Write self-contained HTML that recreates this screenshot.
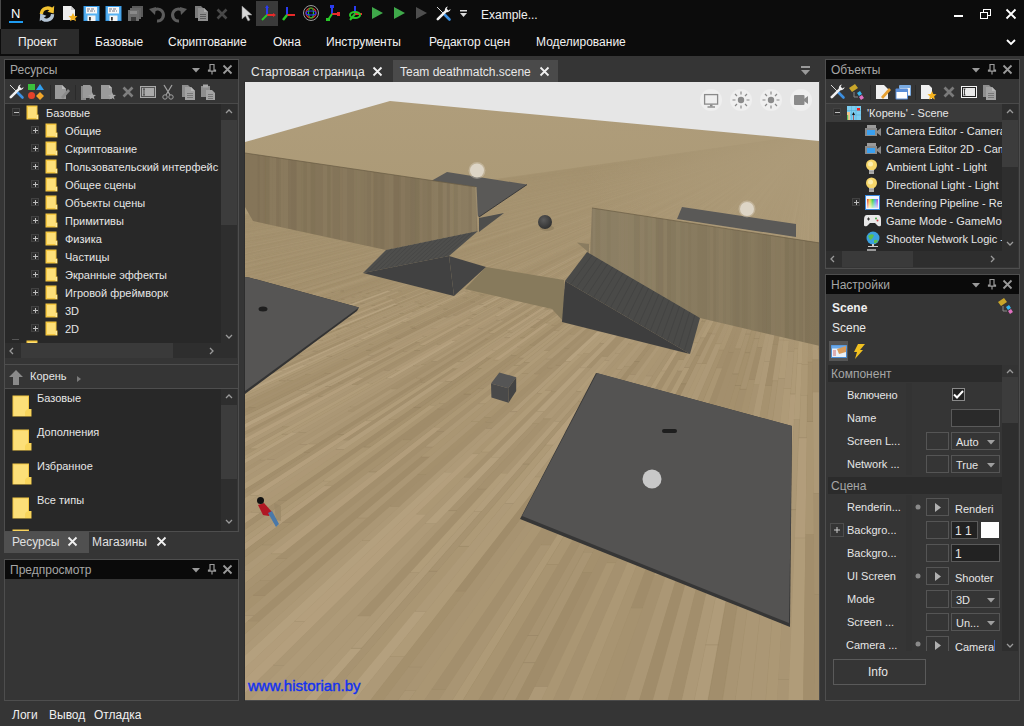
<!DOCTYPE html>
<html><head><meta charset="utf-8">
<style>
*{margin:0;padding:0;box-sizing:border-box}
html,body{width:1024px;height:726px;overflow:hidden;background:#353535;font-family:"Liberation Sans",sans-serif;font-size:11px;color:#e6e6e6}
.a{position:absolute}
.t{position:absolute;white-space:nowrap}
svg{overflow:visible}
</style></head><body>

<div class="a" style="left:0px;top:0px;width:1024px;height:56px;background:#0c0c0c;"></div>
<div class="a" style="left:0px;top:0px;width:1px;height:29px;background:#4a4a4a;"></div>
<div class="t" style="left:11px;top:5.00px;font-size:13px;line-height:17px;color:#ffffff;font-weight:normal;">N</div>
<div class="a" style="left:9px;top:21px;width:14px;height:2px;background:#1e9bf0;"></div>
<svg class="a" style="left:39px;top:5px" width="17" height="17" viewBox="0 0 17 17"><g transform="translate(-1,-1) scale(1.12)"><path d="M3 9 A5.5 5.5 0 0 1 13 6" stroke="#f2c230" stroke-width="3" fill="none"/><path d="M14.5 1.5 L14 8.5 L8.5 7 Z" fill="#f2c230"/><path d="M13 9 A5.5 5.5 0 0 1 3 12" stroke="#b4c4d4" stroke-width="3" fill="none"/><path d="M1.5 15.5 L2 8.5 L7.5 10.5 Z" fill="#b4c4d4"/></g></svg>
<svg class="a" style="left:61px;top:5px" width="17" height="17" viewBox="0 0 17 17"><path d="M2 1 H10 L14 5 V15 H2 Z" fill="#eeeeee"/><path d="M10 1 V5 H14" fill="#cccccc"/><path d="M12 8 L13.5 11 L16.5 11.3 L14.2 13.3 L15 16.3 L12 14.6 L9 16.3 L9.8 13.3 L7.5 11.3 L10.5 11 Z" fill="#f5b21e"/></svg>
<svg class="a" style="left:83px;top:5px" width="17" height="17" viewBox="0 0 17 17"><rect x="0.5" y="1" width="16" height="15" fill="#3a9be6"/><rect x="1.5" y="2" width="14" height="13" fill="#58b2f2"/><rect x="3" y="2" width="11" height="6.5" fill="#f6f6f6"/><path d="M4 4 H7 M8 4 H11 M4 6 H6 M7 6 H10 M11 6 H12" stroke="#667" stroke-width="0.9"/><rect x="4.5" y="10.5" width="8" height="5.5" fill="#f4f4f4"/><rect x="6" y="12" width="1.8" height="3.5" fill="#333"/></svg>
<svg class="a" style="left:105px;top:5px" width="17" height="17" viewBox="0 0 17 17"><rect x="0.5" y="1" width="16" height="15" fill="#3a9be6"/><rect x="1.5" y="2" width="14" height="13" fill="#58b2f2"/><rect x="3" y="2" width="11" height="6.5" fill="#f6f6f6"/><path d="M4 4 H7 M8 4 H11 M4 6 H6 M7 6 H10 M11 6 H12" stroke="#667" stroke-width="0.9"/><rect x="4.5" y="10.5" width="8" height="5.5" fill="#f4f4f4"/><rect x="6" y="12" width="1.8" height="3.5" fill="#333"/></svg>
<svg class="a" style="left:127px;top:5px" width="17" height="17" viewBox="0 0 17 17"><rect x="5" y="1" width="11" height="11" fill="#5a5a5a"/><rect x="3" y="3" width="11" height="11" fill="#666"/><rect x="1" y="5" width="11" height="11" fill="#6e6e6e"/><rect x="3" y="6" width="7" height="3" fill="#8a8a8a"/><rect x="4" y="12" width="5" height="4" fill="#3a3a3a"/></svg>
<svg class="a" style="left:149px;top:5px" width="17" height="17" viewBox="0 0 17 17"><path d="M4 6 A6 6 0 1 1 8 16" stroke="#5c5c5c" stroke-width="3" fill="none"/><path d="M0 4 L7 2 L6 10 Z" fill="#5c5c5c"/></svg>
<svg class="a" style="left:171px;top:5px" width="17" height="17" viewBox="0 0 17 17"><path d="M12 6 A6 6 0 1 0 8 16" stroke="#5c5c5c" stroke-width="3" fill="none"/><path d="M16 4 L9 2 L10 10 Z" fill="#5c5c5c"/></svg>
<svg class="a" style="left:194px;top:5px" width="17" height="17" viewBox="0 0 17 17"><path d="M1 1 H7 L10 4 V13 H1 Z" fill="#7a7a7a"/><path d="M4 3 H10 L14 7 V16 H4 Z" fill="#8e8e8e"/><path d="M10 3 V7 H14" fill="#a8a8a8"/><rect x="6" y="9" width="6" height="1" fill="#5a5a5a"/><rect x="6" y="11" width="6" height="1" fill="#5a5a5a"/><rect x="6" y="13" width="6" height="1" fill="#5a5a5a"/></svg>
<svg class="a" style="left:214px;top:6px" width="17" height="17" viewBox="0 0 17 17"><path d="M3.5 3.5 L12.5 12.5 M12.5 3.5 L3.5 12.5" stroke="#484848" stroke-width="2.6"/></svg>
<svg class="a" style="left:240px;top:5px" width="17" height="17" viewBox="0 0 17 17"><path d="M2 1 L2 14 L5.5 11 L8 16 L10 15 L7.5 10 L12 10 Z" fill="#d8d8d8" stroke="#888" stroke-width="0.5"/></svg>
<div class="a" style="left:256px;top:1px;width:22px;height:25px;background:#3a3a3a;"></div>
<svg class="a" style="left:259px;top:5px" width="17" height="17" viewBox="0 0 17 17"><path d="M8 2 V10" stroke="#2a3cf0" stroke-width="2"/><path d="M8 10 H15" stroke="#e82a2a" stroke-width="2"/><path d="M8 10 L3 15" stroke="#28c828" stroke-width="2"/><path d="M6 3 L8 0 L10 3 Z" fill="#2a3cf0"/><path d="M14 8 L17 10 L14 12Z" fill="#e82a2a"/></svg>
<svg class="a" style="left:281px;top:5px" width="17" height="17" viewBox="0 0 17 17"><path d="M6 2 V10" stroke="#2a3cf0" stroke-width="2"/><path d="M6 10 H14" stroke="#e82a2a" stroke-width="2"/><path d="M6 10 L2 15" stroke="#28c828" stroke-width="2.5"/></svg>
<svg class="a" style="left:303px;top:5px" width="17" height="17" viewBox="0 0 17 17"><circle cx="8" cy="8" r="7.5" fill="none" stroke="#9a9a9a" stroke-width="1"/><circle cx="8" cy="8" r="5" fill="none" stroke="#e02a2a" stroke-width="1.2"/><ellipse cx="8" cy="8" rx="2.5" ry="5" fill="none" stroke="#28c028" stroke-width="1.2"/><ellipse cx="8" cy="8" rx="5" ry="2" fill="none" stroke="#2a3cf0" stroke-width="1.2"/></svg>
<svg class="a" style="left:325px;top:5px" width="17" height="17" viewBox="0 0 17 17"><path d="M7 1 V9" stroke="#2a3cf0" stroke-width="2"/><path d="M7 9 H14" stroke="#e82a2a" stroke-width="2"/><path d="M7 9 L3 15" stroke="#28c828" stroke-width="2"/><rect x="5" y="0" width="4" height="3" fill="#2a3cf0"/><rect x="12" y="7" width="3" height="4" fill="#e82a2a"/><rect x="1" y="13" width="4" height="3" fill="#28c828"/></svg>
<svg class="a" style="left:347px;top:5px" width="17" height="17" viewBox="0 0 17 17"><path d="M8 1 V9" stroke="#2a3cf0" stroke-width="2"/><path d="M8 9 H15" stroke="#e82a2a" stroke-width="2"/><path d="M8 9 L3 15" stroke="#28c828" stroke-width="2"/><ellipse cx="8" cy="10" rx="5" ry="3" fill="none" stroke="#28c828" stroke-width="2"/></svg>
<svg class="a" style="left:369px;top:5px" width="17" height="17" viewBox="0 0 17 17"><path d="M3 2 L14 8 L3 14 Z" fill="#3fa94a"/></svg>
<svg class="a" style="left:391px;top:5px" width="17" height="17" viewBox="0 0 17 17"><path d="M3 2 L14 8 L3 14 Z" fill="#3fa94a"/></svg>
<svg class="a" style="left:413px;top:5px" width="17" height="17" viewBox="0 0 17 17"><path d="M3 2 L14 8 L3 14 Z" fill="#4e4e4e"/></svg>
<svg class="a" style="left:435px;top:5px" width="17" height="17" viewBox="0 0 17 17"><g transform="translate(1,1)"><path d="M1 1 L7.5 7.5" stroke="#d8d8d8" stroke-width="1"/><path d="M7.5 7.5 L13.5 13.5" stroke="#3c8fe0" stroke-width="2.6" stroke-linecap="round"/><path d="M10.2 4.8 L1.8 13.2" stroke="#f0f0f0" stroke-width="2.6" stroke-linecap="round"/><path d="M9 5 A3.6 3.6 0 0 1 12 0.4 L10.6 2.6 L12.4 4.4 L14.6 3 A3.6 3.6 0 0 1 10 6 Z" fill="#f0f0f0"/></g></svg>
<svg class="a" style="left:459px;top:9px" width="10" height="10" viewBox="0 0 10 10"><rect x="1" y="1" width="7" height="1.5" fill="#ddd"/><path d="M1 4 H8 L4.5 8 Z" fill="#ddd"/></svg>
<div class="t" style="left:481px;top:6.84px;font-size:12px;line-height:16px;color:#f0f0f0;font-weight:normal;">Example...</div>
<div class="a" style="left:954px;top:15px;width:9px;height:2px;background:#ffffff;"></div>
<svg class="a" style="left:980px;top:9px" width="11" height="11" viewBox="0 0 11 11"><rect x="3.5" y="0.5" width="7" height="6" fill="none" stroke="#fff"/><rect x="0.5" y="3.5" width="7" height="6" fill="#0c0c0c" stroke="#fff"/></svg>
<svg class="a" style="left:1006px;top:9px" width="10" height="10" viewBox="0 0 10 10"><path d="M0.5 0.5 L9.5 9.5 M9.5 0.5 L0.5 9.5" stroke="#fff" stroke-width="1.8"/></svg>
<svg class="a" style="left:1006px;top:39px" width="10" height="6" viewBox="0 0 10 6"><path d="M1 1 L5 5 L9 1" stroke="#fff" stroke-width="1.8" fill="none"/></svg>
<div class="a" style="left:1px;top:29px;width:78px;height:25px;background:#2b2b2b;"></div>
<div class="t" style="left:18px;top:33.84px;font-size:12px;line-height:16px;color:#f2f2f2;font-weight:normal;">Проект</div>
<div class="t" style="left:95px;top:33.84px;font-size:12px;line-height:16px;color:#f2f2f2;font-weight:normal;">Базовые</div>
<div class="t" style="left:168px;top:33.84px;font-size:12px;line-height:16px;color:#f2f2f2;font-weight:normal;">Скриптование</div>
<div class="t" style="left:273px;top:33.84px;font-size:12px;line-height:16px;color:#f2f2f2;font-weight:normal;">Окна</div>
<div class="t" style="left:326px;top:33.84px;font-size:12px;line-height:16px;color:#f2f2f2;font-weight:normal;">Инструменты</div>
<div class="t" style="left:429px;top:33.84px;font-size:12px;line-height:16px;color:#f2f2f2;font-weight:normal;">Редактор сцен</div>
<div class="t" style="left:536px;top:33.84px;font-size:12px;line-height:16px;color:#f2f2f2;font-weight:normal;">Моделирование</div>
<div class="a" style="left:0px;top:56px;width:1024px;height:646px;background:#353535;"></div>
<div class="a" style="left:5px;top:60px;width:233px;height:471px;background:#353535;"></div>
<div class="a" style="left:5px;top:60px;width:233px;height:19px;background:#0a0a0a;"></div>
<div class="t" style="left:10px;top:61.84px;font-size:12px;line-height:16px;color:#a6a6a6;font-weight:normal;">Ресурсы</div>
<svg class="a" style="left:192px;top:68px" width="8" height="5" viewBox="0 0 8 5"><path d="M0 0 H8 L4 4.5 Z" fill="#9a9a9a"/></svg>
<svg class="a" style="left:208px;top:64px" width="8" height="11" viewBox="0 0 8 11"><path d="M2 0.5 H6 V6 H7.5 V7.2 H0.5 V6 H2 Z" fill="none" stroke="#9a9a9a" stroke-width="1.2"/><path d="M4 7 V10.5" stroke="#9a9a9a" stroke-width="1.2"/></svg>
<svg class="a" style="left:223px;top:65px" width="9" height="9" viewBox="0 0 9 9"><path d="M0.5 0.5 L8.5 8.5 M8.5 0.5 L0.5 8.5" stroke="#9a9a9a" stroke-width="1.8"/></svg>
<div class="a" style="left:5px;top:103px;width:233px;height:1px;background:#4a4a4a;"></div>
<svg class="a" style="left:9px;top:84px" width="15" height="15" viewBox="0 0 15 15"><path d="M1 1 L7.5 7.5" stroke="#d8d8d8" stroke-width="1"/><path d="M7.5 7.5 L13.5 13.5" stroke="#3c8fe0" stroke-width="2.6" stroke-linecap="round"/><path d="M10.2 4.8 L1.8 13.2" stroke="#f0f0f0" stroke-width="2.6" stroke-linecap="round"/><path d="M9 5 A3.6 3.6 0 0 1 12 0.4 L10.6 2.6 L12.4 4.4 L14.6 3 A3.6 3.6 0 0 1 10 6 Z" fill="#f0f0f0"/></svg>
<svg class="a" style="left:28px;top:84px" width="16" height="16" viewBox="0 0 16 16"><rect x="0" y="0" width="7" height="6" fill="#3bbf3b"/><path d="M12 0 L16 6 H8 Z" fill="#2f9ff0"/><circle cx="3.5" cy="11.5" r="3.5" fill="#e5422a"/><path d="M12 8 L16 12 L12 16 L8 12 Z" fill="#f2a62a"/></svg>
<div class="a" style="left:50px;top:85px;width:1px;height:15px;background:#2a2a2a;"></div>
<svg class="a" style="left:54px;top:84px" width="16" height="16" viewBox="0 0 16 16"><path d="M1 1 H8 L12 5 V15 H1 Z" fill="#9a9a9a"/><path d="M8 1 V5 H12" fill="#bbb"/><path d="M7 13 L14 5 L16 7 L9 15 Z" fill="#8a8a8a"/></svg>
<div class="a" style="left:75px;top:85px;width:1px;height:15px;background:#2a2a2a;"></div>
<svg class="a" style="left:80px;top:84px" width="16" height="16" viewBox="0 0 16 16"><path d="M1 2 H6 V16 H1 Z" fill="#8a8a8a"/><path d="M3 1 H10 L12 3 V14 H3 Z" fill="#9a9a9a"/><path d="M12 8 L13.2 10.8 L16 11 L13.8 12.8 L14.6 15.6 L12 14 L9.4 15.6 L10.2 12.8 L8 11 L10.8 10.8 Z" fill="#a8a8a8"/></svg>
<svg class="a" style="left:100px;top:84px" width="16" height="16" viewBox="0 0 16 16"><path d="M1 1 H9 L12 4 V15 H1 Z" fill="#9a9a9a"/><path d="M9 1 V4 H12" fill="#bbb"/><path d="M12 8 L13.2 10.8 L16 11 L13.8 12.8 L14.6 15.6 L12 14 L9.4 15.6 L10.2 12.8 L8 11 L10.8 10.8 Z" fill="#a8a8a8"/></svg>
<svg class="a" style="left:122px;top:86px" width="12" height="12" viewBox="0 0 12 12"><path d="M1.5 1.5 L10.5 10.5 M10.5 1.5 L1.5 10.5" stroke="#7e7e7e" stroke-width="2.6"/></svg>
<svg class="a" style="left:140px;top:86px" width="16" height="12" viewBox="0 0 16 12"><rect x="0.5" y="0.5" width="15" height="11" fill="#555" stroke="#aaaaaa"/><rect x="2" y="2" width="12" height="8" fill="#aaaaaa"/><path d="M4 3 V9 M3 3 H5 M3 9 H5" stroke="#333" stroke-width="0.8"/></svg>
<svg class="a" style="left:161px;top:84px" width="14" height="16" viewBox="0 0 14 16"><path d="M3 1 L9 11 M11 1 L5 11" stroke="#a0a0a0" stroke-width="1.3"/><circle cx="4" cy="13" r="2.2" fill="none" stroke="#a0a0a0"/><circle cx="10" cy="13" r="2.2" fill="none" stroke="#a0a0a0"/></svg>
<svg class="a" style="left:181px;top:84px" width="15" height="16" viewBox="0 0 15 16"><path d="M1 1 H7 L10 4 V13 H1 Z" fill="#8e8e8e"/><path d="M4 3 H10 L14 7 V16 H4 Z" fill="#a2a2a2"/><path d="M10 3 V7 H14" fill="#b8b8b8"/><rect x="6" y="9" width="6" height="1" fill="#777"/><rect x="6" y="11" width="6" height="1" fill="#777"/><rect x="6" y="13" width="6" height="1" fill="#777"/></svg>
<svg class="a" style="left:200px;top:84px" width="16" height="16" viewBox="0 0 16 16"><rect x="1" y="2" width="9" height="11" fill="#8e8e8e"/><rect x="3" y="0.5" width="5" height="3" fill="#a8a8a8"/><path d="M6 6 H12 L15 9 V16 H6 Z" fill="#a4a4a4"/><rect x="8" y="10" width="5" height="1" fill="#777"/><rect x="8" y="12" width="5" height="1" fill="#777"/><rect x="8" y="14" width="5" height="1" fill="#777"/></svg>
<div class="a" style="left:5px;top:104px;width:216px;height:239px;background:#282828;"></div>
<div class="a" style="left:221px;top:104px;width:16px;height:239px;background:#2e2e2e;"></div>
<div class="a" style="left:221px;top:120px;width:16px;height:105px;background:#3c3c3c;"></div>
<svg class="a" style="left:225px;top:108px" width="8" height="8" viewBox="0 0 8 8"><path d="M1 5 L4 2 L7 5" stroke="#9a9a9a" stroke-width="1.3" fill="none"/></svg>
<svg class="a" style="left:225px;top:333px" width="8" height="8" viewBox="0 0 8 8"><path d="M1 2 L4 5 L7 2" stroke="#9a9a9a" stroke-width="1.3" fill="none"/></svg>
<svg class="a" style="left:12px;top:108px" width="8" height="8" viewBox="0 0 8 8" shape-rendering="crispEdges"><rect x="0" y="0" width="8" height="8" fill="#424242"/><rect x="1" y="1" width="6" height="6" fill="#2e2e2e"/><rect x="2" y="4" width="5" height="1" fill="#bdbdbd"/></svg>
<svg class="a" style="left:26px;top:105px" width="13" height="15" viewBox="0 0 13 15"><path d="M0.5 0.5 H11.5 V9.5 H12.5 V14.5 H0.5 Z" fill="#f3c640"/><rect x="2" y="2" width="8.5" height="11" fill="#fde07a"/><path d="M10.5 10 H12 V14 H10.5 Z" fill="#fbe9a0"/></svg>
<div class="t" style="left:46px;top:105.69px;font-size:11px;line-height:15px;color:#e6e6e6;font-weight:normal;">Базовые</div>
<svg class="a" style="left:31px;top:126px" width="8" height="8" viewBox="0 0 8 8" shape-rendering="crispEdges"><rect x="0" y="0" width="8" height="8" fill="#424242"/><rect x="1" y="1" width="6" height="6" fill="#2e2e2e"/><rect x="2" y="4" width="5" height="1" fill="#bdbdbd"/><rect x="4" y="2" width="1" height="5" fill="#bdbdbd"/></svg>
<svg class="a" style="left:45px;top:123px" width="13" height="15" viewBox="0 0 13 15"><path d="M0.5 0.5 H11.5 V9.5 H12.5 V14.5 H0.5 Z" fill="#f3c640"/><rect x="2" y="2" width="8.5" height="11" fill="#fde07a"/><path d="M10.5 10 H12 V14 H10.5 Z" fill="#fbe9a0"/></svg>
<div class="t" style="left:65px;top:123.69px;font-size:11px;line-height:15px;color:#e6e6e6;font-weight:normal;">Общие</div>
<svg class="a" style="left:31px;top:144px" width="8" height="8" viewBox="0 0 8 8" shape-rendering="crispEdges"><rect x="0" y="0" width="8" height="8" fill="#424242"/><rect x="1" y="1" width="6" height="6" fill="#2e2e2e"/><rect x="2" y="4" width="5" height="1" fill="#bdbdbd"/><rect x="4" y="2" width="1" height="5" fill="#bdbdbd"/></svg>
<svg class="a" style="left:45px;top:141px" width="13" height="15" viewBox="0 0 13 15"><path d="M0.5 0.5 H11.5 V9.5 H12.5 V14.5 H0.5 Z" fill="#f3c640"/><rect x="2" y="2" width="8.5" height="11" fill="#fde07a"/><path d="M10.5 10 H12 V14 H10.5 Z" fill="#fbe9a0"/></svg>
<div class="t" style="left:65px;top:141.69px;font-size:11px;line-height:15px;color:#e6e6e6;font-weight:normal;">Скриптование</div>
<svg class="a" style="left:31px;top:162px" width="8" height="8" viewBox="0 0 8 8" shape-rendering="crispEdges"><rect x="0" y="0" width="8" height="8" fill="#424242"/><rect x="1" y="1" width="6" height="6" fill="#2e2e2e"/><rect x="2" y="4" width="5" height="1" fill="#bdbdbd"/><rect x="4" y="2" width="1" height="5" fill="#bdbdbd"/></svg>
<svg class="a" style="left:45px;top:159px" width="13" height="15" viewBox="0 0 13 15"><path d="M0.5 0.5 H11.5 V9.5 H12.5 V14.5 H0.5 Z" fill="#f3c640"/><rect x="2" y="2" width="8.5" height="11" fill="#fde07a"/><path d="M10.5 10 H12 V14 H10.5 Z" fill="#fbe9a0"/></svg>
<div class="t" style="left:65px;top:159.69px;font-size:11px;line-height:15px;color:#e6e6e6;font-weight:normal;">Пользовательский интерфейс</div>
<svg class="a" style="left:31px;top:180px" width="8" height="8" viewBox="0 0 8 8" shape-rendering="crispEdges"><rect x="0" y="0" width="8" height="8" fill="#424242"/><rect x="1" y="1" width="6" height="6" fill="#2e2e2e"/><rect x="2" y="4" width="5" height="1" fill="#bdbdbd"/><rect x="4" y="2" width="1" height="5" fill="#bdbdbd"/></svg>
<svg class="a" style="left:45px;top:177px" width="13" height="15" viewBox="0 0 13 15"><path d="M0.5 0.5 H11.5 V9.5 H12.5 V14.5 H0.5 Z" fill="#f3c640"/><rect x="2" y="2" width="8.5" height="11" fill="#fde07a"/><path d="M10.5 10 H12 V14 H10.5 Z" fill="#fbe9a0"/></svg>
<div class="t" style="left:65px;top:177.69px;font-size:11px;line-height:15px;color:#e6e6e6;font-weight:normal;">Общее сцены</div>
<svg class="a" style="left:31px;top:198px" width="8" height="8" viewBox="0 0 8 8" shape-rendering="crispEdges"><rect x="0" y="0" width="8" height="8" fill="#424242"/><rect x="1" y="1" width="6" height="6" fill="#2e2e2e"/><rect x="2" y="4" width="5" height="1" fill="#bdbdbd"/><rect x="4" y="2" width="1" height="5" fill="#bdbdbd"/></svg>
<svg class="a" style="left:45px;top:195px" width="13" height="15" viewBox="0 0 13 15"><path d="M0.5 0.5 H11.5 V9.5 H12.5 V14.5 H0.5 Z" fill="#f3c640"/><rect x="2" y="2" width="8.5" height="11" fill="#fde07a"/><path d="M10.5 10 H12 V14 H10.5 Z" fill="#fbe9a0"/></svg>
<div class="t" style="left:65px;top:195.69px;font-size:11px;line-height:15px;color:#e6e6e6;font-weight:normal;">Объекты сцены</div>
<svg class="a" style="left:31px;top:216px" width="8" height="8" viewBox="0 0 8 8" shape-rendering="crispEdges"><rect x="0" y="0" width="8" height="8" fill="#424242"/><rect x="1" y="1" width="6" height="6" fill="#2e2e2e"/><rect x="2" y="4" width="5" height="1" fill="#bdbdbd"/><rect x="4" y="2" width="1" height="5" fill="#bdbdbd"/></svg>
<svg class="a" style="left:45px;top:213px" width="13" height="15" viewBox="0 0 13 15"><path d="M0.5 0.5 H11.5 V9.5 H12.5 V14.5 H0.5 Z" fill="#f3c640"/><rect x="2" y="2" width="8.5" height="11" fill="#fde07a"/><path d="M10.5 10 H12 V14 H10.5 Z" fill="#fbe9a0"/></svg>
<div class="t" style="left:65px;top:213.69px;font-size:11px;line-height:15px;color:#e6e6e6;font-weight:normal;">Примитивы</div>
<svg class="a" style="left:31px;top:234px" width="8" height="8" viewBox="0 0 8 8" shape-rendering="crispEdges"><rect x="0" y="0" width="8" height="8" fill="#424242"/><rect x="1" y="1" width="6" height="6" fill="#2e2e2e"/><rect x="2" y="4" width="5" height="1" fill="#bdbdbd"/><rect x="4" y="2" width="1" height="5" fill="#bdbdbd"/></svg>
<svg class="a" style="left:45px;top:231px" width="13" height="15" viewBox="0 0 13 15"><path d="M0.5 0.5 H11.5 V9.5 H12.5 V14.5 H0.5 Z" fill="#f3c640"/><rect x="2" y="2" width="8.5" height="11" fill="#fde07a"/><path d="M10.5 10 H12 V14 H10.5 Z" fill="#fbe9a0"/></svg>
<div class="t" style="left:65px;top:231.69px;font-size:11px;line-height:15px;color:#e6e6e6;font-weight:normal;">Физика</div>
<svg class="a" style="left:31px;top:252px" width="8" height="8" viewBox="0 0 8 8" shape-rendering="crispEdges"><rect x="0" y="0" width="8" height="8" fill="#424242"/><rect x="1" y="1" width="6" height="6" fill="#2e2e2e"/><rect x="2" y="4" width="5" height="1" fill="#bdbdbd"/><rect x="4" y="2" width="1" height="5" fill="#bdbdbd"/></svg>
<svg class="a" style="left:45px;top:249px" width="13" height="15" viewBox="0 0 13 15"><path d="M0.5 0.5 H11.5 V9.5 H12.5 V14.5 H0.5 Z" fill="#f3c640"/><rect x="2" y="2" width="8.5" height="11" fill="#fde07a"/><path d="M10.5 10 H12 V14 H10.5 Z" fill="#fbe9a0"/></svg>
<div class="t" style="left:65px;top:249.69px;font-size:11px;line-height:15px;color:#e6e6e6;font-weight:normal;">Частицы</div>
<svg class="a" style="left:31px;top:270px" width="8" height="8" viewBox="0 0 8 8" shape-rendering="crispEdges"><rect x="0" y="0" width="8" height="8" fill="#424242"/><rect x="1" y="1" width="6" height="6" fill="#2e2e2e"/><rect x="2" y="4" width="5" height="1" fill="#bdbdbd"/><rect x="4" y="2" width="1" height="5" fill="#bdbdbd"/></svg>
<svg class="a" style="left:45px;top:267px" width="13" height="15" viewBox="0 0 13 15"><path d="M0.5 0.5 H11.5 V9.5 H12.5 V14.5 H0.5 Z" fill="#f3c640"/><rect x="2" y="2" width="8.5" height="11" fill="#fde07a"/><path d="M10.5 10 H12 V14 H10.5 Z" fill="#fbe9a0"/></svg>
<div class="t" style="left:65px;top:267.69px;font-size:11px;line-height:15px;color:#e6e6e6;font-weight:normal;">Экранные эффекты</div>
<svg class="a" style="left:31px;top:288px" width="8" height="8" viewBox="0 0 8 8" shape-rendering="crispEdges"><rect x="0" y="0" width="8" height="8" fill="#424242"/><rect x="1" y="1" width="6" height="6" fill="#2e2e2e"/><rect x="2" y="4" width="5" height="1" fill="#bdbdbd"/><rect x="4" y="2" width="1" height="5" fill="#bdbdbd"/></svg>
<svg class="a" style="left:45px;top:285px" width="13" height="15" viewBox="0 0 13 15"><path d="M0.5 0.5 H11.5 V9.5 H12.5 V14.5 H0.5 Z" fill="#f3c640"/><rect x="2" y="2" width="8.5" height="11" fill="#fde07a"/><path d="M10.5 10 H12 V14 H10.5 Z" fill="#fbe9a0"/></svg>
<div class="t" style="left:65px;top:285.69px;font-size:11px;line-height:15px;color:#e6e6e6;font-weight:normal;">Игровой фреймворк</div>
<svg class="a" style="left:31px;top:306px" width="8" height="8" viewBox="0 0 8 8" shape-rendering="crispEdges"><rect x="0" y="0" width="8" height="8" fill="#424242"/><rect x="1" y="1" width="6" height="6" fill="#2e2e2e"/><rect x="2" y="4" width="5" height="1" fill="#bdbdbd"/><rect x="4" y="2" width="1" height="5" fill="#bdbdbd"/></svg>
<svg class="a" style="left:45px;top:303px" width="13" height="15" viewBox="0 0 13 15"><path d="M0.5 0.5 H11.5 V9.5 H12.5 V14.5 H0.5 Z" fill="#f3c640"/><rect x="2" y="2" width="8.5" height="11" fill="#fde07a"/><path d="M10.5 10 H12 V14 H10.5 Z" fill="#fbe9a0"/></svg>
<div class="t" style="left:65px;top:303.69px;font-size:11px;line-height:15px;color:#e6e6e6;font-weight:normal;">3D</div>
<svg class="a" style="left:31px;top:324px" width="8" height="8" viewBox="0 0 8 8" shape-rendering="crispEdges"><rect x="0" y="0" width="8" height="8" fill="#424242"/><rect x="1" y="1" width="6" height="6" fill="#2e2e2e"/><rect x="2" y="4" width="5" height="1" fill="#bdbdbd"/><rect x="4" y="2" width="1" height="5" fill="#bdbdbd"/></svg>
<svg class="a" style="left:45px;top:321px" width="13" height="15" viewBox="0 0 13 15"><path d="M0.5 0.5 H11.5 V9.5 H12.5 V14.5 H0.5 Z" fill="#f3c640"/><rect x="2" y="2" width="8.5" height="11" fill="#fde07a"/><path d="M10.5 10 H12 V14 H10.5 Z" fill="#fbe9a0"/></svg>
<div class="t" style="left:65px;top:321.69px;font-size:11px;line-height:15px;color:#e6e6e6;font-weight:normal;">2D</div>
<div class="a" style="left:5px;top:339px;width:216px;height:4px;overflow:hidden"><div class="a" style="left:7px;top:0;width:7px;height:1px;background:#555"></div><svg class="a" style="left:21px;top:1px" width="13" height="15" viewBox="0 0 13 15"><path d="M0.5 0.5 H11.5 V9.5 H12.5 V14.5 H0.5 Z" fill="#f3c640"/><rect x="2" y="2" width="8.5" height="11" fill="#fde07a"/><path d="M10.5 10 H12 V14 H10.5 Z" fill="#fbe9a0"/></svg></div>
<div class="a" style="left:5px;top:343px;width:232px;height:15px;background:#2e2e2e;"></div>
<div class="a" style="left:21px;top:343px;width:152px;height:15px;background:#3a3a3a;"></div>
<svg class="a" style="left:8px;top:347px" width="8" height="8" viewBox="0 0 8 8"><path d="M5 1 L2 4 L5 7" stroke="#9a9a9a" stroke-width="1.3" fill="none"/></svg>
<svg class="a" style="left:208px;top:347px" width="8" height="8" viewBox="0 0 8 8"><path d="M2 1 L5 4 L2 7" stroke="#9a9a9a" stroke-width="1.3" fill="none"/></svg>
<div class="a" style="left:5px;top:358px;width:233px;height:6px;background:#353535;"></div>
<div class="a" style="left:5px;top:364px;width:233px;height:1px;background:#4e4e4e;"></div>
<div class="a" style="left:5px;top:365px;width:233px;height:23px;background:#353535;"></div>
<svg class="a" style="left:9px;top:370px" width="14" height="15" viewBox="0 0 14 15"><path d="M7 0 L14 7 H10 V15 H4 V7 H0 Z" fill="#8a8a8a"/></svg>
<div class="t" style="left:30px;top:368.69px;font-size:11px;line-height:15px;color:#e6e6e6;font-weight:normal;">Корень</div>
<svg class="a" style="left:77px;top:376px" width="4" height="6" viewBox="0 0 4 6"><path d="M0 0 L4 3 L0 6 Z" fill="#7a7a7a"/></svg>
<div class="a" style="left:5px;top:388px;width:233px;height:1px;background:#4e4e4e;"></div>
<div class="a" style="left:5px;top:389px;width:216px;height:142px;background:#282828;"></div>
<div class="a" style="left:221px;top:389px;width:16px;height:142px;background:#2e2e2e;"></div>
<div class="a" style="left:221px;top:405px;width:16px;height:74px;background:#3c3c3c;"></div>
<svg class="a" style="left:225px;top:393px" width="8" height="8" viewBox="0 0 8 8"><path d="M1 5 L4 2 L7 5" stroke="#9a9a9a" stroke-width="1.3" fill="none"/></svg>
<svg class="a" style="left:225px;top:518px" width="8" height="8" viewBox="0 0 8 8"><path d="M1 2 L4 5 L7 2" stroke="#9a9a9a" stroke-width="1.3" fill="none"/></svg>
<svg class="a" style="left:12px;top:395px" width="20" height="22" viewBox="0 0 20 22"><path d="M0.5 0.5 H17 V14 H19.5 V21.5 H0.5 Z" fill="#f2c744"/><path d="M1.5 1.5 H16 V21 H1.5 Z" fill="#fcdf78"/><path d="M13 21 V17 Q14 14 17 14 H19 V21 Z" fill="#f8d55c"/></svg>
<div class="t" style="left:37px;top:390.69px;font-size:11px;line-height:15px;color:#e6e6e6;font-weight:normal;">Базовые</div>
<svg class="a" style="left:12px;top:429px" width="20" height="22" viewBox="0 0 20 22"><path d="M0.5 0.5 H17 V14 H19.5 V21.5 H0.5 Z" fill="#f2c744"/><path d="M1.5 1.5 H16 V21 H1.5 Z" fill="#fcdf78"/><path d="M13 21 V17 Q14 14 17 14 H19 V21 Z" fill="#f8d55c"/></svg>
<div class="t" style="left:37px;top:424.69px;font-size:11px;line-height:15px;color:#e6e6e6;font-weight:normal;">Дополнения</div>
<svg class="a" style="left:12px;top:463px" width="20" height="22" viewBox="0 0 20 22"><path d="M0.5 0.5 H17 V14 H19.5 V21.5 H0.5 Z" fill="#f2c744"/><path d="M1.5 1.5 H16 V21 H1.5 Z" fill="#fcdf78"/><path d="M13 21 V17 Q14 14 17 14 H19 V21 Z" fill="#f8d55c"/></svg>
<div class="t" style="left:37px;top:458.69px;font-size:11px;line-height:15px;color:#e6e6e6;font-weight:normal;">Избранное</div>
<svg class="a" style="left:12px;top:497px" width="20" height="22" viewBox="0 0 20 22"><path d="M0.5 0.5 H17 V14 H19.5 V21.5 H0.5 Z" fill="#f2c744"/><path d="M1.5 1.5 H16 V21 H1.5 Z" fill="#fcdf78"/><path d="M13 21 V17 Q14 14 17 14 H19 V21 Z" fill="#f8d55c"/></svg>
<div class="t" style="left:37px;top:492.69px;font-size:11px;line-height:15px;color:#e6e6e6;font-weight:normal;">Все типы</div>
<div class="a" style="left:5px;top:529px;width:216px;height:2px;overflow:hidden"><svg class="a" style="left:7px;top:0px" width="20" height="22" viewBox="0 0 20 22"><path d="M0.5 0.5 H17 V14 H19.5 V21.5 H0.5 Z" fill="#f2c744"/><path d="M1.5 1.5 H16 V21 H1.5 Z" fill="#fcdf78"/><path d="M13 21 V17 Q14 14 17 14 H19 V21 Z" fill="#f8d55c"/></svg></div>
<div class="a" style="left:4px;top:59px;width:235px;height:473px;border:1px solid #4e4e4e"></div>
<div class="a" style="left:4px;top:532px;width:85px;height:21px;background:#505050;"></div>
<div class="t" style="left:12px;top:533.84px;font-size:12px;line-height:16px;color:#e0e0e0;font-weight:normal;">Ресурсы</div>
<svg class="a" style="left:68px;top:537px" width="9" height="9" viewBox="0 0 9 9"><path d="M0.5 0.5 L8.5 8.5 M8.5 0.5 L0.5 8.5" stroke="#f0f0f0" stroke-width="1.8"/></svg>
<div class="t" style="left:92px;top:533.84px;font-size:12px;line-height:16px;color:#e0e0e0;font-weight:normal;">Магазины</div>
<svg class="a" style="left:157px;top:537px" width="9" height="9" viewBox="0 0 9 9"><path d="M0.5 0.5 L8.5 8.5 M8.5 0.5 L0.5 8.5" stroke="#f0f0f0" stroke-width="1.8"/></svg>
<div class="a" style="left:5px;top:560px;width:233px;height:140px;background:#353535;"></div>
<div class="a" style="left:5px;top:560px;width:233px;height:19px;background:#0a0a0a;"></div>
<div class="t" style="left:10px;top:561.84px;font-size:12px;line-height:16px;color:#a6a6a6;font-weight:normal;">Предпросмотр</div>
<svg class="a" style="left:192px;top:568px" width="8" height="5" viewBox="0 0 8 5"><path d="M0 0 H8 L4 4.5 Z" fill="#9a9a9a"/></svg>
<svg class="a" style="left:208px;top:564px" width="8" height="11" viewBox="0 0 8 11"><path d="M2 0.5 H6 V6 H7.5 V7.2 H0.5 V6 H2 Z" fill="none" stroke="#9a9a9a" stroke-width="1.2"/><path d="M4 7 V10.5" stroke="#9a9a9a" stroke-width="1.2"/></svg>
<svg class="a" style="left:223px;top:565px" width="9" height="9" viewBox="0 0 9 9"><path d="M0.5 0.5 L8.5 8.5 M8.5 0.5 L0.5 8.5" stroke="#9a9a9a" stroke-width="1.8"/></svg>
<div class="a" style="left:4px;top:559px;width:235px;height:142px;border:1px solid #4e4e4e"></div>
<div class="a" style="left:245px;top:60px;width:148px;height:22px;background:#353535;"></div>
<div class="t" style="left:251px;top:63.84px;font-size:12px;line-height:16px;color:#e8e8e8;font-weight:normal;">Стартовая страница</div>
<svg class="a" style="left:373px;top:67px" width="9" height="9" viewBox="0 0 9 9"><path d="M0.5 0.5 L8.5 8.5 M8.5 0.5 L0.5 8.5" stroke="#f0f0f0" stroke-width="1.8"/></svg>
<div class="a" style="left:393px;top:60px;width:165px;height:22px;background:#4a4a4a;"></div>
<div class="t" style="left:400px;top:63.84px;font-size:12px;line-height:16px;color:#e8e8e8;font-weight:normal;">Team deathmatch.scene</div>
<svg class="a" style="left:540px;top:67px" width="9" height="9" viewBox="0 0 9 9"><path d="M0.5 0.5 L8.5 8.5 M8.5 0.5 L0.5 8.5" stroke="#f0f0f0" stroke-width="1.8"/></svg>
<svg class="a" style="left:801px;top:66px" width="9" height="10" viewBox="0 0 9 10"><rect x="0" y="0" width="9" height="2" fill="#9a9a9a"/><path d="M0 4 H9 L4.5 9 Z" fill="#9a9a9a"/></svg>
<svg class="a" style="left:245px;top:82px;overflow:hidden" width="574" height="618" viewBox="245 82 574 618">
<defs>
<linearGradient id="fl" x1="0" y1="100" x2="0" y2="700" gradientUnits="userSpaceOnUse">
<stop offset="0" stop-color="#a89672"/><stop offset="1" stop-color="#a89672"/>
</linearGradient>
<linearGradient id="w1" x1="245" y1="0" x2="478" y2="0" gradientUnits="userSpaceOnUse">
<stop offset="0" stop-color="#857559"/><stop offset="0.7" stop-color="#837459"/><stop offset="1" stop-color="#8d7e62"/>
</linearGradient>
<linearGradient id="w2" x1="590" y1="0" x2="820" y2="0" gradientUnits="userSpaceOnUse">
<stop offset="0" stop-color="#8d8065"/><stop offset="1" stop-color="#837559"/>
</linearGradient>
<radialGradient id="sph" cx="0.4" cy="0.35" r="0.7">
<stop offset="0" stop-color="#5a5a5a"/><stop offset="1" stop-color="#2e2e2e"/>
</radialGradient>
<linearGradient id="flo" x1="0" y1="100" x2="0" y2="700" gradientUnits="userSpaceOnUse"><stop offset="0" stop-color="#b09e7c" stop-opacity="0.9"/><stop offset="0.12" stop-color="#b09e7c" stop-opacity="0.55"/><stop offset="0.38" stop-color="#aa9876" stop-opacity="0"/><stop offset="1" stop-color="#aa9876" stop-opacity="0"/></linearGradient><radialGradient id="vpg" cx="811" cy="135" r="230" gradientUnits="userSpaceOnUse"><stop offset="0" stop-color="#ad9b79" stop-opacity="0.95"/><stop offset="0.5" stop-color="#ad9b79" stop-opacity="0.5"/><stop offset="1" stop-color="#ad9b79" stop-opacity="0"/></radialGradient>
<clipPath id="cw1"><polygon points="245,153 476,187 478,231 386,250 253,221 245,207"/></clipPath><clipPath id="cw2"><polygon points="592,208 820,243 820,346 700,318 589,282"/></clipPath>
</defs>
<rect x="245" y="82" width="575" height="618" fill="url(#fl)"/>
<g id="planks"><path d="M811 135 L-3200.0 700 L-3188.2 700 Z" fill="rgb(171,151,117)"/><path d="M811 135 L-3200.0 700" stroke="#8a7758" stroke-opacity="0.25" stroke-width="0.7"/><path d="M811 135 L-3188.2 700 L-3174.0 700 Z" fill="rgb(174,154,119)"/><path d="M811 135 L-3188.2 700" stroke="#8a7758" stroke-opacity="0.25" stroke-width="0.7"/><path d="M811 135 L-3174.0 700 L-3158.8 700 Z" fill="rgb(174,154,119)"/><path d="M811 135 L-3174.0 700" stroke="#8a7758" stroke-opacity="0.25" stroke-width="0.7"/><path d="M811 135 L-3158.8 700 L-3143.7 700 Z" fill="rgb(176,156,122)"/><path d="M811 135 L-3158.8 700" stroke="#8a7758" stroke-opacity="0.25" stroke-width="0.7"/><path d="M811 135 L-3143.7 700 L-3131.8 700 Z" fill="rgb(176,156,122)"/><path d="M811 135 L-3143.7 700" stroke="#8a7758" stroke-opacity="0.25" stroke-width="0.7"/><path d="M811 135 L-3131.8 700 L-3119.6 700 Z" fill="rgb(162,142,108)"/><path d="M811 135 L-3131.8 700" stroke="#8a7758" stroke-opacity="0.25" stroke-width="0.7"/><path d="M811 135 L-3119.6 700 L-3108.6 700 Z" fill="rgb(171,151,117)"/><path d="M811 135 L-3119.6 700" stroke="#8a7758" stroke-opacity="0.25" stroke-width="0.7"/><path d="M811 135 L-3108.6 700 L-3097.2 700 Z" fill="rgb(167,147,113)"/><path d="M811 135 L-3108.6 700" stroke="#8a7758" stroke-opacity="0.25" stroke-width="0.7"/><path d="M811 135 L-3097.2 700 L-3081.6 700 Z" fill="rgb(162,142,108)"/><path d="M811 135 L-3097.2 700" stroke="#8a7758" stroke-opacity="0.25" stroke-width="0.7"/><path d="M811 135 L-3081.6 700 L-3068.4 700 Z" fill="rgb(171,151,117)"/><path d="M811 135 L-3081.6 700" stroke="#8a7758" stroke-opacity="0.25" stroke-width="0.7"/><path d="M811 135 L-3068.4 700 L-3054.4 700 Z" fill="rgb(162,142,108)"/><path d="M811 135 L-3068.4 700" stroke="#8a7758" stroke-opacity="0.25" stroke-width="0.7"/><path d="M811 135 L-3054.4 700 L-3038.6 700 Z" fill="rgb(176,156,122)"/><path d="M811 135 L-3054.4 700" stroke="#8a7758" stroke-opacity="0.25" stroke-width="0.7"/><path d="M811 135 L-3038.6 700 L-3025.1 700 Z" fill="rgb(164,144,109)"/><path d="M811 135 L-3038.6 700" stroke="#8a7758" stroke-opacity="0.25" stroke-width="0.7"/><path d="M811 135 L-3025.1 700 L-3010.8 700 Z" fill="rgb(169,149,115)"/><path d="M811 135 L-3025.1 700" stroke="#8a7758" stroke-opacity="0.25" stroke-width="0.7"/><path d="M811 135 L-3010.8 700 L-2999.7 700 Z" fill="rgb(164,144,109)"/><path d="M811 135 L-3010.8 700" stroke="#8a7758" stroke-opacity="0.25" stroke-width="0.7"/><path d="M811 135 L-2999.7 700 L-2988.1 700 Z" fill="rgb(162,142,108)"/><path d="M811 135 L-2999.7 700" stroke="#8a7758" stroke-opacity="0.25" stroke-width="0.7"/><path d="M811 135 L-2988.1 700 L-2974.8 700 Z" fill="rgb(176,156,122)"/><path d="M811 135 L-2988.1 700" stroke="#8a7758" stroke-opacity="0.25" stroke-width="0.7"/><path d="M811 135 L-2974.8 700 L-2960.2 700 Z" fill="rgb(171,151,117)"/><path d="M811 135 L-2974.8 700" stroke="#8a7758" stroke-opacity="0.25" stroke-width="0.7"/><path d="M811 135 L-2960.2 700 L-2946.8 700 Z" fill="rgb(166,146,111)"/><path d="M811 135 L-2960.2 700" stroke="#8a7758" stroke-opacity="0.25" stroke-width="0.7"/><path d="M811 135 L-2946.8 700 L-2932.4 700 Z" fill="rgb(174,154,119)"/><path d="M811 135 L-2946.8 700" stroke="#8a7758" stroke-opacity="0.25" stroke-width="0.7"/><path d="M811 135 L-2932.4 700 L-2917.1 700 Z" fill="rgb(167,147,113)"/><path d="M811 135 L-2932.4 700" stroke="#8a7758" stroke-opacity="0.25" stroke-width="0.7"/><path d="M811 135 L-2917.1 700 L-2905.7 700 Z" fill="rgb(167,147,113)"/><path d="M811 135 L-2917.1 700" stroke="#8a7758" stroke-opacity="0.25" stroke-width="0.7"/><path d="M811 135 L-2905.7 700 L-2893.7 700 Z" fill="rgb(164,144,109)"/><path d="M811 135 L-2905.7 700" stroke="#8a7758" stroke-opacity="0.25" stroke-width="0.7"/><path d="M811 135 L-2893.7 700 L-2882.1 700 Z" fill="rgb(174,154,119)"/><path d="M811 135 L-2893.7 700" stroke="#8a7758" stroke-opacity="0.25" stroke-width="0.7"/><path d="M811 135 L-2882.1 700 L-2868.3 700 Z" fill="rgb(171,151,117)"/><path d="M811 135 L-2882.1 700" stroke="#8a7758" stroke-opacity="0.25" stroke-width="0.7"/><path d="M811 135 L-2868.3 700 L-2856.3 700 Z" fill="rgb(166,146,111)"/><path d="M811 135 L-2868.3 700" stroke="#8a7758" stroke-opacity="0.25" stroke-width="0.7"/><path d="M811 135 L-2856.3 700 L-2840.8 700 Z" fill="rgb(171,151,117)"/><path d="M811 135 L-2856.3 700" stroke="#8a7758" stroke-opacity="0.25" stroke-width="0.7"/><path d="M811 135 L-2840.8 700 L-2828.4 700 Z" fill="rgb(174,154,119)"/><path d="M811 135 L-2840.8 700" stroke="#8a7758" stroke-opacity="0.25" stroke-width="0.7"/><path d="M811 135 L-2828.4 700 L-2814.9 700 Z" fill="rgb(169,149,115)"/><path d="M811 135 L-2828.4 700" stroke="#8a7758" stroke-opacity="0.25" stroke-width="0.7"/><path d="M811 135 L-2814.9 700 L-2798.9 700 Z" fill="rgb(171,151,117)"/><path d="M811 135 L-2814.9 700" stroke="#8a7758" stroke-opacity="0.25" stroke-width="0.7"/><path d="M811 135 L-2798.9 700 L-2786.6 700 Z" fill="rgb(164,144,109)"/><path d="M811 135 L-2798.9 700" stroke="#8a7758" stroke-opacity="0.25" stroke-width="0.7"/><path d="M811 135 L-2786.6 700 L-2774.8 700 Z" fill="rgb(174,154,119)"/><path d="M811 135 L-2786.6 700" stroke="#8a7758" stroke-opacity="0.25" stroke-width="0.7"/><path d="M811 135 L-2774.8 700 L-2763.8 700 Z" fill="rgb(164,144,109)"/><path d="M811 135 L-2774.8 700" stroke="#8a7758" stroke-opacity="0.25" stroke-width="0.7"/><path d="M811 135 L-2763.8 700 L-2750.0 700 Z" fill="rgb(176,156,122)"/><path d="M811 135 L-2763.8 700" stroke="#8a7758" stroke-opacity="0.25" stroke-width="0.7"/><path d="M811 135 L-2750.0 700 L-2737.9 700 Z" fill="rgb(169,149,115)"/><path d="M811 135 L-2750.0 700" stroke="#8a7758" stroke-opacity="0.25" stroke-width="0.7"/><path d="M811 135 L-2737.9 700 L-2724.1 700 Z" fill="rgb(164,144,109)"/><path d="M811 135 L-2737.9 700" stroke="#8a7758" stroke-opacity="0.25" stroke-width="0.7"/><path d="M811 135 L-2724.1 700 L-2712.2 700 Z" fill="rgb(166,146,111)"/><path d="M811 135 L-2724.1 700" stroke="#8a7758" stroke-opacity="0.25" stroke-width="0.7"/><path d="M811 135 L-2712.2 700 L-2698.1 700 Z" fill="rgb(169,149,115)"/><path d="M811 135 L-2712.2 700" stroke="#8a7758" stroke-opacity="0.25" stroke-width="0.7"/><path d="M811 135 L-2698.1 700 L-2685.4 700 Z" fill="rgb(167,147,113)"/><path d="M811 135 L-2698.1 700" stroke="#8a7758" stroke-opacity="0.25" stroke-width="0.7"/><path d="M811 135 L-2685.4 700 L-2673.1 700 Z" fill="rgb(166,146,111)"/><path d="M811 135 L-2685.4 700" stroke="#8a7758" stroke-opacity="0.25" stroke-width="0.7"/><path d="M811 135 L-2673.1 700 L-2661.8 700 Z" fill="rgb(166,146,111)"/><path d="M811 135 L-2673.1 700" stroke="#8a7758" stroke-opacity="0.25" stroke-width="0.7"/><path d="M811 135 L-2661.8 700 L-2646.9 700 Z" fill="rgb(169,149,115)"/><path d="M811 135 L-2661.8 700" stroke="#8a7758" stroke-opacity="0.25" stroke-width="0.7"/><path d="M811 135 L-2646.9 700 L-2635.1 700 Z" fill="rgb(162,142,108)"/><path d="M811 135 L-2646.9 700" stroke="#8a7758" stroke-opacity="0.25" stroke-width="0.7"/><path d="M811 135 L-2635.1 700 L-2620.7 700 Z" fill="rgb(167,147,113)"/><path d="M811 135 L-2635.1 700" stroke="#8a7758" stroke-opacity="0.25" stroke-width="0.7"/><path d="M811 135 L-2620.7 700 L-2607.7 700 Z" fill="rgb(166,146,111)"/><path d="M811 135 L-2620.7 700" stroke="#8a7758" stroke-opacity="0.25" stroke-width="0.7"/><path d="M811 135 L-2607.7 700 L-2591.9 700 Z" fill="rgb(162,142,108)"/><path d="M811 135 L-2607.7 700" stroke="#8a7758" stroke-opacity="0.25" stroke-width="0.7"/><path d="M811 135 L-2591.9 700 L-2576.5 700 Z" fill="rgb(174,154,119)"/><path d="M811 135 L-2591.9 700" stroke="#8a7758" stroke-opacity="0.25" stroke-width="0.7"/><path d="M811 135 L-2576.5 700 L-2562.9 700 Z" fill="rgb(167,147,113)"/><path d="M811 135 L-2576.5 700" stroke="#8a7758" stroke-opacity="0.25" stroke-width="0.7"/><path d="M811 135 L-2562.9 700 L-2547.3 700 Z" fill="rgb(167,147,113)"/><path d="M811 135 L-2562.9 700" stroke="#8a7758" stroke-opacity="0.25" stroke-width="0.7"/><path d="M811 135 L-2547.3 700 L-2535.5 700 Z" fill="rgb(164,144,109)"/><path d="M811 135 L-2547.3 700" stroke="#8a7758" stroke-opacity="0.25" stroke-width="0.7"/><path d="M811 135 L-2535.5 700 L-2522.3 700 Z" fill="rgb(171,151,117)"/><path d="M811 135 L-2535.5 700" stroke="#8a7758" stroke-opacity="0.25" stroke-width="0.7"/><path d="M811 135 L-2522.3 700 L-2507.4 700 Z" fill="rgb(174,154,119)"/><path d="M811 135 L-2522.3 700" stroke="#8a7758" stroke-opacity="0.25" stroke-width="0.7"/><path d="M811 135 L-2507.4 700 L-2496.1 700 Z" fill="rgb(167,147,113)"/><path d="M811 135 L-2507.4 700" stroke="#8a7758" stroke-opacity="0.25" stroke-width="0.7"/><path d="M811 135 L-2496.1 700 L-2484.8 700 Z" fill="rgb(167,147,113)"/><path d="M811 135 L-2496.1 700" stroke="#8a7758" stroke-opacity="0.25" stroke-width="0.7"/><path d="M811 135 L-2484.8 700 L-2470.5 700 Z" fill="rgb(162,142,108)"/><path d="M811 135 L-2484.8 700" stroke="#8a7758" stroke-opacity="0.25" stroke-width="0.7"/><path d="M811 135 L-2470.5 700 L-2457.5 700 Z" fill="rgb(166,146,111)"/><path d="M811 135 L-2470.5 700" stroke="#8a7758" stroke-opacity="0.25" stroke-width="0.7"/><path d="M811 135 L-2457.5 700 L-2444.5 700 Z" fill="rgb(169,149,115)"/><path d="M811 135 L-2457.5 700" stroke="#8a7758" stroke-opacity="0.25" stroke-width="0.7"/><path d="M811 135 L-2444.5 700 L-2430.3 700 Z" fill="rgb(166,146,111)"/><path d="M811 135 L-2444.5 700" stroke="#8a7758" stroke-opacity="0.25" stroke-width="0.7"/><path d="M811 135 L-2430.3 700 L-2414.3 700 Z" fill="rgb(174,154,119)"/><path d="M811 135 L-2430.3 700" stroke="#8a7758" stroke-opacity="0.25" stroke-width="0.7"/><path d="M811 135 L-2414.3 700 L-2403.1 700 Z" fill="rgb(166,146,111)"/><path d="M811 135 L-2414.3 700" stroke="#8a7758" stroke-opacity="0.25" stroke-width="0.7"/><path d="M811 135 L-2403.1 700 L-2387.3 700 Z" fill="rgb(176,156,122)"/><path d="M811 135 L-2403.1 700" stroke="#8a7758" stroke-opacity="0.25" stroke-width="0.7"/><path d="M811 135 L-2387.3 700 L-2371.7 700 Z" fill="rgb(174,154,119)"/><path d="M811 135 L-2387.3 700" stroke="#8a7758" stroke-opacity="0.25" stroke-width="0.7"/><path d="M811 135 L-2371.7 700 L-2360.6 700 Z" fill="rgb(167,147,113)"/><path d="M811 135 L-2371.7 700" stroke="#8a7758" stroke-opacity="0.25" stroke-width="0.7"/><path d="M811 135 L-2360.6 700 L-2345.1 700 Z" fill="rgb(169,149,115)"/><path d="M811 135 L-2360.6 700" stroke="#8a7758" stroke-opacity="0.25" stroke-width="0.7"/><path d="M811 135 L-2345.1 700 L-2330.1 700 Z" fill="rgb(169,149,115)"/><path d="M811 135 L-2345.1 700" stroke="#8a7758" stroke-opacity="0.25" stroke-width="0.7"/><path d="M811 135 L-2330.1 700 L-2316.1 700 Z" fill="rgb(171,151,117)"/><path d="M811 135 L-2330.1 700" stroke="#8a7758" stroke-opacity="0.25" stroke-width="0.7"/><path d="M811 135 L-2316.1 700 L-2302.7 700 Z" fill="rgb(174,154,119)"/><path d="M811 135 L-2316.1 700" stroke="#8a7758" stroke-opacity="0.25" stroke-width="0.7"/><path d="M811 135 L-2302.7 700 L-2290.2 700 Z" fill="rgb(176,156,122)"/><path d="M811 135 L-2302.7 700" stroke="#8a7758" stroke-opacity="0.25" stroke-width="0.7"/><path d="M811 135 L-2290.2 700 L-2276.2 700 Z" fill="rgb(166,146,111)"/><path d="M811 135 L-2290.2 700" stroke="#8a7758" stroke-opacity="0.25" stroke-width="0.7"/><path d="M811 135 L-2276.2 700 L-2261.4 700 Z" fill="rgb(162,142,108)"/><path d="M811 135 L-2276.2 700" stroke="#8a7758" stroke-opacity="0.25" stroke-width="0.7"/><path d="M811 135 L-2261.4 700 L-2248.5 700 Z" fill="rgb(166,146,111)"/><path d="M811 135 L-2261.4 700" stroke="#8a7758" stroke-opacity="0.25" stroke-width="0.7"/><path d="M811 135 L-2248.5 700 L-2232.7 700 Z" fill="rgb(162,142,108)"/><path d="M811 135 L-2248.5 700" stroke="#8a7758" stroke-opacity="0.25" stroke-width="0.7"/><path d="M811 135 L-2232.7 700 L-2220.4 700 Z" fill="rgb(169,149,115)"/><path d="M811 135 L-2232.7 700" stroke="#8a7758" stroke-opacity="0.25" stroke-width="0.7"/><path d="M811 135 L-2220.4 700 L-2206.1 700 Z" fill="rgb(171,151,117)"/><path d="M811 135 L-2220.4 700" stroke="#8a7758" stroke-opacity="0.25" stroke-width="0.7"/><path d="M811 135 L-2206.1 700 L-2193.9 700 Z" fill="rgb(171,151,117)"/><path d="M811 135 L-2206.1 700" stroke="#8a7758" stroke-opacity="0.25" stroke-width="0.7"/><path d="M811 135 L-2193.9 700 L-2179.1 700 Z" fill="rgb(166,146,111)"/><path d="M811 135 L-2193.9 700" stroke="#8a7758" stroke-opacity="0.25" stroke-width="0.7"/><path d="M811 135 L-2179.1 700 L-2167.4 700 Z" fill="rgb(164,144,109)"/><path d="M811 135 L-2179.1 700" stroke="#8a7758" stroke-opacity="0.25" stroke-width="0.7"/><path d="M811 135 L-2167.4 700 L-2154.4 700 Z" fill="rgb(166,146,111)"/><path d="M811 135 L-2167.4 700" stroke="#8a7758" stroke-opacity="0.25" stroke-width="0.7"/><path d="M811 135 L-2154.4 700 L-2143.3 700 Z" fill="rgb(174,154,119)"/><path d="M811 135 L-2154.4 700" stroke="#8a7758" stroke-opacity="0.25" stroke-width="0.7"/><path d="M811 135 L-2143.3 700 L-2128.4 700 Z" fill="rgb(164,144,109)"/><path d="M811 135 L-2143.3 700" stroke="#8a7758" stroke-opacity="0.25" stroke-width="0.7"/><path d="M811 135 L-2128.4 700 L-2113.1 700 Z" fill="rgb(167,147,113)"/><path d="M811 135 L-2128.4 700" stroke="#8a7758" stroke-opacity="0.25" stroke-width="0.7"/><path d="M811 135 L-2113.1 700 L-2101.4 700 Z" fill="rgb(176,156,122)"/><path d="M811 135 L-2113.1 700" stroke="#8a7758" stroke-opacity="0.25" stroke-width="0.7"/><path d="M811 135 L-2101.4 700 L-2085.7 700 Z" fill="rgb(171,151,117)"/><path d="M811 135 L-2101.4 700" stroke="#8a7758" stroke-opacity="0.25" stroke-width="0.7"/><path d="M811 135 L-2085.7 700 L-2072.2 700 Z" fill="rgb(167,147,113)"/><path d="M811 135 L-2085.7 700" stroke="#8a7758" stroke-opacity="0.25" stroke-width="0.7"/><path d="M811 135 L-2072.2 700 L-2058.1 700 Z" fill="rgb(166,146,111)"/><path d="M811 135 L-2072.2 700" stroke="#8a7758" stroke-opacity="0.25" stroke-width="0.7"/><path d="M811 135 L-2058.1 700 L-2046.2 700 Z" fill="rgb(171,151,117)"/><path d="M811 135 L-2058.1 700" stroke="#8a7758" stroke-opacity="0.25" stroke-width="0.7"/><path d="M811 135 L-2046.2 700 L-2034.2 700 Z" fill="rgb(176,156,122)"/><path d="M811 135 L-2046.2 700" stroke="#8a7758" stroke-opacity="0.25" stroke-width="0.7"/><path d="M811 135 L-2034.2 700 L-2019.4 700 Z" fill="rgb(176,156,122)"/><path d="M811 135 L-2034.2 700" stroke="#8a7758" stroke-opacity="0.25" stroke-width="0.7"/><path d="M811 135 L-2019.4 700 L-2004.1 700 Z" fill="rgb(162,142,108)"/><path d="M811 135 L-2019.4 700" stroke="#8a7758" stroke-opacity="0.25" stroke-width="0.7"/><path d="M811 135 L-2004.1 700 L-1989.1 700 Z" fill="rgb(162,142,108)"/><path d="M811 135 L-2004.1 700" stroke="#8a7758" stroke-opacity="0.25" stroke-width="0.7"/><path d="M811 135 L-1989.1 700 L-1976.2 700 Z" fill="rgb(164,144,109)"/><path d="M811 135 L-1989.1 700" stroke="#8a7758" stroke-opacity="0.25" stroke-width="0.7"/><path d="M811 135 L-1976.2 700 L-1963.2 700 Z" fill="rgb(166,146,111)"/><path d="M811 135 L-1976.2 700" stroke="#8a7758" stroke-opacity="0.25" stroke-width="0.7"/><path d="M811 135 L-1963.2 700 L-1947.9 700 Z" fill="rgb(167,147,113)"/><path d="M811 135 L-1963.2 700" stroke="#8a7758" stroke-opacity="0.25" stroke-width="0.7"/><path d="M811 135 L-1947.9 700 L-1935.6 700 Z" fill="rgb(169,149,115)"/><path d="M811 135 L-1947.9 700" stroke="#8a7758" stroke-opacity="0.25" stroke-width="0.7"/><path d="M811 135 L-1935.6 700 L-1920.9 700 Z" fill="rgb(167,147,113)"/><path d="M811 135 L-1935.6 700" stroke="#8a7758" stroke-opacity="0.25" stroke-width="0.7"/><path d="M811 135 L-1920.9 700 L-1908.0 700 Z" fill="rgb(167,147,113)"/><path d="M811 135 L-1920.9 700" stroke="#8a7758" stroke-opacity="0.25" stroke-width="0.7"/><path d="M811 135 L-1908.0 700 L-1893.3 700 Z" fill="rgb(167,147,113)"/><path d="M811 135 L-1908.0 700" stroke="#8a7758" stroke-opacity="0.25" stroke-width="0.7"/><path d="M811 135 L-1893.3 700 L-1878.2 700 Z" fill="rgb(176,156,122)"/><path d="M811 135 L-1893.3 700" stroke="#8a7758" stroke-opacity="0.25" stroke-width="0.7"/><path d="M811 135 L-1878.2 700 L-1864.8 700 Z" fill="rgb(164,144,109)"/><path d="M811 135 L-1878.2 700" stroke="#8a7758" stroke-opacity="0.25" stroke-width="0.7"/><path d="M811 135 L-1864.8 700 L-1851.1 700 Z" fill="rgb(162,142,108)"/><path d="M811 135 L-1864.8 700" stroke="#8a7758" stroke-opacity="0.25" stroke-width="0.7"/><path d="M811 135 L-1851.1 700 L-1837.5 700 Z" fill="rgb(169,149,115)"/><path d="M811 135 L-1851.1 700" stroke="#8a7758" stroke-opacity="0.25" stroke-width="0.7"/><path d="M811 135 L-1837.5 700 L-1821.7 700 Z" fill="rgb(167,147,113)"/><path d="M811 135 L-1837.5 700" stroke="#8a7758" stroke-opacity="0.25" stroke-width="0.7"/><path d="M811 135 L-1821.7 700 L-1809.2 700 Z" fill="rgb(176,156,122)"/><path d="M811 135 L-1821.7 700" stroke="#8a7758" stroke-opacity="0.25" stroke-width="0.7"/><path d="M811 135 L-1809.2 700 L-1794.4 700 Z" fill="rgb(167,147,113)"/><path d="M811 135 L-1809.2 700" stroke="#8a7758" stroke-opacity="0.25" stroke-width="0.7"/><path d="M811 135 L-1794.4 700 L-1783.1 700 Z" fill="rgb(169,149,115)"/><path d="M811 135 L-1794.4 700" stroke="#8a7758" stroke-opacity="0.25" stroke-width="0.7"/><path d="M811 135 L-1783.1 700 L-1767.2 700 Z" fill="rgb(169,149,115)"/><path d="M811 135 L-1783.1 700" stroke="#8a7758" stroke-opacity="0.25" stroke-width="0.7"/><path d="M811 135 L-1767.2 700 L-1755.9 700 Z" fill="rgb(171,151,117)"/><path d="M811 135 L-1767.2 700" stroke="#8a7758" stroke-opacity="0.25" stroke-width="0.7"/><path d="M811 135 L-1755.9 700 L-1744.4 700 Z" fill="rgb(164,144,109)"/><path d="M811 135 L-1755.9 700" stroke="#8a7758" stroke-opacity="0.25" stroke-width="0.7"/><path d="M811 135 L-1744.4 700 L-1730.1 700 Z" fill="rgb(174,154,119)"/><path d="M811 135 L-1744.4 700" stroke="#8a7758" stroke-opacity="0.25" stroke-width="0.7"/><path d="M811 135 L-1730.1 700 L-1716.6 700 Z" fill="rgb(162,142,108)"/><path d="M811 135 L-1730.1 700" stroke="#8a7758" stroke-opacity="0.25" stroke-width="0.7"/><path d="M811 135 L-1716.6 700 L-1702.2 700 Z" fill="rgb(174,154,119)"/><path d="M811 135 L-1716.6 700" stroke="#8a7758" stroke-opacity="0.25" stroke-width="0.7"/><path d="M811 135 L-1702.2 700 L-1688.8 700 Z" fill="rgb(176,156,122)"/><path d="M811 135 L-1702.2 700" stroke="#8a7758" stroke-opacity="0.25" stroke-width="0.7"/><path d="M811 135 L-1688.8 700 L-1675.9 700 Z" fill="rgb(171,151,117)"/><path d="M811 135 L-1688.8 700" stroke="#8a7758" stroke-opacity="0.25" stroke-width="0.7"/><path d="M811 135 L-1675.9 700 L-1664.5 700 Z" fill="rgb(162,142,108)"/><path d="M811 135 L-1675.9 700" stroke="#8a7758" stroke-opacity="0.25" stroke-width="0.7"/><path d="M811 135 L-1664.5 700 L-1653.3 700 Z" fill="rgb(171,151,117)"/><path d="M811 135 L-1664.5 700" stroke="#8a7758" stroke-opacity="0.25" stroke-width="0.7"/><path d="M811 135 L-1653.3 700 L-1642.1 700 Z" fill="rgb(167,147,113)"/><path d="M811 135 L-1653.3 700" stroke="#8a7758" stroke-opacity="0.25" stroke-width="0.7"/><path d="M811 135 L-1642.1 700 L-1627.6 700 Z" fill="rgb(171,151,117)"/><path d="M811 135 L-1642.1 700" stroke="#8a7758" stroke-opacity="0.25" stroke-width="0.7"/><path d="M811 135 L-1627.6 700 L-1612.9 700 Z" fill="rgb(174,154,119)"/><path d="M811 135 L-1627.6 700" stroke="#8a7758" stroke-opacity="0.25" stroke-width="0.7"/><path d="M811 135 L-1612.9 700 L-1598.0 700 Z" fill="rgb(171,151,117)"/><path d="M811 135 L-1612.9 700" stroke="#8a7758" stroke-opacity="0.25" stroke-width="0.7"/><path d="M811 135 L-1598.0 700 L-1585.0 700 Z" fill="rgb(174,154,119)"/><path d="M811 135 L-1598.0 700" stroke="#8a7758" stroke-opacity="0.25" stroke-width="0.7"/><path d="M811 135 L-1585.0 700 L-1572.9 700 Z" fill="rgb(164,144,109)"/><path d="M811 135 L-1585.0 700" stroke="#8a7758" stroke-opacity="0.25" stroke-width="0.7"/><path d="M811 135 L-1572.9 700 L-1561.7 700 Z" fill="rgb(166,146,111)"/><path d="M811 135 L-1572.9 700" stroke="#8a7758" stroke-opacity="0.25" stroke-width="0.7"/><path d="M811 135 L-1561.7 700 L-1548.2 700 Z" fill="rgb(167,147,113)"/><path d="M811 135 L-1561.7 700" stroke="#8a7758" stroke-opacity="0.25" stroke-width="0.7"/><path d="M811 135 L-1548.2 700 L-1533.3 700 Z" fill="rgb(167,147,113)"/><path d="M811 135 L-1548.2 700" stroke="#8a7758" stroke-opacity="0.25" stroke-width="0.7"/><path d="M811 135 L-1533.3 700 L-1521.1 700 Z" fill="rgb(174,154,119)"/><path d="M811 135 L-1533.3 700" stroke="#8a7758" stroke-opacity="0.25" stroke-width="0.7"/><path d="M811 135 L-1521.1 700 L-1508.2 700 Z" fill="rgb(171,151,117)"/><path d="M811 135 L-1521.1 700" stroke="#8a7758" stroke-opacity="0.25" stroke-width="0.7"/><path d="M811 135 L-1508.2 700 L-1493.1 700 Z" fill="rgb(162,142,108)"/><path d="M811 135 L-1508.2 700" stroke="#8a7758" stroke-opacity="0.25" stroke-width="0.7"/><path d="M811 135 L-1493.1 700 L-1481.3 700 Z" fill="rgb(167,147,113)"/><path d="M811 135 L-1493.1 700" stroke="#8a7758" stroke-opacity="0.25" stroke-width="0.7"/><path d="M811 135 L-1481.3 700 L-1468.7 700 Z" fill="rgb(171,151,117)"/><path d="M811 135 L-1481.3 700" stroke="#8a7758" stroke-opacity="0.25" stroke-width="0.7"/><path d="M811 135 L-1468.7 700 L-1454.1 700 Z" fill="rgb(164,144,109)"/><path d="M811 135 L-1468.7 700" stroke="#8a7758" stroke-opacity="0.25" stroke-width="0.7"/><path d="M811 135 L-1454.1 700 L-1440.3 700 Z" fill="rgb(164,144,109)"/><path d="M811 135 L-1454.1 700" stroke="#8a7758" stroke-opacity="0.25" stroke-width="0.7"/><path d="M811 135 L-1440.3 700 L-1426.7 700 Z" fill="rgb(171,151,117)"/><path d="M811 135 L-1440.3 700" stroke="#8a7758" stroke-opacity="0.25" stroke-width="0.7"/><path d="M811 135 L-1426.7 700 L-1412.0 700 Z" fill="rgb(174,154,119)"/><path d="M811 135 L-1426.7 700" stroke="#8a7758" stroke-opacity="0.25" stroke-width="0.7"/><path d="M811 135 L-1412.0 700 L-1396.1 700 Z" fill="rgb(166,146,111)"/><path d="M811 135 L-1412.0 700" stroke="#8a7758" stroke-opacity="0.25" stroke-width="0.7"/><path d="M811 135 L-1396.1 700 L-1381.6 700 Z" fill="rgb(167,147,113)"/><path d="M811 135 L-1396.1 700" stroke="#8a7758" stroke-opacity="0.25" stroke-width="0.7"/><path d="M811 135 L-1381.6 700 L-1367.2 700 Z" fill="rgb(169,149,115)"/><path d="M811 135 L-1381.6 700" stroke="#8a7758" stroke-opacity="0.25" stroke-width="0.7"/><path d="M811 135 L-1367.2 700 L-1353.0 700 Z" fill="rgb(167,147,113)"/><path d="M811 135 L-1367.2 700" stroke="#8a7758" stroke-opacity="0.25" stroke-width="0.7"/><path d="M811 135 L-1353.0 700 L-1340.7 700 Z" fill="rgb(162,142,108)"/><path d="M811 135 L-1353.0 700" stroke="#8a7758" stroke-opacity="0.25" stroke-width="0.7"/><path d="M811 135 L-1340.7 700 L-1328.1 700 Z" fill="rgb(167,147,113)"/><path d="M811 135 L-1340.7 700" stroke="#8a7758" stroke-opacity="0.25" stroke-width="0.7"/><path d="M811 135 L-1328.1 700 L-1312.3 700 Z" fill="rgb(166,146,111)"/><path d="M811 135 L-1328.1 700" stroke="#8a7758" stroke-opacity="0.25" stroke-width="0.7"/><path d="M811 135 L-1312.3 700 L-1296.9 700 Z" fill="rgb(176,156,122)"/><path d="M811 135 L-1312.3 700" stroke="#8a7758" stroke-opacity="0.25" stroke-width="0.7"/><path d="M811 135 L-1296.9 700 L-1284.9 700 Z" fill="rgb(167,147,113)"/><path d="M811 135 L-1296.9 700" stroke="#8a7758" stroke-opacity="0.25" stroke-width="0.7"/><path d="M811 135 L-1284.9 700 L-1270.3 700 Z" fill="rgb(166,146,111)"/><path d="M811 135 L-1284.9 700" stroke="#8a7758" stroke-opacity="0.25" stroke-width="0.7"/><path d="M811 135 L-1270.3 700 L-1254.6 700 Z" fill="rgb(174,154,119)"/><path d="M811 135 L-1270.3 700" stroke="#8a7758" stroke-opacity="0.25" stroke-width="0.7"/><path d="M811 135 L-1254.6 700 L-1241.6 700 Z" fill="rgb(174,154,119)"/><path d="M811 135 L-1254.6 700" stroke="#8a7758" stroke-opacity="0.25" stroke-width="0.7"/><path d="M811 135 L-1241.6 700 L-1227.5 700 Z" fill="rgb(167,147,113)"/><path d="M811 135 L-1241.6 700" stroke="#8a7758" stroke-opacity="0.25" stroke-width="0.7"/><path d="M811 135 L-1227.5 700 L-1213.1 700 Z" fill="rgb(171,151,117)"/><path d="M811 135 L-1227.5 700" stroke="#8a7758" stroke-opacity="0.25" stroke-width="0.7"/><path d="M811 135 L-1213.1 700 L-1199.0 700 Z" fill="rgb(164,144,109)"/><path d="M811 135 L-1213.1 700" stroke="#8a7758" stroke-opacity="0.25" stroke-width="0.7"/><path d="M811 135 L-1199.0 700 L-1187.1 700 Z" fill="rgb(167,147,113)"/><path d="M811 135 L-1199.0 700" stroke="#8a7758" stroke-opacity="0.25" stroke-width="0.7"/><path d="M811 135 L-1187.1 700 L-1175.9 700 Z" fill="rgb(169,149,115)"/><path d="M811 135 L-1187.1 700" stroke="#8a7758" stroke-opacity="0.25" stroke-width="0.7"/><path d="M811 135 L-1175.9 700 L-1164.8 700 Z" fill="rgb(176,156,122)"/><path d="M811 135 L-1175.9 700" stroke="#8a7758" stroke-opacity="0.25" stroke-width="0.7"/><path d="M811 135 L-1164.8 700 L-1150.9 700 Z" fill="rgb(171,151,117)"/><path d="M811 135 L-1164.8 700" stroke="#8a7758" stroke-opacity="0.25" stroke-width="0.7"/><path d="M811 135 L-1150.9 700 L-1136.9 700 Z" fill="rgb(174,154,119)"/><path d="M811 135 L-1150.9 700" stroke="#8a7758" stroke-opacity="0.25" stroke-width="0.7"/><path d="M811 135 L-1136.9 700 L-1124.7 700 Z" fill="rgb(162,142,108)"/><path d="M811 135 L-1136.9 700" stroke="#8a7758" stroke-opacity="0.25" stroke-width="0.7"/><path d="M811 135 L-1124.7 700 L-1109.0 700 Z" fill="rgb(166,146,111)"/><path d="M811 135 L-1124.7 700" stroke="#8a7758" stroke-opacity="0.25" stroke-width="0.7"/><path d="M811 135 L-1109.0 700 L-1097.5 700 Z" fill="rgb(167,147,113)"/><path d="M811 135 L-1109.0 700" stroke="#8a7758" stroke-opacity="0.25" stroke-width="0.7"/><path d="M811 135 L-1097.5 700 L-1085.5 700 Z" fill="rgb(169,149,115)"/><path d="M811 135 L-1097.5 700" stroke="#8a7758" stroke-opacity="0.25" stroke-width="0.7"/><path d="M811 135 L-1085.5 700 L-1070.1 700 Z" fill="rgb(169,149,115)"/><path d="M811 135 L-1085.5 700" stroke="#8a7758" stroke-opacity="0.25" stroke-width="0.7"/><path d="M811 135 L-1070.1 700 L-1058.2 700 Z" fill="rgb(171,151,117)"/><path d="M811 135 L-1070.1 700" stroke="#8a7758" stroke-opacity="0.25" stroke-width="0.7"/><path d="M811 135 L-1058.2 700 L-1044.6 700 Z" fill="rgb(162,142,108)"/><path d="M811 135 L-1058.2 700" stroke="#8a7758" stroke-opacity="0.25" stroke-width="0.7"/><path d="M811 135 L-1044.6 700 L-1032.0 700 Z" fill="rgb(171,151,117)"/><path d="M811 135 L-1044.6 700" stroke="#8a7758" stroke-opacity="0.25" stroke-width="0.7"/><path d="M811 135 L-1032.0 700 L-1019.0 700 Z" fill="rgb(176,156,122)"/><path d="M811 135 L-1032.0 700" stroke="#8a7758" stroke-opacity="0.25" stroke-width="0.7"/><path d="M811 135 L-1019.0 700 L-1006.8 700 Z" fill="rgb(174,154,119)"/><path d="M811 135 L-1019.0 700" stroke="#8a7758" stroke-opacity="0.25" stroke-width="0.7"/><path d="M811 135 L-1006.8 700 L-991.4 700 Z" fill="rgb(162,142,108)"/><path d="M811 135 L-1006.8 700" stroke="#8a7758" stroke-opacity="0.25" stroke-width="0.7"/><path d="M811 135 L-991.4 700 L-977.1 700 Z" fill="rgb(164,144,109)"/><path d="M811 135 L-991.4 700" stroke="#8a7758" stroke-opacity="0.25" stroke-width="0.7"/><path d="M811 135 L-977.1 700 L-965.7 700 Z" fill="rgb(167,147,113)"/><path d="M811 135 L-977.1 700" stroke="#8a7758" stroke-opacity="0.25" stroke-width="0.7"/><path d="M811 135 L-965.7 700 L-953.9 700 Z" fill="rgb(174,154,119)"/><path d="M811 135 L-965.7 700" stroke="#8a7758" stroke-opacity="0.25" stroke-width="0.7"/><path d="M811 135 L-953.9 700 L-938.9 700 Z" fill="rgb(176,156,122)"/><path d="M811 135 L-953.9 700" stroke="#8a7758" stroke-opacity="0.25" stroke-width="0.7"/><path d="M811 135 L-938.9 700 L-924.8 700 Z" fill="rgb(174,154,119)"/><path d="M811 135 L-938.9 700" stroke="#8a7758" stroke-opacity="0.25" stroke-width="0.7"/><path d="M811 135 L-924.8 700 L-910.4 700 Z" fill="rgb(169,149,115)"/><path d="M811 135 L-924.8 700" stroke="#8a7758" stroke-opacity="0.25" stroke-width="0.7"/><path d="M811 135 L-910.4 700 L-898.6 700 Z" fill="rgb(166,146,111)"/><path d="M811 135 L-910.4 700" stroke="#8a7758" stroke-opacity="0.25" stroke-width="0.7"/><path d="M811 135 L-898.6 700 L-885.8 700 Z" fill="rgb(167,147,113)"/><path d="M811 135 L-898.6 700" stroke="#8a7758" stroke-opacity="0.25" stroke-width="0.7"/><path d="M811 135 L-885.8 700 L-871.6 700 Z" fill="rgb(162,142,108)"/><path d="M811 135 L-885.8 700" stroke="#8a7758" stroke-opacity="0.25" stroke-width="0.7"/><path d="M811 135 L-871.6 700 L-856.2 700 Z" fill="rgb(164,144,109)"/><path d="M811 135 L-871.6 700" stroke="#8a7758" stroke-opacity="0.25" stroke-width="0.7"/><path d="M811 135 L-856.2 700 L-841.8 700 Z" fill="rgb(166,146,111)"/><path d="M811 135 L-856.2 700" stroke="#8a7758" stroke-opacity="0.25" stroke-width="0.7"/><path d="M811 135 L-841.8 700 L-828.3 700 Z" fill="rgb(167,147,113)"/><path d="M811 135 L-841.8 700" stroke="#8a7758" stroke-opacity="0.25" stroke-width="0.7"/><path d="M811 135 L-828.3 700 L-815.5 700 Z" fill="rgb(169,149,115)"/><path d="M811 135 L-828.3 700" stroke="#8a7758" stroke-opacity="0.25" stroke-width="0.7"/><path d="M811 135 L-815.5 700 L-804.2 700 Z" fill="rgb(162,142,108)"/><path d="M811 135 L-815.5 700" stroke="#8a7758" stroke-opacity="0.25" stroke-width="0.7"/><path d="M811 135 L-804.2 700 L-790.3 700 Z" fill="rgb(167,147,113)"/><path d="M811 135 L-804.2 700" stroke="#8a7758" stroke-opacity="0.25" stroke-width="0.7"/><path d="M811 135 L-790.3 700 L-775.9 700 Z" fill="rgb(171,151,117)"/><path d="M811 135 L-790.3 700" stroke="#8a7758" stroke-opacity="0.25" stroke-width="0.7"/><path d="M811 135 L-775.9 700 L-764.1 700 Z" fill="rgb(164,144,109)"/><path d="M811 135 L-775.9 700" stroke="#8a7758" stroke-opacity="0.25" stroke-width="0.7"/><path d="M811 135 L-764.1 700 L-751.9 700 Z" fill="rgb(169,149,115)"/><path d="M811 135 L-764.1 700" stroke="#8a7758" stroke-opacity="0.25" stroke-width="0.7"/><path d="M811 135 L-751.9 700 L-738.2 700 Z" fill="rgb(171,151,117)"/><path d="M811 135 L-751.9 700" stroke="#8a7758" stroke-opacity="0.25" stroke-width="0.7"/><path d="M811 135 L-738.2 700 L-726.2 700 Z" fill="rgb(167,147,113)"/><path d="M811 135 L-738.2 700" stroke="#8a7758" stroke-opacity="0.25" stroke-width="0.7"/><path d="M811 135 L-726.2 700 L-711.6 700 Z" fill="rgb(176,156,122)"/><path d="M811 135 L-726.2 700" stroke="#8a7758" stroke-opacity="0.25" stroke-width="0.7"/><path d="M811 135 L-711.6 700 L-698.5 700 Z" fill="rgb(169,149,115)"/><path d="M811 135 L-711.6 700" stroke="#8a7758" stroke-opacity="0.25" stroke-width="0.7"/><path d="M811 135 L-698.5 700 L-683.3 700 Z" fill="rgb(167,147,113)"/><path d="M811 135 L-698.5 700" stroke="#8a7758" stroke-opacity="0.25" stroke-width="0.7"/><path d="M811 135 L-683.3 700 L-669.8 700 Z" fill="rgb(169,149,115)"/><path d="M811 135 L-683.3 700" stroke="#8a7758" stroke-opacity="0.25" stroke-width="0.7"/><path d="M811 135 L-669.8 700 L-655.8 700 Z" fill="rgb(166,146,111)"/><path d="M811 135 L-669.8 700" stroke="#8a7758" stroke-opacity="0.25" stroke-width="0.7"/><path d="M811 135 L-655.8 700 L-644.7 700 Z" fill="rgb(169,149,115)"/><path d="M811 135 L-655.8 700" stroke="#8a7758" stroke-opacity="0.25" stroke-width="0.7"/><path d="M811 135 L-644.7 700 L-631.2 700 Z" fill="rgb(166,146,111)"/><path d="M811 135 L-644.7 700" stroke="#8a7758" stroke-opacity="0.25" stroke-width="0.7"/><path d="M811 135 L-631.2 700 L-615.9 700 Z" fill="rgb(174,154,119)"/><path d="M811 135 L-631.2 700" stroke="#8a7758" stroke-opacity="0.25" stroke-width="0.7"/><path d="M811 135 L-615.9 700 L-600.8 700 Z" fill="rgb(167,147,113)"/><path d="M811 135 L-615.9 700" stroke="#8a7758" stroke-opacity="0.25" stroke-width="0.7"/><path d="M811 135 L-600.8 700 L-586.4 700 Z" fill="rgb(167,147,113)"/><path d="M811 135 L-600.8 700" stroke="#8a7758" stroke-opacity="0.25" stroke-width="0.7"/><path d="M811 135 L-586.4 700 L-572.0 700 Z" fill="rgb(176,156,122)"/><path d="M811 135 L-586.4 700" stroke="#8a7758" stroke-opacity="0.25" stroke-width="0.7"/><path d="M811 135 L-572.0 700 L-558.0 700 Z" fill="rgb(164,144,109)"/><path d="M811 135 L-572.0 700" stroke="#8a7758" stroke-opacity="0.25" stroke-width="0.7"/><path d="M811 135 L-558.0 700 L-542.2 700 Z" fill="rgb(171,151,117)"/><path d="M811 135 L-558.0 700" stroke="#8a7758" stroke-opacity="0.25" stroke-width="0.7"/><path d="M811 135 L-542.2 700 L-530.1 700 Z" fill="rgb(174,154,119)"/><path d="M811 135 L-542.2 700" stroke="#8a7758" stroke-opacity="0.25" stroke-width="0.7"/><path d="M811 135 L-530.1 700 L-514.4 700 Z" fill="rgb(169,149,115)"/><path d="M811 135 L-530.1 700" stroke="#8a7758" stroke-opacity="0.25" stroke-width="0.7"/><path d="M811 135 L-514.4 700 L-503.4 700 Z" fill="rgb(169,149,115)"/><path d="M811 135 L-514.4 700" stroke="#8a7758" stroke-opacity="0.25" stroke-width="0.7"/><path d="M811 135 L-503.4 700 L-491.5 700 Z" fill="rgb(167,147,113)"/><path d="M811 135 L-503.4 700" stroke="#8a7758" stroke-opacity="0.25" stroke-width="0.7"/><path d="M811 135 L-491.5 700 L-477.5 700 Z" fill="rgb(171,151,117)"/><path d="M811 135 L-491.5 700" stroke="#8a7758" stroke-opacity="0.25" stroke-width="0.7"/><path d="M811 135 L-477.5 700 L-463.2 700 Z" fill="rgb(166,146,111)"/><path d="M811 135 L-477.5 700" stroke="#8a7758" stroke-opacity="0.25" stroke-width="0.7"/><path d="M811 135 L-463.2 700 L-451.3 700 Z" fill="rgb(176,156,122)"/><path d="M811 135 L-463.2 700" stroke="#8a7758" stroke-opacity="0.25" stroke-width="0.7"/><path d="M811 135 L-451.3 700 L-437.8 700 Z" fill="rgb(171,151,117)"/><path d="M811 135 L-451.3 700" stroke="#8a7758" stroke-opacity="0.25" stroke-width="0.7"/><path d="M811 135 L-437.8 700 L-425.8 700 Z" fill="rgb(176,156,122)"/><path d="M811 135 L-437.8 700" stroke="#8a7758" stroke-opacity="0.25" stroke-width="0.7"/><path d="M811 135 L-425.8 700 L-412.0 700 Z" fill="rgb(174,154,119)"/><path d="M811 135 L-425.8 700" stroke="#8a7758" stroke-opacity="0.25" stroke-width="0.7"/><path d="M811 135 L-412.0 700 L-397.3 700 Z" fill="rgb(169,149,115)"/><path d="M811 135 L-412.0 700" stroke="#8a7758" stroke-opacity="0.25" stroke-width="0.7"/><path d="M811 135 L-397.3 700 L-381.8 700 Z" fill="rgb(167,147,113)"/><path d="M811 135 L-397.3 700" stroke="#8a7758" stroke-opacity="0.25" stroke-width="0.7"/><path d="M811 135 L-381.8 700 L-368.7 700 Z" fill="rgb(166,146,111)"/><path d="M811 135 L-381.8 700" stroke="#8a7758" stroke-opacity="0.25" stroke-width="0.7"/><path d="M811 135 L-368.7 700 L-356.0 700 Z" fill="rgb(169,149,115)"/><path d="M811 135 L-368.7 700" stroke="#8a7758" stroke-opacity="0.25" stroke-width="0.7"/><path d="M811 135 L-356.0 700 L-342.1 700 Z" fill="rgb(162,142,108)"/><path d="M811 135 L-356.0 700" stroke="#8a7758" stroke-opacity="0.25" stroke-width="0.7"/><path d="M811 135 L-342.1 700 L-326.6 700 Z" fill="rgb(162,142,108)"/><path d="M811 135 L-342.1 700" stroke="#8a7758" stroke-opacity="0.25" stroke-width="0.7"/><path d="M811 135 L-326.6 700 L-310.6 700 Z" fill="rgb(167,147,113)"/><path d="M811 135 L-326.6 700" stroke="#8a7758" stroke-opacity="0.25" stroke-width="0.7"/><path d="M811 135 L-310.6 700 L-295.9 700 Z" fill="rgb(167,147,113)"/><path d="M811 135 L-310.6 700" stroke="#8a7758" stroke-opacity="0.25" stroke-width="0.7"/><path d="M811 135 L-295.9 700 L-280.3 700 Z" fill="rgb(176,156,122)"/><path d="M811 135 L-295.9 700" stroke="#8a7758" stroke-opacity="0.25" stroke-width="0.7"/><path d="M811 135 L-280.3 700 L-267.4 700 Z" fill="rgb(176,156,122)"/><path d="M811 135 L-280.3 700" stroke="#8a7758" stroke-opacity="0.25" stroke-width="0.7"/><path d="M811 135 L-267.4 700 L-255.0 700 Z" fill="rgb(166,146,111)"/><path d="M811 135 L-267.4 700" stroke="#8a7758" stroke-opacity="0.25" stroke-width="0.7"/><path d="M811 135 L-255.0 700 L-242.8 700 Z" fill="rgb(171,151,117)"/><path d="M811 135 L-255.0 700" stroke="#8a7758" stroke-opacity="0.25" stroke-width="0.7"/><path d="M811 135 L-242.8 700 L-228.7 700 Z" fill="rgb(174,154,119)"/><path d="M811 135 L-242.8 700" stroke="#8a7758" stroke-opacity="0.25" stroke-width="0.7"/><path d="M811 135 L-228.7 700 L-213.8 700 Z" fill="rgb(167,147,113)"/><path d="M811 135 L-228.7 700" stroke="#8a7758" stroke-opacity="0.25" stroke-width="0.7"/><path d="M811 135 L-213.8 700 L-199.6 700 Z" fill="rgb(167,147,113)"/><path d="M811 135 L-213.8 700" stroke="#8a7758" stroke-opacity="0.25" stroke-width="0.7"/><path d="M811 135 L-199.6 700 L-187.7 700 Z" fill="rgb(171,151,117)"/><path d="M811 135 L-199.6 700" stroke="#8a7758" stroke-opacity="0.25" stroke-width="0.7"/><path d="M811 135 L-187.7 700 L-175.5 700 Z" fill="rgb(174,154,119)"/><path d="M811 135 L-187.7 700" stroke="#8a7758" stroke-opacity="0.25" stroke-width="0.7"/><path d="M811 135 L-175.5 700 L-163.2 700 Z" fill="rgb(176,156,122)"/><path d="M811 135 L-175.5 700" stroke="#8a7758" stroke-opacity="0.25" stroke-width="0.7"/><path d="M811 135 L-163.2 700 L-147.9 700 Z" fill="rgb(167,147,113)"/><path d="M811 135 L-163.2 700" stroke="#8a7758" stroke-opacity="0.25" stroke-width="0.7"/><path d="M811 135 L-147.9 700 L-136.7 700 Z" fill="rgb(169,149,115)"/><path d="M811 135 L-147.9 700" stroke="#8a7758" stroke-opacity="0.25" stroke-width="0.7"/><path d="M811 135 L-136.7 700 L-122.8 700 Z" fill="rgb(167,147,113)"/><path d="M811 135 L-136.7 700" stroke="#8a7758" stroke-opacity="0.25" stroke-width="0.7"/><path d="M811 135 L-122.8 700 L-108.1 700 Z" fill="rgb(167,147,113)"/><path d="M811 135 L-122.8 700" stroke="#8a7758" stroke-opacity="0.25" stroke-width="0.7"/><path d="M811 135 L-108.1 700 L-92.2 700 Z" fill="rgb(171,151,117)"/><path d="M811 135 L-108.1 700" stroke="#8a7758" stroke-opacity="0.25" stroke-width="0.7"/><path d="M811 135 L-92.2 700 L-80.5 700 Z" fill="rgb(162,142,108)"/><path d="M811 135 L-92.2 700" stroke="#8a7758" stroke-opacity="0.25" stroke-width="0.7"/><path d="M811 135 L-80.5 700 L-69.4 700 Z" fill="rgb(167,147,113)"/><path d="M811 135 L-80.5 700" stroke="#8a7758" stroke-opacity="0.25" stroke-width="0.7"/><path d="M811 135 L-69.4 700 L-55.6 700 Z" fill="rgb(174,154,119)"/><path d="M811 135 L-69.4 700" stroke="#8a7758" stroke-opacity="0.25" stroke-width="0.7"/><path d="M811 135 L-55.6 700 L-43.6 700 Z" fill="rgb(167,147,113)"/><path d="M811 135 L-55.6 700" stroke="#8a7758" stroke-opacity="0.25" stroke-width="0.7"/><path d="M811 135 L-43.6 700 L-28.2 700 Z" fill="rgb(176,156,122)"/><path d="M811 135 L-43.6 700" stroke="#8a7758" stroke-opacity="0.25" stroke-width="0.7"/><path d="M811 135 L-28.2 700 L-13.2 700 Z" fill="rgb(174,154,119)"/><path d="M811 135 L-28.2 700" stroke="#8a7758" stroke-opacity="0.25" stroke-width="0.7"/><path d="M811 135 L-13.2 700 L1.2 700 Z" fill="rgb(162,142,108)"/><path d="M811 135 L-13.2 700" stroke="#8a7758" stroke-opacity="0.25" stroke-width="0.7"/><path d="M811 135 L1.2 700 L14.1 700 Z" fill="rgb(166,146,111)"/><path d="M811 135 L1.2 700" stroke="#8a7758" stroke-opacity="0.25" stroke-width="0.7"/><path d="M811 135 L14.1 700 L27.6 700 Z" fill="rgb(174,154,119)"/><path d="M811 135 L14.1 700" stroke="#8a7758" stroke-opacity="0.25" stroke-width="0.7"/><path d="M811 135 L27.6 700 L40.3 700 Z" fill="rgb(174,154,119)"/><path d="M811 135 L27.6 700" stroke="#8a7758" stroke-opacity="0.25" stroke-width="0.7"/><path d="M811 135 L40.3 700 L54.3 700 Z" fill="rgb(164,144,109)"/><path d="M811 135 L40.3 700" stroke="#8a7758" stroke-opacity="0.25" stroke-width="0.7"/><path d="M811 135 L54.3 700 L69.6 700 Z" fill="rgb(164,144,109)"/><path d="M811 135 L54.3 700" stroke="#8a7758" stroke-opacity="0.25" stroke-width="0.7"/><path d="M811 135 L69.6 700 L82.5 700 Z" fill="rgb(167,147,113)"/><path d="M811 135 L69.6 700" stroke="#8a7758" stroke-opacity="0.25" stroke-width="0.7"/><path d="M811 135 L82.5 700 L97.2 700 Z" fill="rgb(174,154,119)"/><path d="M811 135 L82.5 700" stroke="#8a7758" stroke-opacity="0.25" stroke-width="0.7"/><path d="M811 135 L97.2 700 L112.2 700 Z" fill="rgb(167,147,113)"/><path d="M811 135 L97.2 700" stroke="#8a7758" stroke-opacity="0.25" stroke-width="0.7"/><path d="M811 135 L112.2 700 L126.1 700 Z" fill="rgb(169,149,115)"/><path d="M811 135 L112.2 700" stroke="#8a7758" stroke-opacity="0.25" stroke-width="0.7"/><path d="M811 135 L126.1 700 L141.6 700 Z" fill="rgb(164,144,109)"/><path d="M811 135 L126.1 700" stroke="#8a7758" stroke-opacity="0.25" stroke-width="0.7"/><path d="M811 135 L141.6 700 L156.3 700 Z" fill="rgb(167,147,113)"/><path d="M811 135 L141.6 700" stroke="#8a7758" stroke-opacity="0.25" stroke-width="0.7"/><path d="M811 135 L156.3 700 L170.5 700 Z" fill="rgb(166,146,111)"/><path d="M811 135 L156.3 700" stroke="#8a7758" stroke-opacity="0.25" stroke-width="0.7"/><path d="M811 135 L170.5 700 L185.2 700 Z" fill="rgb(167,147,113)"/><path d="M811 135 L170.5 700" stroke="#8a7758" stroke-opacity="0.25" stroke-width="0.7"/><path d="M811 135 L185.2 700 L196.8 700 Z" fill="rgb(167,147,113)"/><path d="M811 135 L185.2 700" stroke="#8a7758" stroke-opacity="0.25" stroke-width="0.7"/><path d="M811 135 L196.8 700 L211.0 700 Z" fill="rgb(176,156,122)"/><path d="M811 135 L196.8 700" stroke="#8a7758" stroke-opacity="0.25" stroke-width="0.7"/><path d="M811 135 L211.0 700 L223.0 700 Z" fill="rgb(174,154,119)"/><path d="M811 135 L211.0 700" stroke="#8a7758" stroke-opacity="0.25" stroke-width="0.7"/><path d="M811 135 L223.0 700 L237.9 700 Z" fill="rgb(174,154,119)"/><path d="M811 135 L223.0 700" stroke="#8a7758" stroke-opacity="0.25" stroke-width="0.7"/><path d="M811 135 L237.9 700 L250.0 700 Z" fill="rgb(169,149,115)"/><path d="M811 135 L237.9 700" stroke="#8a7758" stroke-opacity="0.25" stroke-width="0.7"/><path d="M811 135 L250.0 700 L265.6 700 Z" fill="rgb(176,156,122)"/><path d="M811 135 L250.0 700" stroke="#8a7758" stroke-opacity="0.25" stroke-width="0.7"/><path d="M811 135 L265.6 700 L278.4 700 Z" fill="rgb(167,147,113)"/><path d="M811 135 L265.6 700" stroke="#8a7758" stroke-opacity="0.25" stroke-width="0.7"/><path d="M811 135 L278.4 700 L293.6 700 Z" fill="rgb(167,147,113)"/><path d="M811 135 L278.4 700" stroke="#8a7758" stroke-opacity="0.25" stroke-width="0.7"/><path d="M811 135 L293.6 700 L304.9 700 Z" fill="rgb(171,151,117)"/><path d="M811 135 L293.6 700" stroke="#8a7758" stroke-opacity="0.25" stroke-width="0.7"/><path d="M811 135 L304.9 700 L316.2 700 Z" fill="rgb(176,156,122)"/><path d="M811 135 L304.9 700" stroke="#8a7758" stroke-opacity="0.25" stroke-width="0.7"/><path d="M811 135 L316.2 700 L327.3 700 Z" fill="rgb(167,147,113)"/><path d="M811 135 L316.2 700" stroke="#8a7758" stroke-opacity="0.25" stroke-width="0.7"/><path d="M811 135 L327.3 700 L341.3 700 Z" fill="rgb(174,154,119)"/><path d="M811 135 L327.3 700" stroke="#8a7758" stroke-opacity="0.25" stroke-width="0.7"/><path d="M811 135 L341.3 700 L354.7 700 Z" fill="rgb(176,156,122)"/><path d="M811 135 L341.3 700" stroke="#8a7758" stroke-opacity="0.25" stroke-width="0.7"/><path d="M811 135 L354.7 700 L370.6 700 Z" fill="rgb(169,149,115)"/><path d="M811 135 L354.7 700" stroke="#8a7758" stroke-opacity="0.25" stroke-width="0.7"/><path d="M811 135 L370.6 700 L383.7 700 Z" fill="rgb(162,142,108)"/><path d="M811 135 L370.6 700" stroke="#8a7758" stroke-opacity="0.25" stroke-width="0.7"/><path d="M811 135 L383.7 700 L397.9 700 Z" fill="rgb(169,149,115)"/><path d="M811 135 L383.7 700" stroke="#8a7758" stroke-opacity="0.25" stroke-width="0.7"/><path d="M811 135 L397.9 700 L409.6 700 Z" fill="rgb(171,151,117)"/><path d="M811 135 L397.9 700" stroke="#8a7758" stroke-opacity="0.25" stroke-width="0.7"/><path d="M811 135 L409.6 700 L424.4 700 Z" fill="rgb(174,154,119)"/><path d="M811 135 L409.6 700" stroke="#8a7758" stroke-opacity="0.25" stroke-width="0.7"/><path d="M811 135 L424.4 700 L439.0 700 Z" fill="rgb(167,147,113)"/><path d="M811 135 L424.4 700" stroke="#8a7758" stroke-opacity="0.25" stroke-width="0.7"/><path d="M811 135 L439.0 700 L452.2 700 Z" fill="rgb(167,147,113)"/><path d="M811 135 L439.0 700" stroke="#8a7758" stroke-opacity="0.25" stroke-width="0.7"/><path d="M811 135 L452.2 700 L463.3 700 Z" fill="rgb(174,154,119)"/><path d="M811 135 L452.2 700" stroke="#8a7758" stroke-opacity="0.25" stroke-width="0.7"/><path d="M811 135 L463.3 700 L478.5 700 Z" fill="rgb(164,144,109)"/><path d="M811 135 L463.3 700" stroke="#8a7758" stroke-opacity="0.25" stroke-width="0.7"/><path d="M811 135 L478.5 700 L491.2 700 Z" fill="rgb(166,146,111)"/><path d="M811 135 L478.5 700" stroke="#8a7758" stroke-opacity="0.25" stroke-width="0.7"/><path d="M811 135 L491.2 700 L503.0 700 Z" fill="rgb(167,147,113)"/><path d="M811 135 L491.2 700" stroke="#8a7758" stroke-opacity="0.25" stroke-width="0.7"/><path d="M811 135 L503.0 700 L515.7 700 Z" fill="rgb(169,149,115)"/><path d="M811 135 L503.0 700" stroke="#8a7758" stroke-opacity="0.25" stroke-width="0.7"/><path d="M811 135 L515.7 700 L528.2 700 Z" fill="rgb(162,142,108)"/><path d="M811 135 L515.7 700" stroke="#8a7758" stroke-opacity="0.25" stroke-width="0.7"/><path d="M811 135 L528.2 700 L541.5 700 Z" fill="rgb(167,147,113)"/><path d="M811 135 L528.2 700" stroke="#8a7758" stroke-opacity="0.25" stroke-width="0.7"/><path d="M811 135 L541.5 700 L553.2 700 Z" fill="rgb(166,146,111)"/><path d="M811 135 L541.5 700" stroke="#8a7758" stroke-opacity="0.25" stroke-width="0.7"/><path d="M811 135 L553.2 700 L568.5 700 Z" fill="rgb(167,147,113)"/><path d="M811 135 L553.2 700" stroke="#8a7758" stroke-opacity="0.25" stroke-width="0.7"/><path d="M811 135 L568.5 700 L582.2 700 Z" fill="rgb(166,146,111)"/><path d="M811 135 L568.5 700" stroke="#8a7758" stroke-opacity="0.25" stroke-width="0.7"/><path d="M811 135 L582.2 700 L595.9 700 Z" fill="rgb(164,144,109)"/><path d="M811 135 L582.2 700" stroke="#8a7758" stroke-opacity="0.25" stroke-width="0.7"/><path d="M811 135 L595.9 700 L610.0 700 Z" fill="rgb(164,144,109)"/><path d="M811 135 L595.9 700" stroke="#8a7758" stroke-opacity="0.25" stroke-width="0.7"/><path d="M811 135 L610.0 700 L624.8 700 Z" fill="rgb(167,147,113)"/><path d="M811 135 L610.0 700" stroke="#8a7758" stroke-opacity="0.25" stroke-width="0.7"/><path d="M811 135 L624.8 700 L639.3 700 Z" fill="rgb(167,147,113)"/><path d="M811 135 L624.8 700" stroke="#8a7758" stroke-opacity="0.25" stroke-width="0.7"/><path d="M811 135 L639.3 700 L653.0 700 Z" fill="rgb(164,144,109)"/><path d="M811 135 L639.3 700" stroke="#8a7758" stroke-opacity="0.25" stroke-width="0.7"/><path d="M811 135 L653.0 700 L667.9 700 Z" fill="rgb(167,147,113)"/><path d="M811 135 L653.0 700" stroke="#8a7758" stroke-opacity="0.25" stroke-width="0.7"/><path d="M811 135 L667.9 700 L681.9 700 Z" fill="rgb(164,144,109)"/><path d="M811 135 L667.9 700" stroke="#8a7758" stroke-opacity="0.25" stroke-width="0.7"/><path d="M811 135 L681.9 700 L694.1 700 Z" fill="rgb(171,151,117)"/><path d="M811 135 L681.9 700" stroke="#8a7758" stroke-opacity="0.25" stroke-width="0.7"/><path d="M811 135 L694.1 700 L708.0 700 Z" fill="rgb(176,156,122)"/><path d="M811 135 L694.1 700" stroke="#8a7758" stroke-opacity="0.25" stroke-width="0.7"/><path d="M811 135 L708.0 700 L722.5 700 Z" fill="rgb(162,142,108)"/><path d="M811 135 L708.0 700" stroke="#8a7758" stroke-opacity="0.25" stroke-width="0.7"/><path d="M811 135 L722.5 700 L735.5 700 Z" fill="rgb(169,149,115)"/><path d="M811 135 L722.5 700" stroke="#8a7758" stroke-opacity="0.25" stroke-width="0.7"/><path d="M811 135 L735.5 700 L750.6 700 Z" fill="rgb(169,149,115)"/><path d="M811 135 L735.5 700" stroke="#8a7758" stroke-opacity="0.25" stroke-width="0.7"/><path d="M811 135 L750.6 700 L766.0 700 Z" fill="rgb(171,151,117)"/><path d="M811 135 L750.6 700" stroke="#8a7758" stroke-opacity="0.25" stroke-width="0.7"/><path d="M811 135 L766.0 700 L777.1 700 Z" fill="rgb(174,154,119)"/><path d="M811 135 L766.0 700" stroke="#8a7758" stroke-opacity="0.25" stroke-width="0.7"/><path d="M811 135 L777.1 700 L788.4 700 Z" fill="rgb(171,151,117)"/><path d="M811 135 L777.1 700" stroke="#8a7758" stroke-opacity="0.25" stroke-width="0.7"/><path d="M811 135 L788.4 700 L803.2 700 Z" fill="rgb(174,154,119)"/><path d="M811 135 L788.4 700" stroke="#8a7758" stroke-opacity="0.25" stroke-width="0.7"/><path d="M811 135 L803.2 700 L815.1 700 Z" fill="rgb(164,144,109)"/><path d="M811 135 L803.2 700" stroke="#8a7758" stroke-opacity="0.25" stroke-width="0.7"/><path d="M811 135 L815.1 700 L830.0 700 Z" fill="rgb(167,147,113)"/><path d="M811 135 L815.1 700" stroke="#8a7758" stroke-opacity="0.25" stroke-width="0.7"/><path d="M811 135 L830.0 700 L844.9 700 Z" fill="rgb(167,147,113)"/><path d="M811 135 L830.0 700" stroke="#8a7758" stroke-opacity="0.25" stroke-width="0.7"/><path d="M811 135 L844.9 700 L858.6 700 Z" fill="rgb(166,146,111)"/><path d="M811 135 L844.9 700" stroke="#8a7758" stroke-opacity="0.25" stroke-width="0.7"/><path d="M811 135 L858.6 700 L871.0 700 Z" fill="rgb(169,149,115)"/><path d="M811 135 L858.6 700" stroke="#8a7758" stroke-opacity="0.25" stroke-width="0.7"/><path d="M811 135 L871.0 700 L885.3 700 Z" fill="rgb(167,147,113)"/><path d="M811 135 L871.0 700" stroke="#8a7758" stroke-opacity="0.25" stroke-width="0.7"/><path d="M811 135 L885.3 700 L898.3 700 Z" fill="rgb(167,147,113)"/><path d="M811 135 L885.3 700" stroke="#8a7758" stroke-opacity="0.25" stroke-width="0.7"/><path d="M811 135 L898.3 700 L909.6 700 Z" fill="rgb(167,147,113)"/><path d="M811 135 L898.3 700" stroke="#8a7758" stroke-opacity="0.25" stroke-width="0.7"/><path d="M811 135 L909.6 700 L923.5 700 Z" fill="rgb(174,154,119)"/><path d="M811 135 L909.6 700" stroke="#8a7758" stroke-opacity="0.25" stroke-width="0.7"/><path d="M811 135 L923.5 700 L936.1 700 Z" fill="rgb(166,146,111)"/><path d="M811 135 L923.5 700" stroke="#8a7758" stroke-opacity="0.25" stroke-width="0.7"/><path d="M811 135 L936.1 700 L950.9 700 Z" fill="rgb(166,146,111)"/><path d="M811 135 L936.1 700" stroke="#8a7758" stroke-opacity="0.25" stroke-width="0.7"/><path d="M811 135 L950.9 700 L963.4 700 Z" fill="rgb(171,151,117)"/><path d="M811 135 L950.9 700" stroke="#8a7758" stroke-opacity="0.25" stroke-width="0.7"/><path d="M811 135 L963.4 700 L975.0 700 Z" fill="rgb(174,154,119)"/><path d="M811 135 L963.4 700" stroke="#8a7758" stroke-opacity="0.25" stroke-width="0.7"/><path d="M811 135 L975.0 700 L990.5 700 Z" fill="rgb(162,142,108)"/><path d="M811 135 L975.0 700" stroke="#8a7758" stroke-opacity="0.25" stroke-width="0.7"/><path d="M811 135 L990.5 700 L1003.4 700 Z" fill="rgb(171,151,117)"/><path d="M811 135 L990.5 700" stroke="#8a7758" stroke-opacity="0.25" stroke-width="0.7"/><path d="M811 135 L1003.4 700 L1017.0 700 Z" fill="rgb(164,144,109)"/><path d="M811 135 L1003.4 700" stroke="#8a7758" stroke-opacity="0.25" stroke-width="0.7"/><path d="M811 135 L1017.0 700 L1031.1 700 Z" fill="rgb(174,154,119)"/><path d="M811 135 L1017.0 700" stroke="#8a7758" stroke-opacity="0.25" stroke-width="0.7"/><path d="M811 135 L1031.1 700 L1043.2 700 Z" fill="rgb(169,149,115)"/><path d="M811 135 L1031.1 700" stroke="#8a7758" stroke-opacity="0.25" stroke-width="0.7"/><path d="M811 135 L1043.2 700 L1057.8 700 Z" fill="rgb(162,142,108)"/><path d="M811 135 L1043.2 700" stroke="#8a7758" stroke-opacity="0.25" stroke-width="0.7"/><path d="M811 135 L1057.8 700 L1071.3 700 Z" fill="rgb(167,147,113)"/><path d="M811 135 L1057.8 700" stroke="#8a7758" stroke-opacity="0.25" stroke-width="0.7"/><path d="M811 135 L1071.3 700 L1085.3 700 Z" fill="rgb(171,151,117)"/><path d="M811 135 L1071.3 700" stroke="#8a7758" stroke-opacity="0.25" stroke-width="0.7"/><path d="M811 135 L1085.3 700 L1097.3 700 Z" fill="rgb(162,142,108)"/><path d="M811 135 L1085.3 700" stroke="#8a7758" stroke-opacity="0.25" stroke-width="0.7"/><path d="M811 135 L1097.3 700 L1110.4 700 Z" fill="rgb(167,147,113)"/><path d="M811 135 L1097.3 700" stroke="#8a7758" stroke-opacity="0.25" stroke-width="0.7"/><path d="M811 135 L1110.4 700 L1122.2 700 Z" fill="rgb(167,147,113)"/><path d="M811 135 L1110.4 700" stroke="#8a7758" stroke-opacity="0.25" stroke-width="0.7"/><path d="M811 135 L1122.2 700 L1134.3 700 Z" fill="rgb(169,149,115)"/><path d="M811 135 L1122.2 700" stroke="#8a7758" stroke-opacity="0.25" stroke-width="0.7"/><path d="M811 135 L1134.3 700 L1145.3 700 Z" fill="rgb(167,147,113)"/><path d="M811 135 L1134.3 700" stroke="#8a7758" stroke-opacity="0.25" stroke-width="0.7"/><path d="M811 135 L1145.3 700 L1160.6 700 Z" fill="rgb(174,154,119)"/><path d="M811 135 L1145.3 700" stroke="#8a7758" stroke-opacity="0.25" stroke-width="0.7"/><path d="M811 135 L1160.6 700 L1172.8 700 Z" fill="rgb(169,149,115)"/><path d="M811 135 L1160.6 700" stroke="#8a7758" stroke-opacity="0.25" stroke-width="0.7"/><path d="M811 135 L1172.8 700 L1186.5 700 Z" fill="rgb(171,151,117)"/><path d="M811 135 L1172.8 700" stroke="#8a7758" stroke-opacity="0.25" stroke-width="0.7"/><path d="M811 135 L1186.5 700 L1198.4 700 Z" fill="rgb(166,146,111)"/><path d="M811 135 L1186.5 700" stroke="#8a7758" stroke-opacity="0.25" stroke-width="0.7"/><path d="M811 135 L1198.4 700 L1212.9 700 Z" fill="rgb(174,154,119)"/><path d="M811 135 L1198.4 700" stroke="#8a7758" stroke-opacity="0.25" stroke-width="0.7"/><path d="M811 135 L1212.9 700 L1224.6 700 Z" fill="rgb(169,149,115)"/><path d="M811 135 L1212.9 700" stroke="#8a7758" stroke-opacity="0.25" stroke-width="0.7"/><path d="M811 135 L1224.6 700 L1240.1 700 Z" fill="rgb(166,146,111)"/><path d="M811 135 L1224.6 700" stroke="#8a7758" stroke-opacity="0.25" stroke-width="0.7"/><path d="M811 135 L1240.1 700 L1252.5 700 Z" fill="rgb(164,144,109)"/><path d="M811 135 L1240.1 700" stroke="#8a7758" stroke-opacity="0.25" stroke-width="0.7"/><path d="M811 135 L1252.5 700 L1267.9 700 Z" fill="rgb(167,147,113)"/><path d="M811 135 L1252.5 700" stroke="#8a7758" stroke-opacity="0.25" stroke-width="0.7"/><path d="M811 135 L1267.9 700 L1282.5 700 Z" fill="rgb(167,147,113)"/><path d="M811 135 L1267.9 700" stroke="#8a7758" stroke-opacity="0.25" stroke-width="0.7"/><path d="M811 135 L1282.5 700 L1295.1 700 Z" fill="rgb(171,151,117)"/><path d="M811 135 L1282.5 700" stroke="#8a7758" stroke-opacity="0.25" stroke-width="0.7"/><path d="M811 135 L1295.1 700 L1310.2 700 Z" fill="rgb(166,146,111)"/><path d="M811 135 L1295.1 700" stroke="#8a7758" stroke-opacity="0.25" stroke-width="0.7"/><path d="M811 135 L1310.2 700 L1324.8 700 Z" fill="rgb(162,142,108)"/><path d="M811 135 L1310.2 700" stroke="#8a7758" stroke-opacity="0.25" stroke-width="0.7"/><path d="M811 135 L1324.8 700 L1339.0 700 Z" fill="rgb(167,147,113)"/><path d="M811 135 L1324.8 700" stroke="#8a7758" stroke-opacity="0.25" stroke-width="0.7"/><path d="M811 135 L1339.0 700 L1354.5 700 Z" fill="rgb(167,147,113)"/><path d="M811 135 L1339.0 700" stroke="#8a7758" stroke-opacity="0.25" stroke-width="0.7"/><path d="M811 135 L1354.5 700 L1369.5 700 Z" fill="rgb(167,147,113)"/><path d="M811 135 L1354.5 700" stroke="#8a7758" stroke-opacity="0.25" stroke-width="0.7"/><path d="M811 135 L1369.5 700 L1384.5 700 Z" fill="rgb(162,142,108)"/><path d="M811 135 L1369.5 700" stroke="#8a7758" stroke-opacity="0.25" stroke-width="0.7"/><path d="M811 135 L1384.5 700 L1399.9 700 Z" fill="rgb(171,151,117)"/><path d="M811 135 L1384.5 700" stroke="#8a7758" stroke-opacity="0.25" stroke-width="0.7"/><path d="M811 135 L1399.9 700 L1415.8 700 Z" fill="rgb(174,154,119)"/><path d="M811 135 L1399.9 700" stroke="#8a7758" stroke-opacity="0.25" stroke-width="0.7"/><path d="M811 135 L1415.8 700 L1430.1 700 Z" fill="rgb(176,156,122)"/><path d="M811 135 L1415.8 700" stroke="#8a7758" stroke-opacity="0.25" stroke-width="0.7"/><path d="M811 135 L1430.1 700 L1442.1 700 Z" fill="rgb(166,146,111)"/><path d="M811 135 L1430.1 700" stroke="#8a7758" stroke-opacity="0.25" stroke-width="0.7"/><path d="M811 135 L1442.1 700 L1456.4 700 Z" fill="rgb(171,151,117)"/><path d="M811 135 L1442.1 700" stroke="#8a7758" stroke-opacity="0.25" stroke-width="0.7"/><path d="M811 135 L1456.4 700 L1469.3 700 Z" fill="rgb(167,147,113)"/><path d="M811 135 L1456.4 700" stroke="#8a7758" stroke-opacity="0.25" stroke-width="0.7"/><path d="M811 135 L1469.3 700 L1484.2 700 Z" fill="rgb(176,156,122)"/><path d="M811 135 L1469.3 700" stroke="#8a7758" stroke-opacity="0.25" stroke-width="0.7"/><path d="M811 135 L1484.2 700 L1497.1 700 Z" fill="rgb(166,146,111)"/><path d="M811 135 L1484.2 700" stroke="#8a7758" stroke-opacity="0.25" stroke-width="0.7"/><path d="M811 135 L1497.1 700 L1511.7 700 Z" fill="rgb(164,144,109)"/><path d="M811 135 L1497.1 700" stroke="#8a7758" stroke-opacity="0.25" stroke-width="0.7"/><path d="M811 135 L1511.7 700 L1524.7 700 Z" fill="rgb(168,149,114)"/><path d="M811 135 L1511.7 700" stroke="#8a7758" stroke-opacity="0.25" stroke-width="0.7"/><path d="M811 135 L1524.7 700 L1538.7 700 Z" fill="rgb(168,149,114)"/><path d="M811 135 L1524.7 700" stroke="#8a7758" stroke-opacity="0.25" stroke-width="0.7"/><path d="M811 135 L1538.7 700 L1551.0 700 Z" fill="rgb(165,146,111)"/><path d="M811 135 L1538.7 700" stroke="#8a7758" stroke-opacity="0.25" stroke-width="0.7"/><path d="M811 135 L1551.0 700 L1563.2 700 Z" fill="rgb(172,153,118)"/><path d="M811 135 L1551.0 700" stroke="#8a7758" stroke-opacity="0.25" stroke-width="0.7"/><path d="M811 135 L1563.2 700 L1576.9 700 Z" fill="rgb(177,158,123)"/><path d="M811 135 L1563.2 700" stroke="#8a7758" stroke-opacity="0.25" stroke-width="0.7"/><path d="M811 135 L1576.9 700 L1588.3 700 Z" fill="rgb(174,155,120)"/><path d="M811 135 L1576.9 700" stroke="#8a7758" stroke-opacity="0.25" stroke-width="0.7"/><path d="M811 135 L1588.3 700 L1600.3 700 Z" fill="rgb(168,149,114)"/><path d="M811 135 L1588.3 700" stroke="#8a7758" stroke-opacity="0.25" stroke-width="0.7"/><path d="M811 135 L1600.3 700 L1615.3 700 Z" fill="rgb(170,151,116)"/><path d="M811 135 L1600.3 700" stroke="#8a7758" stroke-opacity="0.25" stroke-width="0.7"/><path d="M811 135 L1615.3 700 L1630.4 700 Z" fill="rgb(168,149,114)"/><path d="M811 135 L1615.3 700" stroke="#8a7758" stroke-opacity="0.25" stroke-width="0.7"/><path d="M811 135 L1630.4 700 L1642.2 700 Z" fill="rgb(167,148,113)"/><path d="M811 135 L1630.4 700" stroke="#8a7758" stroke-opacity="0.25" stroke-width="0.7"/><path d="M811 135 L1642.2 700 L1657.4 700 Z" fill="rgb(170,151,116)"/><path d="M811 135 L1642.2 700" stroke="#8a7758" stroke-opacity="0.25" stroke-width="0.7"/><path d="M811 135 L1657.4 700 L1668.8 700 Z" fill="rgb(177,158,123)"/><path d="M811 135 L1657.4 700" stroke="#8a7758" stroke-opacity="0.25" stroke-width="0.7"/><path d="M811 135 L1668.8 700 L1683.2 700 Z" fill="rgb(165,146,111)"/><path d="M811 135 L1668.8 700" stroke="#8a7758" stroke-opacity="0.25" stroke-width="0.7"/><path d="M811 135 L1683.2 700 L1696.5 700 Z" fill="rgb(172,153,118)"/><path d="M811 135 L1683.2 700" stroke="#8a7758" stroke-opacity="0.25" stroke-width="0.7"/><path d="M811 135 L1696.5 700 L1707.8 700 Z" fill="rgb(177,158,123)"/><path d="M811 135 L1696.5 700" stroke="#8a7758" stroke-opacity="0.25" stroke-width="0.7"/><path d="M811 135 L1707.8 700 L1718.8 700 Z" fill="rgb(168,149,114)"/><path d="M811 135 L1707.8 700" stroke="#8a7758" stroke-opacity="0.25" stroke-width="0.7"/><path d="M811 135 L1718.8 700 L1731.6 700 Z" fill="rgb(177,158,123)"/><path d="M811 135 L1718.8 700" stroke="#8a7758" stroke-opacity="0.25" stroke-width="0.7"/><path d="M811 135 L1731.6 700 L1743.0 700 Z" fill="rgb(177,158,123)"/><path d="M811 135 L1731.6 700" stroke="#8a7758" stroke-opacity="0.25" stroke-width="0.7"/><path d="M811 135 L1743.0 700 L1758.5 700 Z" fill="rgb(174,155,120)"/><path d="M811 135 L1743.0 700" stroke="#8a7758" stroke-opacity="0.25" stroke-width="0.7"/><path d="M811 135 L1758.5 700 L1774.4 700 Z" fill="rgb(170,151,116)"/><path d="M811 135 L1758.5 700" stroke="#8a7758" stroke-opacity="0.25" stroke-width="0.7"/><path d="M811 135 L1774.4 700 L1786.0 700 Z" fill="rgb(167,148,113)"/><path d="M811 135 L1774.4 700" stroke="#8a7758" stroke-opacity="0.25" stroke-width="0.7"/><path d="M811 135 L1786.0 700 L1800.8 700 Z" fill="rgb(174,155,120)"/><path d="M811 135 L1786.0 700" stroke="#8a7758" stroke-opacity="0.25" stroke-width="0.7"/><path d="M811 135 L1800.8 700 L1814.8 700 Z" fill="rgb(167,148,113)"/><path d="M811 135 L1800.8 700" stroke="#8a7758" stroke-opacity="0.25" stroke-width="0.7"/><path d="M811 135 L1814.8 700 L1830.5 700 Z" fill="rgb(167,148,113)"/><path d="M811 135 L1814.8 700" stroke="#8a7758" stroke-opacity="0.25" stroke-width="0.7"/><path d="M811 135 L1830.5 700 L1841.7 700 Z" fill="rgb(163,144,109)"/><path d="M811 135 L1830.5 700" stroke="#8a7758" stroke-opacity="0.25" stroke-width="0.7"/><path d="M811 135 L1841.7 700 L1853.5 700 Z" fill="rgb(172,153,118)"/><path d="M811 135 L1841.7 700" stroke="#8a7758" stroke-opacity="0.25" stroke-width="0.7"/><path d="M811 135 L1853.5 700 L1864.9 700 Z" fill="rgb(172,153,118)"/><path d="M811 135 L1853.5 700" stroke="#8a7758" stroke-opacity="0.25" stroke-width="0.7"/><path d="M811 135 L1864.9 700 L1879.1 700 Z" fill="rgb(167,148,113)"/><path d="M811 135 L1864.9 700" stroke="#8a7758" stroke-opacity="0.25" stroke-width="0.7"/><path d="M811 135 L1879.1 700 L1891.6 700 Z" fill="rgb(163,144,109)"/><path d="M811 135 L1879.1 700" stroke="#8a7758" stroke-opacity="0.25" stroke-width="0.7"/><path d="M811 135 L1891.6 700 L1904.5 700 Z" fill="rgb(167,148,113)"/><path d="M811 135 L1891.6 700" stroke="#8a7758" stroke-opacity="0.25" stroke-width="0.7"/><path d="M811 135 L1904.5 700 L1918.2 700 Z" fill="rgb(168,149,114)"/><path d="M811 135 L1904.5 700" stroke="#8a7758" stroke-opacity="0.25" stroke-width="0.7"/><path d="M811 135 L1918.2 700 L1933.7 700 Z" fill="rgb(163,144,109)"/><path d="M811 135 L1918.2 700" stroke="#8a7758" stroke-opacity="0.25" stroke-width="0.7"/><path d="M811 135 L1933.7 700 L1947.9 700 Z" fill="rgb(174,155,120)"/><path d="M811 135 L1933.7 700" stroke="#8a7758" stroke-opacity="0.25" stroke-width="0.7"/><path d="M811 135 L1947.9 700 L1960.1 700 Z" fill="rgb(172,153,118)"/><path d="M811 135 L1947.9 700" stroke="#8a7758" stroke-opacity="0.25" stroke-width="0.7"/><path d="M811 135 L1960.1 700 L1975.3 700 Z" fill="rgb(167,148,113)"/><path d="M811 135 L1960.1 700" stroke="#8a7758" stroke-opacity="0.25" stroke-width="0.7"/><path d="M811 135 L1975.3 700 L1988.0 700 Z" fill="rgb(174,155,120)"/><path d="M811 135 L1975.3 700" stroke="#8a7758" stroke-opacity="0.25" stroke-width="0.7"/><path d="M811 135 L1988.0 700 L2003.7 700 Z" fill="rgb(167,148,113)"/><path d="M811 135 L1988.0 700" stroke="#8a7758" stroke-opacity="0.25" stroke-width="0.7"/><path d="M811 135 L2003.7 700 L2018.3 700 Z" fill="rgb(167,148,113)"/><path d="M811 135 L2003.7 700" stroke="#8a7758" stroke-opacity="0.25" stroke-width="0.7"/><path d="M811 135 L2018.3 700 L2032.4 700 Z" fill="rgb(172,153,118)"/><path d="M811 135 L2018.3 700" stroke="#8a7758" stroke-opacity="0.25" stroke-width="0.7"/><path d="M811 135 L2032.4 700 L2044.0 700 Z" fill="rgb(165,146,111)"/><path d="M811 135 L2032.4 700" stroke="#8a7758" stroke-opacity="0.25" stroke-width="0.7"/><path d="M811 135 L2044.0 700 L2055.7 700 Z" fill="rgb(167,148,113)"/><path d="M811 135 L2044.0 700" stroke="#8a7758" stroke-opacity="0.25" stroke-width="0.7"/><path d="M811 135 L2055.7 700 L2071.7 700 Z" fill="rgb(172,153,118)"/><path d="M811 135 L2055.7 700" stroke="#8a7758" stroke-opacity="0.25" stroke-width="0.7"/><path d="M811 135 L2071.7 700 L2083.4 700 Z" fill="rgb(168,149,114)"/><path d="M811 135 L2071.7 700" stroke="#8a7758" stroke-opacity="0.25" stroke-width="0.7"/><path d="M811 135 L2083.4 700 L2098.8 700 Z" fill="rgb(170,151,116)"/><path d="M811 135 L2083.4 700" stroke="#8a7758" stroke-opacity="0.25" stroke-width="0.7"/><path d="M811 135 L2098.8 700 L2113.7 700 Z" fill="rgb(168,149,114)"/><path d="M811 135 L2098.8 700" stroke="#8a7758" stroke-opacity="0.25" stroke-width="0.7"/><path d="M811 135 L2113.7 700 L2128.9 700 Z" fill="rgb(165,146,111)"/><path d="M811 135 L2113.7 700" stroke="#8a7758" stroke-opacity="0.25" stroke-width="0.7"/><path d="M811 135 L2128.9 700 L2144.2 700 Z" fill="rgb(170,151,116)"/><path d="M811 135 L2128.9 700" stroke="#8a7758" stroke-opacity="0.25" stroke-width="0.7"/><path d="M811 135 L2144.2 700 L2156.1 700 Z" fill="rgb(165,146,111)"/><path d="M811 135 L2144.2 700" stroke="#8a7758" stroke-opacity="0.25" stroke-width="0.7"/><path d="M811 135 L2156.1 700 L2169.6 700 Z" fill="rgb(163,144,109)"/><path d="M811 135 L2156.1 700" stroke="#8a7758" stroke-opacity="0.25" stroke-width="0.7"/><path d="M811 135 L2169.6 700 L2183.6 700 Z" fill="rgb(163,144,109)"/><path d="M811 135 L2169.6 700" stroke="#8a7758" stroke-opacity="0.25" stroke-width="0.7"/><path d="M811 135 L2183.6 700 L2196.2 700 Z" fill="rgb(172,153,118)"/><path d="M811 135 L2183.6 700" stroke="#8a7758" stroke-opacity="0.25" stroke-width="0.7"/><path d="M811 135 L2196.2 700 L2209.2 700 Z" fill="rgb(172,153,118)"/><path d="M811 135 L2196.2 700" stroke="#8a7758" stroke-opacity="0.25" stroke-width="0.7"/><path d="M811 135 L2209.2 700 L2222.2 700 Z" fill="rgb(170,151,116)"/><path d="M811 135 L2209.2 700" stroke="#8a7758" stroke-opacity="0.25" stroke-width="0.7"/><path d="M811 135 L2222.2 700 L2235.8 700 Z" fill="rgb(167,148,113)"/><path d="M811 135 L2222.2 700" stroke="#8a7758" stroke-opacity="0.25" stroke-width="0.7"/><path d="M811 135 L2235.8 700 L2251.2 700 Z" fill="rgb(170,151,116)"/><path d="M811 135 L2235.8 700" stroke="#8a7758" stroke-opacity="0.25" stroke-width="0.7"/><path d="M811 135 L2251.2 700 L2265.8 700 Z" fill="rgb(172,153,118)"/><path d="M811 135 L2251.2 700" stroke="#8a7758" stroke-opacity="0.25" stroke-width="0.7"/><path d="M811 135 L2265.8 700 L2280.7 700 Z" fill="rgb(168,149,114)"/><path d="M811 135 L2265.8 700" stroke="#8a7758" stroke-opacity="0.25" stroke-width="0.7"/><path d="M811 135 L2280.7 700 L2293.3 700 Z" fill="rgb(168,149,114)"/><path d="M811 135 L2280.7 700" stroke="#8a7758" stroke-opacity="0.25" stroke-width="0.7"/><path d="M811 135 L2293.3 700 L2307.5 700 Z" fill="rgb(168,149,114)"/><path d="M811 135 L2293.3 700" stroke="#8a7758" stroke-opacity="0.25" stroke-width="0.7"/><path d="M811 135 L2307.5 700 L2319.0 700 Z" fill="rgb(170,151,116)"/><path d="M811 135 L2307.5 700" stroke="#8a7758" stroke-opacity="0.25" stroke-width="0.7"/><path d="M811 135 L2319.0 700 L2331.1 700 Z" fill="rgb(168,149,114)"/><path d="M811 135 L2319.0 700" stroke="#8a7758" stroke-opacity="0.25" stroke-width="0.7"/><path d="M811 135 L2331.1 700 L2344.1 700 Z" fill="rgb(174,155,120)"/><path d="M811 135 L2331.1 700" stroke="#8a7758" stroke-opacity="0.25" stroke-width="0.7"/><path d="M811 135 L2344.1 700 L2358.8 700 Z" fill="rgb(165,146,111)"/><path d="M811 135 L2344.1 700" stroke="#8a7758" stroke-opacity="0.25" stroke-width="0.7"/><path d="M811 135 L2358.8 700 L2374.2 700 Z" fill="rgb(172,153,118)"/><path d="M811 135 L2358.8 700" stroke="#8a7758" stroke-opacity="0.25" stroke-width="0.7"/><path d="M811 135 L2374.2 700 L2390.0 700 Z" fill="rgb(168,149,114)"/><path d="M811 135 L2374.2 700" stroke="#8a7758" stroke-opacity="0.25" stroke-width="0.7"/><path d="M811 135 L2390.0 700 L2401.4 700 Z" fill="rgb(168,149,114)"/><path d="M811 135 L2390.0 700" stroke="#8a7758" stroke-opacity="0.25" stroke-width="0.7"/><path d="M811 135 L2401.4 700 L2416.9 700 Z" fill="rgb(170,151,116)"/><path d="M811 135 L2401.4 700" stroke="#8a7758" stroke-opacity="0.25" stroke-width="0.7"/><path d="M811 135 L2416.9 700 L2431.9 700 Z" fill="rgb(177,158,123)"/><path d="M811 135 L2416.9 700" stroke="#8a7758" stroke-opacity="0.25" stroke-width="0.7"/><path d="M811 135 L2431.9 700 L2443.5 700 Z" fill="rgb(168,149,114)"/><path d="M811 135 L2431.9 700" stroke="#8a7758" stroke-opacity="0.25" stroke-width="0.7"/><path d="M811 135 L2443.5 700 L2456.7 700 Z" fill="rgb(168,149,114)"/><path d="M811 135 L2443.5 700" stroke="#8a7758" stroke-opacity="0.25" stroke-width="0.7"/><path d="M811 135 L2456.7 700 L2469.7 700 Z" fill="rgb(167,148,113)"/><path d="M811 135 L2456.7 700" stroke="#8a7758" stroke-opacity="0.25" stroke-width="0.7"/><path d="M811 135 L2469.7 700 L2482.1 700 Z" fill="rgb(174,155,120)"/><path d="M811 135 L2469.7 700" stroke="#8a7758" stroke-opacity="0.25" stroke-width="0.7"/><path d="M811 135 L2482.1 700 L2494.1 700 Z" fill="rgb(170,151,116)"/><path d="M811 135 L2482.1 700" stroke="#8a7758" stroke-opacity="0.25" stroke-width="0.7"/><path d="M811 135 L2494.1 700 L2509.5 700 Z" fill="rgb(170,151,116)"/><path d="M811 135 L2494.1 700" stroke="#8a7758" stroke-opacity="0.25" stroke-width="0.7"/><path d="M811 135 L2509.5 700 L2520.6 700 Z" fill="rgb(170,151,116)"/><path d="M811 135 L2509.5 700" stroke="#8a7758" stroke-opacity="0.25" stroke-width="0.7"/><path d="M811 135 L2520.6 700 L2535.0 700 Z" fill="rgb(168,149,114)"/><path d="M811 135 L2520.6 700" stroke="#8a7758" stroke-opacity="0.25" stroke-width="0.7"/><path d="M811 135 L2535.0 700 L2550.5 700 Z" fill="rgb(167,148,113)"/><path d="M811 135 L2535.0 700" stroke="#8a7758" stroke-opacity="0.25" stroke-width="0.7"/><path d="M811 135 L2550.5 700 L2565.4 700 Z" fill="rgb(168,149,114)"/><path d="M811 135 L2550.5 700" stroke="#8a7758" stroke-opacity="0.25" stroke-width="0.7"/><path d="M811 135 L2565.4 700 L2579.7 700 Z" fill="rgb(168,149,114)"/><path d="M811 135 L2565.4 700" stroke="#8a7758" stroke-opacity="0.25" stroke-width="0.7"/><path d="M811 135 L2579.7 700 L2592.8 700 Z" fill="rgb(170,151,116)"/><path d="M811 135 L2579.7 700" stroke="#8a7758" stroke-opacity="0.25" stroke-width="0.7"/><path d="M811 135 L2592.8 700 L2607.0 700 Z" fill="rgb(163,144,109)"/><path d="M811 135 L2592.8 700" stroke="#8a7758" stroke-opacity="0.25" stroke-width="0.7"/><path d="M811 135 L2607.0 700 L2618.6 700 Z" fill="rgb(177,158,123)"/><path d="M811 135 L2607.0 700" stroke="#8a7758" stroke-opacity="0.25" stroke-width="0.7"/><path d="M811 135 L2618.6 700 L2630.6 700 Z" fill="rgb(177,158,123)"/><path d="M811 135 L2618.6 700" stroke="#8a7758" stroke-opacity="0.25" stroke-width="0.7"/><path d="M811 135 L2630.6 700 L2643.2 700 Z" fill="rgb(167,148,113)"/><path d="M811 135 L2630.6 700" stroke="#8a7758" stroke-opacity="0.25" stroke-width="0.7"/><path d="M811 135 L2643.2 700 L2656.7 700 Z" fill="rgb(174,155,120)"/><path d="M811 135 L2643.2 700" stroke="#8a7758" stroke-opacity="0.25" stroke-width="0.7"/><path d="M811 135 L2656.7 700 L2672.4 700 Z" fill="rgb(168,149,114)"/><path d="M811 135 L2656.7 700" stroke="#8a7758" stroke-opacity="0.25" stroke-width="0.7"/><path d="M811 135 L2672.4 700 L2687.1 700 Z" fill="rgb(172,153,118)"/><path d="M811 135 L2672.4 700" stroke="#8a7758" stroke-opacity="0.25" stroke-width="0.7"/><path d="M811 135 L2687.1 700 L2700.5 700 Z" fill="rgb(177,158,123)"/><path d="M811 135 L2687.1 700" stroke="#8a7758" stroke-opacity="0.25" stroke-width="0.7"/><path d="M811 135 L2700.5 700 L2714.6 700 Z" fill="rgb(168,149,114)"/><path d="M811 135 L2700.5 700" stroke="#8a7758" stroke-opacity="0.25" stroke-width="0.7"/><path d="M811 135 L2714.6 700 L2726.6 700 Z" fill="rgb(163,144,109)"/><path d="M811 135 L2714.6 700" stroke="#8a7758" stroke-opacity="0.25" stroke-width="0.7"/><path d="M811 135 L2726.6 700 L2742.6 700 Z" fill="rgb(168,149,114)"/><path d="M811 135 L2726.6 700" stroke="#8a7758" stroke-opacity="0.25" stroke-width="0.7"/><path d="M811 135 L2742.6 700 L2754.0 700 Z" fill="rgb(163,144,109)"/><path d="M811 135 L2742.6 700" stroke="#8a7758" stroke-opacity="0.25" stroke-width="0.7"/><path d="M811 135 L2754.0 700 L2769.8 700 Z" fill="rgb(172,153,118)"/><path d="M811 135 L2754.0 700" stroke="#8a7758" stroke-opacity="0.25" stroke-width="0.7"/><path d="M811 135 L2769.8 700 L2782.3 700 Z" fill="rgb(177,158,123)"/><path d="M811 135 L2769.8 700" stroke="#8a7758" stroke-opacity="0.25" stroke-width="0.7"/><path d="M811 135 L2782.3 700 L2796.4 700 Z" fill="rgb(168,149,114)"/><path d="M811 135 L2782.3 700" stroke="#8a7758" stroke-opacity="0.25" stroke-width="0.7"/><path d="M811 135 L2796.4 700 L2808.4 700 Z" fill="rgb(165,146,111)"/><path d="M811 135 L2796.4 700" stroke="#8a7758" stroke-opacity="0.25" stroke-width="0.7"/><path d="M811 135 L2808.4 700 L2824.3 700 Z" fill="rgb(172,153,118)"/><path d="M811 135 L2808.4 700" stroke="#8a7758" stroke-opacity="0.25" stroke-width="0.7"/><path d="M811 135 L2824.3 700 L2837.3 700 Z" fill="rgb(167,148,113)"/><path d="M811 135 L2824.3 700" stroke="#8a7758" stroke-opacity="0.25" stroke-width="0.7"/><path d="M811 135 L2837.3 700 L2849.7 700 Z" fill="rgb(170,151,116)"/><path d="M811 135 L2837.3 700" stroke="#8a7758" stroke-opacity="0.25" stroke-width="0.7"/><path d="M811 135 L2849.7 700 L2861.3 700 Z" fill="rgb(167,148,113)"/><path d="M811 135 L2849.7 700" stroke="#8a7758" stroke-opacity="0.25" stroke-width="0.7"/><path d="M811 135 L2861.3 700 L2876.8 700 Z" fill="rgb(172,153,118)"/><path d="M811 135 L2861.3 700" stroke="#8a7758" stroke-opacity="0.25" stroke-width="0.7"/><path d="M811 135 L2876.8 700 L2889.9 700 Z" fill="rgb(167,148,113)"/><path d="M811 135 L2876.8 700" stroke="#8a7758" stroke-opacity="0.25" stroke-width="0.7"/><path d="M811 135 L2889.9 700 L2902.7 700 Z" fill="rgb(168,149,114)"/><path d="M811 135 L2889.9 700" stroke="#8a7758" stroke-opacity="0.25" stroke-width="0.7"/><path d="M811 135 L2902.7 700 L2915.1 700 Z" fill="rgb(172,153,118)"/><path d="M811 135 L2902.7 700" stroke="#8a7758" stroke-opacity="0.25" stroke-width="0.7"/><path d="M811 135 L2915.1 700 L2927.0 700 Z" fill="rgb(174,155,120)"/><path d="M811 135 L2915.1 700" stroke="#8a7758" stroke-opacity="0.25" stroke-width="0.7"/><path d="M811 135 L2927.0 700 L2940.9 700 Z" fill="rgb(174,155,120)"/><path d="M811 135 L2927.0 700" stroke="#8a7758" stroke-opacity="0.25" stroke-width="0.7"/><path d="M811 135 L2940.9 700 L2955.2 700 Z" fill="rgb(165,146,111)"/><path d="M811 135 L2940.9 700" stroke="#8a7758" stroke-opacity="0.25" stroke-width="0.7"/><path d="M811 135 L2955.2 700 L2968.8 700 Z" fill="rgb(174,155,120)"/><path d="M811 135 L2955.2 700" stroke="#8a7758" stroke-opacity="0.25" stroke-width="0.7"/><path d="M811 135 L2968.8 700 L2982.4 700 Z" fill="rgb(165,146,111)"/><path d="M811 135 L2968.8 700" stroke="#8a7758" stroke-opacity="0.25" stroke-width="0.7"/><path d="M811 135 L2982.4 700 L2995.1 700 Z" fill="rgb(174,155,120)"/><path d="M811 135 L2982.4 700" stroke="#8a7758" stroke-opacity="0.25" stroke-width="0.7"/><path d="M811 135 L2995.1 700 L3006.5 700 Z" fill="rgb(163,144,109)"/><path d="M811 135 L2995.1 700" stroke="#8a7758" stroke-opacity="0.25" stroke-width="0.7"/><path d="M811 135 L3006.5 700 L3020.3 700 Z" fill="rgb(177,158,123)"/><path d="M811 135 L3006.5 700" stroke="#8a7758" stroke-opacity="0.25" stroke-width="0.7"/><path d="M811 135 L3020.3 700 L3032.7 700 Z" fill="rgb(163,144,109)"/><path d="M811 135 L3020.3 700" stroke="#8a7758" stroke-opacity="0.25" stroke-width="0.7"/><path d="M811 135 L3032.7 700 L3046.6 700 Z" fill="rgb(172,153,118)"/><path d="M811 135 L3032.7 700" stroke="#8a7758" stroke-opacity="0.25" stroke-width="0.7"/><path d="M811 135 L3046.6 700 L3058.9 700 Z" fill="rgb(167,148,113)"/><path d="M811 135 L3046.6 700" stroke="#8a7758" stroke-opacity="0.25" stroke-width="0.7"/><path d="M811 135 L3058.9 700 L3072.8 700 Z" fill="rgb(163,144,109)"/><path d="M811 135 L3058.9 700" stroke="#8a7758" stroke-opacity="0.25" stroke-width="0.7"/><path d="M811 135 L3072.8 700 L3085.8 700 Z" fill="rgb(163,144,109)"/><path d="M811 135 L3072.8 700" stroke="#8a7758" stroke-opacity="0.25" stroke-width="0.7"/><path d="M811 135 L3085.8 700 L3098.5 700 Z" fill="rgb(168,149,114)"/><path d="M811 135 L3085.8 700" stroke="#8a7758" stroke-opacity="0.25" stroke-width="0.7"/><path d="M811 135 L3098.5 700 L3112.3 700 Z" fill="rgb(168,149,114)"/><path d="M811 135 L3098.5 700" stroke="#8a7758" stroke-opacity="0.25" stroke-width="0.7"/><path d="M811 135 L3112.3 700 L3124.1 700 Z" fill="rgb(174,155,120)"/><path d="M811 135 L3112.3 700" stroke="#8a7758" stroke-opacity="0.25" stroke-width="0.7"/><path d="M811 135 L3124.1 700 L3135.4 700 Z" fill="rgb(172,153,118)"/><path d="M811 135 L3124.1 700" stroke="#8a7758" stroke-opacity="0.25" stroke-width="0.7"/><path d="M811 135 L3135.4 700 L3147.5 700 Z" fill="rgb(168,149,114)"/><path d="M811 135 L3135.4 700" stroke="#8a7758" stroke-opacity="0.25" stroke-width="0.7"/><path d="M811 135 L3147.5 700 L3159.1 700 Z" fill="rgb(167,148,113)"/><path d="M811 135 L3147.5 700" stroke="#8a7758" stroke-opacity="0.25" stroke-width="0.7"/><path d="M811 135 L3159.1 700 L3171.5 700 Z" fill="rgb(170,151,116)"/><path d="M811 135 L3159.1 700" stroke="#8a7758" stroke-opacity="0.25" stroke-width="0.7"/><path d="M811 135 L3171.5 700 L3182.9 700 Z" fill="rgb(168,149,114)"/><path d="M811 135 L3171.5 700" stroke="#8a7758" stroke-opacity="0.25" stroke-width="0.7"/><path d="M811 135 L3182.9 700 L3197.7 700 Z" fill="rgb(167,148,113)"/><path d="M811 135 L3182.9 700" stroke="#8a7758" stroke-opacity="0.25" stroke-width="0.7"/><path d="M811 135 L3197.7 700 L3212.2 700 Z" fill="rgb(177,158,123)"/><path d="M811 135 L3197.7 700" stroke="#8a7758" stroke-opacity="0.25" stroke-width="0.7"/><path d="M811 135 L3212.2 700 L3223.6 700 Z" fill="rgb(165,146,111)"/><path d="M811 135 L3212.2 700" stroke="#8a7758" stroke-opacity="0.25" stroke-width="0.7"/><path d="M811 135 L3223.6 700 L3238.3 700 Z" fill="rgb(167,148,113)"/><path d="M811 135 L3223.6 700" stroke="#8a7758" stroke-opacity="0.25" stroke-width="0.7"/><path d="M811 135 L3238.3 700 L3250.0 700 Z" fill="rgb(165,146,111)"/><path d="M811 135 L3238.3 700" stroke="#8a7758" stroke-opacity="0.25" stroke-width="0.7"/><path d="M811 135 L3250.0 700 L3261.2 700 Z" fill="rgb(177,158,123)"/><path d="M811 135 L3250.0 700" stroke="#8a7758" stroke-opacity="0.25" stroke-width="0.7"/><path d="M811 135 L3261.2 700 L3275.4 700 Z" fill="rgb(167,148,113)"/><path d="M811 135 L3261.2 700" stroke="#8a7758" stroke-opacity="0.25" stroke-width="0.7"/><path d="M811 135 L3275.4 700 L3288.2 700 Z" fill="rgb(168,149,114)"/><path d="M811 135 L3275.4 700" stroke="#8a7758" stroke-opacity="0.25" stroke-width="0.7"/><path d="M811 135 L3288.2 700 L3302.3 700 Z" fill="rgb(167,148,113)"/><path d="M811 135 L3288.2 700" stroke="#8a7758" stroke-opacity="0.25" stroke-width="0.7"/><path d="M811 135 L3302.3 700 L3315.0 700 Z" fill="rgb(163,144,109)"/><path d="M811 135 L3302.3 700" stroke="#8a7758" stroke-opacity="0.25" stroke-width="0.7"/><path d="M811 135 L3315.0 700 L3330.4 700 Z" fill="rgb(172,153,118)"/><path d="M811 135 L3315.0 700" stroke="#8a7758" stroke-opacity="0.25" stroke-width="0.7"/><path d="M811 135 L3330.4 700 L3342.4 700 Z" fill="rgb(167,148,113)"/><path d="M811 135 L3330.4 700" stroke="#8a7758" stroke-opacity="0.25" stroke-width="0.7"/><path d="M811 135 L3342.4 700 L3357.1 700 Z" fill="rgb(167,148,113)"/><path d="M811 135 L3342.4 700" stroke="#8a7758" stroke-opacity="0.25" stroke-width="0.7"/><path d="M811 135 L3357.1 700 L3370.5 700 Z" fill="rgb(177,158,123)"/><path d="M811 135 L3357.1 700" stroke="#8a7758" stroke-opacity="0.25" stroke-width="0.7"/><path d="M811 135 L3370.5 700 L3385.2 700 Z" fill="rgb(163,144,109)"/><path d="M811 135 L3370.5 700" stroke="#8a7758" stroke-opacity="0.25" stroke-width="0.7"/><path d="M811 135 L3385.2 700 L3397.4 700 Z" fill="rgb(165,146,111)"/><path d="M811 135 L3385.2 700" stroke="#8a7758" stroke-opacity="0.25" stroke-width="0.7"/><path d="M811 135 L3397.4 700 L3412.3 700 Z" fill="rgb(168,149,114)"/><path d="M811 135 L3397.4 700" stroke="#8a7758" stroke-opacity="0.25" stroke-width="0.7"/><path d="M811 135 L3412.3 700 L3426.1 700 Z" fill="rgb(165,146,111)"/><path d="M811 135 L3412.3 700" stroke="#8a7758" stroke-opacity="0.25" stroke-width="0.7"/><path d="M811 135 L3426.1 700 L3441.5 700 Z" fill="rgb(167,148,113)"/><path d="M811 135 L3426.1 700" stroke="#8a7758" stroke-opacity="0.25" stroke-width="0.7"/><path d="M811 135 L3441.5 700 L3456.9 700 Z" fill="rgb(167,148,113)"/><path d="M811 135 L3441.5 700" stroke="#8a7758" stroke-opacity="0.25" stroke-width="0.7"/><path d="M811 135 L3456.9 700 L3471.7 700 Z" fill="rgb(170,151,116)"/><path d="M811 135 L3456.9 700" stroke="#8a7758" stroke-opacity="0.25" stroke-width="0.7"/><path d="M811 135 L3471.7 700 L3484.0 700 Z" fill="rgb(163,144,109)"/><path d="M811 135 L3471.7 700" stroke="#8a7758" stroke-opacity="0.25" stroke-width="0.7"/><path d="M811 135 L3484.0 700 L3497.9 700 Z" fill="rgb(163,144,109)"/><path d="M811 135 L3484.0 700" stroke="#8a7758" stroke-opacity="0.25" stroke-width="0.7"/><path d="M811 135 L3497.9 700 L3510.4 700 Z" fill="rgb(167,148,113)"/><path d="M811 135 L3497.9 700" stroke="#8a7758" stroke-opacity="0.25" stroke-width="0.7"/><path d="M811 135 L3510.4 700 L3522.1 700 Z" fill="rgb(163,144,109)"/><path d="M811 135 L3510.4 700" stroke="#8a7758" stroke-opacity="0.25" stroke-width="0.7"/><path d="M811 135 L3522.1 700 L3537.5 700 Z" fill="rgb(177,158,123)"/><path d="M811 135 L3522.1 700" stroke="#8a7758" stroke-opacity="0.25" stroke-width="0.7"/><path d="M811 135 L3537.5 700 L3550.0 700 Z" fill="rgb(165,146,111)"/><path d="M811 135 L3537.5 700" stroke="#8a7758" stroke-opacity="0.25" stroke-width="0.7"/><path d="M811 135 L3550.0 700 L3563.4 700 Z" fill="rgb(165,146,111)"/><path d="M811 135 L3550.0 700" stroke="#8a7758" stroke-opacity="0.25" stroke-width="0.7"/><path d="M811 135 L3563.4 700 L3574.6 700 Z" fill="rgb(167,148,113)"/><path d="M811 135 L3563.4 700" stroke="#8a7758" stroke-opacity="0.25" stroke-width="0.7"/><path d="M811 135 L3574.6 700 L3588.7 700 Z" fill="rgb(170,151,116)"/><path d="M811 135 L3574.6 700" stroke="#8a7758" stroke-opacity="0.25" stroke-width="0.7"/><path d="M811 135 L3588.7 700 L3603.9 700 Z" fill="rgb(170,151,116)"/><path d="M811 135 L3588.7 700" stroke="#8a7758" stroke-opacity="0.25" stroke-width="0.7"/><path d="M811 135 L3603.9 700 L3618.9 700 Z" fill="rgb(163,144,109)"/><path d="M811 135 L3603.9 700" stroke="#8a7758" stroke-opacity="0.25" stroke-width="0.7"/><path d="M811 135 L3618.9 700 L3631.8 700 Z" fill="rgb(168,149,114)"/><path d="M811 135 L3618.9 700" stroke="#8a7758" stroke-opacity="0.25" stroke-width="0.7"/><path d="M811 135 L3631.8 700 L3645.9 700 Z" fill="rgb(177,158,123)"/><path d="M811 135 L3631.8 700" stroke="#8a7758" stroke-opacity="0.25" stroke-width="0.7"/><path d="M811 135 L3645.9 700 L3657.6 700 Z" fill="rgb(163,144,109)"/><path d="M811 135 L3645.9 700" stroke="#8a7758" stroke-opacity="0.25" stroke-width="0.7"/><path d="M811 135 L3657.6 700 L3672.4 700 Z" fill="rgb(168,149,114)"/><path d="M811 135 L3657.6 700" stroke="#8a7758" stroke-opacity="0.25" stroke-width="0.7"/><path d="M811 135 L3672.4 700 L3687.1 700 Z" fill="rgb(172,153,118)"/><path d="M811 135 L3672.4 700" stroke="#8a7758" stroke-opacity="0.25" stroke-width="0.7"/><path d="M811 135 L3687.1 700 L3700.7 700 Z" fill="rgb(168,149,114)"/><path d="M811 135 L3687.1 700" stroke="#8a7758" stroke-opacity="0.25" stroke-width="0.7"/><path d="M811 135 L3700.7 700 L3712.6 700 Z" fill="rgb(172,153,118)"/><path d="M811 135 L3700.7 700" stroke="#8a7758" stroke-opacity="0.25" stroke-width="0.7"/><path d="M811 135 L3712.6 700 L3728.5 700 Z" fill="rgb(168,149,114)"/><path d="M811 135 L3712.6 700" stroke="#8a7758" stroke-opacity="0.25" stroke-width="0.7"/><path d="M811 135 L3728.5 700 L3740.7 700 Z" fill="rgb(168,149,114)"/><path d="M811 135 L3728.5 700" stroke="#8a7758" stroke-opacity="0.25" stroke-width="0.7"/><path d="M811 135 L3740.7 700 L3752.5 700 Z" fill="rgb(165,146,111)"/><path d="M811 135 L3740.7 700" stroke="#8a7758" stroke-opacity="0.25" stroke-width="0.7"/><path d="M811 135 L3752.5 700 L3765.7 700 Z" fill="rgb(163,144,109)"/><path d="M811 135 L3752.5 700" stroke="#8a7758" stroke-opacity="0.25" stroke-width="0.7"/><path d="M811 135 L3765.7 700 L3780.9 700 Z" fill="rgb(167,148,113)"/><path d="M811 135 L3765.7 700" stroke="#8a7758" stroke-opacity="0.25" stroke-width="0.7"/><path d="M811 135 L3780.9 700 L3796.4 700 Z" fill="rgb(167,148,113)"/><path d="M811 135 L3780.9 700" stroke="#8a7758" stroke-opacity="0.25" stroke-width="0.7"/><path d="M811 135 L3796.4 700 L3810.6 700 Z" fill="rgb(163,144,109)"/><path d="M811 135 L3796.4 700" stroke="#8a7758" stroke-opacity="0.25" stroke-width="0.7"/><path d="M811 135 L3810.6 700 L3826.5 700 Z" fill="rgb(168,149,114)"/><path d="M811 135 L3810.6 700" stroke="#8a7758" stroke-opacity="0.25" stroke-width="0.7"/><path d="M811 135 L3826.5 700 L3838.4 700 Z" fill="rgb(172,153,118)"/><path d="M811 135 L3826.5 700" stroke="#8a7758" stroke-opacity="0.25" stroke-width="0.7"/><path d="M811 135 L3838.4 700 L3850.2 700 Z" fill="rgb(163,144,109)"/><path d="M811 135 L3838.4 700" stroke="#8a7758" stroke-opacity="0.25" stroke-width="0.7"/><path d="M811 135 L3850.2 700 L3863.7 700 Z" fill="rgb(174,155,120)"/><path d="M811 135 L3850.2 700" stroke="#8a7758" stroke-opacity="0.25" stroke-width="0.7"/><path d="M811 135 L3863.7 700 L3875.0 700 Z" fill="rgb(168,149,114)"/><path d="M811 135 L3863.7 700" stroke="#8a7758" stroke-opacity="0.25" stroke-width="0.7"/><path d="M811 135 L3875.0 700 L3887.8 700 Z" fill="rgb(167,148,113)"/><path d="M811 135 L3875.0 700" stroke="#8a7758" stroke-opacity="0.25" stroke-width="0.7"/><path d="M811 135 L3887.8 700 L3901.1 700 Z" fill="rgb(165,146,111)"/><path d="M811 135 L3887.8 700" stroke="#8a7758" stroke-opacity="0.25" stroke-width="0.7"/><path d="M811 135 L3901.1 700 L3914.0 700 Z" fill="rgb(167,148,113)"/><path d="M811 135 L3901.1 700" stroke="#8a7758" stroke-opacity="0.25" stroke-width="0.7"/><path d="M811 135 L3914.0 700 L3926.2 700 Z" fill="rgb(174,155,120)"/><path d="M811 135 L3914.0 700" stroke="#8a7758" stroke-opacity="0.25" stroke-width="0.7"/><path d="M811 135 L3926.2 700 L3938.2 700 Z" fill="rgb(165,146,111)"/><path d="M811 135 L3926.2 700" stroke="#8a7758" stroke-opacity="0.25" stroke-width="0.7"/><path d="M811 135 L3938.2 700 L3951.4 700 Z" fill="rgb(168,149,114)"/><path d="M811 135 L3938.2 700" stroke="#8a7758" stroke-opacity="0.25" stroke-width="0.7"/><path d="M811 135 L3951.4 700 L3966.9 700 Z" fill="rgb(167,148,113)"/><path d="M811 135 L3951.4 700" stroke="#8a7758" stroke-opacity="0.25" stroke-width="0.7"/><path d="M811 135 L3966.9 700 L3978.6 700 Z" fill="rgb(168,149,114)"/><path d="M811 135 L3966.9 700" stroke="#8a7758" stroke-opacity="0.25" stroke-width="0.7"/><path d="M811 135 L3978.6 700 L3990.4 700 Z" fill="rgb(168,149,114)"/><path d="M811 135 L3978.6 700" stroke="#8a7758" stroke-opacity="0.25" stroke-width="0.7"/><path d="M811 135 L3990.4 700 L4002.3 700 Z" fill="rgb(177,158,123)"/><path d="M811 135 L3990.4 700" stroke="#8a7758" stroke-opacity="0.25" stroke-width="0.7"/><path d="M811 135 L4002.3 700 L4016.6 700 Z" fill="rgb(177,158,123)"/><path d="M811 135 L4002.3 700" stroke="#8a7758" stroke-opacity="0.25" stroke-width="0.7"/><path d="M811 135 L4016.6 700 L4032.2 700 Z" fill="rgb(177,158,123)"/><path d="M811 135 L4016.6 700" stroke="#8a7758" stroke-opacity="0.25" stroke-width="0.7"/><path d="M811 135 L4032.2 700 L4043.6 700 Z" fill="rgb(168,149,114)"/><path d="M811 135 L4032.2 700" stroke="#8a7758" stroke-opacity="0.25" stroke-width="0.7"/><path d="M811 135 L4043.6 700 L4057.2 700 Z" fill="rgb(172,153,118)"/><path d="M811 135 L4043.6 700" stroke="#8a7758" stroke-opacity="0.25" stroke-width="0.7"/><path d="M811 135 L4057.2 700 L4070.2 700 Z" fill="rgb(177,158,123)"/><path d="M811 135 L4057.2 700" stroke="#8a7758" stroke-opacity="0.25" stroke-width="0.7"/><path d="M811 135 L4070.2 700 L4081.6 700 Z" fill="rgb(168,149,114)"/><path d="M811 135 L4070.2 700" stroke="#8a7758" stroke-opacity="0.25" stroke-width="0.7"/><path d="M811 135 L4081.6 700 L4094.2 700 Z" fill="rgb(170,151,116)"/><path d="M811 135 L4081.6 700" stroke="#8a7758" stroke-opacity="0.25" stroke-width="0.7"/><path d="M811 135 L4094.2 700 L4107.7 700 Z" fill="rgb(165,146,111)"/><path d="M811 135 L4094.2 700" stroke="#8a7758" stroke-opacity="0.25" stroke-width="0.7"/><path d="M811 135 L4107.7 700 L4122.6 700 Z" fill="rgb(163,144,109)"/><path d="M811 135 L4107.7 700" stroke="#8a7758" stroke-opacity="0.25" stroke-width="0.7"/><path d="M811 135 L4122.6 700 L4138.4 700 Z" fill="rgb(172,153,118)"/><path d="M811 135 L4122.6 700" stroke="#8a7758" stroke-opacity="0.25" stroke-width="0.7"/><path d="M811 135 L4138.4 700 L4149.7 700 Z" fill="rgb(168,149,114)"/><path d="M811 135 L4138.4 700" stroke="#8a7758" stroke-opacity="0.25" stroke-width="0.7"/><path d="M811 135 L4149.7 700 L4165.3 700 Z" fill="rgb(168,149,114)"/><path d="M811 135 L4149.7 700" stroke="#8a7758" stroke-opacity="0.25" stroke-width="0.7"/><path d="M811 135 L4165.3 700 L4177.2 700 Z" fill="rgb(168,149,114)"/><path d="M811 135 L4165.3 700" stroke="#8a7758" stroke-opacity="0.25" stroke-width="0.7"/><path d="M811 135 L4177.2 700 L4188.3 700 Z" fill="rgb(177,158,123)"/><path d="M811 135 L4177.2 700" stroke="#8a7758" stroke-opacity="0.25" stroke-width="0.7"/><path d="M811 135 L4188.3 700 L4200.8 700 Z" fill="rgb(170,151,116)"/><path d="M811 135 L4188.3 700" stroke="#8a7758" stroke-opacity="0.25" stroke-width="0.7"/></g>
<g id="joints"><path d="M-1136.9 700.0L-1124.7 700.0L-689.5 573.0L-699.0 573.0Z" fill="rgb(168,148,113)"/><path d="M-689.5 573.0L-699.0 573.0" stroke="#7e6c50" stroke-opacity="0.3" stroke-width="0.8"/><path d="M-361.0 477.1L-368.4 477.1" stroke="#7e6c50" stroke-opacity="0.3" stroke-width="0.8"/><path d="M-368.4 477.1L-361.0 477.1L-112.3 404.5L-118.1 404.5Z" fill="rgb(166,146,111)"/><path d="M-112.3 404.5L-118.1 404.5" stroke="#7e6c50" stroke-opacity="0.3" stroke-width="0.8"/><path d="M-118.1 404.5L-112.3 404.5L90.6 345.3L86.1 345.3Z" fill="rgb(160,140,106)"/><path d="M90.6 345.3L86.1 345.3" stroke="#7e6c50" stroke-opacity="0.3" stroke-width="0.8"/><path d="M86.1 345.3L90.6 345.3L224.7 306.1L221.0 306.1Z" fill="rgb(166,146,111)"/><path d="M224.7 306.1L221.0 306.1" stroke="#7e6c50" stroke-opacity="0.3" stroke-width="0.8"/><path d="M-1124.7 700.0L-1109.0 700.0L-839.6 620.7L-853.1 620.7Z" fill="rgb(172,152,117)"/><path d="M-839.6 620.7L-853.1 620.7" stroke="#7e6c50" stroke-opacity="0.3" stroke-width="0.8"/><path d="M-853.1 620.7L-839.6 620.7L-370.7 482.7L-380.3 482.7Z" fill="rgb(168,148,113)"/><path d="M-370.7 482.7L-380.3 482.7" stroke="#7e6c50" stroke-opacity="0.3" stroke-width="0.8"/><path d="M-380.3 482.7L-370.7 482.7L-147.6 417.1L-155.4 417.1Z" fill="rgb(172,152,117)"/><path d="M-147.6 417.1L-155.4 417.1" stroke="#7e6c50" stroke-opacity="0.3" stroke-width="0.8"/><path d="M43.3 360.9L37.0 360.9" stroke="#7e6c50" stroke-opacity="0.3" stroke-width="0.8"/><path d="M37.0 360.9L43.3 360.9L154.3 328.2L148.9 328.2Z" fill="rgb(170,150,115)"/><path d="M154.3 328.2L148.9 328.2" stroke="#7e6c50" stroke-opacity="0.3" stroke-width="0.8"/><path d="M148.9 328.2L154.3 328.2L242.0 302.4L237.4 302.4Z" fill="rgb(162,142,108)"/><path d="M242.0 302.4L237.4 302.4" stroke="#7e6c50" stroke-opacity="0.3" stroke-width="0.8"/><path d="M-1109.0 700.0L-1097.5 700.0L-516.9 528.1L-524.9 528.1Z" fill="rgb(173,153,119)"/><path d="M-516.9 528.1L-524.9 528.1" stroke="#7e6c50" stroke-opacity="0.3" stroke-width="0.8"/><path d="M-212.8 438.1L-218.9 438.1" stroke="#7e6c50" stroke-opacity="0.3" stroke-width="0.8"/><path d="M-218.9 438.1L-212.8 438.1L35.6 364.6L30.9 364.6Z" fill="rgb(171,151,117)"/><path d="M35.6 364.6L30.9 364.6" stroke="#7e6c50" stroke-opacity="0.3" stroke-width="0.8"/><path d="M30.9 364.6L35.6 364.6L175.5 323.1L171.6 323.1Z" fill="rgb(165,145,111)"/><path d="M175.5 323.1L171.6 323.1" stroke="#7e6c50" stroke-opacity="0.3" stroke-width="0.8"/><path d="M171.6 323.1L175.5 323.1L237.1 304.9L233.6 304.9Z" fill="rgb(163,143,109)"/><path d="M237.1 304.9L233.6 304.9" stroke="#7e6c50" stroke-opacity="0.3" stroke-width="0.8"/><path d="M-1097.5 700.0L-1085.5 700.0L-495.7 524.3L-504.0 524.3Z" fill="rgb(167,147,113)"/><path d="M-495.7 524.3L-504.0 524.3" stroke="#7e6c50" stroke-opacity="0.3" stroke-width="0.8"/><path d="M-504.0 524.3L-495.7 524.3L-105.3 408.0L-111.1 408.0Z" fill="rgb(165,145,111)"/><path d="M-105.3 408.0L-111.1 408.0" stroke="#7e6c50" stroke-opacity="0.3" stroke-width="0.8"/><path d="M-111.1 408.0L-105.3 408.0L83.4 351.8L78.7 351.8Z" fill="rgb(165,145,111)"/><path d="M83.4 351.8L78.7 351.8" stroke="#7e6c50" stroke-opacity="0.3" stroke-width="0.8"/><path d="M78.7 351.8L83.4 351.8L201.3 316.6L197.4 316.6Z" fill="rgb(167,147,113)"/><path d="M201.3 316.6L197.4 316.6" stroke="#7e6c50" stroke-opacity="0.3" stroke-width="0.8"/><path d="M279.3 293.4L275.9 293.4" stroke="#7e6c50" stroke-opacity="0.3" stroke-width="0.8"/><path d="M-673.9 581.0L-686.1 581.0" stroke="#7e6c50" stroke-opacity="0.3" stroke-width="0.8"/><path d="M-686.1 581.0L-673.9 581.0L-271.7 460.2L-280.5 460.2Z" fill="rgb(171,151,117)"/><path d="M-271.7 460.2L-280.5 460.2" stroke="#7e6c50" stroke-opacity="0.3" stroke-width="0.8"/><path d="M-280.5 460.2L-271.7 460.2L-92.1 406.3L-99.5 406.3Z" fill="rgb(165,145,111)"/><path d="M-92.1 406.3L-99.5 406.3" stroke="#7e6c50" stroke-opacity="0.3" stroke-width="0.8"/><path d="M104.7 347.1L98.9 347.1" stroke="#7e6c50" stroke-opacity="0.3" stroke-width="0.8"/><path d="M98.9 347.1L104.7 347.1L230.7 309.3L226.0 309.3Z" fill="rgb(175,155,120)"/><path d="M230.7 309.3L226.0 309.3" stroke="#7e6c50" stroke-opacity="0.3" stroke-width="0.8"/><path d="M-1070.1 700.0L-1058.2 700.0L-493.1 529.2L-501.5 529.2Z" fill="rgb(167,147,113)"/><path d="M-493.1 529.2L-501.5 529.2" stroke="#7e6c50" stroke-opacity="0.3" stroke-width="0.8"/><path d="M-501.5 529.2L-493.1 529.2L-247.3 454.9L-254.0 454.9Z" fill="rgb(167,147,113)"/><path d="M-247.3 454.9L-254.0 454.9" stroke="#7e6c50" stroke-opacity="0.3" stroke-width="0.8"/><path d="M-254.0 454.9L-247.3 454.9L6.3 378.2L1.1 378.2Z" fill="rgb(167,147,113)"/><path d="M6.3 378.2L1.1 378.2" stroke="#7e6c50" stroke-opacity="0.3" stroke-width="0.8"/><path d="M98.9 350.3L94.3 350.3" stroke="#7e6c50" stroke-opacity="0.3" stroke-width="0.8"/><path d="M94.3 350.3L98.9 350.3L193.1 321.8L189.2 321.8Z" fill="rgb(169,149,115)"/><path d="M193.1 321.8L189.2 321.8" stroke="#7e6c50" stroke-opacity="0.3" stroke-width="0.8"/><path d="M189.2 321.8L193.1 321.8L282.6 294.7L279.2 294.7Z" fill="rgb(173,153,119)"/><path d="M282.6 294.7L279.2 294.7" stroke="#7e6c50" stroke-opacity="0.3" stroke-width="0.8"/><path d="M-684.5 590.4L-695.5 590.4" stroke="#7e6c50" stroke-opacity="0.3" stroke-width="0.8"/><path d="M-695.5 590.4L-684.5 590.4L-265.9 462.9L-273.8 462.9Z" fill="rgb(164,144,109)"/><path d="M-265.9 462.9L-273.8 462.9" stroke="#7e6c50" stroke-opacity="0.3" stroke-width="0.8"/><path d="M-5.8 383.7L-11.8 383.7" stroke="#7e6c50" stroke-opacity="0.3" stroke-width="0.8"/><path d="M-11.8 383.7L-5.8 383.7L128.6 342.8L123.6 342.8Z" fill="rgb(158,138,104)"/><path d="M128.6 342.8L123.6 342.8" stroke="#7e6c50" stroke-opacity="0.3" stroke-width="0.8"/><path d="M123.6 342.8L128.6 342.8L224.7 313.5L220.4 313.5Z" fill="rgb(164,144,109)"/><path d="M224.7 313.5L220.4 313.5" stroke="#7e6c50" stroke-opacity="0.3" stroke-width="0.8"/><path d="M-1044.6 700.0L-1032.0 700.0L-745.8 612.3L-756.4 612.3Z" fill="rgb(177,157,122)"/><path d="M-745.8 612.3L-756.4 612.3" stroke="#7e6c50" stroke-opacity="0.3" stroke-width="0.8"/><path d="M-756.4 612.3L-745.8 612.3L-234.9 455.6L-242.0 455.6Z" fill="rgb(167,147,113)"/><path d="M-234.9 455.6L-242.0 455.6" stroke="#7e6c50" stroke-opacity="0.3" stroke-width="0.8"/><path d="M-242.0 455.6L-234.9 455.6L30.8 374.2L25.5 374.2Z" fill="rgb(177,157,122)"/><path d="M30.8 374.2L25.5 374.2" stroke="#7e6c50" stroke-opacity="0.3" stroke-width="0.8"/><path d="M151.7 337.1L147.1 337.1" stroke="#7e6c50" stroke-opacity="0.3" stroke-width="0.8"/><path d="M147.1 337.1L151.7 337.1L264.7 302.5L261.0 302.5Z" fill="rgb(177,157,122)"/><path d="M264.7 302.5L261.0 302.5" stroke="#7e6c50" stroke-opacity="0.3" stroke-width="0.8"/><path d="M-1032.0 700.0L-1019.0 700.0L-440.1 521.3L-449.0 521.3Z" fill="rgb(182,162,128)"/><path d="M-440.1 521.3L-449.0 521.3" stroke="#7e6c50" stroke-opacity="0.3" stroke-width="0.8"/><path d="M-449.0 521.3L-440.1 521.3L-126.2 424.3L-132.8 424.3Z" fill="rgb(173,152,118)"/><path d="M-126.2 424.3L-132.8 424.3" stroke="#7e6c50" stroke-opacity="0.3" stroke-width="0.8"/><path d="M-132.8 424.3L-126.2 424.3L69.9 363.8L64.7 363.8Z" fill="rgb(180,160,126)"/><path d="M69.9 363.8L64.7 363.8" stroke="#7e6c50" stroke-opacity="0.3" stroke-width="0.8"/><path d="M214.4 319.2L210.1 319.2" stroke="#7e6c50" stroke-opacity="0.3" stroke-width="0.8"/><path d="M210.1 319.2L214.4 319.2L289.1 296.1L285.4 296.1Z" fill="rgb(178,158,124)"/><path d="M289.1 296.1L285.4 296.1" stroke="#7e6c50" stroke-opacity="0.3" stroke-width="0.8"/><path d="M-1019.0 700.0L-1006.8 700.0L-695.5 603.2L-705.6 603.2Z" fill="rgb(176,156,121)"/><path d="M-695.5 603.2L-705.6 603.2" stroke="#7e6c50" stroke-opacity="0.3" stroke-width="0.8"/><path d="M-705.6 603.2L-695.5 603.2L-206.6 451.3L-213.5 451.3Z" fill="rgb(176,156,121)"/><path d="M-206.6 451.3L-213.5 451.3" stroke="#7e6c50" stroke-opacity="0.3" stroke-width="0.8"/><path d="M-213.5 451.3L-206.6 451.3L-15.2 391.8L-20.7 391.8Z" fill="rgb(176,156,121)"/><path d="M-15.2 391.8L-20.7 391.8" stroke="#7e6c50" stroke-opacity="0.3" stroke-width="0.8"/><path d="M109.3 353.1L104.6 353.1" stroke="#7e6c50" stroke-opacity="0.3" stroke-width="0.8"/><path d="M104.6 353.1L109.3 353.1L190.5 327.8L186.4 327.8Z" fill="rgb(172,152,117)"/><path d="M190.5 327.8L186.4 327.8" stroke="#7e6c50" stroke-opacity="0.3" stroke-width="0.8"/><path d="M294.9 295.4L291.5 295.4" stroke="#7e6c50" stroke-opacity="0.3" stroke-width="0.8"/><path d="M-1006.8 700.0L-991.4 700.0L-762.4 628.2L-775.9 628.2Z" fill="rgb(166,146,111)"/><path d="M-762.4 628.2L-775.9 628.2" stroke="#7e6c50" stroke-opacity="0.3" stroke-width="0.8"/><path d="M-775.9 628.2L-762.4 628.2L-401.5 515.1L-411.9 515.1Z" fill="rgb(168,148,113)"/><path d="M-401.5 515.1L-411.9 515.1" stroke="#7e6c50" stroke-opacity="0.3" stroke-width="0.8"/><path d="M-411.9 515.1L-401.5 515.1L-48.7 404.5L-56.1 404.5Z" fill="rgb(164,144,109)"/><path d="M-48.7 404.5L-56.1 404.5" stroke="#7e6c50" stroke-opacity="0.3" stroke-width="0.8"/><path d="M97.5 358.7L91.4 358.7" stroke="#7e6c50" stroke-opacity="0.3" stroke-width="0.8"/><path d="M233.7 316.0L228.8 316.0" stroke="#7e6c50" stroke-opacity="0.3" stroke-width="0.8"/><path d="M-991.4 700.0L-977.1 700.0L-566.3 570.2L-577.3 570.2Z" fill="rgb(168,148,113)"/><path d="M-566.3 570.2L-577.3 570.2" stroke="#7e6c50" stroke-opacity="0.3" stroke-width="0.8"/><path d="M-577.3 570.2L-566.3 570.2L-311.7 489.8L-320.7 489.8Z" fill="rgb(170,150,115)"/><path d="M-311.7 489.8L-320.7 489.8" stroke="#7e6c50" stroke-opacity="0.3" stroke-width="0.8"/><path d="M-320.7 489.8L-311.7 489.8L-45.8 405.7L-52.6 405.7Z" fill="rgb(170,150,115)"/><path d="M-45.8 405.7L-52.6 405.7" stroke="#7e6c50" stroke-opacity="0.3" stroke-width="0.8"/><path d="M-52.6 405.7L-45.8 405.7L57.8 373.0L51.7 373.0Z" fill="rgb(166,146,111)"/><path d="M57.8 373.0L51.7 373.0" stroke="#7e6c50" stroke-opacity="0.3" stroke-width="0.8"/><path d="M145.7 345.2L140.4 345.2" stroke="#7e6c50" stroke-opacity="0.3" stroke-width="0.8"/><path d="M140.4 345.2L145.7 345.2L262.1 308.4L257.7 308.4Z" fill="rgb(160,140,106)"/><path d="M262.1 308.4L257.7 308.4" stroke="#7e6c50" stroke-opacity="0.3" stroke-width="0.8"/><path d="M-977.1 700.0L-965.7 700.0L-802.7 648.2L-813.1 648.2Z" fill="rgb(165,145,111)"/><path d="M-802.7 648.2L-813.1 648.2" stroke="#7e6c50" stroke-opacity="0.3" stroke-width="0.8"/><path d="M-813.1 648.2L-802.7 648.2L-413.5 524.4L-421.3 524.4Z" fill="rgb(171,151,117)"/><path d="M-413.5 524.4L-421.3 524.4" stroke="#7e6c50" stroke-opacity="0.3" stroke-width="0.8"/><path d="M-421.3 524.4L-413.5 524.4L-199.8 456.4L-206.3 456.4Z" fill="rgb(173,153,119)"/><path d="M-199.8 456.4L-206.3 456.4" stroke="#7e6c50" stroke-opacity="0.3" stroke-width="0.8"/><path d="M-206.3 456.4L-199.8 456.4L39.2 380.4L34.2 380.4Z" fill="rgb(171,151,117)"/><path d="M39.2 380.4L34.2 380.4" stroke="#7e6c50" stroke-opacity="0.3" stroke-width="0.8"/><path d="M34.2 380.4L39.2 380.4L160.6 341.8L156.5 341.8Z" fill="rgb(171,151,117)"/><path d="M160.6 341.8L156.5 341.8" stroke="#7e6c50" stroke-opacity="0.3" stroke-width="0.8"/><path d="M156.5 341.8L160.6 341.8L263.4 309.1L259.9 309.1Z" fill="rgb(163,143,109)"/><path d="M263.4 309.1L259.9 309.1" stroke="#7e6c50" stroke-opacity="0.3" stroke-width="0.8"/><path d="M-965.7 700.0L-953.9 700.0L-824.4 658.6L-835.4 658.6Z" fill="rgb(170,150,115)"/><path d="M-824.4 658.6L-835.4 658.6" stroke="#7e6c50" stroke-opacity="0.3" stroke-width="0.8"/><path d="M-835.4 658.6L-824.4 658.6L-244.3 472.8L-251.4 472.8Z" fill="rgb(172,152,117)"/><path d="M-244.3 472.8L-251.4 472.8" stroke="#7e6c50" stroke-opacity="0.3" stroke-width="0.8"/><path d="M-251.4 472.8L-244.3 472.8L-25.5 402.8L-31.1 402.8Z" fill="rgb(170,150,115)"/><path d="M-25.5 402.8L-31.1 402.8" stroke="#7e6c50" stroke-opacity="0.3" stroke-width="0.8"/><path d="M-31.1 402.8L-25.5 402.8L130.0 353.0L125.5 353.0Z" fill="rgb(172,152,117)"/><path d="M130.0 353.0L125.5 353.0" stroke="#7e6c50" stroke-opacity="0.3" stroke-width="0.8"/><path d="M125.5 353.0L130.0 353.0L249.4 314.8L245.6 314.8Z" fill="rgb(172,152,117)"/><path d="M249.4 314.8L245.6 314.8" stroke="#7e6c50" stroke-opacity="0.3" stroke-width="0.8"/><path d="M-953.9 700.0L-938.9 700.0L-684.5 617.9L-697.3 617.9Z" fill="rgb(173,152,118)"/><path d="M-684.5 617.9L-697.3 617.9" stroke="#7e6c50" stroke-opacity="0.3" stroke-width="0.8"/><path d="M-697.3 617.9L-684.5 617.9L-204.3 462.8L-213.0 462.8Z" fill="rgb(182,162,128)"/><path d="M-204.3 462.8L-213.0 462.8" stroke="#7e6c50" stroke-opacity="0.3" stroke-width="0.8"/><path d="M6.6 394.7L-0.3 394.7" stroke="#7e6c50" stroke-opacity="0.3" stroke-width="0.8"/><path d="M-0.3 394.7L6.6 394.7L182.9 337.8L177.5 337.8Z" fill="rgb(182,162,128)"/><path d="M182.9 337.8L177.5 337.8" stroke="#7e6c50" stroke-opacity="0.3" stroke-width="0.8"/><path d="M177.5 337.8L182.9 337.8L288.9 303.6L284.4 303.6Z" fill="rgb(173,152,118)"/><path d="M288.9 303.6L284.4 303.6" stroke="#7e6c50" stroke-opacity="0.3" stroke-width="0.8"/><path d="M-574.3 585.9L-585.5 585.9" stroke="#7e6c50" stroke-opacity="0.3" stroke-width="0.8"/><path d="M-183.6 458.7L-191.7 458.7" stroke="#7e6c50" stroke-opacity="0.3" stroke-width="0.8"/><path d="M-191.7 458.7L-183.6 458.7L24.0 391.2L17.6 391.2Z" fill="rgb(180,159,125)"/><path d="M24.0 391.2L17.6 391.2" stroke="#7e6c50" stroke-opacity="0.3" stroke-width="0.8"/><path d="M143.6 352.2L138.2 352.2" stroke="#7e6c50" stroke-opacity="0.3" stroke-width="0.8"/><path d="M138.2 352.2L143.6 352.2L235.2 322.4L230.5 322.4Z" fill="rgb(176,156,121)"/><path d="M235.2 322.4L230.5 322.4" stroke="#7e6c50" stroke-opacity="0.3" stroke-width="0.8"/><path d="M230.5 322.4L235.2 322.4L298.8 301.7L294.6 301.7Z" fill="rgb(170,150,115)"/><path d="M298.8 301.7L294.6 301.7" stroke="#7e6c50" stroke-opacity="0.3" stroke-width="0.8"/><path d="M-396.1 531.2L-406.2 531.2" stroke="#7e6c50" stroke-opacity="0.3" stroke-width="0.8"/><path d="M-406.2 531.2L-396.1 531.2L-176.9 459.2L-185.1 459.2Z" fill="rgb(171,151,117)"/><path d="M-176.9 459.2L-185.1 459.2" stroke="#7e6c50" stroke-opacity="0.3" stroke-width="0.8"/><path d="M-185.1 459.2L-176.9 459.2L30.2 391.3L23.6 391.3Z" fill="rgb(167,147,113)"/><path d="M30.2 391.3L23.6 391.3" stroke="#7e6c50" stroke-opacity="0.3" stroke-width="0.8"/><path d="M23.6 391.3L30.2 391.3L186.9 339.8L181.7 339.8Z" fill="rgb(173,153,119)"/><path d="M186.9 339.8L181.7 339.8" stroke="#7e6c50" stroke-opacity="0.3" stroke-width="0.8"/><path d="M272.7 311.7L268.2 311.7" stroke="#7e6c50" stroke-opacity="0.3" stroke-width="0.8"/><path d="M-910.4 700.0L-898.6 700.0L-716.2 639.7L-726.7 639.7Z" fill="rgb(162,142,108)"/><path d="M-716.2 639.7L-726.7 639.7" stroke="#7e6c50" stroke-opacity="0.3" stroke-width="0.8"/><path d="M-726.7 639.7L-716.2 639.7L-401.5 535.7L-409.9 535.7Z" fill="rgb(164,144,109)"/><path d="M-401.5 535.7L-409.9 535.7" stroke="#7e6c50" stroke-opacity="0.3" stroke-width="0.8"/><path d="M-135.2 447.7L-141.8 447.7" stroke="#7e6c50" stroke-opacity="0.3" stroke-width="0.8"/><path d="M-141.8 447.7L-135.2 447.7L80.0 376.6L75.0 376.6Z" fill="rgb(164,144,109)"/><path d="M80.0 376.6L75.0 376.6" stroke="#7e6c50" stroke-opacity="0.3" stroke-width="0.8"/><path d="M75.0 376.6L80.0 376.6L183.7 342.3L179.3 342.3Z" fill="rgb(162,142,108)"/><path d="M183.7 342.3L179.3 342.3" stroke="#7e6c50" stroke-opacity="0.3" stroke-width="0.8"/><path d="M179.3 342.3L183.7 342.3L272.7 312.9L269.0 312.9Z" fill="rgb(170,150,115)"/><path d="M272.7 312.9L269.0 312.9" stroke="#7e6c50" stroke-opacity="0.3" stroke-width="0.8"/><path d="M334.5 292.5L331.2 292.5" stroke="#7e6c50" stroke-opacity="0.3" stroke-width="0.8"/><path d="M-898.6 700.0L-885.8 700.0L-681.5 632.0L-692.8 632.0Z" fill="rgb(163,143,109)"/><path d="M-681.5 632.0L-692.8 632.0" stroke="#7e6c50" stroke-opacity="0.3" stroke-width="0.8"/><path d="M-692.8 632.0L-681.5 632.0L-308.0 507.6L-316.5 507.6Z" fill="rgb(169,149,115)"/><path d="M-308.0 507.6L-316.5 507.6" stroke="#7e6c50" stroke-opacity="0.3" stroke-width="0.8"/><path d="M14.6 400.2L8.5 400.2" stroke="#7e6c50" stroke-opacity="0.3" stroke-width="0.8"/><path d="M8.5 400.2L14.6 400.2L115.9 366.5L110.6 366.5Z" fill="rgb(165,145,111)"/><path d="M115.9 366.5L110.6 366.5" stroke="#7e6c50" stroke-opacity="0.3" stroke-width="0.8"/><path d="M110.6 366.5L115.9 366.5L234.3 327.0L229.9 327.0Z" fill="rgb(169,149,115)"/><path d="M234.3 327.0L229.9 327.0" stroke="#7e6c50" stroke-opacity="0.3" stroke-width="0.8"/><path d="M229.9 327.0L234.3 327.0L302.5 304.3L298.7 304.3Z" fill="rgb(169,149,115)"/><path d="M302.5 304.3L298.7 304.3" stroke="#7e6c50" stroke-opacity="0.3" stroke-width="0.8"/><path d="M298.7 304.3L302.5 304.3L344.0 290.5L340.5 290.5Z" fill="rgb(165,145,111)"/><path d="M344.0 290.5L340.5 290.5" stroke="#7e6c50" stroke-opacity="0.3" stroke-width="0.8"/><path d="M-885.8 700.0L-871.6 700.0L-767.9 665.2L-781.3 665.2Z" fill="rgb(160,140,106)"/><path d="M-767.9 665.2L-781.3 665.2" stroke="#7e6c50" stroke-opacity="0.3" stroke-width="0.8"/><path d="M-781.3 665.2L-767.9 665.2L-230.4 484.7L-239.2 484.7Z" fill="rgb(164,144,109)"/><path d="M-230.4 484.7L-239.2 484.7" stroke="#7e6c50" stroke-opacity="0.3" stroke-width="0.8"/><path d="M-239.2 484.7L-230.4 484.7L12.5 403.1L5.8 403.1Z" fill="rgb(158,138,104)"/><path d="M12.5 403.1L5.8 403.1" stroke="#7e6c50" stroke-opacity="0.3" stroke-width="0.8"/><path d="M5.8 403.1L12.5 403.1L182.3 346.1L177.0 346.1Z" fill="rgb(164,144,109)"/><path d="M182.3 346.1L177.0 346.1" stroke="#7e6c50" stroke-opacity="0.3" stroke-width="0.8"/><path d="M177.0 346.1L182.3 346.1L254.4 321.9L249.7 321.9Z" fill="rgb(160,140,106)"/><path d="M254.4 321.9L249.7 321.9" stroke="#7e6c50" stroke-opacity="0.3" stroke-width="0.8"/><path d="M249.7 321.9L254.4 321.9L343.8 291.9L339.8 291.9Z" fill="rgb(164,144,109)"/><path d="M343.8 291.9L339.8 291.9" stroke="#7e6c50" stroke-opacity="0.3" stroke-width="0.8"/><path d="M-414.7 550.4L-426.1 550.4" stroke="#7e6c50" stroke-opacity="0.3" stroke-width="0.8"/><path d="M-71.0 433.9L-79.2 433.9" stroke="#7e6c50" stroke-opacity="0.3" stroke-width="0.8"/><path d="M-79.2 433.9L-71.0 433.9L112.0 371.9L105.6 371.9Z" fill="rgb(162,142,108)"/><path d="M112.0 371.9L105.6 371.9" stroke="#7e6c50" stroke-opacity="0.3" stroke-width="0.8"/><path d="M105.6 371.9L112.0 371.9L229.5 332.1L224.1 332.1Z" fill="rgb(170,150,115)"/><path d="M229.5 332.1L224.1 332.1" stroke="#7e6c50" stroke-opacity="0.3" stroke-width="0.8"/><path d="M224.1 332.1L229.5 332.1L330.8 297.7L326.3 297.7Z" fill="rgb(166,146,111)"/><path d="M330.8 297.7L326.3 297.7" stroke="#7e6c50" stroke-opacity="0.3" stroke-width="0.8"/><path d="M-856.2 700.0L-841.8 700.0L-562.8 604.6L-574.7 604.6Z" fill="rgb(162,142,108)"/><path d="M-562.8 604.6L-574.7 604.6" stroke="#7e6c50" stroke-opacity="0.3" stroke-width="0.8"/><path d="M-574.7 604.6L-562.8 604.6L-215.2 485.8L-224.1 485.8Z" fill="rgb(168,148,113)"/><path d="M-215.2 485.8L-224.1 485.8" stroke="#7e6c50" stroke-opacity="0.3" stroke-width="0.8"/><path d="M-224.1 485.8L-215.2 485.8L-38.0 425.2L-45.4 425.2Z" fill="rgb(164,144,109)"/><path d="M-38.0 425.2L-45.4 425.2" stroke="#7e6c50" stroke-opacity="0.3" stroke-width="0.8"/><path d="M-45.4 425.2L-38.0 425.2L152.3 360.2L146.5 360.2Z" fill="rgb(162,142,108)"/><path d="M152.3 360.2L146.5 360.2" stroke="#7e6c50" stroke-opacity="0.3" stroke-width="0.8"/><path d="M146.5 360.2L152.3 360.2L230.5 333.4L225.4 333.4Z" fill="rgb(168,148,113)"/><path d="M230.5 333.4L225.4 333.4" stroke="#7e6c50" stroke-opacity="0.3" stroke-width="0.8"/><path d="M225.4 333.4L230.5 333.4L301.1 309.3L296.6 309.3Z" fill="rgb(164,144,109)"/><path d="M301.1 309.3L296.6 309.3" stroke="#7e6c50" stroke-opacity="0.3" stroke-width="0.8"/><path d="M-841.8 700.0L-828.3 700.0L-725.5 664.6L-738.2 664.6Z" fill="rgb(165,145,111)"/><path d="M-725.5 664.6L-738.2 664.6" stroke="#7e6c50" stroke-opacity="0.3" stroke-width="0.8"/><path d="M-738.2 664.6L-725.5 664.6L-375.0 543.8L-384.7 543.8Z" fill="rgb(165,145,111)"/><path d="M-375.0 543.8L-384.7 543.8" stroke="#7e6c50" stroke-opacity="0.3" stroke-width="0.8"/><path d="M-384.7 543.8L-375.0 543.8L-14.6 419.5L-21.4 419.5Z" fill="rgb(169,149,115)"/><path d="M-14.6 419.5L-21.4 419.5" stroke="#7e6c50" stroke-opacity="0.3" stroke-width="0.8"/><path d="M-21.4 419.5L-14.6 419.5L174.3 354.5L169.0 354.5Z" fill="rgb(171,151,117)"/><path d="M174.3 354.5L169.0 354.5" stroke="#7e6c50" stroke-opacity="0.3" stroke-width="0.8"/><path d="M169.0 354.5L174.3 354.5L269.4 321.7L264.9 321.7Z" fill="rgb(169,149,115)"/><path d="M269.4 321.7L264.9 321.7" stroke="#7e6c50" stroke-opacity="0.3" stroke-width="0.8"/><path d="M-828.3 700.0L-815.5 700.0L-305.1 522.7L-313.9 522.7Z" fill="rgb(173,153,119)"/><path d="M-305.1 522.7L-313.9 522.7" stroke="#7e6c50" stroke-opacity="0.3" stroke-width="0.8"/><path d="M-313.9 522.7L-305.1 522.7L-49.7 434.0L-56.5 434.0Z" fill="rgb(165,145,111)"/><path d="M-49.7 434.0L-56.5 434.0" stroke="#7e6c50" stroke-opacity="0.3" stroke-width="0.8"/><path d="M-56.5 434.0L-49.7 434.0L125.1 373.3L119.7 373.3Z" fill="rgb(171,151,117)"/><path d="M125.1 373.3L119.7 373.3" stroke="#7e6c50" stroke-opacity="0.3" stroke-width="0.8"/><path d="M119.7 373.3L125.1 373.3L234.4 335.3L229.9 335.3Z" fill="rgb(173,153,119)"/><path d="M234.4 335.3L229.9 335.3" stroke="#7e6c50" stroke-opacity="0.3" stroke-width="0.8"/><path d="M229.9 335.3L234.4 335.3L331.5 301.5L327.8 301.5Z" fill="rgb(167,147,113)"/><path d="M331.5 301.5L327.8 301.5" stroke="#7e6c50" stroke-opacity="0.3" stroke-width="0.8"/><path d="M-454.4 577.6L-463.2 577.6" stroke="#7e6c50" stroke-opacity="0.3" stroke-width="0.8"/><path d="M-463.2 577.6L-454.4 577.6L-106.2 455.8L-112.6 455.8Z" fill="rgb(168,148,113)"/><path d="M-106.2 455.8L-112.6 455.8" stroke="#7e6c50" stroke-opacity="0.3" stroke-width="0.8"/><path d="M50.4 401.1L45.1 401.1" stroke="#7e6c50" stroke-opacity="0.3" stroke-width="0.8"/><path d="M45.1 401.1L50.4 401.1L141.0 369.4L136.3 369.4Z" fill="rgb(160,140,106)"/><path d="M141.0 369.4L136.3 369.4" stroke="#7e6c50" stroke-opacity="0.3" stroke-width="0.8"/><path d="M269.8 324.3L266.0 324.3" stroke="#7e6c50" stroke-opacity="0.3" stroke-width="0.8"/><path d="M266.0 324.3L269.8 324.3L361.7 292.2L358.6 292.2Z" fill="rgb(158,138,104)"/><path d="M361.7 292.2L358.6 292.2" stroke="#7e6c50" stroke-opacity="0.3" stroke-width="0.8"/><path d="M-804.2 700.0L-790.3 700.0L-296.9 525.9L-306.6 525.9Z" fill="rgb(173,153,119)"/><path d="M-296.9 525.9L-306.6 525.9" stroke="#7e6c50" stroke-opacity="0.3" stroke-width="0.8"/><path d="M-306.6 525.9L-296.9 525.9L-81.7 450.0L-89.4 450.0Z" fill="rgb(169,149,115)"/><path d="M-81.7 450.0L-89.4 450.0" stroke="#7e6c50" stroke-opacity="0.3" stroke-width="0.8"/><path d="M-89.4 450.0L-81.7 450.0L44.7 405.4L38.1 405.4Z" fill="rgb(165,145,111)"/><path d="M44.7 405.4L38.1 405.4" stroke="#7e6c50" stroke-opacity="0.3" stroke-width="0.8"/><path d="M38.1 405.4L44.7 405.4L159.4 364.9L153.8 364.9Z" fill="rgb(169,149,115)"/><path d="M159.4 364.9L153.8 364.9" stroke="#7e6c50" stroke-opacity="0.3" stroke-width="0.8"/><path d="M283.5 321.1L278.9 321.1" stroke="#7e6c50" stroke-opacity="0.3" stroke-width="0.8"/><path d="M278.9 321.1L283.5 321.1L345.1 299.4L341.0 299.4Z" fill="rgb(163,143,109)"/><path d="M345.1 299.4L341.0 299.4" stroke="#7e6c50" stroke-opacity="0.3" stroke-width="0.8"/><path d="M-790.3 700.0L-775.9 700.0L-490.4 598.3L-502.2 598.3Z" fill="rgb(169,149,115)"/><path d="M-490.4 598.3L-502.2 598.3" stroke="#7e6c50" stroke-opacity="0.3" stroke-width="0.8"/><path d="M-129.4 469.8L-138.0 469.8" stroke="#7e6c50" stroke-opacity="0.3" stroke-width="0.8"/><path d="M-138.0 469.8L-129.4 469.8L84.0 393.8L77.4 393.8Z" fill="rgb(177,157,122)"/><path d="M84.0 393.8L77.4 393.8" stroke="#7e6c50" stroke-opacity="0.3" stroke-width="0.8"/><path d="M77.4 393.8L84.0 393.8L227.3 342.8L222.0 342.8Z" fill="rgb(175,155,120)"/><path d="M227.3 342.8L222.0 342.8" stroke="#7e6c50" stroke-opacity="0.3" stroke-width="0.8"/><path d="M222.0 342.8L227.3 342.8L301.2 316.5L296.6 316.5Z" fill="rgb(177,157,122)"/><path d="M301.2 316.5L296.6 316.5" stroke="#7e6c50" stroke-opacity="0.3" stroke-width="0.8"/><path d="M296.6 316.5L301.2 316.5L355.5 297.2L351.4 297.2Z" fill="rgb(167,147,113)"/><path d="M355.5 297.2L351.4 297.2" stroke="#7e6c50" stroke-opacity="0.3" stroke-width="0.8"/><path d="M-775.9 700.0L-764.1 700.0L-677.3 668.9L-688.5 668.9Z" fill="rgb(168,148,113)"/><path d="M-677.3 668.9L-688.5 668.9" stroke="#7e6c50" stroke-opacity="0.3" stroke-width="0.8"/><path d="M-688.5 668.9L-677.3 668.9L-145.9 478.2L-153.1 478.2Z" fill="rgb(160,140,106)"/><path d="M-145.9 478.2L-153.1 478.2" stroke="#7e6c50" stroke-opacity="0.3" stroke-width="0.8"/><path d="M100.4 389.9L95.1 389.9" stroke="#7e6c50" stroke-opacity="0.3" stroke-width="0.8"/><path d="M95.1 389.9L100.4 389.9L186.0 359.2L181.3 359.2Z" fill="rgb(166,146,111)"/><path d="M186.0 359.2L181.3 359.2" stroke="#7e6c50" stroke-opacity="0.3" stroke-width="0.8"/><path d="M282.1 324.7L278.2 324.7" stroke="#7e6c50" stroke-opacity="0.3" stroke-width="0.8"/><path d="M278.2 324.7L282.1 324.7L369.4 293.4L366.1 293.4Z" fill="rgb(166,146,111)"/><path d="M369.4 293.4L366.1 293.4" stroke="#7e6c50" stroke-opacity="0.3" stroke-width="0.8"/><path d="M-357.0 557.2L-366.1 557.2" stroke="#7e6c50" stroke-opacity="0.3" stroke-width="0.8"/><path d="M-366.1 557.2L-357.0 557.2L-87.5 459.8L-94.5 459.8Z" fill="rgb(165,145,111)"/><path d="M-87.5 459.8L-94.5 459.8" stroke="#7e6c50" stroke-opacity="0.3" stroke-width="0.8"/><path d="M-94.5 459.8L-87.5 459.8L108.3 389.0L102.8 389.0Z" fill="rgb(173,153,119)"/><path d="M108.3 389.0L102.8 389.0" stroke="#7e6c50" stroke-opacity="0.3" stroke-width="0.8"/><path d="M102.8 389.0L108.3 389.0L230.6 344.8L226.1 344.8Z" fill="rgb(175,155,120)"/><path d="M230.6 344.8L226.1 344.8" stroke="#7e6c50" stroke-opacity="0.3" stroke-width="0.8"/><path d="M226.1 344.8L230.6 344.8L331.8 308.2L328.1 308.2Z" fill="rgb(165,145,111)"/><path d="M331.8 308.2L328.1 308.2" stroke="#7e6c50" stroke-opacity="0.3" stroke-width="0.8"/><path d="M380.7 290.6L377.3 290.6" stroke="#7e6c50" stroke-opacity="0.3" stroke-width="0.8"/><path d="M-459.4 598.3L-470.6 598.3" stroke="#7e6c50" stroke-opacity="0.3" stroke-width="0.8"/><path d="M-470.6 598.3L-459.4 598.3L-76.0 458.5L-83.8 458.5Z" fill="rgb(173,153,119)"/><path d="M-76.0 458.5L-83.8 458.5" stroke="#7e6c50" stroke-opacity="0.3" stroke-width="0.8"/><path d="M-83.8 458.5L-76.0 458.5L153.1 374.9L147.3 374.9Z" fill="rgb(177,157,122)"/><path d="M153.1 374.9L147.3 374.9" stroke="#7e6c50" stroke-opacity="0.3" stroke-width="0.8"/><path d="M147.3 374.9L153.1 374.9L245.9 341.1L240.9 341.1Z" fill="rgb(177,157,122)"/><path d="M245.9 341.1L240.9 341.1" stroke="#7e6c50" stroke-opacity="0.3" stroke-width="0.8"/><path d="M308.7 318.2L304.3 318.2" stroke="#7e6c50" stroke-opacity="0.3" stroke-width="0.8"/><path d="M366.5 297.1L362.6 297.1" stroke="#7e6c50" stroke-opacity="0.3" stroke-width="0.8"/><path d="M-738.2 700.0L-726.2 700.0L-337.1 557.0L-346.0 557.0Z" fill="rgb(163,143,109)"/><path d="M-337.1 557.0L-346.0 557.0" stroke="#7e6c50" stroke-opacity="0.3" stroke-width="0.8"/><path d="M-346.0 557.0L-337.1 557.0L-79.1 462.1L-86.0 462.1Z" fill="rgb(171,151,117)"/><path d="M-79.1 462.1L-86.0 462.1" stroke="#7e6c50" stroke-opacity="0.3" stroke-width="0.8"/><path d="M-86.0 462.1L-79.1 462.1L151.4 377.4L146.2 377.4Z" fill="rgb(169,149,115)"/><path d="M151.4 377.4L146.2 377.4" stroke="#7e6c50" stroke-opacity="0.3" stroke-width="0.8"/><path d="M146.2 377.4L151.4 377.4L260.9 337.2L256.6 337.2Z" fill="rgb(171,151,117)"/><path d="M260.9 337.2L256.6 337.2" stroke="#7e6c50" stroke-opacity="0.3" stroke-width="0.8"/><path d="M256.6 337.2L260.9 337.2L354.4 302.8L350.9 302.8Z" fill="rgb(165,145,111)"/><path d="M354.4 302.8L350.9 302.8" stroke="#7e6c50" stroke-opacity="0.3" stroke-width="0.8"/><path d="M-726.2 700.0L-711.6 700.0L-223.4 518.8L-233.3 518.8Z" fill="rgb(182,162,128)"/><path d="M-223.4 518.8L-233.3 518.8" stroke="#7e6c50" stroke-opacity="0.3" stroke-width="0.8"/><path d="M-233.3 518.8L-223.4 518.8L-36.2 449.4L-44.4 449.4Z" fill="rgb(174,154,120)"/><path d="M-36.2 449.4L-44.4 449.4" stroke="#7e6c50" stroke-opacity="0.3" stroke-width="0.8"/><path d="M-44.4 449.4L-36.2 449.4L98.1 399.5L91.3 399.5Z" fill="rgb(182,162,128)"/><path d="M98.1 399.5L91.3 399.5" stroke="#7e6c50" stroke-opacity="0.3" stroke-width="0.8"/><path d="M91.3 399.5L98.1 399.5L249.7 343.3L244.3 343.3Z" fill="rgb(180,160,126)"/><path d="M249.7 343.3L244.3 343.3" stroke="#7e6c50" stroke-opacity="0.3" stroke-width="0.8"/><path d="M244.3 343.3L249.7 343.3L312.0 320.2L307.2 320.2Z" fill="rgb(180,160,126)"/><path d="M312.0 320.2L307.2 320.2" stroke="#7e6c50" stroke-opacity="0.3" stroke-width="0.8"/><path d="M307.2 320.2L312.0 320.2L392.1 290.5L388.1 290.5Z" fill="rgb(182,162,128)"/><path d="M392.1 290.5L388.1 290.5" stroke="#7e6c50" stroke-opacity="0.3" stroke-width="0.8"/><path d="M-711.6 700.0L-698.5 700.0L-277.9 542.6L-287.3 542.6Z" fill="rgb(165,145,111)"/><path d="M-277.9 542.6L-287.3 542.6" stroke="#7e6c50" stroke-opacity="0.3" stroke-width="0.8"/><path d="M-287.3 542.6L-277.9 542.6L6.6 436.1L-0.4 436.1Z" fill="rgb(173,153,119)"/><path d="M6.6 436.1L-0.4 436.1" stroke="#7e6c50" stroke-opacity="0.3" stroke-width="0.8"/><path d="M132.3 389.1L126.4 389.1" stroke="#7e6c50" stroke-opacity="0.3" stroke-width="0.8"/><path d="M250.4 344.8L245.5 344.8" stroke="#7e6c50" stroke-opacity="0.3" stroke-width="0.8"/><path d="M353.9 306.1L349.9 306.1" stroke="#7e6c50" stroke-opacity="0.3" stroke-width="0.8"/><path d="M-698.5 700.0L-683.3 700.0L-281.6 548.1L-292.7 548.1Z" fill="rgb(165,145,111)"/><path d="M-281.6 548.1L-292.7 548.1" stroke="#7e6c50" stroke-opacity="0.3" stroke-width="0.8"/><path d="M-292.7 548.1L-281.6 548.1L52.1 421.9L44.4 421.9Z" fill="rgb(165,145,111)"/><path d="M52.1 421.9L44.4 421.9" stroke="#7e6c50" stroke-opacity="0.3" stroke-width="0.8"/><path d="M44.4 421.9L52.1 421.9L211.9 361.5L205.8 361.5Z" fill="rgb(163,143,109)"/><path d="M211.9 361.5L205.8 361.5" stroke="#7e6c50" stroke-opacity="0.3" stroke-width="0.8"/><path d="M205.8 361.5L211.9 361.5L280.1 335.7L274.7 335.7Z" fill="rgb(163,143,109)"/><path d="M280.1 335.7L274.7 335.7" stroke="#7e6c50" stroke-opacity="0.3" stroke-width="0.8"/><path d="M274.7 335.7L280.1 335.7L364.8 303.7L360.3 303.7Z" fill="rgb(165,145,111)"/><path d="M364.8 303.7L360.3 303.7" stroke="#7e6c50" stroke-opacity="0.3" stroke-width="0.8"/><path d="M-683.3 700.0L-669.8 700.0L-346.3 576.6L-356.9 576.6Z" fill="rgb(171,151,117)"/><path d="M-346.3 576.6L-356.9 576.6" stroke="#7e6c50" stroke-opacity="0.3" stroke-width="0.8"/><path d="M-356.9 576.6L-346.3 576.6L-37.6 458.8L-45.3 458.8Z" fill="rgb(165,145,111)"/><path d="M-37.6 458.8L-45.3 458.8" stroke="#7e6c50" stroke-opacity="0.3" stroke-width="0.8"/><path d="M-45.3 458.8L-37.6 458.8L152.1 386.4L146.1 386.4Z" fill="rgb(173,153,119)"/><path d="M152.1 386.4L146.1 386.4" stroke="#7e6c50" stroke-opacity="0.3" stroke-width="0.8"/><path d="M146.1 386.4L152.1 386.4L241.0 352.5L235.8 352.5Z" fill="rgb(165,145,111)"/><path d="M241.0 352.5L235.8 352.5" stroke="#7e6c50" stroke-opacity="0.3" stroke-width="0.8"/><path d="M235.8 352.5L241.0 352.5L338.4 315.3L334.1 315.3Z" fill="rgb(173,153,119)"/><path d="M338.4 315.3L334.1 315.3" stroke="#7e6c50" stroke-opacity="0.3" stroke-width="0.8"/><path d="M334.1 315.3L338.4 315.3L401.6 291.2L397.8 291.2Z" fill="rgb(173,153,119)"/><path d="M401.6 291.2L397.8 291.2" stroke="#7e6c50" stroke-opacity="0.3" stroke-width="0.8"/><path d="M-669.8 700.0L-655.8 700.0L-418.2 608.5L-429.9 608.5Z" fill="rgb(170,150,115)"/><path d="M-418.2 608.5L-429.9 608.5" stroke="#7e6c50" stroke-opacity="0.3" stroke-width="0.8"/><path d="M-429.9 608.5L-418.2 608.5L-106.0 488.2L-114.7 488.2Z" fill="rgb(168,148,113)"/><path d="M-106.0 488.2L-114.7 488.2" stroke="#7e6c50" stroke-opacity="0.3" stroke-width="0.8"/><path d="M-114.7 488.2L-106.0 488.2L138.2 394.2L131.8 394.2Z" fill="rgb(164,144,109)"/><path d="M138.2 394.2L131.8 394.2" stroke="#7e6c50" stroke-opacity="0.3" stroke-width="0.8"/><path d="M131.8 394.2L138.2 394.2L281.7 338.9L276.6 338.9Z" fill="rgb(172,152,117)"/><path d="M281.7 338.9L276.6 338.9" stroke="#7e6c50" stroke-opacity="0.3" stroke-width="0.8"/><path d="M276.6 338.9L281.7 338.9L338.7 316.9L334.2 316.9Z" fill="rgb(172,152,117)"/><path d="M338.7 316.9L334.2 316.9" stroke="#7e6c50" stroke-opacity="0.3" stroke-width="0.8"/><path d="M334.2 316.9L338.7 316.9L390.3 297.1L386.2 297.1Z" fill="rgb(172,152,117)"/><path d="M390.3 297.1L386.2 297.1" stroke="#7e6c50" stroke-opacity="0.3" stroke-width="0.8"/><path d="M-655.8 700.0L-644.7 700.0L-212.3 532.2L-220.1 532.2Z" fill="rgb(175,155,120)"/><path d="M-212.3 532.2L-220.1 532.2" stroke="#7e6c50" stroke-opacity="0.3" stroke-width="0.8"/><path d="M-220.1 532.2L-212.3 532.2L-8.5 453.1L-14.7 453.1Z" fill="rgb(175,155,120)"/><path d="M-8.5 453.1L-14.7 453.1" stroke="#7e6c50" stroke-opacity="0.3" stroke-width="0.8"/><path d="M-14.7 453.1L-8.5 453.1L196.1 373.7L191.4 373.7Z" fill="rgb(167,147,113)"/><path d="M196.1 373.7L191.4 373.7" stroke="#7e6c50" stroke-opacity="0.3" stroke-width="0.8"/><path d="M191.4 373.7L196.1 373.7L298.9 333.8L295.0 333.8Z" fill="rgb(167,147,113)"/><path d="M298.9 333.8L295.0 333.8" stroke="#7e6c50" stroke-opacity="0.3" stroke-width="0.8"/><path d="M295.0 333.8L298.9 333.8L350.8 313.6L347.3 313.6Z" fill="rgb(173,153,119)"/><path d="M350.8 313.6L347.3 313.6" stroke="#7e6c50" stroke-opacity="0.3" stroke-width="0.8"/><path d="M-644.7 700.0L-631.2 700.0L-218.1 538.2L-227.7 538.2Z" fill="rgb(164,144,109)"/><path d="M-218.1 538.2L-227.7 538.2" stroke="#7e6c50" stroke-opacity="0.3" stroke-width="0.8"/><path d="M-227.7 538.2L-218.1 538.2L-37.5 467.4L-45.4 467.4Z" fill="rgb(164,144,109)"/><path d="M-37.5 467.4L-45.4 467.4" stroke="#7e6c50" stroke-opacity="0.3" stroke-width="0.8"/><path d="M-45.4 467.4L-37.5 467.4L110.5 409.4L103.9 409.4Z" fill="rgb(168,148,113)"/><path d="M110.5 409.4L103.9 409.4" stroke="#7e6c50" stroke-opacity="0.3" stroke-width="0.8"/><path d="M103.9 409.4L110.5 409.4L255.9 352.5L250.7 352.5Z" fill="rgb(168,148,113)"/><path d="M255.9 352.5L250.7 352.5" stroke="#7e6c50" stroke-opacity="0.3" stroke-width="0.8"/><path d="M250.7 352.5L255.9 352.5L314.8 329.4L310.2 329.4Z" fill="rgb(170,150,115)"/><path d="M314.8 329.4L310.2 329.4" stroke="#7e6c50" stroke-opacity="0.3" stroke-width="0.8"/><path d="M310.2 329.4L314.8 329.4L375.4 305.6L371.4 305.6Z" fill="rgb(168,148,113)"/><path d="M375.4 305.6L371.4 305.6" stroke="#7e6c50" stroke-opacity="0.3" stroke-width="0.8"/><path d="M-631.2 700.0L-615.9 700.0L-323.7 584.3L-335.9 584.3Z" fill="rgb(170,150,115)"/><path d="M-323.7 584.3L-335.9 584.3" stroke="#7e6c50" stroke-opacity="0.3" stroke-width="0.8"/><path d="M-76.4 486.4L-85.9 486.4" stroke="#7e6c50" stroke-opacity="0.3" stroke-width="0.8"/><path d="M76.3 425.9L68.5 425.9" stroke="#7e6c50" stroke-opacity="0.3" stroke-width="0.8"/><path d="M68.5 425.9L76.3 425.9L188.3 381.6L181.6 381.6Z" fill="rgb(172,152,117)"/><path d="M188.3 381.6L181.6 381.6" stroke="#7e6c50" stroke-opacity="0.3" stroke-width="0.8"/><path d="M181.6 381.6L188.3 381.6L264.4 351.4L258.5 351.4Z" fill="rgb(170,150,115)"/><path d="M264.4 351.4L258.5 351.4" stroke="#7e6c50" stroke-opacity="0.3" stroke-width="0.8"/><path d="M258.5 351.4L264.4 351.4L352.7 316.5L347.8 316.5Z" fill="rgb(176,156,121)"/><path d="M352.7 316.5L347.8 316.5" stroke="#7e6c50" stroke-opacity="0.3" stroke-width="0.8"/><path d="M347.8 316.5L352.7 316.5L396.5 299.1L392.1 299.1Z" fill="rgb(178,157,123)"/><path d="M396.5 299.1L392.1 299.1" stroke="#7e6c50" stroke-opacity="0.3" stroke-width="0.8"/><path d="M-615.9 700.0L-600.8 700.0L-186.5 534.2L-197.1 534.2Z" fill="rgb(171,151,117)"/><path d="M-186.5 534.2L-197.1 534.2" stroke="#7e6c50" stroke-opacity="0.3" stroke-width="0.8"/><path d="M-197.1 534.2L-186.5 534.2L76.3 429.0L68.4 429.0Z" fill="rgb(173,153,119)"/><path d="M76.3 429.0L68.4 429.0" stroke="#7e6c50" stroke-opacity="0.3" stroke-width="0.8"/><path d="M68.4 429.0L76.3 429.0L179.9 387.6L173.1 387.6Z" fill="rgb(169,149,115)"/><path d="M179.9 387.6L173.1 387.6" stroke="#7e6c50" stroke-opacity="0.3" stroke-width="0.8"/><path d="M289.1 343.9L283.6 343.9" stroke="#7e6c50" stroke-opacity="0.3" stroke-width="0.8"/><path d="M351.8 318.8L346.9 318.8" stroke="#7e6c50" stroke-opacity="0.3" stroke-width="0.8"/><path d="M405.9 297.1L401.6 297.1" stroke="#7e6c50" stroke-opacity="0.3" stroke-width="0.8"/><path d="M-510.0 669.1L-523.6 669.1" stroke="#7e6c50" stroke-opacity="0.3" stroke-width="0.8"/><path d="M-523.6 669.1L-510.0 669.1L-140.2 519.6L-150.0 519.6Z" fill="rgb(163,143,109)"/><path d="M-140.2 519.6L-150.0 519.6" stroke="#7e6c50" stroke-opacity="0.3" stroke-width="0.8"/><path d="M16.8 456.1L8.7 456.1" stroke="#7e6c50" stroke-opacity="0.3" stroke-width="0.8"/><path d="M8.7 456.1L16.8 456.1L183.7 388.6L177.3 388.6Z" fill="rgb(163,143,109)"/><path d="M183.7 388.6L177.3 388.6" stroke="#7e6c50" stroke-opacity="0.3" stroke-width="0.8"/><path d="M177.3 388.6L183.7 388.6L303.7 340.1L298.5 340.1Z" fill="rgb(165,145,111)"/><path d="M303.7 340.1L298.5 340.1" stroke="#7e6c50" stroke-opacity="0.3" stroke-width="0.8"/><path d="M298.5 340.1L303.7 340.1L378.3 309.9L373.9 309.9Z" fill="rgb(169,149,115)"/><path d="M378.3 309.9L373.9 309.9" stroke="#7e6c50" stroke-opacity="0.3" stroke-width="0.8"/><path d="M-586.4 700.0L-572.0 700.0L-112.6 512.3L-122.2 512.3Z" fill="rgb(178,158,124)"/><path d="M-112.6 512.3L-122.2 512.3" stroke="#7e6c50" stroke-opacity="0.3" stroke-width="0.8"/><path d="M-122.2 512.3L-112.6 512.3L72.7 436.6L65.0 436.6Z" fill="rgb(178,158,124)"/><path d="M72.7 436.6L65.0 436.6" stroke="#7e6c50" stroke-opacity="0.3" stroke-width="0.8"/><path d="M65.0 436.6L72.7 436.6L233.2 371.0L227.2 371.0Z" fill="rgb(174,154,120)"/><path d="M233.2 371.0L227.2 371.0" stroke="#7e6c50" stroke-opacity="0.3" stroke-width="0.8"/><path d="M227.2 371.0L233.2 371.0L319.2 335.9L314.0 335.9Z" fill="rgb(180,160,126)"/><path d="M319.2 335.9L314.0 335.9" stroke="#7e6c50" stroke-opacity="0.3" stroke-width="0.8"/><path d="M314.0 335.9L319.2 335.9L399.2 303.3L394.9 303.3Z" fill="rgb(182,162,128)"/><path d="M399.2 303.3L394.9 303.3" stroke="#7e6c50" stroke-opacity="0.3" stroke-width="0.8"/><path d="M-572.0 700.0L-558.0 700.0L-312.5 598.7L-324.0 598.7Z" fill="rgb(162,142,108)"/><path d="M-312.5 598.7L-324.0 598.7" stroke="#7e6c50" stroke-opacity="0.3" stroke-width="0.8"/><path d="M-324.0 598.7L-312.5 598.7L23.9 459.9L15.8 459.9Z" fill="rgb(160,140,106)"/><path d="M23.9 459.9L15.8 459.9" stroke="#7e6c50" stroke-opacity="0.3" stroke-width="0.8"/><path d="M15.8 459.9L23.9 459.9L224.7 377.0L218.7 377.0Z" fill="rgb(162,142,108)"/><path d="M224.7 377.0L218.7 377.0" stroke="#7e6c50" stroke-opacity="0.3" stroke-width="0.8"/><path d="M341.1 328.9L336.3 328.9" stroke="#7e6c50" stroke-opacity="0.3" stroke-width="0.8"/><path d="M397.5 305.6L393.3 305.6" stroke="#7e6c50" stroke-opacity="0.3" stroke-width="0.8"/><path d="M-464.4 667.5L-479.3 667.5" stroke="#7e6c50" stroke-opacity="0.3" stroke-width="0.8"/><path d="M-479.3 667.5L-464.4 667.5L-111.7 520.2L-122.5 520.2Z" fill="rgb(169,149,115)"/><path d="M-111.7 520.2L-122.5 520.2" stroke="#7e6c50" stroke-opacity="0.3" stroke-width="0.8"/><path d="M-122.5 520.2L-111.7 520.2L152.8 409.8L145.1 409.8Z" fill="rgb(177,157,122)"/><path d="M152.8 409.8L145.1 409.8" stroke="#7e6c50" stroke-opacity="0.3" stroke-width="0.8"/><path d="M145.1 409.8L152.8 409.8L299.5 348.6L293.5 348.6Z" fill="rgb(175,155,120)"/><path d="M299.5 348.6L293.5 348.6" stroke="#7e6c50" stroke-opacity="0.3" stroke-width="0.8"/><path d="M293.5 348.6L299.5 348.6L351.9 326.7L346.5 326.7Z" fill="rgb(175,155,120)"/><path d="M351.9 326.7L346.5 326.7" stroke="#7e6c50" stroke-opacity="0.3" stroke-width="0.8"/><path d="M346.5 326.7L351.9 326.7L429.9 294.1L425.4 294.1Z" fill="rgb(169,149,115)"/><path d="M429.9 294.1L425.4 294.1" stroke="#7e6c50" stroke-opacity="0.3" stroke-width="0.8"/><path d="M-542.2 700.0L-530.1 700.0L-250.8 582.3L-260.4 582.3Z" fill="rgb(172,152,117)"/><path d="M-250.8 582.3L-260.4 582.3" stroke="#7e6c50" stroke-opacity="0.3" stroke-width="0.8"/><path d="M-260.4 582.3L-250.8 582.3L35.4 461.8L28.4 461.8Z" fill="rgb(180,159,125)"/><path d="M35.4 461.8L28.4 461.8" stroke="#7e6c50" stroke-opacity="0.3" stroke-width="0.8"/><path d="M28.4 461.8L35.4 461.8L197.7 393.4L192.1 393.4Z" fill="rgb(178,157,123)"/><path d="M197.7 393.4L192.1 393.4" stroke="#7e6c50" stroke-opacity="0.3" stroke-width="0.8"/><path d="M192.1 393.4L197.7 393.4L322.9 340.6L318.5 340.6Z" fill="rgb(180,159,125)"/><path d="M322.9 340.6L318.5 340.6" stroke="#7e6c50" stroke-opacity="0.3" stroke-width="0.8"/><path d="M403.0 306.9L399.4 306.9" stroke="#7e6c50" stroke-opacity="0.3" stroke-width="0.8"/><path d="M-530.1 700.0L-514.4 700.0L-211.2 570.7L-223.3 570.7Z" fill="rgb(167,147,113)"/><path d="M-211.2 570.7L-223.3 570.7" stroke="#7e6c50" stroke-opacity="0.3" stroke-width="0.8"/><path d="M-223.3 570.7L-211.2 570.7L93.7 440.8L85.2 440.8Z" fill="rgb(165,145,111)"/><path d="M93.7 440.8L85.2 440.8" stroke="#7e6c50" stroke-opacity="0.3" stroke-width="0.8"/><path d="M85.2 440.8L93.7 440.8L260.7 369.6L254.1 369.6Z" fill="rgb(175,155,120)"/><path d="M260.7 369.6L254.1 369.6" stroke="#7e6c50" stroke-opacity="0.3" stroke-width="0.8"/><path d="M254.1 369.6L260.7 369.6L341.7 335.0L336.2 335.0Z" fill="rgb(173,153,119)"/><path d="M341.7 335.0L336.2 335.0" stroke="#7e6c50" stroke-opacity="0.3" stroke-width="0.8"/><path d="M336.2 335.0L341.7 335.0L419.0 302.1L414.4 302.1Z" fill="rgb(171,151,117)"/><path d="M419.0 302.1L414.4 302.1" stroke="#7e6c50" stroke-opacity="0.3" stroke-width="0.8"/><path d="M-188.4 564.6L-196.7 564.6" stroke="#7e6c50" stroke-opacity="0.3" stroke-width="0.8"/><path d="M-196.7 564.6L-188.4 564.6L-10.6 488.2L-17.5 488.2Z" fill="rgb(165,145,111)"/><path d="M-10.6 488.2L-17.5 488.2" stroke="#7e6c50" stroke-opacity="0.3" stroke-width="0.8"/><path d="M-17.5 488.2L-10.6 488.2L217.1 390.3L212.2 390.3Z" fill="rgb(173,153,119)"/><path d="M217.1 390.3L212.2 390.3" stroke="#7e6c50" stroke-opacity="0.3" stroke-width="0.8"/><path d="M340.5 337.2L336.6 337.2" stroke="#7e6c50" stroke-opacity="0.3" stroke-width="0.8"/><path d="M336.6 337.2L340.5 337.2L386.9 317.3L383.4 317.3Z" fill="rgb(167,147,113)"/><path d="M386.9 317.3L383.4 317.3" stroke="#7e6c50" stroke-opacity="0.3" stroke-width="0.8"/><path d="M383.4 317.3L386.9 317.3L446.5 291.7L443.4 291.7Z" fill="rgb(167,147,113)"/><path d="M446.5 291.7L443.4 291.7" stroke="#7e6c50" stroke-opacity="0.3" stroke-width="0.8"/><path d="M-503.4 700.0L-491.5 700.0L-309.6 621.1L-319.9 621.1Z" fill="rgb(171,151,117)"/><path d="M-309.6 621.1L-319.9 621.1" stroke="#7e6c50" stroke-opacity="0.3" stroke-width="0.8"/><path d="M-319.9 621.1L-309.6 621.1L-86.8 524.4L-95.0 524.4Z" fill="rgb(169,149,115)"/><path d="M-86.8 524.4L-95.0 524.4" stroke="#7e6c50" stroke-opacity="0.3" stroke-width="0.8"/><path d="M174.1 411.3L168.3 411.3" stroke="#7e6c50" stroke-opacity="0.3" stroke-width="0.8"/><path d="M168.3 411.3L174.1 411.3L303.2 355.3L298.6 355.3Z" fill="rgb(165,145,111)"/><path d="M303.2 355.3L298.6 355.3" stroke="#7e6c50" stroke-opacity="0.3" stroke-width="0.8"/><path d="M298.6 355.3L303.2 355.3L368.0 327.2L363.9 327.2Z" fill="rgb(171,151,117)"/><path d="M368.0 327.2L363.9 327.2" stroke="#7e6c50" stroke-opacity="0.3" stroke-width="0.8"/><path d="M363.9 327.2L368.0 327.2L421.3 304.0L417.7 304.0Z" fill="rgb(173,153,119)"/><path d="M421.3 304.0L417.7 304.0" stroke="#7e6c50" stroke-opacity="0.3" stroke-width="0.8"/><path d="M-491.5 700.0L-477.5 700.0L-246.3 598.6L-257.7 598.6Z" fill="rgb(177,157,122)"/><path d="M-246.3 598.6L-257.7 598.6" stroke="#7e6c50" stroke-opacity="0.3" stroke-width="0.8"/><path d="M-257.7 598.6L-246.3 598.6L-17.3 498.2L-26.3 498.2Z" fill="rgb(173,153,119)"/><path d="M-17.3 498.2L-26.3 498.2" stroke="#7e6c50" stroke-opacity="0.3" stroke-width="0.8"/><path d="M195.1 405.1L188.4 405.1" stroke="#7e6c50" stroke-opacity="0.3" stroke-width="0.8"/><path d="M188.4 405.1L195.1 405.1L318.0 351.2L312.6 351.2Z" fill="rgb(169,149,115)"/><path d="M318.0 351.2L312.6 351.2" stroke="#7e6c50" stroke-opacity="0.3" stroke-width="0.8"/><path d="M403.9 313.5L399.5 313.5" stroke="#7e6c50" stroke-opacity="0.3" stroke-width="0.8"/><path d="M-477.5 700.0L-463.2 700.0L-213.5 589.3L-225.0 589.3Z" fill="rgb(162,142,108)"/><path d="M-213.5 589.3L-225.0 589.3" stroke="#7e6c50" stroke-opacity="0.3" stroke-width="0.8"/><path d="M-225.0 589.3L-213.5 589.3L12.4 489.1L3.5 489.1Z" fill="rgb(170,150,115)"/><path d="M12.4 489.1L3.5 489.1" stroke="#7e6c50" stroke-opacity="0.3" stroke-width="0.8"/><path d="M3.5 489.1L12.4 489.1L146.7 429.6L139.3 429.6Z" fill="rgb(164,144,109)"/><path d="M146.7 429.6L139.3 429.6" stroke="#7e6c50" stroke-opacity="0.3" stroke-width="0.8"/><path d="M139.3 429.6L146.7 429.6L239.0 388.6L232.6 388.6Z" fill="rgb(168,148,113)"/><path d="M239.0 388.6L232.6 388.6" stroke="#7e6c50" stroke-opacity="0.3" stroke-width="0.8"/><path d="M232.6 388.6L239.0 388.6L350.0 339.4L344.8 339.4Z" fill="rgb(162,142,108)"/><path d="M350.0 339.4L344.8 339.4" stroke="#7e6c50" stroke-opacity="0.3" stroke-width="0.8"/><path d="M344.8 339.4L350.0 339.4L424.1 306.6L419.7 306.6Z" fill="rgb(164,144,109)"/><path d="M424.1 306.6L419.7 306.6" stroke="#7e6c50" stroke-opacity="0.3" stroke-width="0.8"/><path d="M-463.2 700.0L-451.3 700.0L-422.0 686.9L-433.6 686.9Z" fill="rgb(174,154,120)"/><path d="M-422.0 686.9L-433.6 686.9" stroke="#7e6c50" stroke-opacity="0.3" stroke-width="0.8"/><path d="M-433.6 686.9L-422.0 686.9L-52.4 521.5L-60.6 521.5Z" fill="rgb(182,162,128)"/><path d="M-52.4 521.5L-60.6 521.5" stroke="#7e6c50" stroke-opacity="0.3" stroke-width="0.8"/><path d="M-60.6 521.5L-52.4 521.5L198.5 409.2L192.7 409.2Z" fill="rgb(173,152,118)"/><path d="M198.5 409.2L192.7 409.2" stroke="#7e6c50" stroke-opacity="0.3" stroke-width="0.8"/><path d="M192.7 409.2L198.5 409.2L285.4 370.3L280.5 370.3Z" fill="rgb(182,162,128)"/><path d="M285.4 370.3L280.5 370.3" stroke="#7e6c50" stroke-opacity="0.3" stroke-width="0.8"/><path d="M280.5 370.3L285.4 370.3L348.8 341.9L344.4 341.9Z" fill="rgb(182,162,128)"/><path d="M348.8 341.9L344.4 341.9" stroke="#7e6c50" stroke-opacity="0.3" stroke-width="0.8"/><path d="M344.4 341.9L348.8 341.9L415.6 312.0L411.8 312.0Z" fill="rgb(178,158,124)"/><path d="M415.6 312.0L411.8 312.0" stroke="#7e6c50" stroke-opacity="0.3" stroke-width="0.8"/><path d="M-451.3 700.0L-437.8 700.0L-35.6 518.0L-44.7 518.0Z" fill="rgb(169,149,115)"/><path d="M-35.6 518.0L-44.7 518.0" stroke="#7e6c50" stroke-opacity="0.3" stroke-width="0.8"/><path d="M176.7 422.0L169.9 422.0" stroke="#7e6c50" stroke-opacity="0.3" stroke-width="0.8"/><path d="M169.9 422.0L176.7 422.0L314.2 359.8L308.8 359.8Z" fill="rgb(173,153,119)"/><path d="M314.2 359.8L308.8 359.8" stroke="#7e6c50" stroke-opacity="0.3" stroke-width="0.8"/><path d="M308.8 359.8L314.2 359.8L372.9 333.2L368.2 333.2Z" fill="rgb(173,153,119)"/><path d="M372.9 333.2L368.2 333.2" stroke="#7e6c50" stroke-opacity="0.3" stroke-width="0.8"/><path d="M368.2 333.2L372.9 333.2L430.6 307.1L426.5 307.1Z" fill="rgb(173,153,119)"/><path d="M430.6 307.1L426.5 307.1" stroke="#7e6c50" stroke-opacity="0.3" stroke-width="0.8"/><path d="M-437.8 700.0L-425.8 700.0L-72.8 538.8L-81.4 538.8Z" fill="rgb(180,160,126)"/><path d="M-72.8 538.8L-81.4 538.8" stroke="#7e6c50" stroke-opacity="0.3" stroke-width="0.8"/><path d="M-81.4 538.8L-72.8 538.8L142.5 440.4L136.0 440.4Z" fill="rgb(178,158,124)"/><path d="M142.5 440.4L136.0 440.4" stroke="#7e6c50" stroke-opacity="0.3" stroke-width="0.8"/><path d="M136.0 440.4L142.5 440.4L308.2 364.7L303.4 364.7Z" fill="rgb(182,162,128)"/><path d="M308.2 364.7L303.4 364.7" stroke="#7e6c50" stroke-opacity="0.3" stroke-width="0.8"/><path d="M303.4 364.7L308.2 364.7L364.0 339.2L359.6 339.2Z" fill="rgb(178,158,124)"/><path d="M364.0 339.2L359.6 339.2" stroke="#7e6c50" stroke-opacity="0.3" stroke-width="0.8"/><path d="M359.6 339.2L364.0 339.2L411.2 317.6L407.3 317.6Z" fill="rgb(182,162,128)"/><path d="M411.2 317.6L407.3 317.6" stroke="#7e6c50" stroke-opacity="0.3" stroke-width="0.8"/><path d="M407.3 317.6L411.2 317.6L468.2 291.6L464.9 291.6Z" fill="rgb(178,158,124)"/><path d="M468.2 291.6L464.9 291.6" stroke="#7e6c50" stroke-opacity="0.3" stroke-width="0.8"/><path d="M-425.8 700.0L-412.0 700.0L-10.4 514.5L-19.7 514.5Z" fill="rgb(180,159,125)"/><path d="M-10.4 514.5L-19.7 514.5" stroke="#7e6c50" stroke-opacity="0.3" stroke-width="0.8"/><path d="M-19.7 514.5L-10.4 514.5L223.0 406.6L216.4 406.6Z" fill="rgb(172,152,117)"/><path d="M223.0 406.6L216.4 406.6" stroke="#7e6c50" stroke-opacity="0.3" stroke-width="0.8"/><path d="M332.0 356.3L326.6 356.3" stroke="#7e6c50" stroke-opacity="0.3" stroke-width="0.8"/><path d="M406.1 322.1L401.5 322.1" stroke="#7e6c50" stroke-opacity="0.3" stroke-width="0.8"/><path d="M401.5 322.1L406.1 322.1L441.7 305.6L437.5 305.6Z" fill="rgb(176,156,121)"/><path d="M441.7 305.6L437.5 305.6" stroke="#7e6c50" stroke-opacity="0.3" stroke-width="0.8"/><path d="M-412.0 700.0L-397.3 700.0L-390.2 696.7L-404.8 696.7Z" fill="rgb(165,145,111)"/><path d="M-390.2 696.7L-404.8 696.7" stroke="#7e6c50" stroke-opacity="0.3" stroke-width="0.8"/><path d="M-404.8 696.7L-390.2 696.7L14.6 507.4L4.9 507.4Z" fill="rgb(165,145,111)"/><path d="M14.6 507.4L4.9 507.4" stroke="#7e6c50" stroke-opacity="0.3" stroke-width="0.8"/><path d="M4.9 507.4L14.6 507.4L171.3 434.1L163.5 434.1Z" fill="rgb(171,151,117)"/><path d="M171.3 434.1L163.5 434.1" stroke="#7e6c50" stroke-opacity="0.3" stroke-width="0.8"/><path d="M163.5 434.1L171.3 434.1L285.4 380.8L279.0 380.8Z" fill="rgb(171,151,117)"/><path d="M285.4 380.8L279.0 380.8" stroke="#7e6c50" stroke-opacity="0.3" stroke-width="0.8"/><path d="M359.4 346.2L353.9 346.2" stroke="#7e6c50" stroke-opacity="0.3" stroke-width="0.8"/><path d="M353.9 346.2L359.4 346.2L411.5 321.8L406.6 321.8Z" fill="rgb(165,145,111)"/><path d="M411.5 321.8L406.6 321.8" stroke="#7e6c50" stroke-opacity="0.3" stroke-width="0.8"/><path d="M406.6 321.8L411.5 321.8L475.2 292.0L471.1 292.0Z" fill="rgb(165,145,111)"/><path d="M475.2 292.0L471.1 292.0" stroke="#7e6c50" stroke-opacity="0.3" stroke-width="0.8"/><path d="M-397.3 700.0L-381.8 700.0L-277.4 650.5L-291.5 650.5Z" fill="rgb(169,149,115)"/><path d="M-277.4 650.5L-291.5 650.5" stroke="#7e6c50" stroke-opacity="0.3" stroke-width="0.8"/><path d="M-291.5 650.5L-277.4 650.5L11.9 513.5L1.6 513.5Z" fill="rgb(163,143,109)"/><path d="M11.9 513.5L1.6 513.5" stroke="#7e6c50" stroke-opacity="0.3" stroke-width="0.8"/><path d="M188.2 430.0L180.1 430.0" stroke="#7e6c50" stroke-opacity="0.3" stroke-width="0.8"/><path d="M294.0 379.9L287.3 379.9" stroke="#7e6c50" stroke-opacity="0.3" stroke-width="0.8"/><path d="M287.3 379.9L294.0 379.9L392.9 333.0L387.5 333.0Z" fill="rgb(169,149,115)"/><path d="M392.9 333.0L387.5 333.0" stroke="#7e6c50" stroke-opacity="0.3" stroke-width="0.8"/><path d="M387.5 333.0L392.9 333.0L467.4 297.8L462.9 297.8Z" fill="rgb(165,145,111)"/><path d="M467.4 297.8L462.9 297.8" stroke="#7e6c50" stroke-opacity="0.3" stroke-width="0.8"/><path d="M-381.8 700.0L-368.7 700.0L-179.8 609.5L-190.8 609.5Z" fill="rgb(172,152,117)"/><path d="M-179.8 609.5L-190.8 609.5" stroke="#7e6c50" stroke-opacity="0.3" stroke-width="0.8"/><path d="M143.4 454.8L135.9 454.8" stroke="#7e6c50" stroke-opacity="0.3" stroke-width="0.8"/><path d="M135.9 454.8L143.4 454.8L311.1 374.4L305.6 374.4Z" fill="rgb(164,144,109)"/><path d="M311.1 374.4L305.6 374.4" stroke="#7e6c50" stroke-opacity="0.3" stroke-width="0.8"/><path d="M305.6 374.4L311.1 374.4L373.8 344.4L368.9 344.4Z" fill="rgb(168,148,113)"/><path d="M373.8 344.4L368.9 344.4" stroke="#7e6c50" stroke-opacity="0.3" stroke-width="0.8"/><path d="M368.9 344.4L373.8 344.4L447.2 309.2L443.2 309.2Z" fill="rgb(168,148,113)"/><path d="M447.2 309.2L443.2 309.2" stroke="#7e6c50" stroke-opacity="0.3" stroke-width="0.8"/><path d="M-368.7 700.0L-356.0 700.0L29.8 513.2L21.3 513.2Z" fill="rgb(167,147,113)"/><path d="M29.8 513.2L21.3 513.2" stroke="#7e6c50" stroke-opacity="0.3" stroke-width="0.8"/><path d="M21.3 513.2L29.8 513.2L224.3 419.0L217.9 419.0Z" fill="rgb(171,151,117)"/><path d="M224.3 419.0L217.9 419.0" stroke="#7e6c50" stroke-opacity="0.3" stroke-width="0.8"/><path d="M217.9 419.0L224.3 419.0L348.1 359.1L343.0 359.1Z" fill="rgb(165,145,111)"/><path d="M348.1 359.1L343.0 359.1" stroke="#7e6c50" stroke-opacity="0.3" stroke-width="0.8"/><path d="M343.0 359.1L348.1 359.1L414.5 327.0L410.2 327.0Z" fill="rgb(167,147,113)"/><path d="M414.5 327.0L410.2 327.0" stroke="#7e6c50" stroke-opacity="0.3" stroke-width="0.8"/><path d="M482.2 294.2L478.7 294.2" stroke="#7e6c50" stroke-opacity="0.3" stroke-width="0.8"/><path d="M-356.0 700.0L-342.1 700.0L-202.7 631.7L-214.9 631.7Z" fill="rgb(168,148,113)"/><path d="M-202.7 631.7L-214.9 631.7" stroke="#7e6c50" stroke-opacity="0.3" stroke-width="0.8"/><path d="M74.8 495.7L65.9 495.7" stroke="#7e6c50" stroke-opacity="0.3" stroke-width="0.8"/><path d="M65.9 495.7L74.8 495.7L255.5 407.2L248.8 407.2Z" fill="rgb(160,140,106)"/><path d="M255.5 407.2L248.8 407.2" stroke="#7e6c50" stroke-opacity="0.3" stroke-width="0.8"/><path d="M248.8 407.2L255.5 407.2L371.4 350.4L366.1 350.4Z" fill="rgb(164,144,109)"/><path d="M371.4 350.4L366.1 350.4" stroke="#7e6c50" stroke-opacity="0.3" stroke-width="0.8"/><path d="M416.4 328.4L411.6 328.4" stroke="#7e6c50" stroke-opacity="0.3" stroke-width="0.8"/><path d="M484.2 295.1L480.2 295.1" stroke="#7e6c50" stroke-opacity="0.3" stroke-width="0.8"/><path d="M-342.1 700.0L-326.6 700.0L-224.9 649.5L-239.1 649.5Z" fill="rgb(168,148,113)"/><path d="M-224.9 649.5L-239.1 649.5" stroke="#7e6c50" stroke-opacity="0.3" stroke-width="0.8"/><path d="M-239.1 649.5L-224.9 649.5L91.8 492.2L82.0 492.2Z" fill="rgb(160,140,106)"/><path d="M91.8 492.2L82.0 492.2" stroke="#7e6c50" stroke-opacity="0.3" stroke-width="0.8"/><path d="M242.7 417.3L234.9 417.3" stroke="#7e6c50" stroke-opacity="0.3" stroke-width="0.8"/><path d="M331.2 373.3L324.7 373.3" stroke="#7e6c50" stroke-opacity="0.3" stroke-width="0.8"/><path d="M324.7 373.3L331.2 373.3L401.4 338.4L395.8 338.4Z" fill="rgb(164,144,109)"/><path d="M401.4 338.4L395.8 338.4" stroke="#7e6c50" stroke-opacity="0.3" stroke-width="0.8"/><path d="M395.8 338.4L401.4 338.4L442.5 318.0L437.5 318.0Z" fill="rgb(160,140,106)"/><path d="M442.5 318.0L437.5 318.0" stroke="#7e6c50" stroke-opacity="0.3" stroke-width="0.8"/><path d="M437.5 318.0L442.5 318.0L475.0 301.9L470.5 301.9Z" fill="rgb(160,140,106)"/><path d="M475.0 301.9L470.5 301.9" stroke="#7e6c50" stroke-opacity="0.3" stroke-width="0.8"/><path d="M-326.6 700.0L-310.6 700.0L-178.4 633.4L-192.5 633.4Z" fill="rgb(169,149,115)"/><path d="M-178.4 633.4L-192.5 633.4" stroke="#7e6c50" stroke-opacity="0.3" stroke-width="0.8"/><path d="M36.1 525.4L25.0 525.4" stroke="#7e6c50" stroke-opacity="0.3" stroke-width="0.8"/><path d="M25.0 525.4L36.1 525.4L177.7 454.0L168.7 454.0Z" fill="rgb(171,151,117)"/><path d="M177.7 454.0L168.7 454.0" stroke="#7e6c50" stroke-opacity="0.3" stroke-width="0.8"/><path d="M168.7 454.0L177.7 454.0L305.1 389.9L297.8 389.9Z" fill="rgb(171,151,117)"/><path d="M305.1 389.9L297.8 389.9" stroke="#7e6c50" stroke-opacity="0.3" stroke-width="0.8"/><path d="M297.8 389.9L305.1 389.9L374.1 355.1L367.9 355.1Z" fill="rgb(173,153,119)"/><path d="M374.1 355.1L367.9 355.1" stroke="#7e6c50" stroke-opacity="0.3" stroke-width="0.8"/><path d="M367.9 355.1L374.1 355.1L449.6 317.1L444.4 317.1Z" fill="rgb(173,153,119)"/><path d="M449.6 317.1L444.4 317.1" stroke="#7e6c50" stroke-opacity="0.3" stroke-width="0.8"/><path d="M-310.6 700.0L-295.9 700.0L-120.6 610.5L-133.0 610.5Z" fill="rgb(173,153,119)"/><path d="M-120.6 610.5L-133.0 610.5" stroke="#7e6c50" stroke-opacity="0.3" stroke-width="0.8"/><path d="M-133.0 610.5L-120.6 610.5L175.5 459.4L167.0 459.4Z" fill="rgb(165,145,111)"/><path d="M175.5 459.4L167.0 459.4" stroke="#7e6c50" stroke-opacity="0.3" stroke-width="0.8"/><path d="M321.8 384.7L315.3 384.7" stroke="#7e6c50" stroke-opacity="0.3" stroke-width="0.8"/><path d="M315.3 384.7L321.8 384.7L394.2 347.8L388.6 347.8Z" fill="rgb(163,143,109)"/><path d="M394.2 347.8L388.6 347.8" stroke="#7e6c50" stroke-opacity="0.3" stroke-width="0.8"/><path d="M388.6 347.8L394.2 347.8L458.0 315.2L453.3 315.2Z" fill="rgb(171,151,117)"/><path d="M458.0 315.2L453.3 315.2" stroke="#7e6c50" stroke-opacity="0.3" stroke-width="0.8"/><path d="M453.3 315.2L458.0 315.2L499.3 294.1L495.1 294.1Z" fill="rgb(163,143,109)"/><path d="M499.3 294.1L495.1 294.1" stroke="#7e6c50" stroke-opacity="0.3" stroke-width="0.8"/><path d="M-295.9 700.0L-280.3 700.0L-193.1 654.9L-207.5 654.9Z" fill="rgb(180,160,126)"/><path d="M-193.1 654.9L-207.5 654.9" stroke="#7e6c50" stroke-opacity="0.3" stroke-width="0.8"/><path d="M-207.5 654.9L-193.1 654.9L47.0 530.5L36.1 530.5Z" fill="rgb(173,152,118)"/><path d="M47.0 530.5L36.1 530.5" stroke="#7e6c50" stroke-opacity="0.3" stroke-width="0.8"/><path d="M36.1 530.5L47.0 530.5L226.1 437.8L217.7 437.8Z" fill="rgb(182,162,128)"/><path d="M226.1 437.8L217.7 437.8" stroke="#7e6c50" stroke-opacity="0.3" stroke-width="0.8"/><path d="M217.7 437.8L226.1 437.8L312.5 393.1L305.4 393.1Z" fill="rgb(182,162,128)"/><path d="M312.5 393.1L305.4 393.1" stroke="#7e6c50" stroke-opacity="0.3" stroke-width="0.8"/><path d="M305.4 393.1L312.5 393.1L375.5 360.5L369.3 360.5Z" fill="rgb(178,158,124)"/><path d="M375.5 360.5L369.3 360.5" stroke="#7e6c50" stroke-opacity="0.3" stroke-width="0.8"/><path d="M369.3 360.5L375.5 360.5L437.0 328.6L431.6 328.6Z" fill="rgb(173,152,118)"/><path d="M437.0 328.6L431.6 328.6" stroke="#7e6c50" stroke-opacity="0.3" stroke-width="0.8"/><path d="M431.6 328.6L437.0 328.6L483.6 304.5L478.9 304.5Z" fill="rgb(174,154,120)"/><path d="M483.6 304.5L478.9 304.5" stroke="#7e6c50" stroke-opacity="0.3" stroke-width="0.8"/><path d="M-280.3 700.0L-267.4 700.0L50.5 533.5L41.4 533.5Z" fill="rgb(174,154,120)"/><path d="M50.5 533.5L41.4 533.5" stroke="#7e6c50" stroke-opacity="0.3" stroke-width="0.8"/><path d="M41.4 533.5L50.5 533.5L227.9 440.5L220.9 440.5Z" fill="rgb(178,158,124)"/><path d="M227.9 440.5L220.9 440.5" stroke="#7e6c50" stroke-opacity="0.3" stroke-width="0.8"/><path d="M220.9 440.5L227.9 440.5L331.0 386.5L325.3 386.5Z" fill="rgb(173,152,118)"/><path d="M331.0 386.5L325.3 386.5" stroke="#7e6c50" stroke-opacity="0.3" stroke-width="0.8"/><path d="M427.2 336.1L422.6 336.1" stroke="#7e6c50" stroke-opacity="0.3" stroke-width="0.8"/><path d="M422.6 336.1L427.2 336.1L473.7 311.7L469.7 311.7Z" fill="rgb(173,152,118)"/><path d="M473.7 311.7L469.7 311.7" stroke="#7e6c50" stroke-opacity="0.3" stroke-width="0.8"/><path d="M469.7 311.7L473.7 311.7L505.9 294.9L502.2 294.9Z" fill="rgb(180,160,126)"/><path d="M505.9 294.9L502.2 294.9" stroke="#7e6c50" stroke-opacity="0.3" stroke-width="0.8"/><path d="M-267.4 700.0L-255.0 700.0L18.4 555.1L9.2 555.1Z" fill="rgb(172,152,117)"/><path d="M18.4 555.1L9.2 555.1" stroke="#7e6c50" stroke-opacity="0.3" stroke-width="0.8"/><path d="M9.2 555.1L18.4 555.1L186.8 465.8L179.6 465.8Z" fill="rgb(162,142,108)"/><path d="M186.8 465.8L179.6 465.8" stroke="#7e6c50" stroke-opacity="0.3" stroke-width="0.8"/><path d="M179.6 465.8L186.8 465.8L343.4 382.8L338.0 382.8Z" fill="rgb(162,142,108)"/><path d="M343.4 382.8L338.0 382.8" stroke="#7e6c50" stroke-opacity="0.3" stroke-width="0.8"/><path d="M338.0 382.8L343.4 382.8L420.1 342.2L415.5 342.2Z" fill="rgb(162,142,108)"/><path d="M420.1 342.2L415.5 342.2" stroke="#7e6c50" stroke-opacity="0.3" stroke-width="0.8"/><path d="M415.5 342.2L420.1 342.2L486.9 306.8L483.1 306.8Z" fill="rgb(172,152,117)"/><path d="M486.9 306.8L483.1 306.8" stroke="#7e6c50" stroke-opacity="0.3" stroke-width="0.8"/><path d="M-255.0 700.0L-242.8 700.0L-158.7 654.9L-169.9 654.9Z" fill="rgb(173,153,119)"/><path d="M-158.7 654.9L-169.9 654.9" stroke="#7e6c50" stroke-opacity="0.3" stroke-width="0.8"/><path d="M-169.9 654.9L-158.7 654.9L81.8 525.9L73.4 525.9Z" fill="rgb(169,149,115)"/><path d="M81.8 525.9L73.4 525.9" stroke="#7e6c50" stroke-opacity="0.3" stroke-width="0.8"/><path d="M73.4 525.9L81.8 525.9L202.6 461.2L195.6 461.2Z" fill="rgb(169,149,115)"/><path d="M202.6 461.2L195.6 461.2" stroke="#7e6c50" stroke-opacity="0.3" stroke-width="0.8"/><path d="M195.6 461.2L202.6 461.2L323.6 396.3L318.0 396.3Z" fill="rgb(169,149,115)"/><path d="M323.6 396.3L318.0 396.3" stroke="#7e6c50" stroke-opacity="0.3" stroke-width="0.8"/><path d="M407.6 351.3L402.9 351.3" stroke="#7e6c50" stroke-opacity="0.3" stroke-width="0.8"/><path d="M402.9 351.3L407.6 351.3L476.4 314.4L472.5 314.4Z" fill="rgb(167,147,113)"/><path d="M476.4 314.4L472.5 314.4" stroke="#7e6c50" stroke-opacity="0.3" stroke-width="0.8"/><path d="M-242.8 700.0L-228.7 700.0L-55.6 605.9L-67.4 605.9Z" fill="rgb(172,152,117)"/><path d="M-55.6 605.9L-67.4 605.9" stroke="#7e6c50" stroke-opacity="0.3" stroke-width="0.8"/><path d="M-67.4 605.9L-55.6 605.9L208.5 462.4L200.3 462.4Z" fill="rgb(176,156,121)"/><path d="M208.5 462.4L200.3 462.4" stroke="#7e6c50" stroke-opacity="0.3" stroke-width="0.8"/><path d="M200.3 462.4L208.5 462.4L365.5 377.1L359.4 377.1Z" fill="rgb(180,159,125)"/><path d="M365.5 377.1L359.4 377.1" stroke="#7e6c50" stroke-opacity="0.3" stroke-width="0.8"/><path d="M359.4 377.1L365.5 377.1L424.5 345.0L419.3 345.0Z" fill="rgb(172,152,117)"/><path d="M424.5 345.0L419.3 345.0" stroke="#7e6c50" stroke-opacity="0.3" stroke-width="0.8"/><path d="M419.3 345.0L424.5 345.0L472.9 318.7L468.3 318.7Z" fill="rgb(178,157,123)"/><path d="M472.9 318.7L468.3 318.7" stroke="#7e6c50" stroke-opacity="0.3" stroke-width="0.8"/><path d="M510.8 298.1L506.8 298.1" stroke="#7e6c50" stroke-opacity="0.3" stroke-width="0.8"/><path d="M-228.7 700.0L-213.8 700.0L96.7 528.8L86.3 528.8Z" fill="rgb(169,149,115)"/><path d="M96.7 528.8L86.3 528.8" stroke="#7e6c50" stroke-opacity="0.3" stroke-width="0.8"/><path d="M86.3 528.8L96.7 528.8L218.7 461.6L210.1 461.6Z" fill="rgb(165,145,111)"/><path d="M218.7 461.6L210.1 461.6" stroke="#7e6c50" stroke-opacity="0.3" stroke-width="0.8"/><path d="M210.1 461.6L218.7 461.6L358.6 384.4L352.0 384.4Z" fill="rgb(173,153,119)"/><path d="M358.6 384.4L352.0 384.4" stroke="#7e6c50" stroke-opacity="0.3" stroke-width="0.8"/><path d="M352.0 384.4L358.6 384.4L420.1 350.5L414.4 350.5Z" fill="rgb(163,143,109)"/><path d="M420.1 350.5L414.4 350.5" stroke="#7e6c50" stroke-opacity="0.3" stroke-width="0.8"/><path d="M462.7 327.0L457.6 327.0" stroke="#7e6c50" stroke-opacity="0.3" stroke-width="0.8"/><path d="M457.6 327.0L462.7 327.0L516.9 297.1L512.7 297.1Z" fill="rgb(169,149,115)"/><path d="M516.9 297.1L512.7 297.1" stroke="#7e6c50" stroke-opacity="0.3" stroke-width="0.8"/><path d="M-213.8 700.0L-199.6 700.0L-184.4 691.5L-198.4 691.5Z" fill="rgb(171,151,117)"/><path d="M-184.4 691.5L-198.4 691.5" stroke="#7e6c50" stroke-opacity="0.3" stroke-width="0.8"/><path d="M-198.4 691.5L-184.4 691.5L178.2 488.8L169.3 488.8Z" fill="rgb(163,143,109)"/><path d="M178.2 488.8L169.3 488.8" stroke="#7e6c50" stroke-opacity="0.3" stroke-width="0.8"/><path d="M289.5 426.6L282.2 426.6" stroke="#7e6c50" stroke-opacity="0.3" stroke-width="0.8"/><path d="M282.2 426.6L289.5 426.6L390.3 370.2L384.4 370.2Z" fill="rgb(171,151,117)"/><path d="M390.3 370.2L384.4 370.2" stroke="#7e6c50" stroke-opacity="0.3" stroke-width="0.8"/><path d="M384.4 370.2L390.3 370.2L470.6 325.3L465.8 325.3Z" fill="rgb(165,145,111)"/><path d="M470.6 325.3L465.8 325.3" stroke="#7e6c50" stroke-opacity="0.3" stroke-width="0.8"/><path d="M465.8 325.3L470.6 325.3L502.0 307.8L497.7 307.8Z" fill="rgb(171,151,117)"/><path d="M502.0 307.8L497.7 307.8" stroke="#7e6c50" stroke-opacity="0.3" stroke-width="0.8"/><path d="M-199.6 700.0L-187.7 700.0L63.2 558.1L54.3 558.1Z" fill="rgb(177,157,122)"/><path d="M63.2 558.1L54.3 558.1" stroke="#7e6c50" stroke-opacity="0.3" stroke-width="0.8"/><path d="M54.3 558.1L63.2 558.1L256.6 448.6L250.0 448.6Z" fill="rgb(167,147,113)"/><path d="M256.6 448.6L250.0 448.6" stroke="#7e6c50" stroke-opacity="0.3" stroke-width="0.8"/><path d="M250.0 448.6L256.6 448.6L372.8 382.9L367.6 382.9Z" fill="rgb(177,157,122)"/><path d="M372.8 382.9L367.6 382.9" stroke="#7e6c50" stroke-opacity="0.3" stroke-width="0.8"/><path d="M367.6 382.9L372.8 382.9L441.1 344.2L436.7 344.2Z" fill="rgb(173,153,119)"/><path d="M441.1 344.2L436.7 344.2" stroke="#7e6c50" stroke-opacity="0.3" stroke-width="0.8"/><path d="M436.7 344.2L441.1 344.2L503.9 308.8L500.2 308.8Z" fill="rgb(167,147,113)"/><path d="M503.9 308.8L500.2 308.8" stroke="#7e6c50" stroke-opacity="0.3" stroke-width="0.8"/><path d="M-187.7 700.0L-175.5 700.0L102.9 540.6L94.1 540.6Z" fill="rgb(176,156,121)"/><path d="M102.9 540.6L94.1 540.6" stroke="#7e6c50" stroke-opacity="0.3" stroke-width="0.8"/><path d="M288.4 434.3L281.9 434.3" stroke="#7e6c50" stroke-opacity="0.3" stroke-width="0.8"/><path d="M400.1 370.4L395.0 370.4" stroke="#7e6c50" stroke-opacity="0.3" stroke-width="0.8"/><path d="M395.0 370.4L400.1 370.4L463.7 333.9L459.4 333.9Z" fill="rgb(178,157,123)"/><path d="M463.7 333.9L459.4 333.9" stroke="#7e6c50" stroke-opacity="0.3" stroke-width="0.8"/><path d="M459.4 333.9L463.7 333.9L525.1 298.7L521.6 298.7Z" fill="rgb(176,156,121)"/><path d="M525.1 298.7L521.6 298.7" stroke="#7e6c50" stroke-opacity="0.3" stroke-width="0.8"/><path d="M-175.5 700.0L-163.2 700.0L68.3 565.8L58.9 565.8Z" fill="rgb(173,152,118)"/><path d="M68.3 565.8L58.9 565.8" stroke="#7e6c50" stroke-opacity="0.3" stroke-width="0.8"/><path d="M58.9 565.8L68.3 565.8L298.8 432.1L292.3 432.1Z" fill="rgb(180,160,126)"/><path d="M298.8 432.1L292.3 432.1" stroke="#7e6c50" stroke-opacity="0.3" stroke-width="0.8"/><path d="M292.3 432.1L298.8 432.1L391.3 378.4L386.0 378.4Z" fill="rgb(174,154,120)"/><path d="M391.3 378.4L386.0 378.4" stroke="#7e6c50" stroke-opacity="0.3" stroke-width="0.8"/><path d="M386.0 378.4L391.3 378.4L456.7 340.5L452.2 340.5Z" fill="rgb(182,162,128)"/><path d="M456.7 340.5L452.2 340.5" stroke="#7e6c50" stroke-opacity="0.3" stroke-width="0.8"/><path d="M452.2 340.5L456.7 340.5L499.0 316.0L495.0 316.0Z" fill="rgb(173,152,118)"/><path d="M499.0 316.0L495.0 316.0" stroke="#7e6c50" stroke-opacity="0.3" stroke-width="0.8"/><path d="M495.0 316.0L499.0 316.0L531.0 297.4L527.4 297.4Z" fill="rgb(180,160,126)"/><path d="M531.0 297.4L527.4 297.4" stroke="#7e6c50" stroke-opacity="0.3" stroke-width="0.8"/><path d="M-163.2 700.0L-147.9 700.0L125.3 539.0L114.3 539.0Z" fill="rgb(171,151,117)"/><path d="M125.3 539.0L114.3 539.0" stroke="#7e6c50" stroke-opacity="0.3" stroke-width="0.8"/><path d="M114.3 539.0L125.3 539.0L306.8 432.1L298.7 432.1Z" fill="rgb(169,149,115)"/><path d="M306.8 432.1L298.7 432.1" stroke="#7e6c50" stroke-opacity="0.3" stroke-width="0.8"/><path d="M298.7 432.1L306.8 432.1L419.4 365.7L413.1 365.7Z" fill="rgb(171,151,117)"/><path d="M419.4 365.7L413.1 365.7" stroke="#7e6c50" stroke-opacity="0.3" stroke-width="0.8"/><path d="M413.1 365.7L419.4 365.7L483.2 328.1L478.0 328.1Z" fill="rgb(171,151,117)"/><path d="M483.2 328.1L478.0 328.1" stroke="#7e6c50" stroke-opacity="0.3" stroke-width="0.8"/><path d="M478.0 328.1L483.2 328.1L515.3 309.2L510.6 309.2Z" fill="rgb(171,151,117)"/><path d="M515.3 309.2L510.6 309.2" stroke="#7e6c50" stroke-opacity="0.3" stroke-width="0.8"/><path d="M-147.9 700.0L-136.7 700.0L99.0 559.5L90.5 559.5Z" fill="rgb(165,145,111)"/><path d="M99.0 559.5L90.5 559.5" stroke="#7e6c50" stroke-opacity="0.3" stroke-width="0.8"/><path d="M90.5 559.5L99.0 559.5L266.3 459.7L259.9 459.7Z" fill="rgb(167,147,113)"/><path d="M266.3 459.7L259.9 459.7" stroke="#7e6c50" stroke-opacity="0.3" stroke-width="0.8"/><path d="M259.9 459.7L266.3 459.7L355.3 406.7L349.9 406.7Z" fill="rgb(171,151,117)"/><path d="M355.3 406.7L349.9 406.7" stroke="#7e6c50" stroke-opacity="0.3" stroke-width="0.8"/><path d="M349.9 406.7L355.3 406.7L426.0 364.5L421.5 364.5Z" fill="rgb(171,151,117)"/><path d="M426.0 364.5L421.5 364.5" stroke="#7e6c50" stroke-opacity="0.3" stroke-width="0.8"/><path d="M421.5 364.5L426.0 364.5L500.1 320.3L496.4 320.3Z" fill="rgb(167,147,113)"/><path d="M500.1 320.3L496.4 320.3" stroke="#7e6c50" stroke-opacity="0.3" stroke-width="0.8"/><path d="M496.4 320.3L500.1 320.3L531.0 301.9L527.7 301.9Z" fill="rgb(173,153,119)"/><path d="M531.0 301.9L527.7 301.9" stroke="#7e6c50" stroke-opacity="0.3" stroke-width="0.8"/><path d="M45.7 598.0L34.3 598.0" stroke="#7e6c50" stroke-opacity="0.3" stroke-width="0.8"/><path d="M34.3 598.0L45.7 598.0L275.1 459.3L267.1 459.3Z" fill="rgb(173,153,119)"/><path d="M275.1 459.3L267.1 459.3" stroke="#7e6c50" stroke-opacity="0.3" stroke-width="0.8"/><path d="M267.1 459.3L275.1 459.3L354.9 411.0L348.1 411.0Z" fill="rgb(169,149,115)"/><path d="M354.9 411.0L348.1 411.0" stroke="#7e6c50" stroke-opacity="0.3" stroke-width="0.8"/><path d="M348.1 411.0L354.9 411.0L437.2 361.2L431.6 361.2Z" fill="rgb(165,145,111)"/><path d="M437.2 361.2L431.6 361.2" stroke="#7e6c50" stroke-opacity="0.3" stroke-width="0.8"/><path d="M431.6 361.2L437.2 361.2L505.4 319.9L500.8 319.9Z" fill="rgb(173,153,119)"/><path d="M505.4 319.9L500.8 319.9" stroke="#7e6c50" stroke-opacity="0.3" stroke-width="0.8"/><path d="M500.8 319.9L505.4 319.9L540.5 298.7L536.5 298.7Z" fill="rgb(165,145,111)"/><path d="M540.5 298.7L536.5 298.7" stroke="#7e6c50" stroke-opacity="0.3" stroke-width="0.8"/><path d="M89.4 578.6L77.9 578.6" stroke="#7e6c50" stroke-opacity="0.3" stroke-width="0.8"/><path d="M77.9 578.6L89.4 578.6L307.9 444.3L299.8 444.3Z" fill="rgb(171,151,117)"/><path d="M307.9 444.3L299.8 444.3" stroke="#7e6c50" stroke-opacity="0.3" stroke-width="0.8"/><path d="M299.8 444.3L307.9 444.3L398.1 388.8L391.5 388.8Z" fill="rgb(173,153,119)"/><path d="M398.1 388.8L391.5 388.8" stroke="#7e6c50" stroke-opacity="0.3" stroke-width="0.8"/><path d="M391.5 388.8L398.1 388.8L458.3 351.8L452.6 351.8Z" fill="rgb(163,143,109)"/><path d="M458.3 351.8L452.6 351.8" stroke="#7e6c50" stroke-opacity="0.3" stroke-width="0.8"/><path d="M452.6 351.8L458.3 351.8L493.7 330.0L488.6 330.0Z" fill="rgb(163,143,109)"/><path d="M493.7 330.0L488.6 330.0" stroke="#7e6c50" stroke-opacity="0.3" stroke-width="0.8"/><path d="M488.6 330.0L493.7 330.0L538.0 302.8L533.6 302.8Z" fill="rgb(163,143,109)"/><path d="M538.0 302.8L533.6 302.8" stroke="#7e6c50" stroke-opacity="0.3" stroke-width="0.8"/><path d="M-108.1 700.0L-92.2 700.0L103.9 577.4L91.4 577.4Z" fill="rgb(173,153,119)"/><path d="M103.9 577.4L91.4 577.4" stroke="#7e6c50" stroke-opacity="0.3" stroke-width="0.8"/><path d="M91.4 577.4L103.9 577.4L317.4 443.8L308.7 443.8Z" fill="rgb(177,157,122)"/><path d="M317.4 443.8L308.7 443.8" stroke="#7e6c50" stroke-opacity="0.3" stroke-width="0.8"/><path d="M308.7 443.8L317.4 443.8L422.8 377.8L416.0 377.8Z" fill="rgb(169,149,115)"/><path d="M422.8 377.8L416.0 377.8" stroke="#7e6c50" stroke-opacity="0.3" stroke-width="0.8"/><path d="M416.0 377.8L422.8 377.8L494.4 333.0L488.8 333.0Z" fill="rgb(169,149,115)"/><path d="M494.4 333.0L488.8 333.0" stroke="#7e6c50" stroke-opacity="0.3" stroke-width="0.8"/><path d="M488.8 333.0L494.4 333.0L542.4 303.0L537.7 303.0Z" fill="rgb(175,155,120)"/><path d="M542.4 303.0L537.7 303.0" stroke="#7e6c50" stroke-opacity="0.3" stroke-width="0.8"/><path d="M-92.2 700.0L-80.5 700.0L111.6 578.3L102.4 578.3Z" fill="rgb(160,140,106)"/><path d="M111.6 578.3L102.4 578.3" stroke="#7e6c50" stroke-opacity="0.3" stroke-width="0.8"/><path d="M310.4 452.3L303.8 452.3" stroke="#7e6c50" stroke-opacity="0.3" stroke-width="0.8"/><path d="M303.8 452.3L310.4 452.3L424.9 379.7L419.9 379.7Z" fill="rgb(160,140,106)"/><path d="M424.9 379.7L419.9 379.7" stroke="#7e6c50" stroke-opacity="0.3" stroke-width="0.8"/><path d="M419.9 379.7L424.9 379.7L489.5 338.8L485.3 338.8Z" fill="rgb(160,140,106)"/><path d="M489.5 338.8L485.3 338.8" stroke="#7e6c50" stroke-opacity="0.3" stroke-width="0.8"/><path d="M485.3 338.8L489.5 338.8L543.7 304.4L540.2 304.4Z" fill="rgb(164,144,109)"/><path d="M543.7 304.4L540.2 304.4" stroke="#7e6c50" stroke-opacity="0.3" stroke-width="0.8"/><path d="M-80.5 700.0L-69.4 700.0L220.6 513.9L213.2 513.9Z" fill="rgb(171,151,117)"/><path d="M220.6 513.9L213.2 513.9" stroke="#7e6c50" stroke-opacity="0.3" stroke-width="0.8"/><path d="M213.2 513.9L220.6 513.9L344.1 434.6L338.2 434.6Z" fill="rgb(165,145,111)"/><path d="M344.1 434.6L338.2 434.6" stroke="#7e6c50" stroke-opacity="0.3" stroke-width="0.8"/><path d="M425.7 382.2L420.9 382.2" stroke="#7e6c50" stroke-opacity="0.3" stroke-width="0.8"/><path d="M420.9 382.2L425.7 382.2L471.6 352.8L467.3 352.8Z" fill="rgb(163,143,109)"/><path d="M471.6 352.8L467.3 352.8" stroke="#7e6c50" stroke-opacity="0.3" stroke-width="0.8"/><path d="M467.3 352.8L471.6 352.8L528.9 316.0L525.4 316.0Z" fill="rgb(165,145,111)"/><path d="M528.9 316.0L525.4 316.0" stroke="#7e6c50" stroke-opacity="0.3" stroke-width="0.8"/><path d="M-69.4 700.0L-55.6 700.0L17.1 652.6L4.5 652.6Z" fill="rgb(180,159,125)"/><path d="M17.1 652.6L4.5 652.6" stroke="#7e6c50" stroke-opacity="0.3" stroke-width="0.8"/><path d="M4.5 652.6L17.1 652.6L258.7 495.1L249.9 495.1Z" fill="rgb(176,156,121)"/><path d="M258.7 495.1L249.9 495.1" stroke="#7e6c50" stroke-opacity="0.3" stroke-width="0.8"/><path d="M249.9 495.1L258.7 495.1L373.0 420.6L366.0 420.6Z" fill="rgb(180,159,125)"/><path d="M373.0 420.6L366.0 420.6" stroke="#7e6c50" stroke-opacity="0.3" stroke-width="0.8"/><path d="M366.0 420.6L373.0 420.6L463.3 361.7L457.8 361.7Z" fill="rgb(176,156,121)"/><path d="M463.3 361.7L457.8 361.7" stroke="#7e6c50" stroke-opacity="0.3" stroke-width="0.8"/><path d="M511.0 330.6L506.2 330.6" stroke="#7e6c50" stroke-opacity="0.3" stroke-width="0.8"/><path d="M506.2 330.6L511.0 330.6L553.8 302.7L549.7 302.7Z" fill="rgb(180,159,125)"/><path d="M553.8 302.7L549.7 302.7" stroke="#7e6c50" stroke-opacity="0.3" stroke-width="0.8"/><path d="M-55.6 700.0L-43.6 700.0L150.3 571.8L141.0 571.8Z" fill="rgb(165,145,111)"/><path d="M150.3 571.8L141.0 571.8" stroke="#7e6c50" stroke-opacity="0.3" stroke-width="0.8"/><path d="M141.0 571.8L150.3 571.8L349.8 439.9L343.4 439.9Z" fill="rgb(173,153,119)"/><path d="M349.8 439.9L343.4 439.9" stroke="#7e6c50" stroke-opacity="0.3" stroke-width="0.8"/><path d="M343.4 439.9L349.8 439.9L457.7 368.6L452.7 368.6Z" fill="rgb(163,143,109)"/><path d="M457.7 368.6L452.7 368.6" stroke="#7e6c50" stroke-opacity="0.3" stroke-width="0.8"/><path d="M452.7 368.6L457.7 368.6L512.5 332.4L508.3 332.4Z" fill="rgb(173,153,119)"/><path d="M512.5 332.4L508.3 332.4" stroke="#7e6c50" stroke-opacity="0.3" stroke-width="0.8"/><path d="M508.3 332.4L512.5 332.4L547.7 309.1L544.0 309.1Z" fill="rgb(171,151,117)"/><path d="M547.7 309.1L544.0 309.1" stroke="#7e6c50" stroke-opacity="0.3" stroke-width="0.8"/><path d="M-43.6 700.0L-28.2 700.0L211.6 538.5L200.6 538.5Z" fill="rgb(180,160,126)"/><path d="M211.6 538.5L200.6 538.5" stroke="#7e6c50" stroke-opacity="0.3" stroke-width="0.8"/><path d="M200.6 538.5L211.6 538.5L344.4 449.1L335.9 449.1Z" fill="rgb(173,152,118)"/><path d="M344.4 449.1L335.9 449.1" stroke="#7e6c50" stroke-opacity="0.3" stroke-width="0.8"/><path d="M335.9 449.1L344.4 449.1L445.6 381.0L438.9 381.0Z" fill="rgb(178,158,124)"/><path d="M445.6 381.0L438.9 381.0" stroke="#7e6c50" stroke-opacity="0.3" stroke-width="0.8"/><path d="M438.9 381.0L445.6 381.0L510.1 337.6L504.6 337.6Z" fill="rgb(173,152,118)"/><path d="M510.1 337.6L504.6 337.6" stroke="#7e6c50" stroke-opacity="0.3" stroke-width="0.8"/><path d="M552.3 309.2L547.5 309.2" stroke="#7e6c50" stroke-opacity="0.3" stroke-width="0.8"/><path d="M-28.2 700.0L-13.2 700.0L260.8 512.2L250.7 512.2Z" fill="rgb(178,157,123)"/><path d="M260.8 512.2L250.7 512.2" stroke="#7e6c50" stroke-opacity="0.3" stroke-width="0.8"/><path d="M250.7 512.2L260.8 512.2L396.3 419.3L388.8 419.3Z" fill="rgb(172,152,117)"/><path d="M396.3 419.3L388.8 419.3" stroke="#7e6c50" stroke-opacity="0.3" stroke-width="0.8"/><path d="M388.8 419.3L396.3 419.3L451.9 381.1L445.4 381.1Z" fill="rgb(170,150,115)"/><path d="M451.9 381.1L445.4 381.1" stroke="#7e6c50" stroke-opacity="0.3" stroke-width="0.8"/><path d="M445.4 381.1L451.9 381.1L497.6 349.9L491.9 349.9Z" fill="rgb(178,157,123)"/><path d="M497.6 349.9L491.9 349.9" stroke="#7e6c50" stroke-opacity="0.3" stroke-width="0.8"/><path d="M491.9 349.9L497.6 349.9L542.2 319.3L537.3 319.3Z" fill="rgb(178,157,123)"/><path d="M542.2 319.3L537.3 319.3" stroke="#7e6c50" stroke-opacity="0.3" stroke-width="0.8"/><path d="M537.3 319.3L542.2 319.3L570.7 299.8L566.3 299.8Z" fill="rgb(178,157,123)"/><path d="M570.7 299.8L566.3 299.8" stroke="#7e6c50" stroke-opacity="0.3" stroke-width="0.8"/><path d="M126.7 612.4L114.5 612.4" stroke="#7e6c50" stroke-opacity="0.3" stroke-width="0.8"/><path d="M287.3 500.4L277.9 500.4" stroke="#7e6c50" stroke-opacity="0.3" stroke-width="0.8"/><path d="M277.9 500.4L287.3 500.4L420.6 407.4L413.7 407.4Z" fill="rgb(160,140,106)"/><path d="M420.6 407.4L413.7 407.4" stroke="#7e6c50" stroke-opacity="0.3" stroke-width="0.8"/><path d="M491.8 357.7L486.2 357.7" stroke="#7e6c50" stroke-opacity="0.3" stroke-width="0.8"/><path d="M486.2 357.7L491.8 357.7L535.5 327.2L530.6 327.2Z" fill="rgb(168,148,113)"/><path d="M535.5 327.2L530.6 327.2" stroke="#7e6c50" stroke-opacity="0.3" stroke-width="0.8"/><path d="M530.6 327.2L535.5 327.2L567.6 304.8L563.2 304.8Z" fill="rgb(160,140,106)"/><path d="M567.6 304.8L563.2 304.8" stroke="#7e6c50" stroke-opacity="0.3" stroke-width="0.8"/><path d="M587.9 290.6L584.0 290.6" stroke="#7e6c50" stroke-opacity="0.3" stroke-width="0.8"/><path d="M207.0 563.2L197.2 563.2" stroke="#7e6c50" stroke-opacity="0.3" stroke-width="0.8"/><path d="M197.2 563.2L207.0 563.2L370.8 447.1L363.7 447.1Z" fill="rgb(170,150,115)"/><path d="M370.8 447.1L363.7 447.1" stroke="#7e6c50" stroke-opacity="0.3" stroke-width="0.8"/><path d="M482.6 367.9L477.3 367.9" stroke="#7e6c50" stroke-opacity="0.3" stroke-width="0.8"/><path d="M477.3 367.9L482.6 367.9L524.7 338.0L520.1 338.0Z" fill="rgb(170,150,115)"/><path d="M524.7 338.0L520.1 338.0" stroke="#7e6c50" stroke-opacity="0.3" stroke-width="0.8"/><path d="M566.8 308.2L562.8 308.2" stroke="#7e6c50" stroke-opacity="0.3" stroke-width="0.8"/><path d="M562.8 308.2L566.8 308.2L591.7 290.5L588.1 290.5Z" fill="rgb(172,152,117)"/><path d="M591.7 290.5L588.1 290.5" stroke="#7e6c50" stroke-opacity="0.3" stroke-width="0.8"/><path d="M107.9 642.1L95.8 642.1" stroke="#7e6c50" stroke-opacity="0.3" stroke-width="0.8"/><path d="M331.5 480.8L323.3 480.8" stroke="#7e6c50" stroke-opacity="0.3" stroke-width="0.8"/><path d="M323.3 480.8L331.5 480.8L436.5 405.1L430.1 405.1Z" fill="rgb(176,156,121)"/><path d="M436.5 405.1L430.1 405.1" stroke="#7e6c50" stroke-opacity="0.3" stroke-width="0.8"/><path d="M430.1 405.1L436.5 405.1L499.3 359.8L493.9 359.8Z" fill="rgb(170,150,115)"/><path d="M499.3 359.8L493.9 359.8" stroke="#7e6c50" stroke-opacity="0.3" stroke-width="0.8"/><path d="M493.9 359.8L499.3 359.8L550.2 323.1L545.7 323.1Z" fill="rgb(180,159,125)"/><path d="M550.2 323.1L545.7 323.1" stroke="#7e6c50" stroke-opacity="0.3" stroke-width="0.8"/><path d="M587.8 296.0L583.9 296.0" stroke="#7e6c50" stroke-opacity="0.3" stroke-width="0.8"/><path d="M27.6 700.0L40.3 700.0L53.8 690.1L41.3 690.1Z" fill="rgb(172,152,117)"/><path d="M53.8 690.1L41.3 690.1" stroke="#7e6c50" stroke-opacity="0.3" stroke-width="0.8"/><path d="M41.3 690.1L53.8 690.1L332.7 485.6L324.8 485.6Z" fill="rgb(178,157,123)"/><path d="M332.7 485.6L324.8 485.6" stroke="#7e6c50" stroke-opacity="0.3" stroke-width="0.8"/><path d="M324.8 485.6L332.7 485.6L445.2 403.2L439.1 403.2Z" fill="rgb(170,150,115)"/><path d="M445.2 403.2L439.1 403.2" stroke="#7e6c50" stroke-opacity="0.3" stroke-width="0.8"/><path d="M439.1 403.2L445.2 403.2L522.1 346.8L517.3 346.8Z" fill="rgb(172,152,117)"/><path d="M522.1 346.8L517.3 346.8" stroke="#7e6c50" stroke-opacity="0.3" stroke-width="0.8"/><path d="M517.3 346.8L522.1 346.8L566.4 314.3L562.4 314.3Z" fill="rgb(170,150,115)"/><path d="M566.4 314.3L562.4 314.3" stroke="#7e6c50" stroke-opacity="0.3" stroke-width="0.8"/><path d="M562.4 314.3L566.4 314.3L590.8 296.4L587.2 296.4Z" fill="rgb(170,150,115)"/><path d="M590.8 296.4L587.2 296.4" stroke="#7e6c50" stroke-opacity="0.3" stroke-width="0.8"/><path d="M292.0 522.5L282.4 522.5" stroke="#7e6c50" stroke-opacity="0.3" stroke-width="0.8"/><path d="M282.4 522.5L292.0 522.5L444.4 408.7L437.6 408.7Z" fill="rgb(160,140,106)"/><path d="M444.4 408.7L437.6 408.7" stroke="#7e6c50" stroke-opacity="0.3" stroke-width="0.8"/><path d="M437.6 408.7L444.4 408.7L516.4 354.9L511.0 354.9Z" fill="rgb(162,142,108)"/><path d="M516.4 354.9L511.0 354.9" stroke="#7e6c50" stroke-opacity="0.3" stroke-width="0.8"/><path d="M511.0 354.9L516.4 354.9L556.3 325.2L551.6 325.2Z" fill="rgb(168,148,113)"/><path d="M556.3 325.2L551.6 325.2" stroke="#7e6c50" stroke-opacity="0.3" stroke-width="0.8"/><path d="M551.6 325.2L556.3 325.2L580.8 306.9L576.6 306.9Z" fill="rgb(166,146,111)"/><path d="M580.8 306.9L576.6 306.9" stroke="#7e6c50" stroke-opacity="0.3" stroke-width="0.8"/><path d="M94.9 680.7L80.2 680.7" stroke="#7e6c50" stroke-opacity="0.3" stroke-width="0.8"/><path d="M80.2 680.7L94.9 680.7L273.4 544.7L262.3 544.7Z" fill="rgb(168,148,113)"/><path d="M273.4 544.7L262.3 544.7" stroke="#7e6c50" stroke-opacity="0.3" stroke-width="0.8"/><path d="M262.3 544.7L273.4 544.7L411.3 439.6L403.0 439.6Z" fill="rgb(166,146,111)"/><path d="M411.3 439.6L403.0 439.6" stroke="#7e6c50" stroke-opacity="0.3" stroke-width="0.8"/><path d="M403.0 439.6L411.3 439.6L470.9 394.2L463.8 394.2Z" fill="rgb(160,140,106)"/><path d="M470.9 394.2L463.8 394.2" stroke="#7e6c50" stroke-opacity="0.3" stroke-width="0.8"/><path d="M535.6 344.9L529.9 344.9" stroke="#7e6c50" stroke-opacity="0.3" stroke-width="0.8"/><path d="M529.9 344.9L535.6 344.9L577.2 313.2L572.3 313.2Z" fill="rgb(160,140,106)"/><path d="M577.2 313.2L572.3 313.2" stroke="#7e6c50" stroke-opacity="0.3" stroke-width="0.8"/><path d="M572.3 313.2L577.2 313.2L598.6 296.9L594.2 296.9Z" fill="rgb(166,146,111)"/><path d="M598.6 296.9L594.2 296.9" stroke="#7e6c50" stroke-opacity="0.3" stroke-width="0.8"/><path d="M69.6 700.0L82.5 700.0L250.1 570.0L240.1 570.0Z" fill="rgb(173,153,119)"/><path d="M250.1 570.0L240.1 570.0" stroke="#7e6c50" stroke-opacity="0.3" stroke-width="0.8"/><path d="M240.1 570.0L250.1 570.0L376.5 472.0L368.8 472.0Z" fill="rgb(173,153,119)"/><path d="M376.5 472.0L368.8 472.0" stroke="#7e6c50" stroke-opacity="0.3" stroke-width="0.8"/><path d="M484.2 388.5L478.4 388.5" stroke="#7e6c50" stroke-opacity="0.3" stroke-width="0.8"/><path d="M478.4 388.5L484.2 388.5L523.9 357.7L518.8 357.7Z" fill="rgb(165,145,111)"/><path d="M523.9 357.7L518.8 357.7" stroke="#7e6c50" stroke-opacity="0.3" stroke-width="0.8"/><path d="M518.8 357.7L523.9 357.7L559.0 330.4L554.6 330.4Z" fill="rgb(173,153,119)"/><path d="M559.0 330.4L554.6 330.4" stroke="#7e6c50" stroke-opacity="0.3" stroke-width="0.8"/><path d="M554.6 330.4L559.0 330.4L596.4 301.4L592.6 301.4Z" fill="rgb(169,149,115)"/><path d="M596.4 301.4L592.6 301.4" stroke="#7e6c50" stroke-opacity="0.3" stroke-width="0.8"/><path d="M82.5 700.0L97.2 700.0L138.9 667.0L125.1 667.0Z" fill="rgb(170,150,115)"/><path d="M138.9 667.0L125.1 667.0" stroke="#7e6c50" stroke-opacity="0.3" stroke-width="0.8"/><path d="M125.1 667.0L138.9 667.0L282.1 553.6L271.2 553.6Z" fill="rgb(172,152,117)"/><path d="M282.1 553.6L271.2 553.6" stroke="#7e6c50" stroke-opacity="0.3" stroke-width="0.8"/><path d="M271.2 553.6L282.1 553.6L442.1 427.0L434.5 427.0Z" fill="rgb(178,157,123)"/><path d="M442.1 427.0L434.5 427.0" stroke="#7e6c50" stroke-opacity="0.3" stroke-width="0.8"/><path d="M434.5 427.0L442.1 427.0L519.9 365.4L513.9 365.4Z" fill="rgb(172,152,117)"/><path d="M519.9 365.4L513.9 365.4" stroke="#7e6c50" stroke-opacity="0.3" stroke-width="0.8"/><path d="M577.2 320.0L572.4 320.0" stroke="#7e6c50" stroke-opacity="0.3" stroke-width="0.8"/><path d="M572.4 320.0L577.2 320.0L601.2 301.0L596.9 301.0Z" fill="rgb(176,156,121)"/><path d="M601.2 301.0L596.9 301.0" stroke="#7e6c50" stroke-opacity="0.3" stroke-width="0.8"/><path d="M287.2 558.5L275.9 558.5" stroke="#7e6c50" stroke-opacity="0.3" stroke-width="0.8"/><path d="M275.9 558.5L287.2 558.5L444.6 431.2L436.8 431.2Z" fill="rgb(163,143,109)"/><path d="M444.6 431.2L436.8 431.2" stroke="#7e6c50" stroke-opacity="0.3" stroke-width="0.8"/><path d="M436.8 431.2L444.6 431.2L530.2 362.0L524.2 362.0Z" fill="rgb(165,145,111)"/><path d="M530.2 362.0L524.2 362.0" stroke="#7e6c50" stroke-opacity="0.3" stroke-width="0.8"/><path d="M524.2 362.0L530.2 362.0L582.4 319.9L577.4 319.9Z" fill="rgb(173,153,119)"/><path d="M582.4 319.9L577.4 319.9" stroke="#7e6c50" stroke-opacity="0.3" stroke-width="0.8"/><path d="M611.7 296.2L607.4 296.2" stroke="#7e6c50" stroke-opacity="0.3" stroke-width="0.8"/><path d="M112.2 700.0L126.1 700.0L271.0 580.5L260.0 580.5Z" fill="rgb(165,145,111)"/><path d="M271.0 580.5L260.0 580.5" stroke="#7e6c50" stroke-opacity="0.3" stroke-width="0.8"/><path d="M260.0 580.5L271.0 580.5L433.1 446.8L425.4 446.8Z" fill="rgb(167,147,113)"/><path d="M433.1 446.8L425.4 446.8" stroke="#7e6c50" stroke-opacity="0.3" stroke-width="0.8"/><path d="M425.4 446.8L433.1 446.8L485.4 403.6L478.8 403.6Z" fill="rgb(173,153,119)"/><path d="M485.4 403.6L478.8 403.6" stroke="#7e6c50" stroke-opacity="0.3" stroke-width="0.8"/><path d="M478.8 403.6L485.4 403.6L549.7 350.5L544.4 350.5Z" fill="rgb(175,155,120)"/><path d="M549.7 350.5L544.4 350.5" stroke="#7e6c50" stroke-opacity="0.3" stroke-width="0.8"/><path d="M544.4 350.5L549.7 350.5L581.5 324.3L576.9 324.3Z" fill="rgb(165,145,111)"/><path d="M581.5 324.3L576.9 324.3" stroke="#7e6c50" stroke-opacity="0.3" stroke-width="0.8"/><path d="M576.9 324.3L581.5 324.3L606.6 303.6L602.4 303.6Z" fill="rgb(171,151,117)"/><path d="M606.6 303.6L602.4 303.6" stroke="#7e6c50" stroke-opacity="0.3" stroke-width="0.8"/><path d="M126.1 700.0L141.6 700.0L265.7 595.3L253.0 595.3Z" fill="rgb(166,146,111)"/><path d="M265.7 595.3L253.0 595.3" stroke="#7e6c50" stroke-opacity="0.3" stroke-width="0.8"/><path d="M253.0 595.3L265.7 595.3L429.9 456.7L421.1 456.7Z" fill="rgb(160,140,106)"/><path d="M429.9 456.7L421.1 456.7" stroke="#7e6c50" stroke-opacity="0.3" stroke-width="0.8"/><path d="M421.1 456.7L429.9 456.7L528.4 373.5L521.8 373.5Z" fill="rgb(170,150,115)"/><path d="M528.4 373.5L521.8 373.5" stroke="#7e6c50" stroke-opacity="0.3" stroke-width="0.8"/><path d="M521.8 373.5L528.4 373.5L575.4 333.9L569.9 333.9Z" fill="rgb(170,150,115)"/><path d="M575.4 333.9L569.9 333.9" stroke="#7e6c50" stroke-opacity="0.3" stroke-width="0.8"/><path d="M569.9 333.9L575.4 333.9L600.1 313.0L595.2 313.0Z" fill="rgb(166,146,111)"/><path d="M600.1 313.0L595.2 313.0" stroke="#7e6c50" stroke-opacity="0.3" stroke-width="0.8"/><path d="M595.2 313.0L600.1 313.0L618.1 297.8L613.7 297.8Z" fill="rgb(170,150,115)"/><path d="M618.1 297.8L613.7 297.8" stroke="#7e6c50" stroke-opacity="0.3" stroke-width="0.8"/><path d="M141.6 700.0L156.3 700.0L254.5 615.3L242.0 615.3Z" fill="rgb(173,153,119)"/><path d="M254.5 615.3L242.0 615.3" stroke="#7e6c50" stroke-opacity="0.3" stroke-width="0.8"/><path d="M242.0 615.3L254.5 615.3L367.5 517.8L357.5 517.8Z" fill="rgb(169,149,115)"/><path d="M367.5 517.8L357.5 517.8" stroke="#7e6c50" stroke-opacity="0.3" stroke-width="0.8"/><path d="M357.5 517.8L367.5 517.8L479.1 421.4L471.6 421.4Z" fill="rgb(171,151,117)"/><path d="M479.1 421.4L471.6 421.4" stroke="#7e6c50" stroke-opacity="0.3" stroke-width="0.8"/><path d="M471.6 421.4L479.1 421.4L551.7 358.8L545.9 358.8Z" fill="rgb(171,151,117)"/><path d="M551.7 358.8L545.9 358.8" stroke="#7e6c50" stroke-opacity="0.3" stroke-width="0.8"/><path d="M545.9 358.8L551.7 358.8L602.7 314.8L598.0 314.8Z" fill="rgb(173,153,119)"/><path d="M602.7 314.8L598.0 314.8" stroke="#7e6c50" stroke-opacity="0.3" stroke-width="0.8"/><path d="M598.0 314.8L602.7 314.8L625.3 295.3L621.1 295.3Z" fill="rgb(169,149,115)"/><path d="M625.3 295.3L621.1 295.3" stroke="#7e6c50" stroke-opacity="0.3" stroke-width="0.8"/><path d="M260.4 620.7L248.2 620.7" stroke="#7e6c50" stroke-opacity="0.3" stroke-width="0.8"/><path d="M248.2 620.7L260.4 620.7L426.3 474.4L417.8 474.4Z" fill="rgb(162,142,108)"/><path d="M426.3 474.4L417.8 474.4" stroke="#7e6c50" stroke-opacity="0.3" stroke-width="0.8"/><path d="M417.8 474.4L426.3 474.4L491.4 416.9L484.3 416.9Z" fill="rgb(164,144,109)"/><path d="M491.4 416.9L484.3 416.9" stroke="#7e6c50" stroke-opacity="0.3" stroke-width="0.8"/><path d="M484.3 416.9L491.4 416.9L540.3 373.8L534.3 373.8Z" fill="rgb(168,148,113)"/><path d="M540.3 373.8L534.3 373.8" stroke="#7e6c50" stroke-opacity="0.3" stroke-width="0.8"/><path d="M534.3 373.8L540.3 373.8L569.6 347.9L564.3 347.9Z" fill="rgb(162,142,108)"/><path d="M569.6 347.9L564.3 347.9" stroke="#7e6c50" stroke-opacity="0.3" stroke-width="0.8"/><path d="M564.3 347.9L569.6 347.9L611.5 311.0L607.1 311.0Z" fill="rgb(162,142,108)"/><path d="M611.5 311.0L607.1 311.0" stroke="#7e6c50" stroke-opacity="0.3" stroke-width="0.8"/><path d="M607.1 311.0L611.5 311.0L633.3 291.8L629.3 291.8Z" fill="rgb(168,148,113)"/><path d="M633.3 291.8L629.3 291.8" stroke="#7e6c50" stroke-opacity="0.3" stroke-width="0.8"/><path d="M170.5 700.0L185.2 700.0L205.7 681.5L191.5 681.5Z" fill="rgb(169,149,115)"/><path d="M205.7 681.5L191.5 681.5" stroke="#7e6c50" stroke-opacity="0.3" stroke-width="0.8"/><path d="M191.5 681.5L205.7 681.5L399.9 506.2L390.2 506.2Z" fill="rgb(171,151,117)"/><path d="M399.9 506.2L390.2 506.2" stroke="#7e6c50" stroke-opacity="0.3" stroke-width="0.8"/><path d="M390.2 506.2L399.9 506.2L493.1 422.0L485.6 422.0Z" fill="rgb(163,143,109)"/><path d="M493.1 422.0L485.6 422.0" stroke="#7e6c50" stroke-opacity="0.3" stroke-width="0.8"/><path d="M485.6 422.0L493.1 422.0L553.1 367.8L547.1 367.8Z" fill="rgb(163,143,109)"/><path d="M553.1 367.8L547.1 367.8" stroke="#7e6c50" stroke-opacity="0.3" stroke-width="0.8"/><path d="M547.1 367.8L553.1 367.8L602.8 322.9L598.0 322.9Z" fill="rgb(165,145,111)"/><path d="M602.8 322.9L598.0 322.9" stroke="#7e6c50" stroke-opacity="0.3" stroke-width="0.8"/><path d="M624.6 303.3L620.2 303.3" stroke="#7e6c50" stroke-opacity="0.3" stroke-width="0.8"/><path d="M185.2 700.0L196.8 700.0L370.3 540.4L362.0 540.4Z" fill="rgb(173,153,119)"/><path d="M370.3 540.4L362.0 540.4" stroke="#7e6c50" stroke-opacity="0.3" stroke-width="0.8"/><path d="M362.0 540.4L370.3 540.4L492.2 428.3L486.2 428.3Z" fill="rgb(173,153,119)"/><path d="M492.2 428.3L486.2 428.3" stroke="#7e6c50" stroke-opacity="0.3" stroke-width="0.8"/><path d="M486.2 428.3L492.2 428.3L560.7 365.3L555.9 365.3Z" fill="rgb(165,145,111)"/><path d="M560.7 365.3L555.9 365.3" stroke="#7e6c50" stroke-opacity="0.3" stroke-width="0.8"/><path d="M555.9 365.3L560.7 365.3L606.2 323.4L602.4 323.4Z" fill="rgb(163,143,109)"/><path d="M606.2 323.4L602.4 323.4" stroke="#7e6c50" stroke-opacity="0.3" stroke-width="0.8"/><path d="M602.4 323.4L606.2 323.4L634.6 297.3L631.2 297.3Z" fill="rgb(171,151,117)"/><path d="M634.6 297.3L631.2 297.3" stroke="#7e6c50" stroke-opacity="0.3" stroke-width="0.8"/><path d="M196.8 700.0L211.0 700.0L245.0 668.0L231.6 668.0Z" fill="rgb(173,152,118)"/><path d="M245.0 668.0L231.6 668.0" stroke="#7e6c50" stroke-opacity="0.3" stroke-width="0.8"/><path d="M231.6 668.0L245.0 668.0L453.2 471.9L444.7 471.9Z" fill="rgb(180,160,126)"/><path d="M453.2 471.9L444.7 471.9" stroke="#7e6c50" stroke-opacity="0.3" stroke-width="0.8"/><path d="M444.7 471.9L453.2 471.9L517.2 411.6L510.3 411.6Z" fill="rgb(174,154,120)"/><path d="M517.2 411.6L510.3 411.6" stroke="#7e6c50" stroke-opacity="0.3" stroke-width="0.8"/><path d="M571.0 361.0L565.3 361.0" stroke="#7e6c50" stroke-opacity="0.3" stroke-width="0.8"/><path d="M565.3 361.0L571.0 361.0L602.3 331.5L597.3 331.5Z" fill="rgb(182,162,128)"/><path d="M602.3 331.5L597.3 331.5" stroke="#7e6c50" stroke-opacity="0.3" stroke-width="0.8"/><path d="M597.3 331.5L602.3 331.5L635.4 300.4L631.2 300.4Z" fill="rgb(178,158,124)"/><path d="M635.4 300.4L631.2 300.4" stroke="#7e6c50" stroke-opacity="0.3" stroke-width="0.8"/><path d="M211.0 700.0L223.0 700.0L305.0 621.2L294.7 621.2Z" fill="rgb(178,157,123)"/><path d="M305.0 621.2L294.7 621.2" stroke="#7e6c50" stroke-opacity="0.3" stroke-width="0.8"/><path d="M294.7 621.2L305.0 621.2L479.5 453.6L472.7 453.6Z" fill="rgb(180,159,125)"/><path d="M479.5 453.6L472.7 453.6" stroke="#7e6c50" stroke-opacity="0.3" stroke-width="0.8"/><path d="M472.7 453.6L479.5 453.6L542.6 392.9L537.2 392.9Z" fill="rgb(170,150,115)"/><path d="M542.6 392.9L537.2 392.9" stroke="#7e6c50" stroke-opacity="0.3" stroke-width="0.8"/><path d="M537.2 392.9L542.6 392.9L582.4 354.7L577.7 354.7Z" fill="rgb(176,156,121)"/><path d="M582.4 354.7L577.7 354.7" stroke="#7e6c50" stroke-opacity="0.3" stroke-width="0.8"/><path d="M577.7 354.7L582.4 354.7L613.0 325.3L609.0 325.3Z" fill="rgb(176,156,121)"/><path d="M613.0 325.3L609.0 325.3" stroke="#7e6c50" stroke-opacity="0.3" stroke-width="0.8"/><path d="M609.0 325.3L613.0 325.3L637.4 301.8L633.9 301.8Z" fill="rgb(172,152,117)"/><path d="M637.4 301.8L633.9 301.8" stroke="#7e6c50" stroke-opacity="0.3" stroke-width="0.8"/><path d="M223.0 700.0L237.9 700.0L426.6 514.0L416.6 514.0Z" fill="rgb(180,159,125)"/><path d="M426.6 514.0L416.6 514.0" stroke="#7e6c50" stroke-opacity="0.3" stroke-width="0.8"/><path d="M416.6 514.0L426.6 514.0L489.7 451.7L481.4 451.7Z" fill="rgb(172,152,117)"/><path d="M489.7 451.7L481.4 451.7" stroke="#7e6c50" stroke-opacity="0.3" stroke-width="0.8"/><path d="M481.4 451.7L489.7 451.7L552.1 390.3L545.3 390.3Z" fill="rgb(176,156,121)"/><path d="M552.1 390.3L545.3 390.3" stroke="#7e6c50" stroke-opacity="0.3" stroke-width="0.8"/><path d="M545.3 390.3L552.1 390.3L589.4 353.5L583.7 353.5Z" fill="rgb(170,150,115)"/><path d="M589.4 353.5L583.7 353.5" stroke="#7e6c50" stroke-opacity="0.3" stroke-width="0.8"/><path d="M583.7 353.5L589.4 353.5L625.2 318.2L620.4 318.2Z" fill="rgb(176,156,121)"/><path d="M625.2 318.2L620.4 318.2" stroke="#7e6c50" stroke-opacity="0.3" stroke-width="0.8"/><path d="M620.4 318.2L625.2 318.2L642.5 301.1L638.1 301.1Z" fill="rgb(180,159,125)"/><path d="M642.5 301.1L638.1 301.1" stroke="#7e6c50" stroke-opacity="0.3" stroke-width="0.8"/><path d="M237.9 700.0L250.0 700.0L284.8 664.9L273.5 664.9Z" fill="rgb(171,151,117)"/><path d="M284.8 664.9L273.5 664.9" stroke="#7e6c50" stroke-opacity="0.3" stroke-width="0.8"/><path d="M273.5 664.9L284.8 664.9L471.4 477.0L464.1 477.0Z" fill="rgb(171,151,117)"/><path d="M471.4 477.0L464.1 477.0" stroke="#7e6c50" stroke-opacity="0.3" stroke-width="0.8"/><path d="M464.1 477.0L471.4 477.0L556.4 391.4L551.0 391.4Z" fill="rgb(165,145,111)"/><path d="M556.4 391.4L551.0 391.4" stroke="#7e6c50" stroke-opacity="0.3" stroke-width="0.8"/><path d="M551.0 391.4L556.4 391.4L604.2 343.2L599.8 343.2Z" fill="rgb(167,147,113)"/><path d="M604.2 343.2L599.8 343.2" stroke="#7e6c50" stroke-opacity="0.3" stroke-width="0.8"/><path d="M599.8 343.2L604.2 343.2L638.7 308.5L635.0 308.5Z" fill="rgb(175,155,120)"/><path d="M638.7 308.5L635.0 308.5" stroke="#7e6c50" stroke-opacity="0.3" stroke-width="0.8"/><path d="M250.0 700.0L265.6 700.0L436.0 523.5L425.2 523.5Z" fill="rgb(174,154,120)"/><path d="M436.0 523.5L425.2 523.5" stroke="#7e6c50" stroke-opacity="0.3" stroke-width="0.8"/><path d="M425.2 523.5L436.0 523.5L500.2 457.0L491.3 457.0Z" fill="rgb(180,160,126)"/><path d="M500.2 457.0L491.3 457.0" stroke="#7e6c50" stroke-opacity="0.3" stroke-width="0.8"/><path d="M491.3 457.0L500.2 457.0L544.3 411.2L536.7 411.2Z" fill="rgb(178,158,124)"/><path d="M544.3 411.2L536.7 411.2" stroke="#7e6c50" stroke-opacity="0.3" stroke-width="0.8"/><path d="M536.7 411.2L544.3 411.2L586.5 367.6L580.1 367.6Z" fill="rgb(180,160,126)"/><path d="M586.5 367.6L580.1 367.6" stroke="#7e6c50" stroke-opacity="0.3" stroke-width="0.8"/><path d="M580.1 367.6L586.5 367.6L625.3 327.4L620.0 327.4Z" fill="rgb(178,158,124)"/><path d="M625.3 327.4L620.0 327.4" stroke="#7e6c50" stroke-opacity="0.3" stroke-width="0.8"/><path d="M620.0 327.4L625.3 327.4L648.1 303.8L643.4 303.8Z" fill="rgb(174,154,120)"/><path d="M648.1 303.8L643.4 303.8" stroke="#7e6c50" stroke-opacity="0.3" stroke-width="0.8"/><path d="M265.6 700.0L278.4 700.0L457.0 510.6L448.5 510.6Z" fill="rgb(171,151,117)"/><path d="M457.0 510.6L448.5 510.6" stroke="#7e6c50" stroke-opacity="0.3" stroke-width="0.8"/><path d="M539.2 423.4L532.6 423.4" stroke="#7e6c50" stroke-opacity="0.3" stroke-width="0.8"/><path d="M532.6 423.4L539.2 423.4L592.2 367.1L587.0 367.1Z" fill="rgb(169,149,115)"/><path d="M592.2 367.1L587.0 367.1" stroke="#7e6c50" stroke-opacity="0.3" stroke-width="0.8"/><path d="M587.0 367.1L592.2 367.1L622.8 334.7L618.2 334.7Z" fill="rgb(163,143,109)"/><path d="M622.8 334.7L618.2 334.7" stroke="#7e6c50" stroke-opacity="0.3" stroke-width="0.8"/><path d="M654.9 300.6L651.1 300.6" stroke="#7e6c50" stroke-opacity="0.3" stroke-width="0.8"/><path d="M278.4 700.0L293.6 700.0L370.8 615.7L357.9 615.7Z" fill="rgb(173,153,119)"/><path d="M370.8 615.7L357.9 615.7" stroke="#7e6c50" stroke-opacity="0.3" stroke-width="0.8"/><path d="M357.9 615.7L370.8 615.7L487.1 488.7L477.5 488.7Z" fill="rgb(163,143,109)"/><path d="M487.1 488.7L477.5 488.7" stroke="#7e6c50" stroke-opacity="0.3" stroke-width="0.8"/><path d="M477.5 488.7L487.1 488.7L551.3 418.6L543.6 418.6Z" fill="rgb(165,145,111)"/><path d="M551.3 418.6L543.6 418.6" stroke="#7e6c50" stroke-opacity="0.3" stroke-width="0.8"/><path d="M543.6 418.6L551.3 418.6L608.4 356.2L602.5 356.2Z" fill="rgb(173,153,119)"/><path d="M608.4 356.2L602.5 356.2" stroke="#7e6c50" stroke-opacity="0.3" stroke-width="0.8"/><path d="M602.5 356.2L608.4 356.2L640.1 321.6L635.1 321.6Z" fill="rgb(163,143,109)"/><path d="M640.1 321.6L635.1 321.6" stroke="#7e6c50" stroke-opacity="0.3" stroke-width="0.8"/><path d="M635.1 321.6L640.1 321.6L656.8 303.3L652.3 303.3Z" fill="rgb(169,149,115)"/><path d="M656.8 303.3L652.3 303.3" stroke="#7e6c50" stroke-opacity="0.3" stroke-width="0.8"/><path d="M293.6 700.0L304.9 700.0L419.1 572.5L410.3 572.5Z" fill="rgb(173,153,119)"/><path d="M419.1 572.5L410.3 572.5" stroke="#7e6c50" stroke-opacity="0.3" stroke-width="0.8"/><path d="M410.3 572.5L419.1 572.5L508.2 473.0L501.4 473.0Z" fill="rgb(177,157,122)"/><path d="M508.2 473.0L501.4 473.0" stroke="#7e6c50" stroke-opacity="0.3" stroke-width="0.8"/><path d="M501.4 473.0L508.2 473.0L581.6 391.1L576.5 391.1Z" fill="rgb(169,149,115)"/><path d="M581.6 391.1L576.5 391.1" stroke="#7e6c50" stroke-opacity="0.3" stroke-width="0.8"/><path d="M576.5 391.1L581.6 391.1L609.3 360.2L604.8 360.2Z" fill="rgb(177,157,122)"/><path d="M609.3 360.2L604.8 360.2" stroke="#7e6c50" stroke-opacity="0.3" stroke-width="0.8"/><path d="M604.8 360.2L609.3 360.2L639.5 326.5L635.7 326.5Z" fill="rgb(173,153,119)"/><path d="M639.5 326.5L635.7 326.5" stroke="#7e6c50" stroke-opacity="0.3" stroke-width="0.8"/><path d="M635.7 326.5L639.5 326.5L659.9 303.7L656.5 303.7Z" fill="rgb(169,149,115)"/><path d="M659.9 303.7L656.5 303.7" stroke="#7e6c50" stroke-opacity="0.3" stroke-width="0.8"/><path d="M304.9 700.0L316.2 700.0L361.4 648.4L351.1 648.4Z" fill="rgb(180,160,126)"/><path d="M361.4 648.4L351.1 648.4" stroke="#7e6c50" stroke-opacity="0.3" stroke-width="0.8"/><path d="M481.5 511.2L474.0 511.2" stroke="#7e6c50" stroke-opacity="0.3" stroke-width="0.8"/><path d="M474.0 511.2L481.5 511.2L560.4 421.1L554.7 421.1Z" fill="rgb(178,158,124)"/><path d="M560.4 421.1L554.7 421.1" stroke="#7e6c50" stroke-opacity="0.3" stroke-width="0.8"/><path d="M554.7 421.1L560.4 421.1L619.8 353.4L615.4 353.4Z" fill="rgb(174,154,120)"/><path d="M619.8 353.4L615.4 353.4" stroke="#7e6c50" stroke-opacity="0.3" stroke-width="0.8"/><path d="M615.4 353.4L619.8 353.4L653.2 315.2L649.6 315.2Z" fill="rgb(174,154,120)"/><path d="M653.2 315.2L649.6 315.2" stroke="#7e6c50" stroke-opacity="0.3" stroke-width="0.8"/><path d="M649.6 315.2L653.2 315.2L667.9 298.5L664.6 298.5Z" fill="rgb(180,160,126)"/><path d="M667.9 298.5L664.6 298.5" stroke="#7e6c50" stroke-opacity="0.3" stroke-width="0.8"/><path d="M437.5 571.3L428.9 571.3" stroke="#7e6c50" stroke-opacity="0.3" stroke-width="0.8"/><path d="M529.3 464.1L522.8 464.1" stroke="#7e6c50" stroke-opacity="0.3" stroke-width="0.8"/><path d="M583.3 401.0L578.1 401.0" stroke="#7e6c50" stroke-opacity="0.3" stroke-width="0.8"/><path d="M578.1 401.0L583.3 401.0L632.3 343.7L628.2 343.7Z" fill="rgb(169,149,115)"/><path d="M632.3 343.7L628.2 343.7" stroke="#7e6c50" stroke-opacity="0.3" stroke-width="0.8"/><path d="M628.2 343.7L632.3 343.7L652.9 319.7L649.3 319.7Z" fill="rgb(173,153,119)"/><path d="M652.9 319.7L649.3 319.7" stroke="#7e6c50" stroke-opacity="0.3" stroke-width="0.8"/><path d="M670.7 298.9L667.5 298.9" stroke="#7e6c50" stroke-opacity="0.3" stroke-width="0.8"/><path d="M327.3 700.0L341.3 700.0L469.0 546.4L458.8 546.4Z" fill="rgb(170,150,115)"/><path d="M469.0 546.4L458.8 546.4" stroke="#7e6c50" stroke-opacity="0.3" stroke-width="0.8"/><path d="M553.6 444.7L545.9 444.7" stroke="#7e6c50" stroke-opacity="0.3" stroke-width="0.8"/><path d="M545.9 444.7L553.6 444.7L609.2 377.7L603.2 377.7Z" fill="rgb(180,159,125)"/><path d="M609.2 377.7L603.2 377.7" stroke="#7e6c50" stroke-opacity="0.3" stroke-width="0.8"/><path d="M603.2 377.7L609.2 377.7L645.9 333.6L641.0 333.6Z" fill="rgb(170,150,115)"/><path d="M645.9 333.6L641.0 333.6" stroke="#7e6c50" stroke-opacity="0.3" stroke-width="0.8"/><path d="M641.0 333.6L645.9 333.6L668.2 306.8L663.9 306.8Z" fill="rgb(172,152,117)"/><path d="M668.2 306.8L663.9 306.8" stroke="#7e6c50" stroke-opacity="0.3" stroke-width="0.8"/><path d="M663.9 306.8L668.2 306.8L681.2 291.2L677.3 291.2Z" fill="rgb(170,150,115)"/><path d="M681.2 291.2L677.3 291.2" stroke="#7e6c50" stroke-opacity="0.3" stroke-width="0.8"/><path d="M341.3 700.0L354.7 700.0L426.4 611.2L415.1 611.2Z" fill="rgb(180,160,126)"/><path d="M426.4 611.2L415.1 611.2" stroke="#7e6c50" stroke-opacity="0.3" stroke-width="0.8"/><path d="M415.1 611.2L426.4 611.2L513.7 503.1L505.0 503.1Z" fill="rgb(174,154,120)"/><path d="M513.7 503.1L505.0 503.1" stroke="#7e6c50" stroke-opacity="0.3" stroke-width="0.8"/><path d="M505.0 503.1L513.7 503.1L571.8 431.2L564.8 431.2Z" fill="rgb(178,158,124)"/><path d="M571.8 431.2L564.8 431.2" stroke="#7e6c50" stroke-opacity="0.3" stroke-width="0.8"/><path d="M564.8 431.2L571.8 431.2L622.0 369.0L616.4 369.0Z" fill="rgb(173,152,118)"/><path d="M622.0 369.0L616.4 369.0" stroke="#7e6c50" stroke-opacity="0.3" stroke-width="0.8"/><path d="M616.4 369.0L622.0 369.0L655.4 327.7L650.8 327.7Z" fill="rgb(174,154,120)"/><path d="M655.4 327.7L650.8 327.7" stroke="#7e6c50" stroke-opacity="0.3" stroke-width="0.8"/><path d="M650.8 327.7L655.4 327.7L675.5 302.7L671.5 302.7Z" fill="rgb(178,158,124)"/><path d="M675.5 302.7L671.5 302.7" stroke="#7e6c50" stroke-opacity="0.3" stroke-width="0.8"/><path d="M354.7 700.0L370.6 700.0L404.5 656.5L389.9 656.5Z" fill="rgb(173,153,119)"/><path d="M404.5 656.5L389.9 656.5" stroke="#7e6c50" stroke-opacity="0.3" stroke-width="0.8"/><path d="M389.9 656.5L404.5 656.5L544.7 476.7L535.1 476.7Z" fill="rgb(175,155,120)"/><path d="M544.7 476.7L535.1 476.7" stroke="#7e6c50" stroke-opacity="0.3" stroke-width="0.8"/><path d="M535.1 476.7L544.7 476.7L587.3 422.0L579.2 422.0Z" fill="rgb(171,151,117)"/><path d="M587.3 422.0L579.2 422.0" stroke="#7e6c50" stroke-opacity="0.3" stroke-width="0.8"/><path d="M630.6 366.4L624.1 366.4" stroke="#7e6c50" stroke-opacity="0.3" stroke-width="0.8"/><path d="M624.1 366.4L630.6 366.4L658.7 330.4L653.2 330.4Z" fill="rgb(171,151,117)"/><path d="M658.7 330.4L653.2 330.4" stroke="#7e6c50" stroke-opacity="0.3" stroke-width="0.8"/><path d="M653.2 330.4L658.7 330.4L674.4 310.3L669.4 310.3Z" fill="rgb(171,151,117)"/><path d="M674.4 310.3L669.4 310.3" stroke="#7e6c50" stroke-opacity="0.3" stroke-width="0.8"/><path d="M669.4 310.3L674.4 310.3L689.3 291.2L684.9 291.2Z" fill="rgb(171,151,117)"/><path d="M689.3 291.2L684.9 291.2" stroke="#7e6c50" stroke-opacity="0.3" stroke-width="0.8"/><path d="M370.6 700.0L383.7 700.0L466.2 590.8L455.7 590.8Z" fill="rgb(164,144,109)"/><path d="M466.2 590.8L455.7 590.8" stroke="#7e6c50" stroke-opacity="0.3" stroke-width="0.8"/><path d="M455.7 590.8L466.2 590.8L558.4 469.0L550.6 469.0Z" fill="rgb(160,140,106)"/><path d="M558.4 469.0L550.6 469.0" stroke="#7e6c50" stroke-opacity="0.3" stroke-width="0.8"/><path d="M550.6 469.0L558.4 469.0L605.1 407.3L598.8 407.3Z" fill="rgb(166,146,111)"/><path d="M605.1 407.3L598.8 407.3" stroke="#7e6c50" stroke-opacity="0.3" stroke-width="0.8"/><path d="M598.8 407.3L605.1 407.3L639.7 361.5L634.4 361.5Z" fill="rgb(160,140,106)"/><path d="M639.7 361.5L634.4 361.5" stroke="#7e6c50" stroke-opacity="0.3" stroke-width="0.8"/><path d="M673.3 317.1L669.0 317.1" stroke="#7e6c50" stroke-opacity="0.3" stroke-width="0.8"/><path d="M669.0 317.1L673.3 317.1L685.8 300.5L682.0 300.5Z" fill="rgb(166,146,111)"/><path d="M685.8 300.5L682.0 300.5" stroke="#7e6c50" stroke-opacity="0.3" stroke-width="0.8"/><path d="M383.7 700.0L397.9 700.0L422.3 666.7L408.9 666.7Z" fill="rgb(167,147,113)"/><path d="M422.3 666.7L408.9 666.7" stroke="#7e6c50" stroke-opacity="0.3" stroke-width="0.8"/><path d="M408.9 666.7L422.3 666.7L535.6 511.7L526.1 511.7Z" fill="rgb(167,147,113)"/><path d="M535.6 511.7L526.1 511.7" stroke="#7e6c50" stroke-opacity="0.3" stroke-width="0.8"/><path d="M607.3 413.6L600.3 413.6" stroke="#7e6c50" stroke-opacity="0.3" stroke-width="0.8"/><path d="M600.3 413.6L607.3 413.6L636.0 374.3L630.0 374.3Z" fill="rgb(171,151,117)"/><path d="M636.0 374.3L630.0 374.3" stroke="#7e6c50" stroke-opacity="0.3" stroke-width="0.8"/><path d="M630.0 374.3L636.0 374.3L659.5 342.2L654.3 342.2Z" fill="rgb(165,145,111)"/><path d="M659.5 342.2L654.3 342.2" stroke="#7e6c50" stroke-opacity="0.3" stroke-width="0.8"/><path d="M654.3 342.2L659.5 342.2L685.7 306.4L681.4 306.4Z" fill="rgb(175,155,120)"/><path d="M685.7 306.4L681.4 306.4" stroke="#7e6c50" stroke-opacity="0.3" stroke-width="0.8"/><path d="M416.4 690.5L404.9 690.5" stroke="#7e6c50" stroke-opacity="0.3" stroke-width="0.8"/><path d="M404.9 690.5L416.4 690.5L553.1 498.0L545.6 498.0Z" fill="rgb(169,149,115)"/><path d="M553.1 498.0L545.6 498.0" stroke="#7e6c50" stroke-opacity="0.3" stroke-width="0.8"/><path d="M545.6 498.0L553.1 498.0L596.4 437.1L590.1 437.1Z" fill="rgb(175,155,120)"/><path d="M596.4 437.1L590.1 437.1" stroke="#7e6c50" stroke-opacity="0.3" stroke-width="0.8"/><path d="M590.1 437.1L596.4 437.1L627.7 393.1L622.3 393.1Z" fill="rgb(173,153,119)"/><path d="M627.7 393.1L622.3 393.1" stroke="#7e6c50" stroke-opacity="0.3" stroke-width="0.8"/><path d="M622.3 393.1L627.7 393.1L667.9 336.4L663.8 336.4Z" fill="rgb(173,153,119)"/><path d="M667.9 336.4L663.8 336.4" stroke="#7e6c50" stroke-opacity="0.3" stroke-width="0.8"/><path d="M663.8 336.4L667.9 336.4L688.2 307.8L684.7 307.8Z" fill="rgb(167,147,113)"/><path d="M688.2 307.8L684.7 307.8" stroke="#7e6c50" stroke-opacity="0.3" stroke-width="0.8"/><path d="M684.7 307.8L688.2 307.8L700.2 291.0L696.9 291.0Z" fill="rgb(173,153,119)"/><path d="M700.2 291.0L696.9 291.0" stroke="#7e6c50" stroke-opacity="0.3" stroke-width="0.8"/><path d="M409.6 700.0L424.4 700.0L553.6 511.2L543.8 511.2Z" fill="rgb(170,150,115)"/><path d="M553.6 511.2L543.8 511.2" stroke="#7e6c50" stroke-opacity="0.3" stroke-width="0.8"/><path d="M543.8 511.2L553.6 511.2L606.4 434.0L598.6 434.0Z" fill="rgb(180,159,125)"/><path d="M606.4 434.0L598.6 434.0" stroke="#7e6c50" stroke-opacity="0.3" stroke-width="0.8"/><path d="M640.3 384.5L633.7 384.5" stroke="#7e6c50" stroke-opacity="0.3" stroke-width="0.8"/><path d="M633.7 384.5L640.3 384.5L668.8 342.8L663.4 342.8Z" fill="rgb(170,150,115)"/><path d="M668.8 342.8L663.4 342.8" stroke="#7e6c50" stroke-opacity="0.3" stroke-width="0.8"/><path d="M663.4 342.8L668.8 342.8L687.4 315.6L682.7 315.6Z" fill="rgb(170,150,115)"/><path d="M687.4 315.6L682.7 315.6" stroke="#7e6c50" stroke-opacity="0.3" stroke-width="0.8"/><path d="M682.7 315.6L687.4 315.6L701.9 294.5L697.7 294.5Z" fill="rgb(170,150,115)"/><path d="M701.9 294.5L697.7 294.5" stroke="#7e6c50" stroke-opacity="0.3" stroke-width="0.8"/><path d="M424.4 700.0L439.0 700.0L446.3 689.0L431.9 689.0Z" fill="rgb(165,145,111)"/><path d="M446.3 689.0L431.9 689.0" stroke="#7e6c50" stroke-opacity="0.3" stroke-width="0.8"/><path d="M431.9 689.0L446.3 689.0L561.3 514.2L551.5 514.2Z" fill="rgb(163,143,109)"/><path d="M561.3 514.2L551.5 514.2" stroke="#7e6c50" stroke-opacity="0.3" stroke-width="0.8"/><path d="M551.5 514.2L561.3 514.2L613.3 435.2L605.6 435.2Z" fill="rgb(169,149,115)"/><path d="M613.3 435.2L605.6 435.2" stroke="#7e6c50" stroke-opacity="0.3" stroke-width="0.8"/><path d="M605.6 435.2L613.3 435.2L652.5 375.8L646.2 375.8Z" fill="rgb(173,153,119)"/><path d="M652.5 375.8L646.2 375.8" stroke="#7e6c50" stroke-opacity="0.3" stroke-width="0.8"/><path d="M646.2 375.8L652.5 375.8L676.5 339.3L671.2 339.3Z" fill="rgb(169,149,115)"/><path d="M676.5 339.3L671.2 339.3" stroke="#7e6c50" stroke-opacity="0.3" stroke-width="0.8"/><path d="M671.2 339.3L676.5 339.3L699.4 304.5L695.0 304.5Z" fill="rgb(163,143,109)"/><path d="M699.4 304.5L695.0 304.5" stroke="#7e6c50" stroke-opacity="0.3" stroke-width="0.8"/><path d="M439.0 700.0L452.2 700.0L550.8 544.7L541.3 544.7Z" fill="rgb(169,149,115)"/><path d="M550.8 544.7L541.3 544.7" stroke="#7e6c50" stroke-opacity="0.3" stroke-width="0.8"/><path d="M541.3 544.7L550.8 544.7L609.8 451.9L602.4 451.9Z" fill="rgb(163,143,109)"/><path d="M609.8 451.9L602.4 451.9" stroke="#7e6c50" stroke-opacity="0.3" stroke-width="0.8"/><path d="M602.4 451.9L609.8 451.9L638.9 405.9L632.6 405.9Z" fill="rgb(163,143,109)"/><path d="M638.9 405.9L632.6 405.9" stroke="#7e6c50" stroke-opacity="0.3" stroke-width="0.8"/><path d="M674.8 349.5L669.8 349.5" stroke="#7e6c50" stroke-opacity="0.3" stroke-width="0.8"/><path d="M669.8 349.5L674.8 349.5L689.8 325.9L685.3 325.9Z" fill="rgb(163,143,109)"/><path d="M689.8 325.9L685.3 325.9" stroke="#7e6c50" stroke-opacity="0.3" stroke-width="0.8"/><path d="M685.3 325.9L689.8 325.9L704.6 302.6L700.7 302.6Z" fill="rgb(169,149,115)"/><path d="M704.6 302.6L700.7 302.6" stroke="#7e6c50" stroke-opacity="0.3" stroke-width="0.8"/><path d="M573.4 521.1L565.8 521.1" stroke="#7e6c50" stroke-opacity="0.3" stroke-width="0.8"/><path d="M565.8 521.1L573.4 521.1L631.5 426.8L625.7 426.8Z" fill="rgb(170,150,115)"/><path d="M631.5 426.8L625.7 426.8" stroke="#7e6c50" stroke-opacity="0.3" stroke-width="0.8"/><path d="M625.7 426.8L631.5 426.8L665.9 370.7L661.3 370.7Z" fill="rgb(176,156,121)"/><path d="M665.9 370.7L661.3 370.7" stroke="#7e6c50" stroke-opacity="0.3" stroke-width="0.8"/><path d="M661.3 370.7L665.9 370.7L690.9 330.2L687.1 330.2Z" fill="rgb(178,157,123)"/><path d="M690.9 330.2L687.1 330.2" stroke="#7e6c50" stroke-opacity="0.3" stroke-width="0.8"/><path d="M704.7 307.7L701.3 307.7" stroke="#7e6c50" stroke-opacity="0.3" stroke-width="0.8"/><path d="M463.3 700.0L478.5 700.0L558.4 564.2L546.9 564.2Z" fill="rgb(168,148,113)"/><path d="M558.4 564.2L546.9 564.2" stroke="#7e6c50" stroke-opacity="0.3" stroke-width="0.8"/><path d="M546.9 564.2L558.4 564.2L608.2 479.6L598.9 479.6Z" fill="rgb(170,150,115)"/><path d="M608.2 479.6L598.9 479.6" stroke="#7e6c50" stroke-opacity="0.3" stroke-width="0.8"/><path d="M598.9 479.6L608.2 479.6L660.3 391.0L653.5 391.0Z" fill="rgb(166,146,111)"/><path d="M660.3 391.0L653.5 391.0" stroke="#7e6c50" stroke-opacity="0.3" stroke-width="0.8"/><path d="M653.5 391.0L660.3 391.0L684.5 350.0L678.7 350.0Z" fill="rgb(162,142,108)"/><path d="M684.5 350.0L678.7 350.0" stroke="#7e6c50" stroke-opacity="0.3" stroke-width="0.8"/><path d="M678.7 350.0L684.5 350.0L706.8 312.1L702.0 312.1Z" fill="rgb(170,150,115)"/><path d="M706.8 312.1L702.0 312.1" stroke="#7e6c50" stroke-opacity="0.3" stroke-width="0.8"/><path d="M702.0 312.1L706.8 312.1L718.3 292.6L714.0 292.6Z" fill="rgb(168,148,113)"/><path d="M718.3 292.6L714.0 292.6" stroke="#7e6c50" stroke-opacity="0.3" stroke-width="0.8"/><path d="M478.5 700.0L491.2 700.0L592.1 521.8L583.4 521.8Z" fill="rgb(162,142,108)"/><path d="M592.1 521.8L583.4 521.8" stroke="#7e6c50" stroke-opacity="0.3" stroke-width="0.8"/><path d="M583.4 521.8L592.1 521.8L634.1 447.5L627.1 447.5Z" fill="rgb(162,142,108)"/><path d="M634.1 447.5L627.1 447.5" stroke="#7e6c50" stroke-opacity="0.3" stroke-width="0.8"/><path d="M627.1 447.5L634.1 447.5L661.7 398.8L655.8 398.8Z" fill="rgb(164,144,109)"/><path d="M661.7 398.8L655.8 398.8" stroke="#7e6c50" stroke-opacity="0.3" stroke-width="0.8"/><path d="M655.8 398.8L661.7 398.8L684.0 359.4L678.9 359.4Z" fill="rgb(172,152,117)"/><path d="M684.0 359.4L678.9 359.4" stroke="#7e6c50" stroke-opacity="0.3" stroke-width="0.8"/><path d="M678.9 359.4L684.0 359.4L705.6 321.2L701.4 321.2Z" fill="rgb(164,144,109)"/><path d="M705.6 321.2L701.4 321.2" stroke="#7e6c50" stroke-opacity="0.3" stroke-width="0.8"/><path d="M719.2 297.3L715.5 297.3" stroke="#7e6c50" stroke-opacity="0.3" stroke-width="0.8"/><path d="M538.1 635.5L527.7 635.5" stroke="#7e6c50" stroke-opacity="0.3" stroke-width="0.8"/><path d="M626.5 473.4L619.5 473.4" stroke="#7e6c50" stroke-opacity="0.3" stroke-width="0.8"/><path d="M665.1 402.6L659.5 402.6" stroke="#7e6c50" stroke-opacity="0.3" stroke-width="0.8"/><path d="M659.5 402.6L665.1 402.6L682.5 370.7L677.6 370.7Z" fill="rgb(163,143,109)"/><path d="M682.5 370.7L677.6 370.7" stroke="#7e6c50" stroke-opacity="0.3" stroke-width="0.8"/><path d="M677.6 370.7L682.5 370.7L697.8 342.6L693.5 342.6Z" fill="rgb(173,153,119)"/><path d="M697.8 342.6L693.5 342.6" stroke="#7e6c50" stroke-opacity="0.3" stroke-width="0.8"/><path d="M693.5 342.6L697.8 342.6L713.5 313.9L709.7 313.9Z" fill="rgb(171,151,117)"/><path d="M713.5 313.9L709.7 313.9" stroke="#7e6c50" stroke-opacity="0.3" stroke-width="0.8"/><path d="M709.7 313.9L713.5 313.9L722.3 297.8L718.9 297.8Z" fill="rgb(173,153,119)"/><path d="M722.3 297.8L718.9 297.8" stroke="#7e6c50" stroke-opacity="0.3" stroke-width="0.8"/><path d="M535.3 662.6L523.4 662.6" stroke="#7e6c50" stroke-opacity="0.3" stroke-width="0.8"/><path d="M593.1 551.9L583.7 551.9" stroke="#7e6c50" stroke-opacity="0.3" stroke-width="0.8"/><path d="M583.7 551.9L593.1 551.9L648.3 446.3L641.3 446.3Z" fill="rgb(165,145,111)"/><path d="M648.3 446.3L641.3 446.3" stroke="#7e6c50" stroke-opacity="0.3" stroke-width="0.8"/><path d="M641.3 446.3L648.3 446.3L671.8 401.4L665.8 401.4Z" fill="rgb(171,151,117)"/><path d="M671.8 401.4L665.8 401.4" stroke="#7e6c50" stroke-opacity="0.3" stroke-width="0.8"/><path d="M665.8 401.4L671.8 401.4L689.5 367.5L684.3 367.5Z" fill="rgb(175,155,120)"/><path d="M689.5 367.5L684.3 367.5" stroke="#7e6c50" stroke-opacity="0.3" stroke-width="0.8"/><path d="M705.1 337.6L700.6 337.6" stroke="#7e6c50" stroke-opacity="0.3" stroke-width="0.8"/><path d="M700.6 337.6L705.1 337.6L715.6 317.5L711.5 317.5Z" fill="rgb(175,155,120)"/><path d="M715.6 317.5L711.5 317.5" stroke="#7e6c50" stroke-opacity="0.3" stroke-width="0.8"/><path d="M711.5 317.5L715.6 317.5L728.6 292.6L725.1 292.6Z" fill="rgb(167,147,113)"/><path d="M728.6 292.6L725.1 292.6" stroke="#7e6c50" stroke-opacity="0.3" stroke-width="0.8"/><path d="M515.7 700.0L528.2 700.0L592.1 572.4L582.4 572.4Z" fill="rgb(160,140,106)"/><path d="M592.1 572.4L582.4 572.4" stroke="#7e6c50" stroke-opacity="0.3" stroke-width="0.8"/><path d="M582.4 572.4L592.1 572.4L645.6 465.4L638.3 465.4Z" fill="rgb(164,144,109)"/><path d="M645.6 465.4L638.3 465.4" stroke="#7e6c50" stroke-opacity="0.3" stroke-width="0.8"/><path d="M638.3 465.4L645.6 465.4L686.5 383.7L681.0 383.7Z" fill="rgb(158,138,104)"/><path d="M686.5 383.7L681.0 383.7" stroke="#7e6c50" stroke-opacity="0.3" stroke-width="0.8"/><path d="M700.8 355.1L696.0 355.1" stroke="#7e6c50" stroke-opacity="0.3" stroke-width="0.8"/><path d="M696.0 355.1L700.8 355.1L712.1 332.7L707.7 332.7Z" fill="rgb(160,140,106)"/><path d="M712.1 332.7L707.7 332.7" stroke="#7e6c50" stroke-opacity="0.3" stroke-width="0.8"/><path d="M707.7 332.7L712.1 332.7L728.9 298.9L725.3 298.9Z" fill="rgb(164,144,109)"/><path d="M728.9 298.9L725.3 298.9" stroke="#7e6c50" stroke-opacity="0.3" stroke-width="0.8"/><path d="M528.2 700.0L541.5 700.0L548.1 686.3L535.1 686.3Z" fill="rgb(173,153,119)"/><path d="M548.1 686.3L535.1 686.3" stroke="#7e6c50" stroke-opacity="0.3" stroke-width="0.8"/><path d="M535.1 686.3L548.1 686.3L631.6 511.1L622.7 511.1Z" fill="rgb(163,143,109)"/><path d="M631.6 511.1L622.7 511.1" stroke="#7e6c50" stroke-opacity="0.3" stroke-width="0.8"/><path d="M622.7 511.1L631.6 511.1L672.5 425.4L665.6 425.4Z" fill="rgb(163,143,109)"/><path d="M672.5 425.4L665.6 425.4" stroke="#7e6c50" stroke-opacity="0.3" stroke-width="0.8"/><path d="M665.6 425.4L672.5 425.4L702.1 363.3L696.7 363.3Z" fill="rgb(171,151,117)"/><path d="M702.1 363.3L696.7 363.3" stroke="#7e6c50" stroke-opacity="0.3" stroke-width="0.8"/><path d="M696.7 363.3L702.1 363.3L716.2 333.8L711.5 333.8Z" fill="rgb(171,151,117)"/><path d="M716.2 333.8L711.5 333.8" stroke="#7e6c50" stroke-opacity="0.3" stroke-width="0.8"/><path d="M711.5 333.8L716.2 333.8L730.4 303.9L726.4 303.9Z" fill="rgb(169,149,115)"/><path d="M730.4 303.9L726.4 303.9" stroke="#7e6c50" stroke-opacity="0.3" stroke-width="0.8"/><path d="M541.5 700.0L553.2 700.0L615.9 562.6L607.0 562.6Z" fill="rgb(170,150,115)"/><path d="M615.9 562.6L607.0 562.6" stroke="#7e6c50" stroke-opacity="0.3" stroke-width="0.8"/><path d="M607.0 562.6L615.9 562.6L655.7 475.4L648.6 475.4Z" fill="rgb(164,144,109)"/><path d="M655.7 475.4L648.6 475.4" stroke="#7e6c50" stroke-opacity="0.3" stroke-width="0.8"/><path d="M648.6 475.4L655.7 475.4L684.1 413.1L678.4 413.1Z" fill="rgb(162,142,108)"/><path d="M684.1 413.1L678.4 413.1" stroke="#7e6c50" stroke-opacity="0.3" stroke-width="0.8"/><path d="M678.4 413.1L684.1 413.1L706.7 363.5L702.0 363.5Z" fill="rgb(172,152,117)"/><path d="M706.7 363.5L702.0 363.5" stroke="#7e6c50" stroke-opacity="0.3" stroke-width="0.8"/><path d="M702.0 363.5L706.7 363.5L727.2 318.8L723.3 318.8Z" fill="rgb(164,144,109)"/><path d="M727.2 318.8L723.3 318.8" stroke="#7e6c50" stroke-opacity="0.3" stroke-width="0.8"/><path d="M553.2 700.0L568.5 700.0L643.0 526.5L632.4 526.5Z" fill="rgb(165,145,111)"/><path d="M643.0 526.5L632.4 526.5" stroke="#7e6c50" stroke-opacity="0.3" stroke-width="0.8"/><path d="M632.4 526.5L643.0 526.5L675.2 451.5L666.6 451.5Z" fill="rgb(163,143,109)"/><path d="M675.2 451.5L666.6 451.5" stroke="#7e6c50" stroke-opacity="0.3" stroke-width="0.8"/><path d="M666.6 451.5L675.2 451.5L697.2 400.2L690.0 400.2Z" fill="rgb(163,143,109)"/><path d="M697.2 400.2L690.0 400.2" stroke="#7e6c50" stroke-opacity="0.3" stroke-width="0.8"/><path d="M690.0 400.2L697.2 400.2L721.5 343.6L715.8 343.6Z" fill="rgb(173,153,119)"/><path d="M721.5 343.6L715.8 343.6" stroke="#7e6c50" stroke-opacity="0.3" stroke-width="0.8"/><path d="M715.8 343.6L721.5 343.6L737.2 306.9L732.6 306.9Z" fill="rgb(169,149,115)"/><path d="M737.2 306.9L732.6 306.9" stroke="#7e6c50" stroke-opacity="0.3" stroke-width="0.8"/><path d="M568.5 700.0L582.2 700.0L648.7 535.8L639.0 535.8Z" fill="rgb(172,152,117)"/><path d="M648.7 535.8L639.0 535.8" stroke="#7e6c50" stroke-opacity="0.3" stroke-width="0.8"/><path d="M639.0 535.8L648.7 535.8L676.7 466.8L668.6 466.8Z" fill="rgb(164,144,109)"/><path d="M676.7 466.8L668.6 466.8" stroke="#7e6c50" stroke-opacity="0.3" stroke-width="0.8"/><path d="M697.3 415.7L690.5 415.7" stroke="#7e6c50" stroke-opacity="0.3" stroke-width="0.8"/><path d="M724.0 349.8L718.8 349.8" stroke="#7e6c50" stroke-opacity="0.3" stroke-width="0.8"/><path d="M718.8 349.8L724.0 349.8L739.1 312.7L734.7 312.7Z" fill="rgb(170,150,115)"/><path d="M739.1 312.7L734.7 312.7" stroke="#7e6c50" stroke-opacity="0.3" stroke-width="0.8"/><path d="M582.2 700.0L595.9 700.0L663.8 521.7L654.4 521.7Z" fill="rgb(168,148,113)"/><path d="M663.8 521.7L654.4 521.7" stroke="#7e6c50" stroke-opacity="0.3" stroke-width="0.8"/><path d="M654.4 521.7L663.8 521.7L698.9 429.3L691.8 429.3Z" fill="rgb(166,146,111)"/><path d="M698.9 429.3L691.8 429.3" stroke="#7e6c50" stroke-opacity="0.3" stroke-width="0.8"/><path d="M691.8 429.3L698.9 429.3L722.4 367.7L716.8 367.7Z" fill="rgb(170,150,115)"/><path d="M722.4 367.7L716.8 367.7" stroke="#7e6c50" stroke-opacity="0.3" stroke-width="0.8"/><path d="M716.8 367.7L722.4 367.7L739.6 322.4L735.1 322.4Z" fill="rgb(162,142,108)"/><path d="M739.6 322.4L735.1 322.4" stroke="#7e6c50" stroke-opacity="0.3" stroke-width="0.8"/><path d="M735.1 322.4L739.6 322.4L747.9 300.7L743.9 300.7Z" fill="rgb(166,146,111)"/><path d="M747.9 300.7L743.9 300.7" stroke="#7e6c50" stroke-opacity="0.3" stroke-width="0.8"/><path d="M595.9 700.0L610.0 700.0L642.9 607.7L631.1 607.7Z" fill="rgb(166,146,111)"/><path d="M642.9 607.7L631.1 607.7" stroke="#7e6c50" stroke-opacity="0.3" stroke-width="0.8"/><path d="M631.1 607.7L642.9 607.7L680.8 501.1L671.6 501.1Z" fill="rgb(160,140,106)"/><path d="M680.8 501.1L671.6 501.1" stroke="#7e6c50" stroke-opacity="0.3" stroke-width="0.8"/><path d="M671.6 501.1L680.8 501.1L714.8 405.3L708.1 405.3Z" fill="rgb(162,142,108)"/><path d="M714.8 405.3L708.1 405.3" stroke="#7e6c50" stroke-opacity="0.3" stroke-width="0.8"/><path d="M708.1 405.3L714.8 405.3L733.8 351.9L728.4 351.9Z" fill="rgb(160,140,106)"/><path d="M733.8 351.9L728.4 351.9" stroke="#7e6c50" stroke-opacity="0.3" stroke-width="0.8"/><path d="M728.4 351.9L733.8 351.9L743.5 324.8L738.7 324.8Z" fill="rgb(162,142,108)"/><path d="M743.5 324.8L738.7 324.8" stroke="#7e6c50" stroke-opacity="0.3" stroke-width="0.8"/><path d="M738.7 324.8L743.5 324.8L752.9 298.4L748.8 298.4Z" fill="rgb(166,146,111)"/><path d="M752.9 298.4L748.8 298.4" stroke="#7e6c50" stroke-opacity="0.3" stroke-width="0.8"/><path d="M610.0 700.0L624.8 700.0L665.8 575.5L654.3 575.5Z" fill="rgb(165,145,111)"/><path d="M665.8 575.5L654.3 575.5" stroke="#7e6c50" stroke-opacity="0.3" stroke-width="0.8"/><path d="M654.3 575.5L665.8 575.5L692.3 495.3L682.8 495.3Z" fill="rgb(173,153,119)"/><path d="M692.3 495.3L682.8 495.3" stroke="#7e6c50" stroke-opacity="0.3" stroke-width="0.8"/><path d="M682.8 495.3L692.3 495.3L719.3 413.4L712.0 413.4Z" fill="rgb(165,145,111)"/><path d="M719.3 413.4L712.0 413.4" stroke="#7e6c50" stroke-opacity="0.3" stroke-width="0.8"/><path d="M712.0 413.4L719.3 413.4L740.6 348.6L735.0 348.6Z" fill="rgb(163,143,109)"/><path d="M740.6 348.6L735.0 348.6" stroke="#7e6c50" stroke-opacity="0.3" stroke-width="0.8"/><path d="M735.0 348.6L740.6 348.6L748.3 325.3L743.3 325.3Z" fill="rgb(169,149,115)"/><path d="M748.3 325.3L743.3 325.3" stroke="#7e6c50" stroke-opacity="0.3" stroke-width="0.8"/><path d="M743.3 325.3L748.3 325.3L757.0 298.7L752.8 298.7Z" fill="rgb(165,145,111)"/><path d="M757.0 298.7L752.8 298.7" stroke="#7e6c50" stroke-opacity="0.3" stroke-width="0.8"/><path d="M624.8 700.0L639.3 700.0L696.9 510.4L687.3 510.4Z" fill="rgb(171,151,117)"/><path d="M696.9 510.4L687.3 510.4" stroke="#7e6c50" stroke-opacity="0.3" stroke-width="0.8"/><path d="M687.3 510.4L696.9 510.4L726.1 414.5L718.9 414.5Z" fill="rgb(173,153,119)"/><path d="M726.1 414.5L718.9 414.5" stroke="#7e6c50" stroke-opacity="0.3" stroke-width="0.8"/><path d="M718.9 414.5L726.1 414.5L738.4 373.9L732.3 373.9Z" fill="rgb(163,143,109)"/><path d="M738.4 373.9L732.3 373.9" stroke="#7e6c50" stroke-opacity="0.3" stroke-width="0.8"/><path d="M750.5 334.1L745.4 334.1" stroke="#7e6c50" stroke-opacity="0.3" stroke-width="0.8"/><path d="M759.2 305.3L754.9 305.3" stroke="#7e6c50" stroke-opacity="0.3" stroke-width="0.8"/><path d="M639.3 700.0L653.0 700.0L688.9 571.5L678.4 571.5Z" fill="rgb(160,140,106)"/><path d="M688.9 571.5L678.4 571.5" stroke="#7e6c50" stroke-opacity="0.3" stroke-width="0.8"/><path d="M678.4 571.5L688.9 571.5L728.1 431.4L720.9 431.4Z" fill="rgb(168,148,113)"/><path d="M728.1 431.4L720.9 431.4" stroke="#7e6c50" stroke-opacity="0.3" stroke-width="0.8"/><path d="M741.0 385.5L734.9 385.5" stroke="#7e6c50" stroke-opacity="0.3" stroke-width="0.8"/><path d="M750.1 352.6L744.9 352.6" stroke="#7e6c50" stroke-opacity="0.3" stroke-width="0.8"/><path d="M756.5 329.9L751.8 329.9" stroke="#7e6c50" stroke-opacity="0.3" stroke-width="0.8"/><path d="M751.8 329.9L756.5 329.9L763.0 306.6L758.8 306.6Z" fill="rgb(170,150,115)"/><path d="M763.0 306.6L758.8 306.6" stroke="#7e6c50" stroke-opacity="0.3" stroke-width="0.8"/><path d="M653.0 700.0L667.9 700.0L710.3 532.4L699.9 532.4Z" fill="rgb(171,151,117)"/><path d="M710.3 532.4L699.9 532.4" stroke="#7e6c50" stroke-opacity="0.3" stroke-width="0.8"/><path d="M699.9 532.4L710.3 532.4L734.0 439.0L726.0 439.0Z" fill="rgb(173,153,119)"/><path d="M734.0 439.0L726.0 439.0" stroke="#7e6c50" stroke-opacity="0.3" stroke-width="0.8"/><path d="M726.0 439.0L734.0 439.0L746.6 389.3L739.9 389.3Z" fill="rgb(163,143,109)"/><path d="M746.6 389.3L739.9 389.3" stroke="#7e6c50" stroke-opacity="0.3" stroke-width="0.8"/><path d="M759.4 338.6L754.1 338.6" stroke="#7e6c50" stroke-opacity="0.3" stroke-width="0.8"/><path d="M767.3 307.5L762.8 307.5" stroke="#7e6c50" stroke-opacity="0.3" stroke-width="0.8"/><path d="M771.3 291.7L767.2 291.7" stroke="#7e6c50" stroke-opacity="0.3" stroke-width="0.8"/><path d="M667.9 700.0L681.9 700.0L719.9 533.8L710.0 533.8Z" fill="rgb(162,142,108)"/><path d="M719.9 533.8L710.0 533.8" stroke="#7e6c50" stroke-opacity="0.3" stroke-width="0.8"/><path d="M743.5 430.4L736.2 430.4" stroke="#7e6c50" stroke-opacity="0.3" stroke-width="0.8"/><path d="M736.2 430.4L743.5 430.4L755.2 379.3L749.1 379.3Z" fill="rgb(166,146,111)"/><path d="M755.2 379.3L749.1 379.3" stroke="#7e6c50" stroke-opacity="0.3" stroke-width="0.8"/><path d="M749.1 379.3L755.2 379.3L762.6 346.9L757.3 346.9Z" fill="rgb(160,140,106)"/><path d="M762.6 346.9L757.3 346.9" stroke="#7e6c50" stroke-opacity="0.3" stroke-width="0.8"/><path d="M757.3 346.9L762.6 346.9L769.2 317.9L764.7 317.9Z" fill="rgb(168,148,113)"/><path d="M769.2 317.9L764.7 317.9" stroke="#7e6c50" stroke-opacity="0.3" stroke-width="0.8"/><path d="M764.7 317.9L769.2 317.9L775.1 292.3L771.2 292.3Z" fill="rgb(168,148,113)"/><path d="M775.1 292.3L771.2 292.3" stroke="#7e6c50" stroke-opacity="0.3" stroke-width="0.8"/><path d="M681.9 700.0L694.1 700.0L730.2 525.6L721.8 525.6Z" fill="rgb(173,153,119)"/><path d="M730.2 525.6L721.8 525.6" stroke="#7e6c50" stroke-opacity="0.3" stroke-width="0.8"/><path d="M721.8 525.6L730.2 525.6L751.1 424.7L744.8 424.7Z" fill="rgb(175,155,120)"/><path d="M751.1 424.7L744.8 424.7" stroke="#7e6c50" stroke-opacity="0.3" stroke-width="0.8"/><path d="M744.8 424.7L751.1 424.7L759.4 384.4L754.0 384.4Z" fill="rgb(167,147,113)"/><path d="M759.4 384.4L754.0 384.4" stroke="#7e6c50" stroke-opacity="0.3" stroke-width="0.8"/><path d="M754.0 384.4L759.4 384.4L770.5 330.8L766.3 330.8Z" fill="rgb(173,153,119)"/><path d="M770.5 330.8L766.3 330.8" stroke="#7e6c50" stroke-opacity="0.3" stroke-width="0.8"/><path d="M766.3 330.8L770.5 330.8L775.6 306.0L771.9 306.0Z" fill="rgb(173,153,119)"/><path d="M775.6 306.0L771.9 306.0" stroke="#7e6c50" stroke-opacity="0.3" stroke-width="0.8"/><path d="M718.1 644.8L705.5 644.8" stroke="#7e6c50" stroke-opacity="0.3" stroke-width="0.8"/><path d="M746.8 487.4L738.1 487.4" stroke="#7e6c50" stroke-opacity="0.3" stroke-width="0.8"/><path d="M757.1 430.9L749.8 430.9" stroke="#7e6c50" stroke-opacity="0.3" stroke-width="0.8"/><path d="M749.8 430.9L757.1 430.9L769.8 361.1L764.2 361.1Z" fill="rgb(174,154,120)"/><path d="M769.8 361.1L764.2 361.1" stroke="#7e6c50" stroke-opacity="0.3" stroke-width="0.8"/><path d="M764.2 361.1L769.8 361.1L775.1 332.1L770.2 332.1Z" fill="rgb(174,154,120)"/><path d="M775.1 332.1L770.2 332.1" stroke="#7e6c50" stroke-opacity="0.3" stroke-width="0.8"/><path d="M780.9 300.3L776.8 300.3" stroke="#7e6c50" stroke-opacity="0.3" stroke-width="0.8"/><path d="M742.9 569.9L731.7 569.9" stroke="#7e6c50" stroke-opacity="0.3" stroke-width="0.8"/><path d="M731.7 569.9L742.9 569.9L760.6 456.9L752.3 456.9Z" fill="rgb(164,144,109)"/><path d="M760.6 456.9L752.3 456.9" stroke="#7e6c50" stroke-opacity="0.3" stroke-width="0.8"/><path d="M752.3 456.9L760.6 456.9L771.8 385.4L765.3 385.4Z" fill="rgb(166,146,111)"/><path d="M771.8 385.4L765.3 385.4" stroke="#7e6c50" stroke-opacity="0.3" stroke-width="0.8"/><path d="M765.3 385.4L771.8 385.4L778.2 344.4L772.8 344.4Z" fill="rgb(160,140,106)"/><path d="M778.2 344.4L772.8 344.4" stroke="#7e6c50" stroke-opacity="0.3" stroke-width="0.8"/><path d="M772.8 344.4L778.2 344.4L783.6 309.7L779.1 309.7Z" fill="rgb(158,138,104)"/><path d="M783.6 309.7L779.1 309.7" stroke="#7e6c50" stroke-opacity="0.3" stroke-width="0.8"/><path d="M779.1 309.7L783.6 309.7L786.3 292.4L782.3 292.4Z" fill="rgb(158,138,104)"/><path d="M786.3 292.4L782.3 292.4" stroke="#7e6c50" stroke-opacity="0.3" stroke-width="0.8"/><path d="M756.7 541.2L747.4 541.2" stroke="#7e6c50" stroke-opacity="0.3" stroke-width="0.8"/><path d="M747.4 541.2L756.7 541.2L768.0 457.1L760.6 457.1Z" fill="rgb(171,151,117)"/><path d="M768.0 457.1L760.6 457.1" stroke="#7e6c50" stroke-opacity="0.3" stroke-width="0.8"/><path d="M778.2 380.6L772.5 380.6" stroke="#7e6c50" stroke-opacity="0.3" stroke-width="0.8"/><path d="M772.5 380.6L778.2 380.6L783.6 339.7L778.9 339.7Z" fill="rgb(173,153,119)"/><path d="M783.6 339.7L778.9 339.7" stroke="#7e6c50" stroke-opacity="0.3" stroke-width="0.8"/><path d="M778.9 339.7L783.6 339.7L787.3 312.1L783.3 312.1Z" fill="rgb(175,155,120)"/><path d="M787.3 312.1L783.3 312.1" stroke="#7e6c50" stroke-opacity="0.3" stroke-width="0.8"/><path d="M783.3 312.1L787.3 312.1L789.8 293.4L786.2 293.4Z" fill="rgb(173,153,119)"/><path d="M789.8 293.4L786.2 293.4" stroke="#7e6c50" stroke-opacity="0.3" stroke-width="0.8"/><path d="M735.5 700.0L750.6 700.0L765.4 562.0L753.9 562.0Z" fill="rgb(171,151,117)"/><path d="M765.4 562.0L753.9 562.0" stroke="#7e6c50" stroke-opacity="0.3" stroke-width="0.8"/><path d="M753.9 562.0L765.4 562.0L779.1 433.2L771.2 433.2Z" fill="rgb(167,147,113)"/><path d="M779.1 433.2L771.2 433.2" stroke="#7e6c50" stroke-opacity="0.3" stroke-width="0.8"/><path d="M771.2 433.2L779.1 433.2L785.0 378.0L778.5 378.0Z" fill="rgb(171,151,117)"/><path d="M785.0 378.0L778.5 378.0" stroke="#7e6c50" stroke-opacity="0.3" stroke-width="0.8"/><path d="M778.5 378.0L785.0 378.0L789.1 340.0L783.6 340.0Z" fill="rgb(175,155,120)"/><path d="M789.1 340.0L783.6 340.0" stroke="#7e6c50" stroke-opacity="0.3" stroke-width="0.8"/><path d="M783.6 340.0L789.1 340.0L791.9 313.4L787.2 313.4Z" fill="rgb(173,153,119)"/><path d="M791.9 313.4L787.2 313.4" stroke="#7e6c50" stroke-opacity="0.3" stroke-width="0.8"/><path d="M778.3 545.0L767.2 545.0" stroke="#7e6c50" stroke-opacity="0.3" stroke-width="0.8"/><path d="M787.1 435.1L778.9 435.1" stroke="#7e6c50" stroke-opacity="0.3" stroke-width="0.8"/><path d="M778.9 435.1L787.1 435.1L790.8 388.4L783.9 388.4Z" fill="rgb(175,155,120)"/><path d="M790.8 388.4L783.9 388.4" stroke="#7e6c50" stroke-opacity="0.3" stroke-width="0.8"/><path d="M783.9 388.4L790.8 388.4L793.8 351.5L787.9 351.5Z" fill="rgb(173,153,119)"/><path d="M793.8 351.5L787.9 351.5" stroke="#7e6c50" stroke-opacity="0.3" stroke-width="0.8"/><path d="M787.9 351.5L793.8 351.5L796.8 313.9L791.9 313.9Z" fill="rgb(169,149,115)"/><path d="M796.8 313.9L791.9 313.9" stroke="#7e6c50" stroke-opacity="0.3" stroke-width="0.8"/><path d="M791.9 313.9L796.8 313.9L798.3 294.0L794.0 294.0Z" fill="rgb(173,153,119)"/><path d="M798.3 294.0L794.0 294.0" stroke="#7e6c50" stroke-opacity="0.3" stroke-width="0.8"/><path d="M766.0 700.0L777.1 700.0L786.1 549.5L778.0 549.5Z" fill="rgb(172,152,117)"/><path d="M786.1 549.5L778.0 549.5" stroke="#7e6c50" stroke-opacity="0.3" stroke-width="0.8"/><path d="M778.0 549.5L786.1 549.5L790.9 470.3L784.3 470.3Z" fill="rgb(180,159,125)"/><path d="M790.9 470.3L784.3 470.3" stroke="#7e6c50" stroke-opacity="0.3" stroke-width="0.8"/><path d="M784.3 470.3L790.9 470.3L795.5 394.0L790.4 394.0Z" fill="rgb(178,157,123)"/><path d="M795.5 394.0L790.4 394.0" stroke="#7e6c50" stroke-opacity="0.3" stroke-width="0.8"/><path d="M798.2 348.6L794.0 348.6" stroke="#7e6c50" stroke-opacity="0.3" stroke-width="0.8"/><path d="M794.0 348.6L798.2 348.6L800.6 308.3L797.2 308.3Z" fill="rgb(170,150,115)"/><path d="M800.6 308.3L797.2 308.3" stroke="#7e6c50" stroke-opacity="0.3" stroke-width="0.8"/><path d="M797.2 308.3L800.6 308.3L801.6 292.4L798.5 292.4Z" fill="rgb(178,157,123)"/><path d="M801.6 292.4L798.5 292.4" stroke="#7e6c50" stroke-opacity="0.3" stroke-width="0.8"/><path d="M777.1 700.0L788.4 700.0L789.2 679.1L778.4 679.1Z" fill="rgb(169,149,115)"/><path d="M789.2 679.1L778.4 679.1" stroke="#7e6c50" stroke-opacity="0.3" stroke-width="0.8"/><path d="M778.4 679.1L789.2 679.1L796.0 509.6L788.5 509.6Z" fill="rgb(169,149,115)"/><path d="M796.0 509.6L788.5 509.6" stroke="#7e6c50" stroke-opacity="0.3" stroke-width="0.8"/><path d="M799.6 419.4L793.9 419.4" stroke="#7e6c50" stroke-opacity="0.3" stroke-width="0.8"/><path d="M793.9 419.4L799.6 419.4L801.9 363.2L797.3 363.2Z" fill="rgb(177,157,122)"/><path d="M801.9 363.2L797.3 363.2" stroke="#7e6c50" stroke-opacity="0.3" stroke-width="0.8"/><path d="M797.3 363.2L801.9 363.2L803.4 325.9L799.5 325.9Z" fill="rgb(177,157,122)"/><path d="M803.4 325.9L799.5 325.9" stroke="#7e6c50" stroke-opacity="0.3" stroke-width="0.8"/><path d="M799.5 325.9L803.4 325.9L804.1 307.3L800.7 307.3Z" fill="rgb(173,153,119)"/><path d="M804.1 307.3L800.7 307.3" stroke="#7e6c50" stroke-opacity="0.3" stroke-width="0.8"/><path d="M804.8 290.1L801.7 290.1" stroke="#7e6c50" stroke-opacity="0.3" stroke-width="0.8"/><path d="M788.4 700.0L803.2 700.0L805.4 537.7L794.9 537.7Z" fill="rgb(176,156,121)"/><path d="M805.4 537.7L794.9 537.7" stroke="#7e6c50" stroke-opacity="0.3" stroke-width="0.8"/><path d="M794.9 537.7L805.4 537.7L806.8 437.7L798.9 437.7Z" fill="rgb(178,157,123)"/><path d="M806.8 437.7L798.9 437.7" stroke="#7e6c50" stroke-opacity="0.3" stroke-width="0.8"/><path d="M807.4 394.9L800.6 394.9" stroke="#7e6c50" stroke-opacity="0.3" stroke-width="0.8"/><path d="M800.6 394.9L807.4 394.9L807.8 364.3L801.8 364.3Z" fill="rgb(172,152,117)"/><path d="M807.8 364.3L801.8 364.3" stroke="#7e6c50" stroke-opacity="0.3" stroke-width="0.8"/><path d="M801.8 364.3L807.8 364.3L808.3 328.0L803.3 328.0Z" fill="rgb(172,152,117)"/><path d="M808.3 328.0L803.3 328.0" stroke="#7e6c50" stroke-opacity="0.3" stroke-width="0.8"/><path d="M803.3 328.0L808.3 328.0L808.8 294.4L804.6 294.4Z" fill="rgb(176,156,121)"/><path d="M808.8 294.4L804.6 294.4" stroke="#7e6c50" stroke-opacity="0.3" stroke-width="0.8"/><path d="M803.2 700.0L815.1 700.0L813.9 534.4L805.5 534.4Z" fill="rgb(162,142,108)"/><path d="M813.9 534.4L805.5 534.4" stroke="#7e6c50" stroke-opacity="0.3" stroke-width="0.8"/><path d="M805.5 534.4L813.9 534.4L813.1 421.5L807.0 421.5Z" fill="rgb(170,150,115)"/><path d="M813.1 421.5L807.0 421.5" stroke="#7e6c50" stroke-opacity="0.3" stroke-width="0.8"/><path d="M812.6 361.8L807.9 361.8" stroke="#7e6c50" stroke-opacity="0.3" stroke-width="0.8"/><path d="M807.9 361.8L812.6 361.8L812.4 333.8L808.3 333.8Z" fill="rgb(168,148,113)"/><path d="M812.4 333.8L808.3 333.8" stroke="#7e6c50" stroke-opacity="0.3" stroke-width="0.8"/><path d="M808.3 333.8L812.4 333.8L812.2 302.6L808.7 302.6Z" fill="rgb(162,142,108)"/><path d="M812.2 302.6L808.7 302.6" stroke="#7e6c50" stroke-opacity="0.3" stroke-width="0.8"/><path d="M815.1 700.0L830.0 700.0L826.4 593.9L814.3 593.9Z" fill="rgb(163,143,109)"/><path d="M826.4 593.9L814.3 593.9" stroke="#7e6c50" stroke-opacity="0.3" stroke-width="0.8"/><path d="M814.3 593.9L826.4 593.9L823.0 492.9L813.6 492.9Z" fill="rgb(165,145,111)"/><path d="M823.0 492.9L813.6 492.9" stroke="#7e6c50" stroke-opacity="0.3" stroke-width="0.8"/><path d="M813.6 492.9L823.0 492.9L819.6 391.8L812.9 391.8Z" fill="rgb(173,153,119)"/><path d="M819.6 391.8L812.9 391.8" stroke="#7e6c50" stroke-opacity="0.3" stroke-width="0.8"/><path d="M812.9 391.8L819.6 391.8L818.6 359.6L812.6 359.6Z" fill="rgb(163,143,109)"/><path d="M818.6 359.6L812.6 359.6" stroke="#7e6c50" stroke-opacity="0.3" stroke-width="0.8"/><path d="M812.6 359.6L818.6 359.6L817.6 331.9L812.4 331.9Z" fill="rgb(173,153,119)"/><path d="M817.6 331.9L812.4 331.9" stroke="#7e6c50" stroke-opacity="0.3" stroke-width="0.8"/><path d="M812.4 331.9L817.6 331.9L816.5 299.3L812.2 299.3Z" fill="rgb(169,149,115)"/><path d="M816.5 299.3L812.2 299.3" stroke="#7e6c50" stroke-opacity="0.3" stroke-width="0.8"/><path d="M844.7 696.9L829.9 696.9" stroke="#7e6c50" stroke-opacity="0.3" stroke-width="0.8"/><path d="M834.4 524.3L824.1 524.3" stroke="#7e6c50" stroke-opacity="0.3" stroke-width="0.8"/><path d="M827.5 409.3L820.2 409.3" stroke="#7e6c50" stroke-opacity="0.3" stroke-width="0.8"/><path d="M823.8 348.4L818.2 348.4" stroke="#7e6c50" stroke-opacity="0.3" stroke-width="0.8"/><path d="M818.2 348.4L823.8 348.4L821.7 314.1L817.0 314.1Z" fill="rgb(163,143,109)"/><path d="M821.7 314.1L817.0 314.1" stroke="#7e6c50" stroke-opacity="0.3" stroke-width="0.8"/><path d="M844.3 529.9L834.7 529.9" stroke="#7e6c50" stroke-opacity="0.3" stroke-width="0.8"/><path d="M834.7 529.9L844.3 529.9L838.0 455.3L830.2 455.3Z" fill="rgb(172,152,117)"/><path d="M838.0 455.3L830.2 455.3" stroke="#7e6c50" stroke-opacity="0.3" stroke-width="0.8"/><path d="M830.2 455.3L838.0 455.3L834.2 410.1L827.5 410.1Z" fill="rgb(172,152,117)"/><path d="M834.2 410.1L827.5 410.1" stroke="#7e6c50" stroke-opacity="0.3" stroke-width="0.8"/><path d="M827.5 410.1L834.2 410.1L829.0 348.2L823.8 348.2Z" fill="rgb(164,144,109)"/><path d="M829.0 348.2L823.8 348.2" stroke="#7e6c50" stroke-opacity="0.3" stroke-width="0.8"/><path d="M823.8 348.2L829.0 348.2L825.9 311.7L821.6 311.7Z" fill="rgb(172,152,117)"/><path d="M825.9 311.7L821.6 311.7" stroke="#7e6c50" stroke-opacity="0.3" stroke-width="0.8"/><path d="M824.5 294.9L820.6 294.9" stroke="#7e6c50" stroke-opacity="0.3" stroke-width="0.8"/><path d="M858.6 700.0L871.0 700.0L860.4 600.5L850.2 600.5Z" fill="rgb(165,145,111)"/><path d="M860.4 600.5L850.2 600.5" stroke="#7e6c50" stroke-opacity="0.3" stroke-width="0.8"/><path d="M850.3 505.5L842.2 505.5" stroke="#7e6c50" stroke-opacity="0.3" stroke-width="0.8"/><path d="M842.2 505.5L850.3 505.5L842.7 433.1L836.1 433.1Z" fill="rgb(173,153,119)"/><path d="M842.7 433.1L836.1 433.1" stroke="#7e6c50" stroke-opacity="0.3" stroke-width="0.8"/><path d="M836.1 433.1L842.7 433.1L835.2 362.6L830.2 362.6Z" fill="rgb(171,151,117)"/><path d="M835.2 362.6L830.2 362.6" stroke="#7e6c50" stroke-opacity="0.3" stroke-width="0.8"/><path d="M830.2 362.6L835.2 362.6L831.0 323.3L826.9 323.3Z" fill="rgb(171,151,117)"/><path d="M831.0 323.3L826.9 323.3" stroke="#7e6c50" stroke-opacity="0.3" stroke-width="0.8"/><path d="M827.8 293.6L824.4 293.6" stroke="#7e6c50" stroke-opacity="0.3" stroke-width="0.8"/><path d="M871.0 700.0L885.3 700.0L871.4 594.1L859.8 594.1Z" fill="rgb(173,153,119)"/><path d="M871.4 594.1L859.8 594.1" stroke="#7e6c50" stroke-opacity="0.3" stroke-width="0.8"/><path d="M859.8 594.1L871.4 594.1L852.9 453.8L844.9 453.8Z" fill="rgb(173,153,119)"/><path d="M852.9 453.8L844.9 453.8" stroke="#7e6c50" stroke-opacity="0.3" stroke-width="0.8"/><path d="M846.5 404.9L839.7 404.9" stroke="#7e6c50" stroke-opacity="0.3" stroke-width="0.8"/><path d="M839.7 404.9L846.5 404.9L840.1 356.5L834.5 356.5Z" fill="rgb(171,151,117)"/><path d="M840.1 356.5L834.5 356.5" stroke="#7e6c50" stroke-opacity="0.3" stroke-width="0.8"/><path d="M834.5 356.5L840.1 356.5L837.0 332.6L832.0 332.6Z" fill="rgb(163,143,109)"/><path d="M837.0 332.6L832.0 332.6" stroke="#7e6c50" stroke-opacity="0.3" stroke-width="0.8"/><path d="M832.0 332.6L837.0 332.6L833.0 302.0L828.7 302.0Z" fill="rgb(163,143,109)"/><path d="M833.0 302.0L828.7 302.0" stroke="#7e6c50" stroke-opacity="0.3" stroke-width="0.8"/></g>
<rect x="245" y="82" width="575" height="618" fill="url(#flo)"/><rect x="245" y="82" width="575" height="618" fill="url(#vpg)"/>
<polygon points="245,82 820,82 820,141 390,101 245,142" fill="#e6e6e6"/>
<!-- shaded band -->
<polygon points="486,267 564,280 564,322 552,309 465,289" fill="#877a5c"/>
<!-- pad1 -->
<polygon points="432,180.5 447,172 527,184.6 479,217" fill="#5a5957"/>
<polyline points="527,184.6 479,217" stroke="#3a3a3a" stroke-width="1" fill="none"/>
<polygon points="479,218 504,213 479,232" fill="#4e4e4c"/>
<circle cx="477" cy="170.5" r="8.5" fill="#e4dccd" opacity="0.35"/><circle cx="477" cy="170.5" r="7" fill="#ddd5c6"/>
<!-- wall1 -->
<polygon points="245,153 476,187 478,231 386,250 253,221 245,207" fill="url(#w1)"/><g clip-path="url(#cw1)"><rect x="257.5" y="150" width="2.1" height="105" fill="#6e6048" fill-opacity="0.17"/><rect x="263.5" y="150" width="2.3" height="105" fill="#6e6048" fill-opacity="0.09"/><rect x="265.8" y="150" width="3.6" height="105" fill="#6e6048" fill-opacity="0.06"/><rect x="269.5" y="150" width="2.7" height="105" fill="#a08f6e" fill-opacity="0.20"/><rect x="272.1" y="150" width="4.3" height="105" fill="#a08f6e" fill-opacity="0.19"/><rect x="276.4" y="150" width="2.4" height="105" fill="#6e6048" fill-opacity="0.08"/><rect x="280.8" y="150" width="2.6" height="105" fill="#a08f6e" fill-opacity="0.21"/><rect x="283.5" y="150" width="4.6" height="105" fill="#a08f6e" fill-opacity="0.20"/><rect x="288.1" y="150" width="3.6" height="105" fill="#6e6048" fill-opacity="0.08"/><rect x="291.7" y="150" width="4.8" height="105" fill="#6e6048" fill-opacity="0.17"/><rect x="296.5" y="150" width="4.7" height="105" fill="#a08f6e" fill-opacity="0.13"/><rect x="301.2" y="150" width="2.5" height="105" fill="#a08f6e" fill-opacity="0.10"/><rect x="303.7" y="150" width="2.9" height="105" fill="#6e6048" fill-opacity="0.06"/><rect x="306.6" y="150" width="4.0" height="105" fill="#a08f6e" fill-opacity="0.13"/><rect x="310.7" y="150" width="4.5" height="105" fill="#6e6048" fill-opacity="0.10"/><rect x="322.8" y="150" width="4.5" height="105" fill="#a08f6e" fill-opacity="0.19"/><rect x="327.3" y="150" width="3.1" height="105" fill="#6e6048" fill-opacity="0.06"/><rect x="330.4" y="150" width="2.1" height="105" fill="#a08f6e" fill-opacity="0.20"/><rect x="339.9" y="150" width="3.0" height="105" fill="#a08f6e" fill-opacity="0.15"/><rect x="343.0" y="150" width="4.3" height="105" fill="#a08f6e" fill-opacity="0.18"/><rect x="353.8" y="150" width="2.3" height="105" fill="#a08f6e" fill-opacity="0.16"/><rect x="356.1" y="150" width="4.8" height="105" fill="#a08f6e" fill-opacity="0.20"/><rect x="360.8" y="150" width="3.6" height="105" fill="#a08f6e" fill-opacity="0.13"/><rect x="364.5" y="150" width="2.5" height="105" fill="#a08f6e" fill-opacity="0.11"/><rect x="371.1" y="150" width="2.5" height="105" fill="#a08f6e" fill-opacity="0.21"/><rect x="373.6" y="150" width="3.6" height="105" fill="#6e6048" fill-opacity="0.09"/><rect x="380.9" y="150" width="3.4" height="105" fill="#6e6048" fill-opacity="0.07"/><rect x="384.3" y="150" width="4.7" height="105" fill="#a08f6e" fill-opacity="0.15"/><rect x="389.0" y="150" width="4.5" height="105" fill="#a08f6e" fill-opacity="0.18"/><rect x="393.6" y="150" width="4.8" height="105" fill="#6e6048" fill-opacity="0.16"/><rect x="398.4" y="150" width="2.3" height="105" fill="#6e6048" fill-opacity="0.08"/><rect x="400.7" y="150" width="4.5" height="105" fill="#a08f6e" fill-opacity="0.14"/><rect x="410.3" y="150" width="4.9" height="105" fill="#6e6048" fill-opacity="0.12"/><rect x="415.2" y="150" width="4.2" height="105" fill="#6e6048" fill-opacity="0.10"/><rect x="419.4" y="150" width="3.2" height="105" fill="#a08f6e" fill-opacity="0.14"/><rect x="427.6" y="150" width="3.9" height="105" fill="#6e6048" fill-opacity="0.10"/><rect x="431.4" y="150" width="2.3" height="105" fill="#a08f6e" fill-opacity="0.19"/><rect x="433.7" y="150" width="4.6" height="105" fill="#a08f6e" fill-opacity="0.19"/><rect x="438.3" y="150" width="4.3" height="105" fill="#6e6048" fill-opacity="0.14"/><rect x="442.6" y="150" width="4.3" height="105" fill="#a08f6e" fill-opacity="0.17"/><rect x="446.9" y="150" width="2.8" height="105" fill="#6e6048" fill-opacity="0.15"/><rect x="449.8" y="150" width="4.1" height="105" fill="#a08f6e" fill-opacity="0.20"/><rect x="453.8" y="150" width="3.9" height="105" fill="#6e6048" fill-opacity="0.06"/><rect x="457.8" y="150" width="3.6" height="105" fill="#a08f6e" fill-opacity="0.17"/><rect x="468.7" y="150" width="3.0" height="105" fill="#6e6048" fill-opacity="0.15"/><rect x="471.8" y="150" width="4.5" height="105" fill="#a08f6e" fill-opacity="0.19"/><rect x="476.3" y="150" width="4.6" height="105" fill="#6e6048" fill-opacity="0.18"/></g>
<path d="M245 153 L476 187" stroke="#6a5c45" stroke-width="1" stroke-opacity="0.7"/><path d="M476 187 L478 231" stroke="#a89676" stroke-width="1.2" stroke-opacity="0.8"/>
<!-- left stairs -->
<polygon points="386,250 478,231 449,256 363,273" fill="#4e4e4c"/>
<polygon points="363,273 449,256 454,296" fill="#414141"/>
<polygon points="449,256 486,267 454,296" fill="#444444"/>
<!-- pad2 -->
<polygon points="682,207 796,224 796,237 677,219" fill="#5a5957"/>
<circle cx="747" cy="209" r="8.5" fill="#e4dccd" opacity="0.35"/><circle cx="747" cy="209" r="7" fill="#ddd5c6"/>
<!-- wall2 -->
<polygon points="592,208 820,243 820,346 700,318 589,282" fill="url(#w2)"/><g clip-path="url(#cw2)"><rect x="588.0" y="205" width="4.9" height="145" fill="#6e6048" fill-opacity="0.13"/><rect x="595.4" y="205" width="4.8" height="145" fill="#6e6048" fill-opacity="0.14"/><rect x="606.9" y="205" width="3.7" height="145" fill="#6e6048" fill-opacity="0.11"/><rect x="618.4" y="205" width="2.1" height="145" fill="#a08f6e" fill-opacity="0.14"/><rect x="620.5" y="205" width="4.0" height="145" fill="#a08f6e" fill-opacity="0.17"/><rect x="624.4" y="205" width="3.9" height="145" fill="#a08f6e" fill-opacity="0.14"/><rect x="628.3" y="205" width="2.7" height="145" fill="#a08f6e" fill-opacity="0.11"/><rect x="631.0" y="205" width="3.0" height="145" fill="#a08f6e" fill-opacity="0.11"/><rect x="633.9" y="205" width="2.1" height="145" fill="#6e6048" fill-opacity="0.11"/><rect x="636.0" y="205" width="3.8" height="145" fill="#6e6048" fill-opacity="0.09"/><rect x="639.9" y="205" width="4.7" height="145" fill="#a08f6e" fill-opacity="0.14"/><rect x="644.6" y="205" width="2.8" height="145" fill="#6e6048" fill-opacity="0.07"/><rect x="647.4" y="205" width="4.5" height="145" fill="#a08f6e" fill-opacity="0.10"/><rect x="651.9" y="205" width="3.8" height="145" fill="#a08f6e" fill-opacity="0.16"/><rect x="655.8" y="205" width="3.0" height="145" fill="#6e6048" fill-opacity="0.17"/><rect x="658.8" y="205" width="4.5" height="145" fill="#6e6048" fill-opacity="0.16"/><rect x="663.2" y="205" width="3.9" height="145" fill="#a08f6e" fill-opacity="0.11"/><rect x="667.2" y="205" width="3.8" height="145" fill="#6e6048" fill-opacity="0.17"/><rect x="670.9" y="205" width="4.9" height="145" fill="#6e6048" fill-opacity="0.10"/><rect x="675.9" y="205" width="4.7" height="145" fill="#a08f6e" fill-opacity="0.10"/><rect x="680.5" y="205" width="3.7" height="145" fill="#6e6048" fill-opacity="0.08"/><rect x="688.1" y="205" width="3.1" height="145" fill="#6e6048" fill-opacity="0.09"/><rect x="697.3" y="205" width="4.7" height="145" fill="#6e6048" fill-opacity="0.09"/><rect x="702.0" y="205" width="4.9" height="145" fill="#6e6048" fill-opacity="0.11"/><rect x="709.9" y="205" width="3.5" height="145" fill="#a08f6e" fill-opacity="0.15"/><rect x="713.4" y="205" width="2.4" height="145" fill="#6e6048" fill-opacity="0.11"/><rect x="718.6" y="205" width="4.5" height="145" fill="#a08f6e" fill-opacity="0.16"/><rect x="725.9" y="205" width="4.3" height="145" fill="#a08f6e" fill-opacity="0.12"/><rect x="732.7" y="205" width="2.9" height="145" fill="#6e6048" fill-opacity="0.11"/><rect x="735.6" y="205" width="3.9" height="145" fill="#6e6048" fill-opacity="0.15"/><rect x="741.9" y="205" width="2.9" height="145" fill="#6e6048" fill-opacity="0.10"/><rect x="744.8" y="205" width="2.9" height="145" fill="#6e6048" fill-opacity="0.11"/><rect x="750.8" y="205" width="3.8" height="145" fill="#a08f6e" fill-opacity="0.12"/><rect x="757.9" y="205" width="4.7" height="145" fill="#6e6048" fill-opacity="0.06"/><rect x="762.6" y="205" width="4.3" height="145" fill="#6e6048" fill-opacity="0.13"/><rect x="766.9" y="205" width="4.1" height="145" fill="#6e6048" fill-opacity="0.12"/><rect x="771.0" y="205" width="4.7" height="145" fill="#a08f6e" fill-opacity="0.14"/><rect x="775.8" y="205" width="4.6" height="145" fill="#a08f6e" fill-opacity="0.13"/><rect x="780.3" y="205" width="4.5" height="145" fill="#a08f6e" fill-opacity="0.19"/><rect x="784.8" y="205" width="4.1" height="145" fill="#6e6048" fill-opacity="0.10"/><rect x="793.2" y="205" width="2.4" height="145" fill="#6e6048" fill-opacity="0.13"/><rect x="795.7" y="205" width="3.5" height="145" fill="#a08f6e" fill-opacity="0.11"/><rect x="802.9" y="205" width="2.2" height="145" fill="#a08f6e" fill-opacity="0.19"/><rect x="805.1" y="205" width="4.4" height="145" fill="#6e6048" fill-opacity="0.07"/><rect x="820.8" y="205" width="2.7" height="145" fill="#6e6048" fill-opacity="0.17"/></g>
<polygon points="577,242.5 589,244 589,256 587,251" fill="#8a7c60"/>
<path d="M592 208 L820 243" stroke="#6a5c45" stroke-width="1" stroke-opacity="0.7"/>
<!-- right stairs -->
<polygon points="565,281 587,252 700,318 690,354" fill="#4a4a48"/>
<polygon points="565,281 690,354 562,322" fill="#3e3e3e"/><g opacity="0.45"><path d="M592.1 255.0 L570.7 284.3" stroke="#3a3a3a" stroke-width="0.9"/><path d="M597.3 258.0 L576.4 287.6" stroke="#3a3a3a" stroke-width="0.9"/><path d="M602.4 261.0 L582.0 291.0" stroke="#3a3a3a" stroke-width="0.9"/><path d="M607.5 264.0 L587.7 294.3" stroke="#3a3a3a" stroke-width="0.9"/><path d="M612.7 267.0 L593.4 297.6" stroke="#3a3a3a" stroke-width="0.9"/><path d="M617.8 270.0 L599.1 300.9" stroke="#3a3a3a" stroke-width="0.9"/><path d="M623.0 273.0 L604.8 304.2" stroke="#3a3a3a" stroke-width="0.9"/><path d="M628.1 276.0 L610.5 307.5" stroke="#3a3a3a" stroke-width="0.9"/><path d="M633.2 279.0 L616.1 310.9" stroke="#3a3a3a" stroke-width="0.9"/><path d="M638.4 282.0 L621.8 314.2" stroke="#3a3a3a" stroke-width="0.9"/><path d="M643.5 285.0 L627.5 317.5" stroke="#3a3a3a" stroke-width="0.9"/><path d="M648.6 288.0 L633.2 320.8" stroke="#3a3a3a" stroke-width="0.9"/><path d="M653.8 291.0 L638.9 324.1" stroke="#3a3a3a" stroke-width="0.9"/><path d="M658.9 294.0 L644.5 327.5" stroke="#3a3a3a" stroke-width="0.9"/><path d="M664.0 297.0 L650.2 330.8" stroke="#3a3a3a" stroke-width="0.9"/><path d="M669.2 300.0 L655.9 334.1" stroke="#3a3a3a" stroke-width="0.9"/><path d="M674.3 303.0 L661.6 337.4" stroke="#3a3a3a" stroke-width="0.9"/><path d="M679.5 306.0 L667.3 340.7" stroke="#3a3a3a" stroke-width="0.9"/><path d="M684.6 309.0 L673.0 344.0" stroke="#3a3a3a" stroke-width="0.9"/><path d="M689.7 312.0 L678.6 347.4" stroke="#3a3a3a" stroke-width="0.9"/><path d="M694.9 315.0 L684.3 350.7" stroke="#3a3a3a" stroke-width="0.9"/><path d="M368.4 271.9 L391.8 248.8" stroke="#3c3c3c" stroke-width="0.8"/><path d="M373.8 270.9 L397.5 247.6" stroke="#3c3c3c" stroke-width="0.8"/><path d="M379.1 269.8 L403.2 246.4" stroke="#3c3c3c" stroke-width="0.8"/><path d="M384.5 268.8 L409.0 245.2" stroke="#3c3c3c" stroke-width="0.8"/><path d="M389.9 267.7 L414.8 244.1" stroke="#3c3c3c" stroke-width="0.8"/><path d="M395.2 266.6 L420.5 242.9" stroke="#3c3c3c" stroke-width="0.8"/><path d="M400.6 265.6 L426.2 241.7" stroke="#3c3c3c" stroke-width="0.8"/><path d="M406.0 264.5 L432.0 240.5" stroke="#3c3c3c" stroke-width="0.8"/><path d="M411.4 263.4 L437.8 239.3" stroke="#3c3c3c" stroke-width="0.8"/><path d="M416.8 262.4 L443.5 238.1" stroke="#3c3c3c" stroke-width="0.8"/><path d="M422.1 261.3 L449.2 236.9" stroke="#3c3c3c" stroke-width="0.8"/><path d="M427.5 260.2 L455.0 235.8" stroke="#3c3c3c" stroke-width="0.8"/><path d="M432.9 259.2 L460.8 234.6" stroke="#3c3c3c" stroke-width="0.8"/><path d="M438.2 258.1 L466.5 233.4" stroke="#3c3c3c" stroke-width="0.8"/><path d="M443.6 257.1 L472.2 232.2" stroke="#3c3c3c" stroke-width="0.8"/></g>
<!-- pad3 -->
<polygon points="245,277 249,277.5 359,307.5 357,311 245,394" fill="#333333"/>
<polygon points="245,277 249,277.5 359,307.5 245,391" fill="#565554"/>
<ellipse cx="263" cy="309" rx="4.5" ry="2.5" fill="#1e1e1e"/>
<!-- pad4 -->
<polygon points="596,373 792,426 790,627 520,519" fill="#363636"/>
<polygon points="597,373 792,426 789,623 522,516" fill="#545352"/>
<circle cx="652" cy="479" r="9.5" fill="#c8c8c8"/>
<rect x="662" y="429" width="15" height="4" rx="2" fill="#1e1e1e"/>
<!-- cube -->
<polygon points="491,383.4 499.3,372.4 516.2,377.2 508.3,388.3" fill="#555555"/>
<polygon points="491,383.4 508.3,388.3 508.6,402.8 491.4,397.6" fill="#494949"/>
<polygon points="508.3,388.3 516.2,377.2 516.2,391 508.6,402.8" fill="#434343"/>
<!-- dark sphere -->
<ellipse cx="547" cy="228" rx="7" ry="3" fill="#8a7a5c" opacity="0.6"/>
<circle cx="545" cy="222" r="7" fill="url(#sph)"/>
<!-- character -->
<path d="M274 503 L281 506 L281 521 L276 520 Z" fill="#9a8866" opacity="0.7"/>
<path d="M258 505 L264 503 L272 512 L269 516 L263 515 Z" fill="#b01824"/>
<path d="M268 513 L272 511 L279 524 L276 527 Z" fill="#4a78a8"/>
<circle cx="260.5" cy="500.5" r="3.5" fill="#111"/>
<!-- icons -->
<circle cx="711" cy="100" r="11" fill="#efefef"/>
<circle cx="741" cy="100" r="11" fill="#efefef"/>
<circle cx="771" cy="100" r="11" fill="#efefef"/>
<circle cx="801" cy="100" r="11" fill="#efefef"/>
<rect x="704.6" y="94.6" width="13" height="9.5" fill="none" stroke="#8a8a8a" stroke-width="1.3"/>
<rect x="710" y="104.5" width="2.5" height="2" fill="#8a8a8a"/>
<rect x="707.5" y="106.3" width="7.5" height="1.4" fill="#8a8a8a"/>
<g stroke="#8a8a8a" stroke-width="1.2">
<path d="M741 94.5 V91.5 M741 105.5 V108.5 M735.5 100 H732.5 M746.5 100 H749.5 M737 96 L735 94 M745 104 L747 106 M745 96 L747 94 M737 104 L735 106"/>
<path d="M771 94.5 V91.5 M771 105.5 V108.5 M765.5 100 H762.5 M776.5 100 H779.5 M767 96 L765 94 M775 104 L777 106 M775 96 L777 94 M767 104 L765 106"/>
</g>
<circle cx="741" cy="100" r="3.2" fill="#8a8a8a"/>
<circle cx="771" cy="100" r="3.2" fill="#8a8a8a"/>
<rect x="794" y="95" width="10.5" height="10" rx="1" fill="#8a8a8a"/>
<path d="M804 99 L808 96 V104 L804 101 Z" fill="#8a8a8a"/>
</svg>

<div class="t" style="left:248px;top:676.30px;font-size:15px;line-height:19px;color:#1232f0;font-weight:normal;-webkit-text-stroke:0.4px #1232f0;">www.historian.by</div>
<div class="a" style="left:819px;top:81px;width:1px;height:620px;background:#4a4a4a;"></div>
<div class="a" style="left:244px;top:700px;width:576px;height:1px;background:#4a4a4a;"></div>
<div class="a" style="left:244px;top:81px;width:1px;height:620px;background:#2e2e2e;"></div>
<div class="a" style="left:826px;top:60px;width:193px;height:208px;background:#353535;"></div>
<div class="a" style="left:826px;top:60px;width:193px;height:19px;background:#0a0a0a;"></div>
<div class="t" style="left:831px;top:61.84px;font-size:12px;line-height:16px;color:#a6a6a6;font-weight:normal;">Объекты</div>
<svg class="a" style="left:972px;top:68px" width="8" height="5" viewBox="0 0 8 5"><path d="M0 0 H8 L4 4.5 Z" fill="#9a9a9a"/></svg>
<svg class="a" style="left:988px;top:64px" width="8" height="11" viewBox="0 0 8 11"><path d="M2 0.5 H6 V6 H7.5 V7.2 H0.5 V6 H2 Z" fill="none" stroke="#9a9a9a" stroke-width="1.2"/><path d="M4 7 V10.5" stroke="#9a9a9a" stroke-width="1.2"/></svg>
<svg class="a" style="left:1003px;top:65px" width="9" height="9" viewBox="0 0 9 9"><path d="M0.5 0.5 L8.5 8.5 M8.5 0.5 L0.5 8.5" stroke="#9a9a9a" stroke-width="1.8"/></svg>
<div class="a" style="left:826px;top:103px;width:193px;height:1px;background:#4a4a4a;"></div>
<svg class="a" style="left:830px;top:84px" width="15" height="15" viewBox="0 0 15 15"><path d="M1 1 L7.5 7.5" stroke="#d8d8d8" stroke-width="1"/><path d="M7.5 7.5 L13.5 13.5" stroke="#3c8fe0" stroke-width="2.6" stroke-linecap="round"/><path d="M10.2 4.8 L1.8 13.2" stroke="#f0f0f0" stroke-width="2.6" stroke-linecap="round"/><path d="M9 5 A3.6 3.6 0 0 1 12 0.4 L10.6 2.6 L12.4 4.4 L14.6 3 A3.6 3.6 0 0 1 10 6 Z" fill="#f0f0f0"/></svg>
<svg class="a" style="left:849px;top:84px" width="16" height="16" viewBox="0 0 16 16"><path d="M0 4 L6 0 L9 4 L3 8 Z" fill="#c9a62a"/><path d="M8 9 L11 7 L13 10 L10 12 Z" fill="#35b6ee"/><path d="M10 13 L13 11 L15 14 L12 16 Z" fill="#e070c0"/><path d="M5 8 V13 H9" stroke="#888" fill="none"/></svg>
<div class="a" style="left:870px;top:85px;width:1px;height:15px;background:#2a2a2a;"></div>
<svg class="a" style="left:875px;top:84px" width="16" height="16" viewBox="0 0 16 16"><path d="M1 1 H9 L13 5 V15 H1 Z" fill="#f0f0f0"/><path d="M6 13 L14 4 L16 6 L8 15 Z" fill="#e8a030"/></svg>
<svg class="a" style="left:895px;top:84px" width="16" height="16" viewBox="0 0 16 16"><rect x="4" y="1" width="12" height="11" rx="1" fill="#7aaae0"/><rect x="5" y="4" width="10" height="7" fill="#f4f4f4"/><rect x="0.5" y="4.5" width="12.5" height="11" rx="1" fill="#5a8ed8"/><rect x="1.5" y="8" width="10.5" height="6.5" fill="#ffffff"/></svg>
<div class="a" style="left:915px;top:85px;width:1px;height:15px;background:#2a2a2a;"></div>
<svg class="a" style="left:920px;top:84px" width="17" height="16" viewBox="0 0 17 16"><path d="M1 1 H9 L12 4 V15 H1 Z" fill="#f0f0f0"/><path d="M12 7 L13.3 10 L16.5 10.3 L14.1 12.4 L14.9 15.6 L12 13.9 L9.1 15.6 L9.9 12.4 L7.5 10.3 L10.7 10 Z" fill="#f5b21e"/></svg>
<svg class="a" style="left:943px;top:86px" width="12" height="12" viewBox="0 0 12 12"><path d="M1.5 1.5 L10.5 10.5 M10.5 1.5 L1.5 10.5" stroke="#7a7a7a" stroke-width="2.8"/></svg>
<svg class="a" style="left:961px;top:86px" width="16" height="12" viewBox="0 0 16 12"><rect x="0" y="0" width="16" height="12" fill="#f4f4f4"/><rect x="1" y="1" width="14" height="10" fill="#222"/><rect x="2" y="2" width="12" height="8" fill="#e8e8e8"/><path d="M3.5 3 V9 M2.5 3 H4.5 M2.5 9 H4.5" stroke="#222" stroke-width="0.8"/></svg>
<svg class="a" style="left:982px;top:84px" width="15" height="16" viewBox="0 0 15 16"><path d="M1 1 H7 L10 4 V13 H1 Z" fill="#8e8e8e"/><path d="M4 3 H10 L14 7 V16 H4 Z" fill="#a2a2a2"/><path d="M10 3 V7 H14" fill="#b8b8b8"/><rect x="6" y="9" width="6" height="1" fill="#777"/><rect x="6" y="11" width="6" height="1" fill="#777"/><rect x="6" y="13" width="6" height="1" fill="#777"/></svg>
<div class="a" style="left:826px;top:104px;width:177px;height:147px;background:#282828;"></div>
<div class="a" style="left:826px;top:104px;width:177px;height:18px;background:#3a3a3a;"></div>
<div class="a" style="left:1002px;top:104px;width:16px;height:147px;background:#2e2e2e;"></div>
<div class="a" style="left:1002px;top:120px;width:16px;height:47px;background:#3c3c3c;"></div>
<svg class="a" style="left:1006px;top:108px" width="8" height="8" viewBox="0 0 8 8"><path d="M1 5 L4 2 L7 5" stroke="#9a9a9a" stroke-width="1.3" fill="none"/></svg>
<svg class="a" style="left:1006px;top:240px" width="8" height="8" viewBox="0 0 8 8"><path d="M1 2 L4 5 L7 2" stroke="#9a9a9a" stroke-width="1.3" fill="none"/></svg>
<svg class="a" style="left:833px;top:108px" width="8" height="8" viewBox="0 0 8 8" shape-rendering="crispEdges"><rect x="0" y="0" width="8" height="8" fill="#424242"/><rect x="1" y="1" width="6" height="6" fill="#2e2e2e"/><rect x="2" y="4" width="5" height="1" fill="#bdbdbd"/></svg>
<svg class="a" style="left:847px;top:106px" width="14" height="14" viewBox="0 0 14 14"><rect x="0" y="0" width="14" height="14" fill="#7ccdf0"/><path d="M0 4.5 H14 M0 9 H14 M4.5 0 V14 M9 0 V14" stroke="#5ab0d8" stroke-width="0.6"/><rect x="0" y="6" width="3" height="8" fill="#f0c890"/><rect x="0" y="9" width="1.2" height="5" fill="#60c060"/><path d="M5 9 L6.5 6 L8 9 Z" fill="#111"/><path d="M6.5 9 V14" stroke="#a44" stroke-width="0.8"/><rect x="10" y="2" width="3" height="2.5" fill="#e22"/></svg>
<div class="t" style="left:867px;top:105.69px;font-size:11px;line-height:15px;color:#e6e6e6;font-weight:normal;">'Корень' - Scene</div>
<svg class="a" style="left:865px;top:125px" width="16" height="12" viewBox="0 0 16 12"><rect x="2" y="0" width="9" height="3" fill="#9a9a9a"/><rect x="0" y="3" width="12" height="8" fill="#8a8a8a"/><rect x="2" y="5" width="8" height="5" fill="#3aa0f0"/><path d="M12 6 L16 3 V11 L12 8 Z" fill="#8a8a8a"/></svg>
<div class="t" style="left:886px;top:123.69px;font-size:11px;line-height:15px;color:#e6e6e6;font-weight:normal;width:116px;overflow:hidden;">Camera Editor - Camera</div>
<svg class="a" style="left:865px;top:143px" width="16" height="12" viewBox="0 0 16 12"><rect x="2" y="0" width="9" height="3" fill="#9a9a9a"/><rect x="0" y="3" width="12" height="8" fill="#8a8a8a"/><rect x="2" y="5" width="8" height="5" fill="#3aa0f0"/><path d="M12 6 L16 3 V11 L12 8 Z" fill="#8a8a8a"/></svg>
<div class="t" style="left:886px;top:141.69px;font-size:11px;line-height:15px;color:#e6e6e6;font-weight:normal;width:116px;overflow:hidden;">Camera Editor 2D - Camera</div>
<svg class="a" style="left:865px;top:159px" width="13" height="16" viewBox="0 0 13 16"><circle cx="6.5" cy="6" r="5.5" fill="#f6d66a"/><circle cx="5.5" cy="5" r="2.5" fill="#fbeeb0"/><rect x="4" y="11" width="5" height="4" fill="#b8b8b8"/><path d="M4 12.5 H9 M4 14 H9" stroke="#888" stroke-width="0.6"/></svg>
<div class="t" style="left:886px;top:159.69px;font-size:11px;line-height:15px;color:#e6e6e6;font-weight:normal;width:116px;overflow:hidden;">Ambient Light - Light</div>
<svg class="a" style="left:865px;top:177px" width="13" height="16" viewBox="0 0 13 16"><circle cx="6.5" cy="6" r="5.5" fill="#f6d66a"/><circle cx="5.5" cy="5" r="2.5" fill="#fbeeb0"/><rect x="4" y="11" width="5" height="4" fill="#b8b8b8"/><path d="M4 12.5 H9 M4 14 H9" stroke="#888" stroke-width="0.6"/></svg>
<div class="t" style="left:886px;top:177.69px;font-size:11px;line-height:15px;color:#e6e6e6;font-weight:normal;width:116px;overflow:hidden;">Directional Light - Light</div>
<svg class="a" style="left:852px;top:198px" width="8" height="8" viewBox="0 0 8 8" shape-rendering="crispEdges"><rect x="0" y="0" width="8" height="8" fill="#424242"/><rect x="1" y="1" width="6" height="6" fill="#2e2e2e"/><rect x="2" y="4" width="5" height="1" fill="#bdbdbd"/><rect x="4" y="2" width="1" height="5" fill="#bdbdbd"/></svg>
<svg class="a" style="left:865px;top:195px" width="15" height="15" viewBox="0 0 15 15"><defs><linearGradient id="rg1" x1="0" y1="0" x2="1" y2="0"><stop offset="0" stop-color="#e03030"/><stop offset="0.25" stop-color="#f0e040"/><stop offset="0.5" stop-color="#40d040"/><stop offset="0.75" stop-color="#40a0f0"/><stop offset="1" stop-color="#d040d0"/></linearGradient><linearGradient id="rg2" x1="0" y1="0" x2="0" y2="1"><stop offset="0" stop-color="#fff" stop-opacity="0"/><stop offset="1" stop-color="#fff" stop-opacity="0.7"/></linearGradient></defs><rect x="0" y="0" width="15" height="15" fill="#3a8ae0"/><rect x="1" y="1" width="13" height="13" fill="#f0f6ff"/><rect x="2" y="4" width="11" height="9" fill="url(#rg1)"/><rect x="2" y="4" width="11" height="9" fill="url(#rg2)"/></svg>
<div class="t" style="left:886px;top:195.69px;font-size:11px;line-height:15px;color:#e6e6e6;font-weight:normal;width:116px;overflow:hidden;">Rendering Pipeline - Rendering</div>
<svg class="a" style="left:864px;top:214px" width="17" height="13" viewBox="0 0 17 13"><path d="M3 1 H14 Q17 1 17 6 V11 Q17 13 14 12 L11 9 H6 L3 12 Q0 13 0 11 V6 Q0 1 3 1 Z" fill="#e8e8e8"/><path d="M3 5 H6 M4.5 3.5 V6.5" stroke="#333" stroke-width="1"/><circle cx="12" cy="4.5" r="1" fill="#4a4"/><circle cx="13.5" cy="6.5" r="1" fill="#c44"/></svg>
<div class="t" style="left:886px;top:213.69px;font-size:11px;line-height:15px;color:#e6e6e6;font-weight:normal;width:116px;overflow:hidden;">Game Mode - GameMode</div>
<svg class="a" style="left:865px;top:231px" width="16" height="16" viewBox="0 0 16 16"><circle cx="8" cy="7" r="6.5" fill="#3aa0e0"/><path d="M3 5 Q6 2 9 4 Q8 8 5 9 Z M9 9 Q12 8 13 10 Q11 13 9 12 Z" fill="#5cc050"/><rect x="7" y="13" width="2" height="2" fill="#ccc"/><rect x="3" y="15" width="10" height="1" fill="#ccc"/></svg>
<div class="t" style="left:886px;top:231.69px;font-size:11px;line-height:15px;color:#e6e6e6;font-weight:normal;width:116px;overflow:hidden;">Shooter Network Logic - Logic</div>
<div class="a" style="left:826px;top:249px;width:177px;height:2px;overflow:hidden"><svg class="a" style="left:39px;top:0px" width="16" height="12" viewBox="0 0 16 12"><rect x="2" y="0" width="9" height="3" fill="#9a9a9a"/><rect x="0" y="3" width="12" height="8" fill="#8a8a8a"/><rect x="2" y="5" width="8" height="5" fill="#3aa0f0"/><path d="M12 6 L16 3 V11 L12 8 Z" fill="#8a8a8a"/></svg></div>
<div class="a" style="left:826px;top:251px;width:192px;height:16px;background:#2e2e2e;"></div>
<div class="a" style="left:842px;top:251px;width:71px;height:16px;background:#3a3a3a;"></div>
<svg class="a" style="left:829px;top:255px" width="8" height="8" viewBox="0 0 8 8"><path d="M5 1 L2 4 L5 7" stroke="#9a9a9a" stroke-width="1.3" fill="none"/></svg>
<svg class="a" style="left:989px;top:255px" width="8" height="8" viewBox="0 0 8 8"><path d="M2 1 L5 4 L2 7" stroke="#9a9a9a" stroke-width="1.3" fill="none"/></svg>
<div class="a" style="left:825px;top:59px;width:195px;height:210px;border:1px solid #4e4e4e"></div>
<div class="a" style="left:826px;top:275px;width:193px;height:425px;background:#353535;"></div>
<div class="a" style="left:826px;top:275px;width:193px;height:19px;background:#0a0a0a;"></div>
<div class="t" style="left:831px;top:276.84px;font-size:12px;line-height:16px;color:#a6a6a6;font-weight:normal;">Настройки</div>
<svg class="a" style="left:972px;top:283px" width="8" height="5" viewBox="0 0 8 5"><path d="M0 0 H8 L4 4.5 Z" fill="#9a9a9a"/></svg>
<svg class="a" style="left:988px;top:279px" width="8" height="11" viewBox="0 0 8 11"><path d="M2 0.5 H6 V6 H7.5 V7.2 H0.5 V6 H2 Z" fill="none" stroke="#9a9a9a" stroke-width="1.2"/><path d="M4 7 V10.5" stroke="#9a9a9a" stroke-width="1.2"/></svg>
<svg class="a" style="left:1003px;top:280px" width="9" height="9" viewBox="0 0 9 9"><path d="M0.5 0.5 L8.5 8.5 M8.5 0.5 L0.5 8.5" stroke="#9a9a9a" stroke-width="1.8"/></svg>
<div class="t" style="left:832px;top:299.84px;font-size:12px;line-height:16px;color:#f0f0f0;font-weight:bold;">Scene</div>
<svg class="a" style="left:998px;top:298px" width="16" height="16" viewBox="0 0 16 16"><path d="M0 4 L6 0 L9 4 L3 8 Z" fill="#c9a62a"/><path d="M8 9 L11 7 L13 10 L10 12 Z" fill="#35b6ee"/><path d="M10 13 L13 11 L15 14 L12 16 Z" fill="#e070c0"/><path d="M5 8 V13 H9" stroke="#888" fill="none"/></svg>
<div class="t" style="left:832px;top:319.84px;font-size:12px;line-height:16px;color:#e8e8e8;font-weight:normal;">Scene</div>
<div class="a" style="left:829px;top:341px;width:19px;height:20px;background:#555555;"></div>
<svg class="a" style="left:831px;top:344px" width="16" height="14" viewBox="0 0 16 14"><rect x="0.5" y="1.5" width="15" height="12" fill="#e8f0f8" stroke="#4a8ad0"/><rect x="0.5" y="1.5" width="15" height="3" fill="#6aa8e8"/><path d="M6 5 L15 2 L15 8 L8 10 Z" fill="#d89a5a"/><path d="M2 7 H5 M2 9 H5 M2 11 H5" stroke="#c44" stroke-width="0.8"/></svg>
<svg class="a" style="left:853px;top:344px" width="12" height="15" viewBox="0 0 12 15"><path d="M5 0 H12 L7 6 H10 L2 15 L4 8 H1 Z" fill="#f0c020"/></svg>
<div class="a" style="left:1002px;top:365px;width:16px;height:286px;background:#2e2e2e;"></div>
<div class="a" style="left:1002px;top:365px;width:16px;height:12px;background:#333333;"></div>
<div class="a" style="left:1002px;top:377px;width:16px;height:46px;background:#3c3c3c;"></div>
<svg class="a" style="left:1006px;top:368px" width="8" height="8" viewBox="0 0 8 8"><path d="M1 5 L4 2 L7 5" stroke="#9a9a9a" stroke-width="1.3" fill="none"/></svg>
<svg class="a" style="left:1006px;top:642px" width="8" height="8" viewBox="0 0 8 8"><path d="M1 2 L4 5 L7 2" stroke="#9a9a9a" stroke-width="1.3" fill="none"/></svg>
<div class="a" style="left:828px;top:365px;width:174px;height:17px;background:#2b2b2b;"></div>
<div class="t" style="left:831px;top:365.84px;font-size:12px;line-height:16px;color:#a6a6a6;font-weight:normal;">Компонент</div>
<div class="a" style="left:906px;top:383px;width:6px;height:92px;background:#333333;"></div>
<div class="a" style="left:828px;top:477px;width:174px;height:17px;background:#2b2b2b;"></div>
<div class="t" style="left:831px;top:477.84px;font-size:12px;line-height:16px;color:#a6a6a6;font-weight:normal;">Сцена</div>
<div class="a" style="left:906px;top:495px;width:6px;height:156px;background:#333333;"></div>
<div class="t" style="left:847px;top:387.69px;font-size:11px;line-height:15px;color:#e6e6e6;font-weight:normal;">Включено</div>
<div class="a" style="left:952px;top:388px;width:13px;height:13px;background:#222;border:1px solid #8a8a8a"></div>
<svg class="a" style="left:953px;top:390px" width="11" height="9" viewBox="0 0 11 9"><path d="M1 4.5 L4 7.5 L10 1" stroke="#fff" stroke-width="2" fill="none"/></svg>
<div class="t" style="left:847px;top:410.69px;font-size:11px;line-height:15px;color:#e6e6e6;font-weight:normal;">Name</div>
<div class="a" style="left:951px;top:409px;width:49px;height:18px;background:#2a2a2a;border:1px solid #5a5a5a"></div>
<div class="t" style="left:847px;top:433.69px;font-size:11px;line-height:15px;color:#e6e6e6;font-weight:normal;">Screen L...</div>
<div class="a" style="left:926px;top:432px;width:23px;height:18px;background:#353535;border:1px solid #555"></div>
<div class="a" style="left:951px;top:432px;width:49px;height:18px;background:#353535;border:1px solid #555"></div>
<div class="t" style="left:956px;top:434.69px;font-size:11px;line-height:15px;color:#e6e6e6;font-weight:normal;">Auto</div>
<svg class="a" style="left:987px;top:440px" width="8" height="5" viewBox="0 0 8 5"><path d="M0 0 H8 L4 4.5 Z" fill="#a0a0a0"/></svg>
<div class="t" style="left:847px;top:456.69px;font-size:11px;line-height:15px;color:#e6e6e6;font-weight:normal;">Network ...</div>
<div class="a" style="left:926px;top:455px;width:23px;height:18px;background:#353535;border:1px solid #555"></div>
<div class="a" style="left:951px;top:455px;width:49px;height:18px;background:#353535;border:1px solid #555"></div>
<div class="t" style="left:956px;top:457.69px;font-size:11px;line-height:15px;color:#e6e6e6;font-weight:normal;">True</div>
<svg class="a" style="left:987px;top:463px" width="8" height="5" viewBox="0 0 8 5"><path d="M0 0 H8 L4 4.5 Z" fill="#a0a0a0"/></svg>
<div class="t" style="left:847px;top:499.69px;font-size:11px;line-height:15px;color:#e6e6e6;font-weight:normal;">Renderin...</div>
<svg class="a" style="left:915px;top:504px" width="6" height="6" viewBox="0 0 6 6"><circle cx="3" cy="3" r="2.5" fill="#8a8a8a"/></svg>
<div class="a" style="left:926px;top:498px;width:23px;height:18px;background:#353535;border:1px solid #555"></div>
<svg class="a" style="left:935px;top:503px" width="6" height="9" viewBox="0 0 6 9"><path d="M0 0 L6 4.5 L0 9 Z" fill="#b0b0b0"/></svg>
<div class="t" style="left:955px;top:501.69px;font-size:11px;line-height:15px;color:#e6e6e6;font-weight:normal;width:39px;overflow:hidden;">Rendering</div>
<div class="a" style="left:830px;top:523px;width:14px;height:14px;background:#353535;border:1px solid #4e4e4e"></div>
<svg class="a" style="left:833px;top:526px" width="8" height="8" viewBox="0 0 8 8"><path d="M1 4 H7 M4 1 V7" stroke="#ccc" stroke-width="1"/></svg>
<div class="t" style="left:847px;top:522.69px;font-size:11px;line-height:15px;color:#e6e6e6;font-weight:normal;">Backgro...</div>
<div class="a" style="left:926px;top:521px;width:23px;height:18px;background:#353535;border:1px solid #555"></div>
<div class="a" style="left:951px;top:521px;width:27px;height:18px;background:#222;border:1px solid #5a5a5a"></div>
<div class="t" style="left:955px;top:522.84px;font-size:12px;line-height:16px;color:#e6e6e6;font-weight:normal;">1 1</div>
<div class="a" style="left:981px;top:522px;width:18px;height:16px;background:#ffffff;"></div>
<div class="t" style="left:847px;top:545.69px;font-size:11px;line-height:15px;color:#e6e6e6;font-weight:normal;">Backgro...</div>
<div class="a" style="left:926px;top:544px;width:23px;height:18px;background:#353535;border:1px solid #555"></div>
<div class="a" style="left:951px;top:544px;width:49px;height:18px;background:#222;border:1px solid #5a5a5a"></div>
<div class="t" style="left:955px;top:545.84px;font-size:12px;line-height:16px;color:#e6e6e6;font-weight:normal;">1</div>
<div class="t" style="left:847px;top:568.69px;font-size:11px;line-height:15px;color:#e6e6e6;font-weight:normal;">UI Screen</div>
<svg class="a" style="left:915px;top:573px" width="6" height="6" viewBox="0 0 6 6"><circle cx="3" cy="3" r="2.5" fill="#8a8a8a"/></svg>
<div class="a" style="left:926px;top:567px;width:23px;height:18px;background:#353535;border:1px solid #555"></div>
<svg class="a" style="left:935px;top:572px" width="6" height="9" viewBox="0 0 6 9"><path d="M0 0 L6 4.5 L0 9 Z" fill="#b0b0b0"/></svg>
<div class="t" style="left:955px;top:570.69px;font-size:11px;line-height:15px;color:#e6e6e6;font-weight:normal;width:39px;overflow:hidden;">ShooterScreen</div>
<div class="t" style="left:847px;top:591.69px;font-size:11px;line-height:15px;color:#e6e6e6;font-weight:normal;">Mode</div>
<div class="a" style="left:926px;top:590px;width:23px;height:18px;background:#353535;border:1px solid #555"></div>
<div class="a" style="left:951px;top:590px;width:49px;height:18px;background:#353535;border:1px solid #555"></div>
<div class="t" style="left:956px;top:592.69px;font-size:11px;line-height:15px;color:#e6e6e6;font-weight:normal;">3D</div>
<svg class="a" style="left:987px;top:598px" width="8" height="5" viewBox="0 0 8 5"><path d="M0 0 H8 L4 4.5 Z" fill="#a0a0a0"/></svg>
<div class="t" style="left:847px;top:614.69px;font-size:11px;line-height:15px;color:#e6e6e6;font-weight:normal;">Screen ...</div>
<div class="a" style="left:926px;top:613px;width:23px;height:18px;background:#353535;border:1px solid #555"></div>
<div class="a" style="left:951px;top:613px;width:49px;height:18px;background:#353535;border:1px solid #555"></div>
<div class="t" style="left:956px;top:615.69px;font-size:11px;line-height:15px;color:#e6e6e6;font-weight:normal;">Un...</div>
<svg class="a" style="left:987px;top:621px" width="8" height="5" viewBox="0 0 8 5"><path d="M0 0 H8 L4 4.5 Z" fill="#a0a0a0"/></svg>
<div class="a" style="left:826px;top:630px;width:176px;height:21px;overflow:hidden">
</div>
<div class="t" style="left:846px;top:637.69px;font-size:11px;line-height:15px;color:#e6e6e6;font-weight:normal;">Camera ...</div>
<svg class="a" style="left:915px;top:641px" width="6" height="6" viewBox="0 0 6 6"><circle cx="3" cy="3" r="2.5" fill="#8a8a8a"/></svg>
<div class="a" style="left:926px;top:636px;width:23px;height:15px;overflow:hidden;border:1px solid #555;border-bottom:none"></div>
<svg class="a" style="left:935px;top:641px" width="6" height="9" viewBox="0 0 6 9"><path d="M0 0 L6 4.5 L0 9 Z" fill="#b0b0b0"/></svg>
<div class="t" style="left:955px;top:639.69px;font-size:11px;line-height:15px;color:#e6e6e6;font-weight:normal;width:39px;overflow:hidden;">Camera</div>
<div class="a" style="left:994px;top:640px;width:1px;height:11px;background:#3a6ac0;"></div>
<div class="a" style="left:826px;top:651px;width:176px;height:6px;background:#353535;"></div>
<div class="a" style="left:833px;top:659px;width:93px;height:26px;background:#353535;border:1px solid #5a5a5a"></div>
<div class="t" style="left:868px;top:663.84px;font-size:12px;line-height:16px;color:#e6e6e6;font-weight:normal;">Info</div>
<div class="a" style="left:825px;top:274px;width:195px;height:427px;border:1px solid #4e4e4e"></div>
<div class="t" style="left:12px;top:706.84px;font-size:12px;line-height:16px;color:#f0f0f0;font-weight:normal;">Логи</div>
<div class="t" style="left:49px;top:706.84px;font-size:12px;line-height:16px;color:#f0f0f0;font-weight:normal;">Вывод</div>
<div class="t" style="left:94px;top:706.84px;font-size:12px;line-height:16px;color:#f0f0f0;font-weight:normal;">Отладка</div>
</body></html>
